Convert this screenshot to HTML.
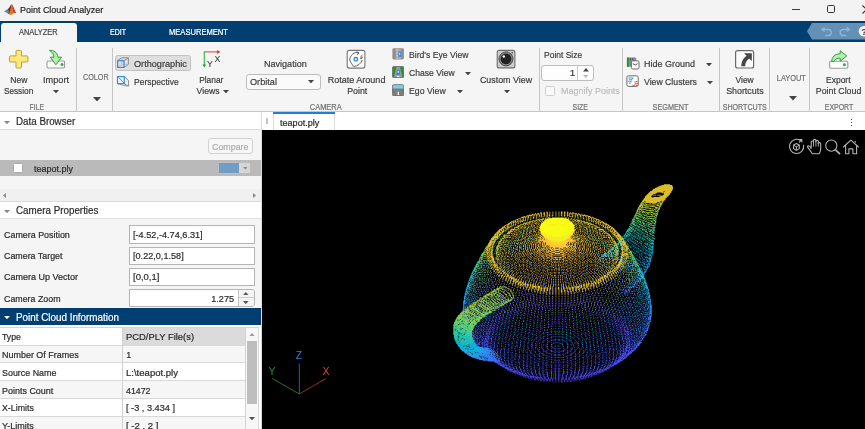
<!DOCTYPE html>
<html><head><meta charset="utf-8"><title>Point Cloud Analyzer</title>
<style>
html,body{margin:0;padding:0;background:#f5f5f5;}
body{width:865px;height:429px;position:relative;overflow:hidden;font-family:"Liberation Sans",sans-serif;}
.t{position:absolute;white-space:pre;line-height:20px;-webkit-text-stroke:0.2px currentColor;}
.pl{mix-blend-mode:plus-lighter}
.r{position:absolute;box-sizing:border-box;display:block;}
</style></head><body>
<div class="r" style="left:0.00px;top:0.00px;width:865.00px;height:21.00px;background:#f3f3f3;"></div>
<svg class="r" style="left:3.50px;top:3.90px" width="12.6" height="11.8" viewBox="0 0 12.6 11.8"><path d="M0 7.2 L3.3 5.6 L5.4 7.6 L3.6 9.2Z" fill="#3f8fd6"/>
<path d="M3.3 5.6 C5.2 4.6 6.3 1.2 7.6 0.2 L6.6 8.4 L5.0 9.9 L3.6 9.2 L5.4 7.6Z" fill="#7a2a1c"/>
<path d="M7.6 0.2 C8.8 0.4 10.4 6.5 12.4 9.4 C10.8 8.6 9.8 8.9 8.6 10.0 C7.6 10.9 6.4 11.9 5.0 9.9 C6.4 8.6 6.9 3.0 7.6 0.2Z" fill="#e8742a"/>
<path d="M7.6 0.2 C8.8 0.4 10.4 6.5 12.4 9.4 C10.9 8.4 9.9 8.4 9.2 8.9 C8.9 5.5 8.2 2.0 7.6 0.2Z" fill="#c8402a"/>
<path d="M5.0 9.9 C6.0 11.6 7.2 11.2 8.2 10.3 C7.2 10.5 6.2 10.2 5.6 9.3Z" fill="#f5a623"/></svg>
<span class="t" style="left:19.90px;top:0px;font-size:9.6px;color:#222;transform:scaleX(0.9336);transform-origin:0 50%;">Point Cloud Analyzer</span>
<div class="r" style="left:792.00px;top:9.00px;width:8.00px;height:1.00px;background:#3a3a3a;"></div>
<div class="r" style="left:826.90px;top:5.40px;width:8.00px;height:7.80px;border:1.1px solid #333;border-radius:1.6px;"></div>
<svg class="r" style="left:862.40px;top:5.20px" width="9" height="9" viewBox="0 0 9 9"><path d="M0.5 0.5L8.5 8.5M8.5 0.5L0.5 8.5" stroke="#333" stroke-width="1.1"/></svg>
<div class="r" style="left:0.00px;top:20.50px;width:865.00px;height:21.40px;background:#013f73;"></div>
<div class="r" style="left:1.00px;top:23.00px;width:75.50px;height:20.00px;background:#f5f5f5;border-radius:3px 3px 0 0;"></div>
<span class="t" style="left:18.90px;top:22px;font-size:8.3px;color:#444;transform:scaleX(0.8911);transform-origin:0 50%;">ANALYZER</span>
<span class="t" style="left:110.00px;top:22px;font-size:8.3px;color:#fff;transform:scaleX(0.8463);transform-origin:0 50%;">EDIT</span>
<span class="t" style="left:168.60px;top:22px;font-size:8.3px;color:#fff;transform:scaleX(0.9139);transform-origin:0 50%;">MEASUREMENT</span>
<svg class="r" style="left:807.00px;top:23.30px" width="58" height="16.6" viewBox="0 0 58 16.6"><path d="M5 0H58V16.6H5L0 8.3Z" fill="#6590b6"/><g fill="none" stroke="#8fb2d1" stroke-width="1.5"><path d="M16.4 6.4H21.2A3 3 0 0 1 21.2 12.4H18.2"/><path d="M41 6.4H36.2A3 3 0 0 0 36.2 12.4H39.2"/></g><path d="M13.8 6.4L17.6 3.6V9.2Z" fill="#8fb2d1"/><path d="M43.6 6.4L39.8 3.6V9.2Z" fill="#8fb2d1"/><circle cx="57" cy="8.3" r="5.3" fill="#f1f5f9"/><text x="54.2" y="11.6" font-size="9.5" font-weight="bold" fill="#3a3a3a" font-family="Liberation Sans">?</text></svg>
<div class="r" style="left:0.00px;top:41.90px;width:865.00px;height:69.60px;background:#f5f5f5;"></div>
<div class="r" style="left:0.00px;top:110.70px;width:865.00px;height:2.10px;background:#c6c6c6;"></div>
<div class="r" style="left:76.00px;top:48.00px;width:1.10px;height:63.00px;background:#c6c6c6;"></div>
<div class="r" style="left:112.00px;top:48.00px;width:1.10px;height:63.00px;background:#c6c6c6;"></div>
<div class="r" style="left:539.10px;top:48.00px;width:1.10px;height:63.00px;background:#c6c6c6;"></div>
<div class="r" style="left:621.90px;top:48.00px;width:1.10px;height:63.00px;background:#c6c6c6;"></div>
<div class="r" style="left:719.30px;top:48.00px;width:1.10px;height:63.00px;background:#c6c6c6;"></div>
<div class="r" style="left:769.40px;top:48.00px;width:1.10px;height:63.00px;background:#c6c6c6;"></div>
<div class="r" style="left:809.00px;top:48.00px;width:1.10px;height:63.00px;background:#c6c6c6;"></div>
<span class="t" style="left:8.70px;top:70px;font-size:9.9px;color:#3a3a3a;transform:scaleX(0.8634);transform-origin:50% 50%;">New</span>
<span class="t" style="left:1.29px;top:81px;font-size:9.9px;color:#3a3a3a;transform:scaleX(0.8348);transform-origin:50% 50%;">Session</span>
<span class="t" style="left:41.87px;top:70px;font-size:9.9px;color:#3a3a3a;transform:scaleX(0.9303);transform-origin:50% 50%;">Import</span>
<svg class="r" style="left:52.70px;top:89.50px" width="6" height="3.4" viewBox="0 0 6 3.4"><path d="M0 0H6 L3 3.4Z" fill="#444"/></svg>
<span class="t" style="left:28.24px;top:97px;font-size:8.3px;color:#707070;transform:scaleX(0.8159);transform-origin:50% 50%;">FILE</span>
<span class="t" style="left:81.04px;top:67px;font-size:8.3px;color:#707070;transform:scaleX(0.8707);transform-origin:50% 50%;">COLOR</span>
<svg class="r" style="left:93.40px;top:96.50px" width="8" height="4.6" viewBox="0 0 8 4.6"><path d="M0 0H8 L4 4.6Z" fill="#444"/></svg>
<div class="r" style="left:115.00px;top:55.30px;width:75.60px;height:16.00px;background:#dedede;border:1px solid #c2c2c2;border-radius:2.5px;"></div>
<span class="t" style="left:133.60px;top:54px;font-size:9.9px;color:#3a3a3a;transform:scaleX(0.9262);transform-origin:0 50%;">Orthographic</span>
<span class="t" style="left:133.60px;top:72px;font-size:9.9px;color:#3a3a3a;transform:scaleX(0.8662);transform-origin:0 50%;">Perspective</span>
<span class="t" style="left:197.09px;top:70px;font-size:9.9px;color:#3a3a3a;transform:scaleX(0.8492);transform-origin:50% 50%;">Planar</span>
<span class="t" style="left:194.79px;top:81px;font-size:9.9px;color:#3a3a3a;transform:scaleX(0.8769);transform-origin:50% 50%;">Views</span>
<svg class="r" style="left:222.60px;top:89.70px" width="6" height="3.4" viewBox="0 0 6 3.4"><path d="M0 0H6 L3 3.4Z" fill="#444"/></svg>
<span class="t" style="left:262.01px;top:54px;font-size:9.9px;color:#3a3a3a;transform:scaleX(0.9171);transform-origin:50% 50%;">Navigation</span>
<div class="r" style="left:246.40px;top:73.60px;width:75.00px;height:16.60px;background:#fafafa;border:1px solid #bdbdbd;border-radius:3px;"></div>
<span class="t" style="left:250.00px;top:72px;font-size:9.9px;color:#3a3a3a;transform:scaleX(0.9260);transform-origin:0 50%;">Orbital</span>
<svg class="r" style="left:308.20px;top:79.90px" width="6" height="3.4" viewBox="0 0 6 3.4"><path d="M0 0H6 L3 3.4Z" fill="#444"/></svg>
<span class="t" style="left:324.65px;top:70px;font-size:9.9px;color:#3a3a3a;transform:scaleX(0.9132);transform-origin:50% 50%;">Rotate Around</span>
<span class="t" style="left:346.32px;top:81px;font-size:9.9px;color:#3a3a3a;transform:scaleX(0.8908);transform-origin:50% 50%;">Point</span>
<span class="t" style="left:408.90px;top:45px;font-size:9.9px;color:#3a3a3a;transform:scaleX(0.8743);transform-origin:0 50%;">Bird's Eye View</span>
<span class="t" style="left:408.90px;top:63px;font-size:9.9px;color:#3a3a3a;transform:scaleX(0.8681);transform-origin:0 50%;">Chase View</span>
<svg class="r" style="left:465.00px;top:71.70px" width="6" height="3.4" viewBox="0 0 6 3.4"><path d="M0 0H6 L3 3.4Z" fill="#444"/></svg>
<span class="t" style="left:408.90px;top:81px;font-size:9.9px;color:#3a3a3a;transform:scaleX(0.8837);transform-origin:0 50%;">Ego View</span>
<svg class="r" style="left:456.70px;top:89.50px" width="6" height="3.4" viewBox="0 0 6 3.4"><path d="M0 0H6 L3 3.4Z" fill="#444"/></svg>
<span class="t" style="left:477.23px;top:70px;font-size:9.9px;color:#3a3a3a;transform:scaleX(0.8979);transform-origin:50% 50%;">Custom View</span>
<svg class="r" style="left:503.50px;top:89.50px" width="6" height="3.4" viewBox="0 0 6 3.4"><path d="M0 0H6 L3 3.4Z" fill="#444"/></svg>
<span class="t" style="left:308.24px;top:97px;font-size:8.3px;color:#707070;transform:scaleX(0.9011);transform-origin:50% 50%;">CAMERA</span>
<span class="t" style="left:544.30px;top:45px;font-size:9.9px;color:#3a3a3a;transform:scaleX(0.8593);transform-origin:0 50%;">Point Size</span>
<div class="r" style="left:541.40px;top:64.60px;width:53.00px;height:16.20px;background:#fdfdfd;border:1px solid #bdbdbd;border-radius:3px;"></div>
<div class="r" style="left:577.00px;top:65.20px;width:1.00px;height:15.00px;background:#c9c9c9;"></div>
<span class="t" style="left:569.79px;top:63px;font-size:9.9px;color:#3a3a3a;">1</span>
<svg class="r" style="left:582.50px;top:68.20px" width="6" height="3.4" viewBox="0 0 6 3.4"><path d="M0 3.4L3 0L6 3.4Z" fill="#444"/></svg>
<svg class="r" style="left:582.80px;top:74.60px" width="5.4" height="3" viewBox="0 0 5.4 3"><path d="M0 0L2.7 3L5.4 0Z" fill="#bdbdbd"/></svg>
<div class="r" style="left:545.30px;top:86.20px;width:9.60px;height:9.60px;background:#fafafa;border:1px solid #cfcfcf;border-radius:1.5px;"></div>
<span class="t" style="left:560.50px;top:81px;font-size:9.9px;color:#bcbcbc;transform:scaleX(0.9087);transform-origin:0 50%;">Magnify Points</span>
<span class="t" style="left:571.48px;top:97px;font-size:8.3px;color:#707070;transform:scaleX(0.8294);transform-origin:50% 50%;">SIZE</span>
<span class="t" style="left:643.60px;top:54px;font-size:9.9px;color:#3a3a3a;transform:scaleX(0.9104);transform-origin:0 50%;">Hide Ground</span>
<svg class="r" style="left:705.60px;top:62.90px" width="6" height="3.4" viewBox="0 0 6 3.4"><path d="M0 0H6 L3 3.4Z" fill="#444"/></svg>
<span class="t" style="left:643.60px;top:72px;font-size:9.9px;color:#3a3a3a;transform:scaleX(0.8801);transform-origin:0 50%;">View Clusters</span>
<svg class="r" style="left:707.20px;top:80.90px" width="6" height="3.4" viewBox="0 0 6 3.4"><path d="M0 0H6 L3 3.4Z" fill="#444"/></svg>
<span class="t" style="left:649.98px;top:97px;font-size:8.3px;color:#707070;transform:scaleX(0.8771);transform-origin:50% 50%;">SEGMENT</span>
<span class="t" style="left:733.96px;top:70px;font-size:9.9px;color:#3a3a3a;transform:scaleX(0.8553);transform-origin:50% 50%;">View</span>
<span class="t" style="left:723.89px;top:81px;font-size:9.9px;color:#3a3a3a;transform:scaleX(0.8968);transform-origin:50% 50%;">Shortcuts</span>
<span class="t" style="left:719.05px;top:97px;font-size:8.3px;color:#707070;transform:scaleX(0.8584);transform-origin:50% 50%;">SHORTCUTS</span>
<span class="t" style="left:774.90px;top:68px;font-size:8.3px;color:#707070;transform:scaleX(0.8898);transform-origin:50% 50%;">LAYOUT</span>
<svg class="r" style="left:788.60px;top:96.30px" width="8" height="4.6" viewBox="0 0 8 4.6"><path d="M0 0H8 L4 4.6Z" fill="#444"/></svg>
<span class="t" style="left:824.39px;top:70px;font-size:9.9px;color:#3a3a3a;transform:scaleX(0.8598);transform-origin:50% 50%;">Export</span>
<span class="t" style="left:813.31px;top:81px;font-size:9.9px;color:#3a3a3a;transform:scaleX(0.8910);transform-origin:50% 50%;">Point Cloud</span>
<span class="t" style="left:821.71px;top:97px;font-size:8.3px;color:#707070;transform:scaleX(0.8388);transform-origin:50% 50%;">EXPORT</span>
<svg class="r" style="left:8.00px;top:49.00px" width="22" height="21" viewBox="0 0 22 21"><g transform="translate(-8 -49)"><path d="M16.9 50.4H20.6Q21.5 50.4 21.5 51.3V55.9H27Q27.9 55.9 27.9 56.8V61.1Q27.9 62 27 62H21.5V67.1Q21.5 68 20.6 68H16.9Q16 68 16 67.1V62H10.4Q9.5 62 9.5 61.1V56.8Q9.5 55.9 10.4 55.9H16V51.3Q16 50.4 16.9 50.4Z" fill="#fbe97c" stroke="#bd9f3a" stroke-width="1"/></g></svg>
<svg class="r" style="left:45.00px;top:48.00px" width="22" height="22" viewBox="0 0 22 22"><g transform="translate(-45 -48)"><rect x="47" y="61" width="17.6" height="7" rx="1.2" fill="#fff" stroke="#9a9a9a" stroke-width="1.1"/><path d="M49.4 50.4C53.6 50.2 57.6 52.2 57.9 57.2L61.6 57.2L55.9 64.8L50.3 57.2L54 57.2C53.8 54.2 52.2 52 49.4 50.4Z" fill="#b4eeb0" stroke="#27a23a" stroke-width="1" stroke-linejoin="round"/><circle cx="62" cy="64.6" r="1.25" fill="#35b04a" stroke="#1f8e33" stroke-width=".5"/></g></svg>
<svg class="r" style="left:116.00px;top:56.00px" width="14" height="14" viewBox="0 0 14 14"><g transform="translate(-116 -56)"><g fill="none" stroke-width="1"><path d="M117.6 60.7L121.8 57.8H128.4V64.4L124 67.4M128.4 57.8L124 60.7" stroke="#8c8c8c"/><path d="M117.6 67.4L121.6 64.6M121.8 58.2V64.4H128" stroke="#b5b5b5" stroke-width=".7"/><rect x="117.6" y="60.7" width="6.4" height="6.7" stroke="#2e8ddf" stroke-width="1.15"/></g></g></svg>
<svg class="r" style="left:116.00px;top:74.00px" width="14" height="14" viewBox="0 0 14 14"><g transform="translate(-116 -74)"><g fill="none" stroke-width="1"><path d="M124.2 76.6L128.6 80.6V86L124.2 83.8" stroke="#8c8c8c"/><path d="M117.6 83.6L124.8 85.8L128.6 86" stroke="#8c8c8c" stroke-width=".9"/><rect x="117.5" y="76.6" width="6.8" height="7" stroke="#2e8ddf" stroke-width="1.15"/><path d="M118.6 77.4L125.2 84.2" stroke="#2e8ddf" stroke-width=".9"/></g></g></svg>
<svg class="r" style="left:201.00px;top:48.00px" width="22" height="22" viewBox="0 0 22 22"><g transform="translate(-201 -48)"><path d="M204.3 51.9H218" stroke="#f0483a" stroke-width="1.1"/><path d="M217.2 50L220.3 51.9L217.2 53.8Z" fill="#e8281c"/><path d="M204.3 51.4V65" stroke="#2db83a" stroke-width="1.1"/><path d="M202.4 64.4L204.3 67.6L206.2 64.4Z" fill="#1fa82c"/><g font-family="Liberation Sans" font-size="8.8" fill="#2a2a2a"><text x="214.5" y="61.8">X</text><text x="206.9" y="67.4">Y</text></g></g></svg>
<svg class="r" style="left:346.00px;top:49.00px" width="20" height="20" viewBox="0 0 20 20"><g transform="translate(-346 -49)"><rect x="347.2" y="50.4" width="17.7" height="17.7" rx="2" fill="#fdfdfd" stroke="#777" stroke-width="1.1"/><g fill="none" stroke="#505050" stroke-width=".9" stroke-linecap="round"><path d="M353.2 53.6C354.8 52.4 357 52.2 358.8 53"/><path d="M357 51.8L359 53.1L357.2 54.6"/><path d="M352.6 54.2C350.6 55.8 349.2 58.4 350 60.6C350.8 62.8 352.2 64 353.2 66.2"/><path d="M354.2 66.4C357.6 66.2 361.2 63.6 362 60.4"/><path d="M362.2 55C361 56 360.6 57.4 361 58.8"/><path d="M362.6 57.2C361.8 57.4 361.3 57.9 361.1 58.7"/></g><circle cx="355.8" cy="59.3" r="1.8" fill="#fff" stroke="#2f86d8" stroke-width="1.3"/></g></svg>
<svg class="r" style="left:392.00px;top:48.00px" width="12.4" height="12" viewBox="0 0 12.4 12"><g transform="translate(-392 -48)"><rect x="392.4" y="48.2" width="11.5" height="11.2" rx="1.4" fill="#8e8e8e"/><rect x="395.6" y="48.2" width="5.4" height="11.2" fill="#a9a9a9"/><path d="M397 49V58.8" stroke="#eee" stroke-width=".8" stroke-dasharray="1.6 1.4"/><rect x="398.5" y="51.4" width="2.5" height="5.4" rx=".8" fill="#2f7fe0"/><rect x="399.2" y="52.6" width="1.1" height="2.6" fill="#cfe4fa"/></g></svg>
<svg class="r" style="left:392.00px;top:66.00px" width="12.4" height="12" viewBox="0 0 12.4 12"><g transform="translate(-392 -66)"><rect x="392.4" y="66.5" width="11.5" height="11.2" rx="1.4" fill="#2f8f2f"/><path d="M396.6 66.5H399.8L402.6 77.7H393.8Z" fill="#9a9a9a"/><rect x="396.7" y="70" width="3" height="5.4" rx="1" fill="#2f7fe0"/><rect x="397.5" y="71" width="1.4" height="1.8" fill="#cfe4fa"/><rect x="397" y="75.6" width="2.4" height="1.6" fill="#f3f3f3"/><rect x="392.4" y="66.5" width="11.5" height="11.2" rx="1.4" fill="none" stroke="#666" stroke-width=".7"/></g></svg>
<svg class="r" style="left:392.00px;top:84.00px" width="12.4" height="12.4" viewBox="0 0 12.4 12.4"><g transform="translate(-392 -84)"><rect x="392.4" y="84.7" width="11.5" height="11.3" rx="1.4" fill="#7d7d7d"/><path d="M392.4 86.1Q392.4 84.7 393.8 84.7H402.5Q403.9 84.7 403.9 86.1V88.8H392.4Z" fill="#84c9f2"/><path d="M392.4 88.8H403.9V93L401 88.9H395.4L392.4 93Z" fill="#3f9f3f"/><rect x="397.6" y="91.8" width="1.3" height="3.4" fill="#f3f3f3"/><rect x="392.4" y="84.7" width="11.5" height="11.3" rx="1.4" fill="none" stroke="#666" stroke-width=".7"/></g></svg>
<svg class="r" style="left:496.00px;top:49.00px" width="20" height="20" viewBox="0 0 20 20"><g transform="translate(-496 -49)"><rect x="497.2" y="50.4" width="17.7" height="17.5" rx="2" fill="#cdcdcd" stroke="#6e6e6e" stroke-width="1.1"/><circle cx="506" cy="58.9" r="7" fill="#8c8c8c" stroke="#4a4a4a" stroke-width="1"/><circle cx="506" cy="58.9" r="5.4" fill="#222"/><circle cx="503.8" cy="56.6" r="1.25" fill="#fff"/><circle cx="512.2" cy="52.8" r=".85" fill="#555"/></g></svg>
<svg class="r" style="left:626.00px;top:56.00px" width="14" height="14" viewBox="0 0 14 14"><g transform="translate(-626 -56)"><rect x="626.9" y="57.5" width="9.3" height="9.3" rx="1" fill="#8a8a8a"/><rect x="626.9" y="57.5" width="2" height="9.3" fill="#2f8f45"/><path d="M630.4 57.8V60.4M632.6 57.8V60.4" stroke="#555" stroke-width=".8"/><rect x="631.4" y="60.8" width="7.6" height="8.2" rx="1.4" fill="#fafafa" stroke="#6a6a6a" stroke-width="1"/><path d="M632.8 63.6Q635.2 66.6 637.6 63.6" fill="none" stroke="#555" stroke-width="1"/></g></svg>
<svg class="r" style="left:626.00px;top:75.00px" width="14" height="13" viewBox="0 0 14 13"><g transform="translate(-626 -75)"><rect x="626.9" y="75.8" width="11.3" height="10.6" rx="1.6" fill="#fdfdfd" stroke="#6a6a6a" stroke-width="1"/><g fill="#2f7fe0"><rect x="628.6" y="77.4" width="1.25" height="1.25"/><rect x="630.4" y="77.2" width="1.25" height="1.25"/><rect x="632" y="77.6" width="1.25" height="1.25"/><rect x="629.4" y="79" width="1.25" height="1.25"/><rect x="631" y="79.2" width="1.25" height="1.25"/><rect x="628.4" y="80.6" width="1.25" height="1.25"/><rect x="630.2" y="81" width="1.25" height="1.25"/><rect x="629.2" y="82.6" width="1.25" height="1.25"/></g><g fill="#e8562a"><rect x="634.4" y="81.4" width="1.25" height="1.25"/><rect x="636" y="81" width="1.25" height="1.25"/><rect x="635.2" y="83" width="1.25" height="1.25"/><rect x="636.6" y="83" width="1.25" height="1.25"/><rect x="634" y="84.4" width="1.25" height="1.25"/><rect x="635.8" y="84.6" width="1.25" height="1.25"/><rect x="632.4" y="84.8" width="1.25" height="1.25"/></g></g></svg>
<svg class="r" style="left:734.00px;top:49.00px" width="21" height="20" viewBox="0 0 21 20"><g transform="translate(-734 -49)"><rect x="735.6" y="50.6" width="18" height="17.4" rx="2" fill="#fbfbfb" stroke="#6a6a6a" stroke-width="1.2"/><path d="M744 53.2H751.8V61L749.2 58.4C746.6 60.2 745.2 62.6 745.2 66.2H741.2C741.4 61.6 743.2 58 746.6 55.8Z" fill="#454545"/></g></svg>
<svg class="r" style="left:828.00px;top:49.00px" width="22" height="21" viewBox="0 0 22 21"><g transform="translate(-828 -49)"><rect x="829.6" y="61.2" width="18.2" height="7" rx="1.2" fill="#fff" stroke="#9a9a9a" stroke-width="1.1"/><path d="M831.8 61.6C831.6 57 835 53.8 840.2 53.8V50.8L846.8 56L840.2 61.2V58.2C837.4 58 835 59 833.6 61.6Z" fill="#b4eeb0" stroke="#27a23a" stroke-width="1" stroke-linejoin="round"/><circle cx="844.4" cy="64.7" r="1.25" fill="#35b04a" stroke="#1f8e33" stroke-width=".5"/></g></svg>
<div class="r" style="left:0.00px;top:112.20px;width:261.00px;height:317.00px;background:#f5f5f5;"></div>
<div class="r" style="left:261.00px;top:112.20px;width:1.00px;height:317.00px;background:#dcdcdc;"></div>
<div class="r" style="left:0.00px;top:112.20px;width:261.00px;height:17.20px;background:#ffffff;"></div>
<div class="r" style="left:0.00px;top:129.30px;width:261.00px;height:1.00px;background:#dadada;"></div>
<svg class="r" style="left:4.10px;top:120.90px" width="6" height="3.2" viewBox="0 0 6 3.2"><path d="M0 0H6 L3 3.2Z" fill="#868686"/></svg>
<span class="t" style="left:16.20px;top:112px;font-size:10.4px;color:#2a2a2a;transform:scaleX(0.9413);transform-origin:0 50%;">Data Browser</span>
<div class="r" style="left:208.20px;top:138.40px;width:44.60px;height:16.00px;background:#f7f7f7;border:1px solid #d2d2d2;border-radius:3px;"></div>
<span class="t" style="left:212.30px;top:137px;font-size:8.9px;color:#ababab;transform:scaleX(0.9972);transform-origin:50% 50%;">Compare</span>
<div class="r" style="left:0.00px;top:160.40px;width:261.00px;height:15.40px;background:#bababa;"></div>
<div class="r" style="left:12.50px;top:162.60px;width:10.40px;height:10.40px;background:#ffffff;border:1px solid #a9a9a9;border-radius:1.5px;"></div>
<span class="t" style="left:34.30px;top:159px;font-size:9.0px;color:#2a2a2a;transform:scaleX(0.9994);transform-origin:0 50%;">teapot.ply</span>
<div class="r" style="left:217.60px;top:161.80px;width:33.60px;height:12.60px;background:#d6d6d6;border:1px solid #bdbdbd;border-radius:2px;"></div>
<div class="r" style="left:218.60px;top:162.80px;width:20.40px;height:10.60px;background:#6f9dc6;"></div>
<svg class="r" style="left:242.60px;top:167.10px" width="4.6" height="2.6" viewBox="0 0 4.6 2.6"><path d="M0 0H4.6 L2.3 2.6Z" fill="#8a8a8a"/></svg>
<div class="r" style="left:0.00px;top:189.00px;width:261.00px;height:12.60px;background:#f0f0f0;"></div>
<svg class="r" style="left:3.00px;top:192.60px" width="3" height="5" viewBox="0 0 3 5"><path d="M3 0L0 2.5L3 5Z" fill="#8a8a8a"/></svg>
<svg class="r" style="left:252.60px;top:192.60px" width="3" height="5" viewBox="0 0 3 5"><path d="M0 0L3 2.5L0 5Z" fill="#8a8a8a"/></svg>
<div class="r" style="left:0.00px;top:201.60px;width:261.00px;height:16.80px;background:#ffffff;"></div>
<div class="r" style="left:0.00px;top:201.00px;width:261.00px;height:1.00px;background:#dadada;"></div>
<div class="r" style="left:0.00px;top:218.00px;width:261.00px;height:1.00px;background:#e2e2e2;"></div>
<svg class="r" style="left:4.10px;top:209.60px" width="6" height="3.2" viewBox="0 0 6 3.2"><path d="M0 0H6 L3 3.2Z" fill="#868686"/></svg>
<span class="t" style="left:16.20px;top:201px;font-size:10.4px;color:#2a2a2a;transform:scaleX(0.9453);transform-origin:0 50%;">Camera Properties</span>
<span class="t" style="left:3.90px;top:225px;font-size:9.0px;color:#2a2a2a;transform:scaleX(0.9891);transform-origin:0 50%;">Camera Position</span>
<div class="r" style="left:129.00px;top:225.20px;width:126.20px;height:18.40px;background:#ffffff;border:1px solid #b4b4b4;"></div>
<span class="t" style="left:133.30px;top:225px;font-size:9.6px;color:#2a2a2a;transform:scaleX(0.9534);transform-origin:0 50%;">[-4.52,-4.74,6.31]</span>
<span class="t" style="left:3.90px;top:246px;font-size:9.0px;color:#2a2a2a;transform:scaleX(0.9856);transform-origin:0 50%;">Camera Target</span>
<div class="r" style="left:129.00px;top:246.50px;width:126.20px;height:18.40px;background:#ffffff;border:1px solid #b4b4b4;"></div>
<span class="t" style="left:133.30px;top:246px;font-size:9.6px;color:#2a2a2a;transform:scaleX(0.9499);transform-origin:0 50%;">[0.22,0,1.58]</span>
<span class="t" style="left:3.90px;top:267px;font-size:9.0px;color:#2a2a2a;transform:scaleX(0.9996);transform-origin:0 50%;">Camera Up Vector</span>
<div class="r" style="left:129.00px;top:267.50px;width:126.20px;height:18.40px;background:#ffffff;border:1px solid #b4b4b4;"></div>
<span class="t" style="left:133.30px;top:267px;font-size:9.6px;color:#2a2a2a;transform:scaleX(0.9856);transform-origin:0 50%;">[0,0,1]</span>
<span class="t" style="left:3.90px;top:289px;font-size:9.0px;color:#2a2a2a;transform:scaleX(0.9824);transform-origin:0 50%;">Camera Zoom</span>
<div class="r" style="left:129.00px;top:288.80px;width:126.20px;height:18.40px;background:#ffffff;border:1px solid #b4b4b4;border-radius:0 3px 3px 0;"></div>
<span class="t" style="left:210.18px;top:289px;font-size:9.6px;color:#2a2a2a;transform:scaleX(0.9492);transform-origin:100% 50%;">1.275</span>
<div class="r" style="left:237.80px;top:289.60px;width:16.60px;height:16.80px;background:#f4f4f4;border-left:1px solid #c4c4c4;border-radius:0 2px 2px 0;"></div>
<div class="r" style="left:238.60px;top:297.20px;width:15.80px;height:1.00px;background:#cdcdcd;"></div>
<svg class="r" style="left:243.40px;top:291.60px" width="5.6" height="3.2" viewBox="0 0 5.6 3.2"><path d="M0 3.2L2.8 0L5.6 3.2Z" fill="#555"/></svg>
<svg class="r" style="left:243.40px;top:300.80px" width="5.6" height="3.2" viewBox="0 0 5.6 3.2"><path d="M0 0L2.8 3.2L5.6 0Z" fill="#555"/></svg>
<div class="r" style="left:0.00px;top:307.60px;width:261.00px;height:17.60px;background:#013f73;"></div>
<svg class="r" style="left:3.90px;top:315.60px" width="6" height="3.2" viewBox="0 0 6 3.2"><path d="M0 0H6 L3 3.2Z" fill="#ffffff"/></svg>
<span class="t" style="left:16.10px;top:308px;font-size:10.4px;color:#ffffff;transform:scaleX(0.9478);transform-origin:0 50%;">Point Cloud Information</span>
<div class="r" style="left:0.00px;top:325.20px;width:261.00px;height:104.00px;background:#ffffff;"></div>
<div class="r" style="left:122.00px;top:327.40px;width:123.40px;height:17.74px;background:#dbdbdb;"></div>
<div class="r" style="left:0.00px;top:327.00px;width:245.40px;height:1.00px;background:#d9d9d9;"></div>
<span class="t" style="left:2.00px;top:327px;font-size:9.0px;color:#2a2a2a;transform:scaleX(0.9636);transform-origin:0 50%;">Type</span>
<span class="t" style="left:126.30px;top:327px;font-size:9.0px;color:#2a2a2a;transform:scaleX(1.0433);transform-origin:0 50%;">PCD/PLY File(s)</span>
<div class="r" style="left:0.00px;top:345.14px;width:245.40px;height:17.74px;background:#f6f6f6;"></div>
<div class="r" style="left:0.00px;top:344.74px;width:245.40px;height:1.00px;background:#d9d9d9;"></div>
<span class="t" style="left:2.00px;top:345px;font-size:9.0px;color:#2a2a2a;transform:scaleX(0.9960);transform-origin:0 50%;">Number Of Frames</span>
<span class="t" style="left:126.30px;top:345px;font-size:9.0px;color:#2a2a2a;">1</span>
<div class="r" style="left:0.00px;top:362.48px;width:245.40px;height:1.00px;background:#d9d9d9;"></div>
<span class="t" style="left:2.00px;top:363px;font-size:9.0px;color:#2a2a2a;transform:scaleX(0.9887);transform-origin:0 50%;">Source Name</span>
<span class="t" style="left:126.30px;top:363px;font-size:9.0px;color:#2a2a2a;transform:scaleX(1.0606);transform-origin:0 50%;">L:\teapot.ply</span>
<div class="r" style="left:0.00px;top:380.62px;width:245.40px;height:17.74px;background:#f6f6f6;"></div>
<div class="r" style="left:0.00px;top:380.22px;width:245.40px;height:1.00px;background:#d9d9d9;"></div>
<span class="t" style="left:2.00px;top:381px;font-size:9.0px;color:#2a2a2a;transform:scaleX(0.9956);transform-origin:0 50%;">Points Count</span>
<span class="t" style="left:126.30px;top:381px;font-size:9.0px;color:#2a2a2a;transform:scaleX(0.9791);transform-origin:0 50%;">41472</span>
<div class="r" style="left:0.00px;top:397.96px;width:245.40px;height:1.00px;background:#d9d9d9;"></div>
<span class="t" style="left:2.00px;top:398px;font-size:9.0px;color:#2a2a2a;transform:scaleX(0.9784);transform-origin:0 50%;">X-Limits</span>
<span class="t" style="left:126.30px;top:398px;font-size:9.0px;color:#2a2a2a;transform:scaleX(1.0203);transform-origin:0 50%;">[ -3 , 3.434 ]</span>
<div class="r" style="left:0.00px;top:416.10px;width:245.40px;height:17.74px;background:#f6f6f6;"></div>
<div class="r" style="left:0.00px;top:415.70px;width:245.40px;height:1.00px;background:#d9d9d9;"></div>
<span class="t" style="left:2.00px;top:416px;font-size:9.0px;color:#2a2a2a;transform:scaleX(1.0039);transform-origin:0 50%;">Y-Limits</span>
<span class="t" style="left:126.30px;top:416px;font-size:9.0px;color:#2a2a2a;transform:scaleX(1.0653);transform-origin:0 50%;">[ -2 , 2 ]</span>
<div class="r" style="left:0.00px;top:327.00px;width:258.60px;height:1.00px;background:#d4d4d4;"></div>
<div class="r" style="left:121.80px;top:327.00px;width:1.00px;height:103.00px;background:#d2d2d2;"></div>
<div class="r" style="left:245.20px;top:327.00px;width:1.00px;height:103.00px;background:#d2d2d2;"></div>
<div class="r" style="left:258.00px;top:327.00px;width:1.00px;height:103.00px;background:#d8d8d8;"></div>
<div class="r" style="left:246.20px;top:328.00px;width:11.80px;height:102.00px;background:#f7f7f7;"></div>
<div class="r" style="left:247.20px;top:340.60px;width:10.00px;height:63.20px;background:#bebebe;"></div>
<svg class="r" style="left:248.80px;top:332.60px" width="6" height="3.4" viewBox="0 0 6 3.4"><path d="M0 3.4L3 0L6 3.4Z" fill="#9c9c9c"/></svg>
<svg class="r" style="left:248.80px;top:416.60px" width="6" height="3.4" viewBox="0 0 6 3.4"><path d="M0 0L3 3.4L6 0Z" fill="#505050"/></svg>
<div class="r" style="left:262.00px;top:112.20px;width:603.00px;height:18.00px;background:#ffffff;"></div>
<div class="r" style="left:273.00px;top:112.40px;width:61.60px;height:2.00px;background:#1f7fdc;"></div>
<div class="r" style="left:272.60px;top:114.00px;width:1.00px;height:16.00px;background:#dcdcdc;"></div>
<div class="r" style="left:334.20px;top:114.00px;width:1.00px;height:16.00px;background:#dcdcdc;"></div>
<div class="r" style="left:266.20px;top:118.40px;width:2.20px;height:5.60px;background:#c4c4c4;"></div>
<span class="t" style="left:279.60px;top:113px;font-size:9.1px;color:#2a2a2a;transform:scaleX(0.9985);transform-origin:0 50%;">teapot.ply</span>
<div class="r" style="left:851.20px;top:118.60px;width:1.30px;height:1.30px;background:#444;"></div>
<div class="r" style="left:851.20px;top:121.60px;width:1.30px;height:1.30px;background:#444;"></div>
<div class="r" style="left:851.20px;top:124.60px;width:1.30px;height:1.30px;background:#444;"></div>
<div class="r" style="left:262.00px;top:129.80px;width:603.00px;height:300.00px;background:#000;"></div>
<svg class="r" style="left:262px;top:129.8px" width="603" height="300" viewBox="0 0 795.96 396"><rect width="100%" height="100%" fill="#000"/><g style="isolation:isolate" transform="translate(-0.5 -0.5)"><path class="pl" fill="#3e26a8" d="M377 236h1v1h-1m4-1h1v1h-1m3-1h1v1h-1m4-1h1v1h-1m3-1h1v1h-1m4-1h1v1h-1m3-1h1v1h-1m4-1h1v1h-1m-28 0h1v1h-1m7-1h1v1h-1m4-1h1v1h-1m3-1h1v1h-1m3-1h1v1h-1m4-1h1v1h-1m3-1h1v1h-1m7-1h1v1h-1m4-1h1v1h-1m-45 0h1v1h-1m3-1h1v1h-1m11-1h1v1h-1m24-1h1v1h-1m10-1h1v1h-1m4-1h1v1h-1m-56 0h1v1h-1m8-1h1v1h-1m3-1h1v1h-1m7-1h1v1h-1m3-1h1v1h-1m4-1h1v1h-1m3-1h1v1h-1m3-1h1v1h-1m4-1h1v1h-1m3-1h1v1h-1m3-1h1v1h-1m7-1h1v1h-1m4-1h1v1h-1m-55 0h1v1h-1m4-1h1v1h-1m3-1h1v1h-1m8-1h1v1h-1m3-1h1v1h-1m13-1h1v1h-1m3-1h1v1h-1m14-1h1v1h-1m3-1h1v1h-1m7-1h1v1h-1m3-1h1v1h-1m4-1h1v1h-1m-68 0h1v1h-1m4-1h1v1h-1m7-1h1v1h-1m3-1h1v1h-1m7-1h1v1h-1m7-1h1v1h-1m3-1h1v1h-1m9-1h1v1h-1m4-1h1v1h-1m6-1h1v1h-1m7-1h1v1h-1m3-1h1v1h-1m7-1h1v1h-1m5-1h1v1h-1m-75 0h1v1h-1m4-1h1v1h-1m7-1h1v1h-1m7-1h1v1h-1m3-1h1v1h-1m13-1h1v1h-1m3-1h1v1h-1m3-1h1v1h-1m3-1h1v1h-1m13-1h1v1h-1m3-1h1v1h-1m7-1h1v1h-1m8-1h1v1h-1m4-1h1v1h-1m-82 0h1v1h-1m5-1h1v1h-1m4-1h1v1h-1m3-1h1v1h-1m4-1h1v1h-1m3-1h1v1h-1m7-1h1v1h-1m3-1h1v1h-1m3-1h1v1h-1m3-1h1v1h-1m15-1h1v1h-1m3-1h1v1h-1m4-1h1v1h-1m3-1h1v1h-1m6-1h1v1h-1m3-1h1v1h-1m5-1h1v1h-1m3-1h1v1h-1m8-1h1v1h-1m-88 0h1v1h-1m4-1h1v1h-1m5-1h1v1h-1m7-1h1v1h-1m10-1h1v1h-1m12-1h1v1h-1m3-1h1v1h-1m3-1h1v1h-1m3-1h1v1h-1m3-1h1v1h-1m16-1h1v1h-1m10-1h1v1h-1m7-1h1v1h-1m4-1h1v1h-1m4-1h1v1h-1m-94 0h1v1h-1m4-1h1v1h-1m5-1h1v1h-1m7-1h1v1h-1m7-1h1v1h-1m3-1h1v1h-1m7-1h1v1h-1m2-1h1v1h-1m3-1h1v1h-1m21-1h1v1h-1m3-1h1v1h-1m3-1h1v1h-1m7-1h1v1h-1m2-1h1v1h-1m7-1h1v1h-1m8-1h1v1h-1m4-1h1v1h-1m4-1h1v1h-1m-95 0h1v1h-1m11-1h1v1h-1m7-1h1v1h-1m7-1h1v1h-1m3-1h1v1h-1m14-1h1v1h-1m3-1h1v1h-1m3-1h1v1h-1m3-1h1v1h-1m15-1h1v1h-1m3-1h1v1h-1m6-1h1v1h-1m7-1h1v1h-1m12-1h1v1h-1m-99 0h1v1h-1m9-1h1v1h-1m4-1h1v1h-1m7-1h1v1h-1m7-1h1v1h-1m12-1h1v1h-1m3-1h1v1h-1m19-1h1v1h-1m3-1h1v1h-1m3-1h1v1h-1m9-1h1v1h-1m7-1h1v1h-1m7-1h1v1h-1m5-1h1v1h-1m8-1h1v1h-1m-105 0h1v1h-1m4-1h1v1h-1m4-1h1v1h-1m4-1h1v1h-1m5-1h1v1h-1m2-1h1v1h-1m4-1h1v1h-1m3-1h1v1h-1m7-1h1v1h-1m3-1h1v1h-1m36-1h1v1h-1m2-1h1v1h-1m7-1h1v1h-1m7-1h1v1h-1m3-1h1v1h-1m4-1h1v1h-1m4-1h1v1h-1m5-1h1v1h-1m4-1h1v1h-1m-107 0h1v1h-1m8-1h1v1h-1m12-1h1v1h-1m9-1h1v1h-1m12-1h1v1h-1m2-1h1v1h-1m3-1h1v1h-1m3-1h1v1h-1m2-1h1v1h-1m3-1h1v1h-1m3-1h1v1h-1m2-1h1v1h-1m3-1h1v1h-1m3-1h1v1h-1m11-1h1v1h-1m10-1h1v1h-1m11-1h1v1h-1m8-1h1v1h-1m-109 0h1v1h-1m5-1h1v1h-1m5-1h1v1h-1m7-1h1v1h-1m4-1h1v1h-1m7-1h1v1h-1m3-1h1v1h-1m11-1h1v1h-1m29-1h1v1h-1m3-1h1v1h-1m9-1h1v1h-1m2-1h1v1h-1m12-1h1v1h-1m7-1h1v1h-1m4-1h1v1h-1m6-1h1v1h-1m-117 0h1v1h-1m4-1h1v1h-1m13-1h1v1h-1m5-1h1v1h-1m6-1h1v1h-1m9-1h1v1h-1m3-1h1v1h-1m11-1h1v1h-1m2-1h1v1h-1m3-1h1v1h-1m2-1h1v1h-1m3-1h1v1h-1m2-1h1v1h-1m3-1h1v1h-1m2-1h1v1h-1m11-1h1v1h-1m3-1h1v1h-1m9-1h1v1h-1m7-1h1v1h-1m4-1h1v1h-1m13-1h1v1h-1m4-1h1v1h-1m-117 0h1v1h-1m4-1h1v1h-1m9-1h1v1h-1m4-1h1v1h-1m7-1h1v1h-1m7-1h1v1h-1m2-1h1v1h-1m9-1h1v1h-1m2-1h1v1h-1m3-1h1v1h-1m22-1h1v1h-1m2-1h1v1h-1m11-1h1v1h-1m3-1h1v1h-1m6-1h1v1h-1m12-1h1v1h-1m9-1h1v1h-1m-116 0h1v1h-1m5-1h1v1h-1m5-1h1v1h-1m4-1h1v1h-1m5-1h1v1h-1m6-1h1v1h-1m7-1h1v1h-1m9-1h1v1h-1m2-1h1v1h-1m37-1h1v1h-1m2-1h1v1h-1m9-1h1v1h-1m7-1h1v1h-1m7-1h1v1h-1m4-1h1v1h-1m5-1h1v1h-1m4-1h1v1h-1m6-1h1v1h-1m-127 0h1v1h-1m4-1h1v1h-1m11-1h1v1h-1m11-1h1v1h-1m7-1h1v1h-1m9-1h1v1h-1m10-1h1v1h-1m2-1h1v1h-1m3-1h1v1h-1m2-1h1v1h-1m2-1h1v1h-1m3-1h1v1h-1m2-1h1v1h-1m2-1h1v1h-1m2-1h1v1h-1m3-1h1v1h-1m2-1h1v1h-1m2-1h1v1h-1m11-1h1v1h-1m9-1h1v1h-1m6-1h1v1h-1m12-1h1v1h-1m10-1h1v1h-1m4-1h1v1h-1m-127 0h1v1h-1m8-1h1v1h-1m9-1h1v1h-1m11-1h1v1h-1m7-1h1v1h-1m2-1h1v1h-1m11-1h1v1h-1m29-1h1v1h-1m3-1h1v1h-1m8-1h1v1h-1m2-1h1v1h-1m7-1h1v1h-1m7-1h1v1h-1m4-1h1v1h-1m9-1h1v1h-1m4-1h1v1h-1m4-1h1v1h-1m-129 0h1v1h-1m6-1h1v1h-1m4-1h1v1h-1m4-1h1v1h-1m5-1h1v1h-1m4-1h1v1h-1m7-1h1v1h-1m7-1h1v1h-1m8-1h1v1h-1m2-1h1v1h-1m14-1h1v1h-1m5-1h1v1h-1m2-1h1v1h-1m2-1h1v1h-1m2-1h1v1h-1m14-1h1v1h-1m2-1h1v1h-1m9-1h1v1h-1m6-1h1v1h-1m7-1h1v1h-1m5-1h1v1h-1m4-1h1v1h-1m4-1h1v1h-1m5-1h1v1h-1m5-1h1v1h-1m-131 0h1v1h-1m10-1h1v1h-1m5-1h1v1h-1m4-1h1v1h-1m7-1h1v1h-1m7-1h1v1h-1m8-1h1v1h-1m10-1h1v1h-1m2-1h1v1h-1m2-1h1v1h-1m2-1h1v1h-1m15-1h1v1h-1m2-1h1v1h-1m2-1h1v1h-1m2-1h1v1h-1m10-1h1v1h-1m9-1h1v1h-1m6-1h1v1h-1m7-1h1v1h-1m5-1h1v1h-1m4-1h1v1h-1m11-1h1v1h-1m-134 0h1v1h-1m6-1h1v1h-1m4-1h1v1h-1m18-1h1v1h-1m6-1h1v1h-1m7-1h1v1h-1m2-1h1v1h-1m8-1h1v1h-1m2-1h1v1h-1m31-1h1v1h-1m2-1h1v1h-1m8-1h1v1h-1m2-1h1v1h-1m7-1h1v1h-1m7-1h1v1h-1m22-1h1v1h-1m5-1h1v1h-1m-135 0h1v1h-1m6-1h1v1h-1m4-1h1v1h-1m4-1h1v1h-1m5-1h1v1h-1m5-1h1v1h-1m6-1h1v1h-1m7-1h1v1h-1m8-1h1v1h-1m2-1h1v1h-1m15-1h1v1h-1m4-1h1v1h-1m2-1h1v1h-1m2-1h2v1h-2m16-1h1v1h-1m2-1h1v1h-1m8-1h1v1h-1m7-1h1v1h-1m7-1h1v1h-1m4-1h1v1h-1m5-1h1v1h-1m4-1h1v1h-1m5-1h1v1h-1m6-1h1v1h-1m-138 0h1v1h-1m6-1h1v1h-1m6-1h1v1h-1m4-1h1v1h-1m5-1h1v1h-1m5-1h1v1h-1m6-1h1v1h-1m7-1h1v1h-1m8-1h1v1h-1m11-1h1v1h-1m2-1h1v1h-1m2-1h1v1h-1m2-1h1v1h-1m13-1h1v1h-1m2-1h1v1h-1m2-1h1v1h-1m2-1h1v1h-1m11-1h1v1h-1m8-1h1v1h-1m7-1h1v1h-1m7-1h1v1h-1m4-1h1v1h-1m5-1h1v1h-1m4-1h1v1h-1m7-1h1v1h-1m5-1h1v1h-1m-139 0h1v1h-1m6-1h1v1h-1m7-1h1v1h-1m4-1h1v1h-1m5-1h1v1h-1m6-1h1v1h-1m7-1h1v1h-1m6-1h1v1h-1m2-1h1v1h-1m8-1h1v1h-1m2-1h1v1h-1m2-1h1v1h-1m28-1h1v1h-1m2-1h1v1h-1m9-1h1v1h-1m2-1h1v1h-1m6-1h1v1h-1m7-1h1v1h-1m7-1h1v1h-1m4-1h1v1h-1m5-1h1v1h-1m6-1h1v1h-1m6-1h1v1h-1m-141 0h1v1h-1m2-1h1v1h-1m4-1h1v1h-1m2-1h1v1h-1m4-1h1v1h-1m18-1h1v1h-1m7-1h1v1h-1m7-1h1v1h-1m8-1h2v1h-2m16-1h1v1h-1m4-1h1v1h-1m2-1h1v1h-1m3-1h1v1h-1m15-1h1v1h-1m2-1h1v1h-1m8-1h1v1h-1m6-1h1v1h-1m7-1h1v1h-1m18-1h1v1h-1m4-1h1v1h-1m2-1h1v1h-1m6-1h1v1h-1m-141 0h1v1h-1m7-1h1v1h-1m4-1h1v1h-1m4-1h1v1h-1m5-1h1v1h-1m5-1h1v1h-1m6-1h1v1h-1m7-1h1v1h-1m8-1h1v1h-1m12-1h1v1h-1m2-1h2v1h-2m3-1h1v1h-1m12-1h2v1h-2m3-1h2v1h-2m14-1h1v1h-1m7-1h1v1h-1m7-1h1v1h-1m7-1h1v1h-1m4-1h1v1h-1m5-1h1v1h-1m4-1h1v1h-1m5-1h1v1h-1m6-1h1v1h-1m-142 0h1v1h-1m2-1h1v1h-1m17-1h1v1h-1m4-1h1v1h-1m5-1h1v1h-1m7-1h1v1h-1m6-1h1v1h-1m7-1h2v1h-2m10-1h1v1h-1m2-1h1v1h-1m28-1h2v1h-2m10-1h1v1h-1m2-1h1v1h-1m6-1h1v1h-1m7-1h1v1h-1m6-1h1v1h-1m5-1h1v1h-1m5-1h1v1h-1m11-1h1v1h-1m6-1h2v1h-2m-142 0h1v1h-1m6-1h1v1h-1m4-1h1v1h-1m8-1h1v1h-1m11-1h1v1h-1m6-1h1v1h-1m7-1h1v1h-1m9-1h1v1h-1m2-1h1v1h-1m34-1h2v1h-2m10-1h1v1h-1m7-1h1v1h-1m6-1h1v1h-1m12-1h1v1h-1m7-1h1v1h-1m4-1h1v1h-1m6-1h1v1h-1m-143 0h1v1h-1m6-1h1v1h-1m11-1h1v1h-1m10-1h1v1h-1m4-1h1v1h-1m7-1h1v1h-1m6-1h1v1h-1m8-1h1v1h-1m2-1h1v1h-1m10-1h1v1h-1m2-1h2v1h-2m3-1h2v1h-2m3-1h3v1h-3m4-1h2v1h-2m3-1h2v1h-2m3-1h2v1h-2m12-1h2v1h-2m9-1h1v1h-1m6-1h1v1h-1m7-1h1v1h-1m5-1h1v1h-1m9-1h1v1h-1m4-1h1v1h-1m7-1h1v1h-1m6-1h1v1h-1m-150 0h1v1h-1m12-1h1v1h-1m7-1h1v1h-1m4-1h1v1h-1m5-1h1v1h-1m5-1h1v1h-1m6-1h1v1h-1m7-1h1v1h-1m6-1h1v1h-1m2-1h1v1h-1m9-1h1v1h-1m2-1h2v1h-2m22-1h1v1h-1m3-1h1v1h-1m10-1h2v1h-2m7-1h1v1h-1m13-1h1v1h-1m5-1h1v1h-1m5-1h1v1h-1m4-1h1v1h-1m8-1h1v1h-1m11-1h1v1h-1m-151 0h1v1h-1m6-1h1v1h-1m3-1h1v1h-1m11-1h1v1h-1m5-1h1v1h-1m5-1h1v1h-1m6-1h1v1h-1m5-1h1v1h-1m8-1h1v1h-1m8-1h1v1h-1m2-1h2v1h-2m30-1h1v1h-1m2-1h2v1h-2m9-1h1v1h-1m8-1h1v1h-1m5-1h1v1h-1m7-1h1v1h-1m5-1h1v1h-1m4-1h1v1h-1m8-1h1v1h-1m4-1h1v1h-1m2-1h1v1h-1m6-1h1v1h-1m-152 0h1v1h-1m5-1h1v1h-1m3-1h1v1h-1m6-1h1v1h-1m5-1h1v1h-1m8-1h1v1h-1m4-1h1v1h-1m7-1h1v1h-1m5-1h1v1h-1m8-1h1v1h-1m7-1h2v1h-2m13-1h2v1h-2m3-1h6v1h-6m7-1h4v1h-4m15-1h2v1h-2m9-1h1v1h-1m8-1h1v1h-1m5-1h1v1h-1m6-1h1v1h-1m5-1h1v1h-1m8-1h1v1h-1m4-1h1v1h-1m7-1h1v1h-1m2-1h1v1h-1m5-1h1v1h-1m-153 0h1v1h-1m8-1h1v1h-1m7-1h1v1h-1m5-1h1v1h-1m14-1h1v1h-1m6-1h1v1h-1m6-1h2v1h-2m9-1h1v1h-1m10-1h3v1h-3m19-1h1v1h-1m2-1h2v1h-2m11-1h1v1h-1m7-1h2v1h-2m8-1h1v1h-1m5-1h1v1h-1m14-1h1v1h-1m5-1h1v1h-1m7-1h1v1h-1m8-1h1v1h-1m-154 0h1v1h-1m5-1h1v1h-1m3-1h1v1h-1m6-1h1v1h-1m8-1h1v1h-1m9-1h1v1h-1m11-1h1v1h-1m6-1h1v1h-1m7-1h1v1h-1m2-1h1v1h-1m7-1h1v1h-1m2-1h2v1h-2m25-1h3v1h-3m10-1h2v1h-2m8-1h1v1h-1m7-1h1v1h-1m10-1h1v1h-1m10-1h1v1h-1m7-1h1v1h-1m7-1h1v1h-1m2-1h1v1h-1m5-1h1v1h-1m-155 0h1v1h-1m2-1h1v1h-1m6-1h1v1h-1m7-1h1v1h-1m8-1h1v1h-1m5-1h1v1h-1m5-1h1v1h-1m12-1h1v1h-1m7-1h1v1h-1m8-1h2v1h-2m32-1h2v1h-2m9-1h1v1h-1m7-1h1v1h-1m7-1h1v1h-1m5-1h1v1h-1m5-1h1v1h-1m5-1h1v1h-1m8-1h1v1h-1m7-1h1v1h-1m6-1h1v1h-1m2-1h1v1h-1m-156 0h1v1h-1m8-1h1v1h-1m6-1h1v1h-1m4-1h1v1h-1m4-1h1v1h-1m4-1h1v1h-1m4-1h1v1h-1m5-1h1v1h-1m6-1h1v1h-1m12-1h2v1h-2m8-1h2v1h-2m12-1h4v1h-4m5-1h4v1h-4m5-1h4v1h-4m14-1h2v1h-2m8-1h2v1h-2m14-1h1v1h-1m5-1h1v1h-1m5-1h1v1h-1m5-1h1v1h-1m3-1h1v1h-1m8-1h1v1h-1m6-1h1v1h-1m8-1h1v1h-1m-157 0h1v1h-1m3-1h1v1h-1m6-1h1v1h-1m3-1h1v1h-1m7-1h1v1h-1m9-1h1v1h-1m5-1h1v1h-1m5-1h1v1h-1m6-1h1v1h-1m14-1h2v1h-2m10-1h3v1h-3m17-1h4v1h-4m12-1h2v1h-2m14-1h1v1h-1m7-1h1v1h-1m5-1h1v1h-1m5-1h1v1h-1m8-1h1v1h-1m8-1h1v1h-1m3-1h1v1h-1m6-1h1v1h-1m2-1h1v1h-1m-157 0h1v1h-1m10-1h1v1h-1m7-1h1v1h-1m3-1h1v1h-1m5-1h1v1h-1m9-1h1v1h-1m5-1h1v1h-1m6-1h1v1h-1m6-1h2v1h-2m7-1h2v1h-2m8-1h1v1h-1m2-1h2v1h-2m23-1h1v1h-1m2-1h1v1h-1m8-1h1v1h-1m7-1h2v1h-2m6-1h1v1h-1m6-1h1v1h-1m6-1h1v1h-1m9-1h1v1h-1m4-1h1v1h-1m3-1h1v1h-1m7-1h1v1h-1m11-1h1v1h-1m-158 0h1v1h-1m2-1h1v1h-1m9-1h1v1h-1m3-1h1v1h-1m8-1h1v1h-1m5-1h1v1h-1m4-1h1v1h-1m5-1h1v1h-1m6-1h1v1h-1m6-1h1v1h-1m7-1h1v1h-1m8-1h2v1h-2m29-1h1v1h-1m8-1h1v1h-1m7-1h1v1h-1m6-1h2v1h-2m6-1h1v1h-1m5-1h1v1h-1m5-1h1v1h-1m4-1h1v1h-1m11-1h1v1h-1m9-1h1v1h-1m2-1h1v1h-1m-158 0h1v1h-1m10-1h1v1h-1m11-1h1v1h-1m8-1h1v1h-1m10-1h1v1h-1m5-1h1v1h-1m6-1h1v1h-1m7-1h1v1h-1m8-1h1v1h-1m9-1h14v1h-14m22-1h2v1h-2m15-1h1v1h-1m6-1h1v1h-1m6-1h1v1h-1m9-1h1v1h-1m9-1h1v1h-1m10-1h1v1h-1m3-1h1v1h-1m7-1h1v1h-1m-159 0h1v1h-1m3-1h1v1h-1m2-1h1v1h-1m6-1h1v1h-1m12-1h1v1h-1m4-1h1v1h-1m5-1h1v1h-1m4-1h1v1h-1m6-1h1v1h-1m6-1h1v1h-1m6-1h1v1h-1m8-1h1v1h-1m8-1h1v1h-1m2-1h1v1h-1m15-1h2v1h-2m8-1h2v1h-2m8-1h1v1h-1m6-1h1v1h-1m7-1h1v1h-1m5-1h1v1h-1m5-1h1v1h-1m5-1h1v1h-1m4-1h1v1h-1m8-1h1v1h-1m3-1h1v1h-1m6-1h1v1h-1m3-1h1v1h-1m2-1h1v1h-1m-159 0h1v1h-1m10-1h1v1h-1m10-1h1v1h-1m4-1h1v1h-1m9-1h1v1h-1m10-1h1v1h-1m6-1h1v1h-1m6-1h1v1h-1m7-1h1v1h-1m8-1h2v1h-2m20-1h2v1h-2m9-1h1v1h-1m7-1h1v1h-1m6-1h1v1h-1m6-1h1v1h-1m10-1h1v1h-1m9-1h1v1h-1m4-1h1v1h-1m7-1h1v1h-1m3-1h1v1h-1m10-1h1v1h-1m-159 0h1v1h-1m2-1h1v1h-1m3-1h1v1h-1m9-1h1v1h-1m4-1h1v1h-1m4-1h1v1h-1m4-1h1v1h-1m5-1h1v1h-1m5-1h1v1h-1m5-1h1v1h-1m6-1h1v1h-1m6-1h1v1h-1m6-1h2v1h-2m7-1h3v1h-3m24-1h2v1h-2m8-1h1v1h-1m6-1h2v1h-2m7-1h1v1h-1m5-1h1v1h-1m6-1h1v1h-1m9-1h1v1h-1m5-1h1v1h-1m3-1h1v1h-1m4-1h1v1h-1m9-1h1v1h-1m3-1h1v1h-1m2-1h1v1h-1m-159 0h1v1h-1m10-1h1v1h-1m3-1h1v1h-1m3-1h1v1h-1m12-1h1v1h-1m4-1h1v1h-1m11-1h1v1h-1m5-1h1v1h-1m6-1h1v1h-1m7-1h1v1h-1m15-1h2v1h-2m3-1h4v1h-4m5-1h2v1h-2m9-1h1v1h-1m8-1h1v1h-1m6-1h1v1h-1m6-1h1v1h-1m6-1h1v1h-1m10-1h1v1h-1m4-1h1v1h-1m12-1h1v1h-1m7-1h1v1h-1m10-1h1v1h-1m-160 0h1v1h-1m2-1h1v1h-1m6-1h1v1h-1m10-1h1v1h-1m4-1h1v1h-1m4-1h1v1h-1m4-1h1v1h-1m5-1h1v1h-1m11-1h1v1h-1m6-1h1v1h-1m6-1h1v1h-1m7-1h1v1h-1m8-1h2v1h-2m10-1h3v1h-3m9-1h1v1h-1m7-1h1v1h-1m6-1h2v1h-2m6-1h1v1h-1m11-1h1v1h-1m5-1h1v1h-1m5-1h1v1h-1m4-1h1v1h-1m4-1h1v1h-1m10-1h1v1h-1m3-1h1v1h-1m2-1h1v1h-1m-157 0h1v1h-1m13-1h1v1h-1m3-1h1v1h-1m4-1h1v1h-1m3-1h1v1h-1m14-1h1v1h-1m5-1h1v1h-1m6-1h1v1h-1m6-1h1v1h-1m6-1h1v1h-1m7-1h1v1h-1m7-1h1v1h-1m13-1h1v1h-1m8-1h1v1h-1m6-1h2v1h-2m7-1h1v1h-1m11-1h1v1h-1m5-1h1v1h-1m14-1h1v1h-1m4-1h1v1h-1m3-1h1v1h-1m17-1h1v1h-1m-158 0h1v1h-1m6-1h1v1h-1m3-1h1v1h-1m3-1h1v1h-1m12-1h1v1h-1m4-1h1v1h-1m10-1h1v1h-1m6-1h1v1h-1m5-1h2v1h-2m7-1h1v1h-1m6-1h1v1h-1m7-1h2v1h-2m15-1h1v1h-1m7-1h1v1h-1m7-1h1v1h-1m6-1h1v1h-1m6-1h1v1h-1m5-1h1v1h-1m5-1h1v1h-1m5-1h1v1h-1m5-1h1v1h-1m11-1h1v1h-1m4-1h1v1h-1m3-1h1v1h-1m3-1h1v1h-1m2-1h1v1h-1m-157 0h1v1h-1m20-1h1v1h-1m3-1h1v1h-1m5-1h1v1h-1m9-1h1v1h-1m11-1h1v1h-1m5-1h1v1h-1m7-1h1v1h-1m6-1h1v1h-1m7-1h1v1h-1m8-1h1v1h-1m7-1h1v1h-1m7-1h1v1h-1m7-1h1v1h-1m6-1h1v1h-1m6-1h1v1h-1m5-1h1v1h-1m5-1h1v1h-1m5-1h1v1h-1m5-1h1v1h-1m4-1h1v1h-1m4-1h1v1h-1m19-1h1v1h-1m-157 0h1v1h-1m6-1h1v1h-1m3-1h1v1h-1m3-1h1v1h-1m4-1h1v1h-1m4-1h1v1h-1m4-1h1v1h-1m4-1h1v1h-1m10-1h1v1h-1m6-1h1v1h-1m6-1h1v1h-1m6-1h1v1h-1m6-1h2v1h-2m8-1h1v1h-1m14-1h1v1h-1m7-1h1v1h-1m7-1h1v1h-1m6-1h1v1h-1m11-1h1v1h-1m5-1h1v1h-1m5-1h1v1h-1m5-1h1v1h-1m4-1h1v1h-1m4-1h1v1h-1m3-1h1v1h-1m4-1h1v1h-1m3-1h1v1h-1m5-1h1v1h-1m-157 0h1v1h-1m28-1h1v1h-1m4-1h1v1h-1m5-1h1v1h-1m11-1h1v1h-1m6-1h1v1h-1m6-1h1v1h-1m7-1h1v1h-1m7-1h2v1h-2m13-1h1v1h-1m7-1h2v1h-2m7-1h1v1h-1m7-1h1v1h-1m6-1h1v1h-1m5-1h1v1h-1m5-1h1v1h-1m5-1h1v1h-1m4-1h1v1h-1m28-1h1v1h-1m-156 0h1v1h-1m5-1h1v1h-1m3-1h1v1h-1m7-1h1v1h-1m4-1h1v1h-1m13-1h1v1h-1m6-1h1v1h-1m5-1h1v1h-1m6-1h1v1h-1m6-1h2v1h-2m7-1h1v1h-1m8-1h3v1h-3m10-1h2v1h-2m16-1h1v1h-1m6-1h1v1h-1m6-1h1v1h-1m6-1h1v1h-1m5-1h1v1h-1m14-1h1v1h-1m3-1h1v1h-1m7-1h1v1h-1m3-1h1v1h-1m3-1h1v1h-1m3-1h1v1h-1m-156 0h1v1h-1m2-1h1v1h-1m7-1h1v1h-1m3-1h1v1h-1m4-1h1v1h-1m3-1h1v1h-1m4-1h1v1h-1m4-1h1v1h-1m5-1h1v1h-1m5-1h1v1h-1m5-1h1v1h-1m6-1h1v1h-1m6-1h1v1h-1m6-1h1v1h-1m7-1h2v1h-2m9-1h1v1h-1m2-1h4v1h-4m5-1h1v1h-1m9-1h2v1h-2m7-1h2v1h-2m7-1h1v1h-1m6-1h1v1h-1m5-1h1v1h-1m6-1h1v1h-1m5-1h1v1h-1m4-1h1v1h-1m4-1h1v1h-1m4-1h1v1h-1m4-1h1v1h-1m3-1h1v1h-1m3-1h1v1h-1m7-1h1v1h-1m3-1h1v1h-1m-156 0h1v1h-1m3-1h1v1h-1m17-1h1v1h-1m4-1h1v1h-1m4-1h1v1h-1m5-1h1v1h-1m5-1h1v1h-1m6-1h1v1h-1m6-1h1v1h-1m14-1h2v1h-2m22-1h2v1h-2m9-1h1v1h-1m6-1h1v1h-1m6-1h1v1h-1m6-1h1v1h-1m5-1h1v1h-1m5-1h1v1h-1m5-1h1v1h-1m4-1h1v1h-1m17-1h1v1h-1m2-1h1v1h-1m-155 0h1v1h-1m2-1h1v1h-1m3-1h1v1h-1m2-1h1v1h-1m3-1h1v1h-1m3-1h1v1h-1m3-1h1v1h-1m12-1h1v1h-1m5-1h1v1h-1m5-1h1v1h-1m5-1h1v1h-1m5-1h1v1h-1m7-1h1v1h-1m6-1h2v1h-2m9-1h2v1h-2m19-1h2v1h-2m8-1h2v1h-2m7-1h1v1h-1m7-1h1v1h-1m6-1h1v1h-1m5-1h1v1h-1m5-1h1v1h-1m4-1h1v1h-1m9-1h1v1h-1m3-1h1v1h-1m3-1h1v1h-1m3-1h1v1h-1m3-1h1v1h-1m3-1h1v1h-1m2-1h1v1h-1m2-1h1v1h-1m-139 0h1v1h-1m4-1h1v1h-1m9-1h1v1h-1m10-1h1v1h-1m6-1h1v1h-1m6-1h1v1h-1m7-1h3v1h-3m10-1h3v1h-3m13-1h4v1h-4m11-1h2v1h-2m8-1h1v1h-1m6-1h1v1h-1m6-1h1v1h-1m10-1h1v1h-1m9-1h1v1h-1m4-1h1v1h-1m-138 0h1v1h-1m2-1h1v1h-1m2-1h1v1h-1m3-1h1v1h-1m3-1h1v1h-1m3-1h1v1h-1m3-1h1v1h-1m12-1h1v1h-1m5-1h1v1h-1m4-1h1v1h-1m6-1h1v1h-1m6-1h1v1h-1m7-1h1v1h-1m7-1h2v1h-2m10-1h12v1h-12m20-1h2v1h-2m9-1h1v1h-1m6-1h1v1h-1m7-1h1v1h-1m5-1h1v1h-1m5-1h1v1h-1m5-1h1v1h-1m4-1h1v1h-1m7-1h1v1h-1m4-1h1v1h-1m3-1h1v1h-1m2-1h1v1h-1m3-1h1v1h-1m2-1h1v1h-1m2-1h1v1h-1m-144 0h1v1h-1m4-1h1v1h-1m3-1h1v1h-1m14-1h1v1h-1m4-1h1v1h-1m5-1h2v1h-2m13-1h2v1h-2m9-1h2v1h-2m26-1h3v1h-3m9-1h2v1h-2m13-1h2v1h-2m6-1h1v1h-1m5-1h1v1h-1m13-1h1v1h-1m4-1h1v1h-1m3-1h1v1h-1m-143 0h1v1h-1m2-1h1v1h-1m2-1h1v1h-1m3-1h1v1h-1m2-1h1v1h-1m11-1h1v1h-1m4-1h1v1h-1m4-1h1v1h-1m10-1h1v1h-1m6-1h1v1h-1m6-1h1v1h-1m7-1h2v1h-2m9-1h3v1h-3m22-1h2v1h-2m10-1h2v1h-2m7-1h2v1h-2m6-1h1v1h-1m7-1h1v1h-1m9-1h1v1h-1m5-1h1v1h-1m3-1h1v1h-1m11-1h1v1h-1m3-1h1v1h-1m2-1h1v1h-1m2-1h1v1h-1m2-1h1v1h-1m-145 0h1v1h-1m6-1h1v1h-1m8-1h1v1h-1m15-1h1v1h-1m6-1h1v1h-1m6-1h1v1h-1m8-1h1v1h-1m9-1h2v1h-2m3-1h2v1h-2m13-1h2v1h-2m3-1h1v1h-1m9-1h2v1h-2m8-1h1v1h-1m6-1h1v1h-1m7-1h1v1h-1m14-1h1v1h-1m8-1h1v1h-1m3-1h1v1h-1m3-1h1v1h-1m-144 0h1v1h-1m2-1h1v1h-1m2-1h1v1h-1m3-1h1v1h-1m9-1h1v1h-1m4-1h1v1h-1m4-1h1v1h-1m4-1h1v1h-1m5-1h1v1h-1m6-1h1v1h-1m6-1h1v1h-1m6-1h2v1h-2m8-1h2v1h-2m13-1h11v1h-11m21-1h2v1h-2m9-1h1v1h-1m6-1h1v1h-1m7-1h1v1h-1m5-1h1v1h-1m5-1h1v1h-1m4-1h1v1h-1m5-1h1v1h-1m3-1h1v1h-1m10-1h1v1h-1m2-1h1v1h-1m2-1h1v1h-1m2-1h1v1h-1m-142 0h1v1h-1m2-1h1v1h-1m8-1h1v1h-1m8-1h1v1h-1m5-1h1v1h-1m6-1h1v1h-1m6-1h1v1h-1m7-1h1v1h-1m8-1h2v1h-2m3-1h1v1h-1m27-1h2v1h-2m9-1h1v1h-1m7-1h1v1h-1m7-1h1v1h-1m5-1h1v1h-1m5-1h1v1h-1m8-1h1v1h-1m8-1h1v1h-1m3-1h1v1h-1m-142 0h1v1h-1m2-1h1v1h-1m3-1h1v1h-1m2-1h1v1h-1m7-1h1v1h-1m3-1h1v1h-1m8-1h1v1h-1m4-1h1v1h-1m5-1h1v1h-1m6-1h1v1h-1m6-1h2v1h-2m8-1h2v1h-2m10-1h3v1h-3m22-1h3v1h-3m11-1h2v1h-2m7-1h2v1h-2m8-1h1v1h-1m5-1h1v1h-1m5-1h1v1h-1m5-1h1v1h-1m8-1h1v1h-1m3-1h1v1h-1m6-1h1v1h-1m3-1h1v1h-1m2-1h1v1h-1m2-1h1v1h-1m-143 0h1v1h-1m10-1h1v1h-1m3-1h1v1h-1m5-1h1v1h-1m10-1h1v1h-1m6-1h1v1h-1m7-1h1v1h-1m7-1h1v1h-1m11-1h1v1h-1m2-1h2v1h-2m3-1h1v1h-1m2-1h4v1h-4m5-1h5v1h-5m16-1h1v1h-1m8-1h1v1h-1m6-1h1v1h-1m2-1h1v1h-1m5-1h1v1h-1m10-1h1v1h-1m4-1h1v1h-1m3-1h1v1h-1m10-1h1v1h-1m-141 0h1v1h-1m2-1h1v1h-1m2-1h1v1h-1m6-1h1v1h-1m3-1h1v1h-1m7-1h1v1h-1m5-1h1v1h-1m5-1h1v1h-1m5-1h1v1h-1m6-1h1v1h-1m7-1h1v1h-1m8-1h1v1h-1m2-1h1v1h-1m32-1h2v1h-2m9-1h1v1h-1m7-1h1v1h-1m6-1h1v1h-1m5-1h1v1h-1m5-1h1v1h-1m5-1h1v1h-1m7-1h1v1h-1m3-1h1v1h-1m6-1h1v1h-1m3-1h2v1h-2m-141 0h1v1h-1m3-1h1v1h-1m9-1h1v1h-1m5-1h1v1h-1m9-1h1v1h-1m5-1h1v1h-1m7-1h1v1h-1m6-1h1v1h-1m2-1h1v1h-1m8-1h1v1h-1m3-1h1v1h-1m24-1h1v1h-1m2-1h1v1h-1m9-1h2v1h-2m7-1h1v1h-1m7-1h1v1h-1m5-1h1v1h-1m10-1h1v1h-1m4-1h1v1h-1m3-1h1v1h-1m7-1h1v1h-1m2-1h1v1h-1m-141 0h1v1h-1m2-1h1v1h-1m9-1h1v1h-1m7-1h1v1h-1m8-1h1v1h-1m11-1h1v1h-1m14-1h1v1h-1m2-1h1v1h-1m9-1h2v1h-2m4-1h1v1h-1m2-1h1v1h-1m10-1h2v1h-2m4-1h2v1h-2m11-1h2v1h-2m15-1h1v1h-1m12-1h1v1h-1m15-1h1v1h-1m8-1h1v1h-1m2-1h1v1h-1m-139 0h1v1h-1m9-1h1v1h-1m7-1h1v1h-1m5-1h1v1h-1m5-1h1v1h-1m13-1h1v1h-1m11-1h1v1h-1m13-1h1v1h-1m2-1h3v1h-3m4-1h2v1h-2m15-1h1v1h-1m10-1h1v1h-1m13-1h1v1h-1m10-1h1v1h-1m7-1h1v1h-1m7-1h1v1h-1m2-1h1v1h-1m-137 0h1v1h-1m8-1h1v1h-1m2-1h1v1h-1m7-1h1v1h-1m5-1h1v1h-1m5-1h1v1h-1m5-1h1v1h-1m6-1h1v1h-1m7-1h2v1h-2m10-1h1v1h-1m2-1h1v1h-1m28-1h2v1h-2m10-1h1v1h-1m2-1h1v1h-1m6-1h1v1h-1m7-1h1v1h-1m5-1h1v1h-1m4-1h1v1h-1m5-1h1v1h-1m3-1h1v1h-1m4-1h1v1h-1m2-1h1v1h-1m6-1h1v1h-1m2-1h1v1h-1m-137 0h1v1h-1m2-1h1v1h-1m6-1h1v1h-1m7-1h1v1h-1m5-1h1v1h-1m4-1h1v1h-1m5-1h1v1h-1m7-1h1v1h-1m8-1h1v1h-1m2-1h1v1h-1m8-1h1v1h-1m2-1h1v1h-1m2-1h2v1h-2m16-1h1v1h-1m2-1h2v1h-2m3-1h1v1h-1m9-1h1v1h-1m2-1h1v1h-1m7-1h1v1h-1m7-1h1v1h-1m5-1h1v1h-1m5-1h1v1h-1m4-1h1v1h-1m7-1h1v1h-1m7-1h1v1h-1m2-1h1v1h-1m-128 0h1v1h-1m11-1h1v1h-1m5-1h1v1h-1m4-1h1v1h-1m5-1h1v1h-1m7-1h2v1h-2m9-1h1v1h-1m2-1h1v1h-1m12-1h2v1h-2m5-1h1v1h-1m2-1h1v1h-1m3-1h1v1h-1m2-1h1v1h-1m11-1h1v1h-1m2-1h1v1h-1m8-1h1v1h-1m8-1h1v1h-1m10-1h1v1h-1m4-1h1v1h-1m5-1h1v1h-1m7-1h1v1h-1m-126 0h1v1h-1m2-1h1v1h-1m6-1h1v1h-1m4-1h1v1h-1m14-1h1v1h-1m5-1h1v1h-1m8-1h1v1h-1m10-1h1v1h-1m2-1h1v1h-1m28-1h1v1h-1m2-1h1v1h-1m9-1h1v1h-1m8-1h1v1h-1m5-1h1v1h-1m14-1h1v1h-1m4-1h1v1h-1m7-1h1v1h-1m2-1h1v1h-1m-132 0h1v1h-1m6-1h1v1h-1m2-1h1v1h-1m11-1h1v1h-1m5-1h1v1h-1m6-1h1v1h-1m5-1h1v1h-1m8-1h1v1h-1m2-1h1v1h-1m9-1h1v1h-1m2-1h1v1h-1m2-1h1v1h-1m2-1h1v1h-1m2-1h1v1h-1m9-1h1v1h-1m2-1h1v1h-1m4-1h1v1h-1m2-1h1v1h-1m9-1h1v1h-1m2-1h1v1h-1m8-1h1v1h-1m5-1h1v1h-1m7-1h1v1h-1m4-1h1v1h-1m7-1h1v1h-1m7-1h1v1h-1m5-1h1v1h-1m-131 0h1v1h-1m2-1h1v1h-1m6-1h1v1h-1m11-1h1v1h-1m5-1h1v1h-1m13-1h1v1h-1m8-1h1v1h-1m2-1h1v1h-1m15-1h1v1h-1m2-1h1v1h-1m2-1h1v1h-1m2-1h1v1h-1m14-1h1v1h-1m10-1h1v1h-1m14-1h1v1h-1m15-1h1v1h-1m6-1h1v1h-1m2-1h1v1h-1m-125 0h1v1h-1m8-1h1v1h-1m5-1h1v1h-1m4-1h1v1h-1m5-1h1v1h-1m7-1h1v1h-1m6-1h1v1h-1m2-1h1v1h-1m8-1h1v1h-1m4-1h1v1h-1m23-1h1v1h-1m4-1h1v1h-1m8-1h1v1h-1m2-1h1v1h-1m7-1h1v1h-1m6-1h1v1h-1m5-1h1v1h-1m5-1h1v1h-1m4-1h1v1h-1m6-1h1v1h-1m2-1h1v1h-1m-122 0h1v1h-1m5-1h1v1h-1m11-1h1v1h-1m5-1h1v1h-1m4-1h1v1h-1m7-1h1v1h-1m8-1h1v1h-1m12-1h1v1h-1m2-1h1v1h-1m2-1h1v1h-1m3-1h1v1h-1m2-1h1v1h-1m2-1h1v1h-1m2-1h1v1h-1m2-1h1v1h-1m2-1h1v1h-1m2-1h1v1h-1m12-1h1v1h-1m9-1h1v1h-1m6-1h1v1h-1m5-1h1v1h-1m4-1h1v1h-1m5-1h1v1h-1m6-1h1v1h-1m-114 0h1v1h-1m6-1h1v1h-1m4-1h1v1h-1m9-1h1v1h-1m11-1h1v1h-1m2-1h1v1h-1m6-1h1v1h-1m3-1h1v1h-1m34-1h1v1h-1m2-1h1v1h-1m6-1h1v1h-1m2-1h1v1h-1m11-1h1v1h-1m9-1h1v1h-1m5-1h1v1h-1m-112 0h1v1h-1m17-1h1v1h-1m6-1h1v1h-1m5-1h1v1h-1m9-1h1v1h-1m8-1h1v1h-1m2-1h1v1h-1m2-1h1v1h-1m21-1h1v1h-1m2-1h1v1h-1m2-1h1v1h-1m9-1h1v1h-1m9-1h1v1h-1m4-1h1v1h-1m7-1h1v1h-1m11-1h1v1h-1m5-1h1v1h-1m-116 0h2v1h-2m5-1h1v1h-1m11-1h1v1h-1m7-1h1v1h-1m4-1h1v1h-1m3-1h1v1h-1m6-1h1v1h-1m15-1h1v1h-1m2-1h1v1h-1m3-1h1v1h-1m2-1h1v1h-1m2-1h1v1h-1m2-1h1v1h-1m15-1h1v1h-1m7-1h1v1h-1m2-1h1v1h-1m4-1h1v1h-1m7-1h1v1h-1m5-1h1v1h-1m6-1h1v1h-1m4-1h1v1h-1m-102 0h1v1h-1m4-1h1v1h-1m5-1h1v1h-1m6-1h1v1h-1m7-1h1v1h-1m9-1h1v1h-1m5-1h1v1h-1m22-1h1v1h-1m5-1h1v1h-1m15-1h1v1h-1m7-1h1v1h-1m4-1h1v1h-1m5-1h1v1h-1m5-1h1v1h-1m-106 0h1v1h-1m4-1h2v1h-2m5-1h1v1h-1m9-1h1v1h-1m13-1h1v1h-1m3-1h1v1h-1m11-1h1v1h-1m2-1h1v1h-1m3-1h1v1h-1m2-1h1v1h-1m3-1h1v1h-1m2-1h1v1h-1m3-1h1v1h-1m2-1h1v1h-1m11-1h1v1h-1m3-1h1v1h-1m6-1h1v1h-1m7-1h1v1h-1m5-1h1v1h-1m10-1h1v1h-1m4-1h1v1h-1m-100 0h1v1h-1m4-1h1v1h-1m5-1h1v1h-1m4-1h1v1h-1m7-1h1v1h-1m9-1h1v1h-1m2-1h1v1h-1m3-1h1v1h-1m24-1h1v1h-1m2-1h1v1h-1m3-1h1v1h-1m6-1h1v1h-1m3-1h1v1h-1m7-1h1v1h-1m4-1h1v1h-1m4-1h1v1h-1m4-1h1v1h-1m6-1h1v1h-1m-98 0h1v1h-1m4-1h1v1h-1m8-1h1v1h-1m4-1h1v1h-1m3-1h1v1h-1m7-1h1v1h-1m3-1h1v1h-1m8-1h1v1h-1m3-1h1v1h-1m3-1h1v1h-1m2-1h1v1h-1m3-1h1v1h-1m3-1h1v1h-1m2-1h1v1h-1m3-1h1v1h-1m9-1h1v1h-1m2-1h1v1h-1m7-1h1v1h-1m3-1h1v1h-1m-79 0h1v1h-1m4-1h1v1h-1m5-1h1v1h-1m4-1h1v1h-1m4-1h1v1h-1m7-1h1v1h-1m9-1h1v1h-1m3-1h1v1h-1m25-1h1v1h-1m3-1h1v1h-1m9-1h1v1h-1m7-1h1v1h-1m4-1h1v1h-1m5-1h1v1h-1m4-1h1v1h-1m4-1h1v1h-1m-85 0h1v1h-1m11-1h1v1h-1m4-1h1v1h-1m12-1h1v1h-1m3-1h1v1h-1m2-1h1v1h-1m3-1h1v1h-1m3-1h1v1h-1m3-1h1v1h-1m3-1h1v1h-1m2-1h1v1h-1m10-1h1v1h-1m3-1h1v1h-1m3-1h1v1h-1m7-1h1v1h-1m9-1h1v1h-1m-84 0h1v1h-1m9-1h1v1h-1m4-1h1v1h-1m7-1h1v1h-1m7-1h1v1h-1m2-1h1v1h-1m3-1h1v1h-1m18-1h1v1h-1m3-1h1v1h-1m6-1h1v1h-1m14-1h1v1h-1m4-1h1v1h-1m4-1h1v1h-1m4-1h1v1h-1m-81 0h1v1h-1m4-1h1v1h-1m4-1h1v1h-1m4-1h1v1h-1m3-1h1v1h-1m4-1h1v1h-1m3-1h1v1h-1m3-1h1v1h-1m9-1h1v1h-1m3-1h1v1h-1m3-1h1v1h-1m3-1h1v1h-1m10-1h1v1h-1m3-1h1v1h-1m3-1h1v1h-1m6-1h1v1h-1m5-1h1v1h-1m4-1h1v1h-1m4-1h1v1h-1m-60 0h1v1h-1m10-1h1v1h-1m6-1h1v1h-1m3-1h1v1h-1m3-1h1v1h-1m3-1h1v1h-1m6-1h1v1h-1m10-1h1v1h-1m-53 0h1v1h-1m4-1h1v1h-1m4-1h1v1h-1m3-1h1v1h-1m7-1h1v1h-1m3-1h1v1h-1m20-1h1v1h-1m3-1h1v1h-1m3-1h1v1h-1m7-1h1v1h-1m3-1h1v1h-1m4-1h1v1h-1m4-1h1v1h-1m-47 0h1v1h-1m3-1h1v1h-1m7-1h1v1h-1m3-1h1v1h-1m3-1h1v1h-1m3-1h1v1h-1m7-1h1v1h-1m4-1h1v1h-1m3-1h1v1h-1m-41 0h1v1h-1m4-1h1v1h-1m3-1h1v1h-1m7-1h1v1h-1m4-1h1v1h-1m3-1h1v1h-1m3-1h1v1h-1m4-1h1v1h-1m3-1h1v1h-1m7-1h1v1h-1m3-1h1v1h-1m4-1h1v1h-1m-35 0h1v1h-1m4-1h1v1h-1m4-1h1v1h-1m3-1h1v1h-1m3-1h1v1h-1m4-1h1v1h-1m3-1h1v1h-1m-17 0h1v1h-1m3-1h1v1h-1m7-1h1v1h-1m4-1h1v1h-1m3-1h1v1h-1"/><path class="pl" fill="#422ec0" d="M380 224h1v1h-1m4-1h1v1h-1m4-1h1v1h-1m4-1h1v1h-1m4-1h1v1h-1m4-1h1v1h-1m-28 0h1v1h-1m4-1h1v1h-1m4-1h1v1h-1m4-1h1v1h-1m4-1h1v1h-1m4-1h1v1h-1m4-1h1v1h-1m4-1h1v1h-1m4-1h1v1h-1m4-1h1v1h-1m-44 0h1v1h-1m4-1h1v1h-1m4-1h1v1h-1m4-1h1v1h-1m4-1h1v1h-1m4-1h1v1h-1m24-1h1v1h-1m4-1h1v1h-1m4-1h1v1h-1m-56 0h1v1h-1m4-1h1v1h-1m4-1h1v1h-1m4-1h1v1h-1m4-1h1v1h-1m4-1h1v1h-1m4-1h1v1h-1m4-1h1v1h-1m4-1h1v1h-1m4-1h1v1h-1m4-1h1v1h-1m4-1h1v1h-1m4-1h1v1h-1m4-1h1v1h-1m4-1h1v1h-1m4-1h1v1h-1m-64 0h1v1h-1m4-1h1v1h-1m4-1h1v1h-1m4-1h1v1h-1m4-1h1v1h-1m4-1h1v1h-1m4-1h1v1h-1m4-1h1v1h-1m4-1h1v1h-1m4-1h1v1h-1m4-1h1v1h-1m4-1h1v1h-1m3-1h2v1h-2m4-1h1v1h-1m5-1h1v1h-1m4-1h1v1h-1m3-1h2v1h-2m4-1h2v1h-2m-71 0h1v1h-1m4-1h1v1h-1m4-1h1v1h-1m4-1h1v1h-1m4-1h1v1h-1m4-1h1v1h-1m4-1h1v1h-1m4-1h1v1h-1m4-1h1v1h-1m11-1h1v1h-1m4-1h1v1h-1m4-1h1v1h-1m4-1h1v1h-1m4-1h1v1h-1m4-1h1v1h-1m4-1h1v1h-1m4-1h1v1h-1m4-1h1v1h-1m-79 0h1v1h-1m4-1h1v1h-1m4-1h1v1h-1m4-1h1v1h-1m4-1h1v1h-1m4-1h1v1h-1m4-1h1v1h-1m4-1h1v1h-1m4-1h1v1h-1m4-1h1v1h-1m4-1h1v1h-1m4-1h1v1h-1m3-1h1v1h-1m4-1h1v1h-1m4-1h1v1h-1m4-1h1v1h-1m4-1h1v1h-1m4-1h1v1h-1m4-1h1v1h-1m4-1h1v1h-1m4-1h1v1h-1m-82 0h1v1h-1m3-1h1v1h-1m4-1h1v1h-1m4-1h2v1h-2m4-1h2v1h-2m4-1h2v1h-2m4-1h1v1h-1m4-1h1v1h-1m4-1h1v1h-1m4-1h1v1h-1m4-1h1v1h-1m4-1h1v1h-1m4-1h1v1h-1m3-1h1v1h-1m4-1h1v1h-1m4-1h1v1h-1m4-1h1v1h-1m4-1h1v1h-1m4-1h1v1h-1m4-1h1v1h-1m4-1h1v1h-1m4-1h1v1h-1m4-1h1v1h-1m4-1h1v1h-1m-94 0h1v1h-1m4-1h1v1h-1m4-1h1v1h-1m4-1h1v1h-1m8-1h1v1h-1m4-1h1v1h-1m4-1h1v1h-1m4-1h1v1h-1m3-1h1v1h-1m4-1h1v1h-1m4-1h1v1h-1m4-1h1v1h-1m7-1h1v1h-1m4-1h1v1h-1m4-1h1v1h-1m4-1h1v1h-1m3-1h2v1h-2m4-1h1v1h-1m4-1h1v1h-1m8-1h2v1h-2m5-1h1v1h-1m7-1h1v1h-1m-97 0h1v1h-1m4-1h1v1h-1m4-1h1v1h-1m4-1h1v1h-1m4-1h1v1h-1m8-1h1v1h-1m4-1h1v1h-1m4-1h1v1h-1m4-1h1v1h-1m4-1h1v1h-1m3-1h1v1h-1m4-1h1v1h-1m4-1h1v1h-1m3-1h1v1h-1m4-1h1v1h-1m4-1h1v1h-1m3-1h1v1h-1m4-1h1v1h-1m4-1h1v1h-1m8-1h1v1h-1m4-1h1v1h-1m4-1h1v1h-1m4-1h1v1h-1m4-1h1v1h-1m-101 0h2v1h-2m4-1h2v1h-2m4-1h2v1h-2m5-1h1v1h-1m4-1h1v1h-1m4-1h1v1h-1m4-1h1v1h-1m11-1h1v1h-1m4-1h1v1h-1m11-1h1v1h-1m3-1h1v1h-1m11-1h1v1h-1m4-1h1v1h-1m12-1h1v1h-1m4-1h1v1h-1m3-1h2v1h-2m5-1h1v1h-1m4-1h1v1h-1m4-1h1v1h-1m4-1h1v1h-1m-108 0h1v1h-1m4-1h1v1h-1m4-1h1v1h-1m4-1h1v1h-1m4-1h1v1h-1m4-1h1v1h-1m4-1h1v1h-1m4-1h1v1h-1m4-1h1v1h-1m4-1h1v1h-1m7-1h1v1h-1m4-1h1v1h-1m3-1h1v1h-1m11-1h1v1h-1m4-1h1v1h-1m3-1h1v1h-1m4-1h1v1h-1m4-1h1v1h-1m3-1h1v1h-1m4-1h1v1h-1m4-1h1v1h-1m4-1h1v1h-1m4-1h1v1h-1m4-1h1v1h-1m5-1h1v1h-1m4-1h1v1h-1m-111 0h1v1h-1m3-1h1v1h-1m4-1h1v1h-1m4-1h1v1h-1m4-1h1v1h-1m5-1h1v1h-1m4-1h1v1h-1m8-1h1v1h-1m4-1h1v1h-1m3-1h1v1h-1m39-1h1v1h-1m4-1h1v1h-1m4-1h1v1h-1m7-1h1v1h-1m4-1h1v1h-1m5-1h1v1h-1m4-1h1v1h-1m4-1h1v1h-1m4-1h1v1h-1m-114 0h1v1h-1m3-1h2v1h-2m9-1h1v1h-1m4-1h1v1h-1m9-1h1v1h-1m3-1h1v1h-1m4-1h1v1h-1m53-1h1v1h-1m4-1h1v1h-1m4-1h1v1h-1m4-1h1v1h-1m4-1h1v1h-1m4-1h1v1h-1m5-1h1v1h-1m4-1h1v1h-1m-118 0h1v1h-1m4-1h1v1h-1m4-1h1v1h-1m4-1h2v1h-2m9-1h1v1h-1m4-1h1v1h-1m8-1h1v1h-1m60-1h1v1h-1m7-1h1v1h-1m4-1h1v1h-1m9-1h1v1h-1m4-1h1v1h-1m4-1h2v1h-2m4-1h1v1h-1m-125 0h2v1h-2m4-1h2v1h-2m5-1h1v1h-1m4-1h1v1h-1m4-1h1v1h-1m5-1h1v1h-1m4-1h1v1h-1m3-1h1v1h-1m67-1h1v1h-1m3-1h1v1h-1m5-1h1v1h-1m4-1h1v1h-1m4-1h1v1h-1m5-1h1v1h-1m4-1h1v1h-1m4-1h1v1h-1m-128 0h1v1h-1m4-1h1v1h-1m4-1h1v1h-1m4-1h2v1h-2m5-1h1v1h-1m4-1h1v1h-1m5-1h1v1h-1m80-1h1v1h-1m5-1h1v1h-1m4-1h1v1h-1m4-1h1v1h-1m4-1h1v1h-1m4-1h2v1h-2m4-1h1v1h-1m-131 0h1v1h-1m4-1h2v1h-2m5-1h1v1h-1m4-1h1v1h-1m4-1h1v1h-1m5-1h1v1h-1m88-1h1v1h-1m4-1h1v1h-1m4-1h1v1h-1m9-1h1v1h-1m-130 0h1v1h-1m4-1h1v1h-1m9-1h1v1h-1m8-1h1v1h-1m4-1h1v1h-1m91-1h1v1h-1m4-1h1v1h-1m5-1h1v1h-1m4-1h1v1h-1m4-1h2v1h-2m4-1h1v1h-1m-137 0h1v1h-1m4-1h2v1h-2m5-1h1v1h-1m4-1h1v1h-1m5-1h1v1h-1m4-1h1v1h-1m93-1h1v1h-1m4-1h1v1h-1m5-1h1v1h-1m4-1h2v1h-2m5-1h1v1h-1m4-1h1v1h-1m-140 0h1v1h-1m4-1h1v1h-1m4-1h2v1h-2m5-1h1v1h-1m4-1h2v1h-2m5-1h1v1h-1m99-1h1v1h-1m4-1h2v1h-2m5-1h1v1h-1m5-1h1v1h-1m4-1h2v1h-2m4-1h1v1h-1m-143 0h2v1h-2m5-1h1v1h-1m4-1h1v1h-1m5-1h1v1h-1m115-1h1v1h-1m5-1h1v1h-1m5-1h1v1h-1m4-1h1v1h-1m-146 0h1v1h-1m4-1h1v1h-1m5-1h1v1h-1m4-1h1v1h-1m5-1h1v1h-1m113-1h1v1h-1m5-1h1v1h-1m9-1h1v1h-1m4-1h1v1h-1m-148 0h1v1h-1m4-1h1v1h-1m5-1h1v1h-1m4-1h1v1h-1m5-1h1v1h-1m111-1h1v1h-1m5-1h1v1h-1m5-1h1v1h-1m4-1h2v1h-2m4-1h2v1h-2m3-1h1v1h-1m-153 0h1v1h-1m3-1h2v1h-2m5-1h1v1h-1m4-1h2v1h-2m5-1h1v1h-1m119-1h1v1h-1m4-1h2v1h-2m5-1h1v1h-1m5-1h1v1h-1m3-1h1v1h-1m-153 0h2v1h-2m4-1h2v1h-2m5-1h1v1h-1m5-1h1v1h-1m4-1h1v1h-1m121-1h1v1h-1m6-1h1v1h-1m4-1h1v1h-1m4-1h1v1h-1m-155 0h1v1h-1m3-1h1v1h-1m10-1h1v1h-1m5-1h1v1h-1m122-1h1v1h-1m5-1h1v1h-1m9-1h1v1h-1m4-1h1v1h-1m-158 0h1v1h-1m4-1h1v1h-1m4-1h2v1h-2m6-1h1v1h-1m130-1h1v1h-1m4-1h2v1h-2m5-1h2v1h-2m4-1h2v1h-2m-160 0h1v1h-1m4-1h1v1h-1m4-1h1v1h-1m5-1h1v1h-1m5-1h1v1h-1m127-1h1v1h-1m5-1h1v1h-1m5-1h1v1h-1m4-1h2v1h-2m4-1h1v1h-1m-162 0h1v1h-1m3-1h1v1h-1m6-1h1v1h-1m4-1h1v1h-1m135-1h1v1h-1m5-1h1v1h-1m4-1h1v1h-1m4-1h1v1h-1m-164 0h1v1h-1m3-1h2v1h-2m5-1h2v1h-2m5-1h1v1h-1m5-1h1v1h-1m132-1h1v1h-1m4-1h1v1h-1m5-1h2v1h-2m5-1h1v1h-1m3-1h1v1h-1m-166 0h1v1h-1m3-1h2v1h-2m6-1h1v1h-1m4-1h2v1h-2m138-1h2v1h-2m6-1h1v1h-1m4-1h2v1h-2m5-1h1v1h-1m-168 0h1v1h-1m3-1h1v1h-1m4-1h2v1h-2m5-1h2v1h-2m144-1h1v1h-1m2-1h1v1h-1m4-1h2v1h-2m4-1h1v1h-1m4-1h1v1h-1m-170 0h1v1h-1m3-1h2v1h-2m6-1h1v1h-1m5-1h1v1h-1m141-1h1v1h-1m6-1h1v1h-1m4-1h2v1h-2m4-1h2v1h-2m-171 0h1v1h-1m2-1h2v1h-2m5-1h1v1h-1m5-1h2v1h-2m148-1h1v1h-1m2-1h1v1h-1m4-1h2v1h-2m5-1h1v1h-1m2-1h1v1h-1m-173 0h1v1h-1m3-1h2v1h-2m6-1h1v1h-1m5-1h1v1h-1m145-1h1v1h-1m6-1h1v1h-1m4-1h2v1h-2m4-1h1v1h-1m-174 0h1v1h-1m2-1h1v1h-1m4-1h2v1h-2m5-1h2v1h-2m152-1h2v1h-2m5-1h2v1h-2m5-1h2v1h-2m-171 0h2v1h-2m6-1h1v1h-1m6-1h1v1h-1m148-1h1v1h-1m10-1h2v1h-2m-172 0h2v1h-2m4-1h2v1h-2m5-1h1v1h-1m2-1h1v1h-1m154-1h2v1h-2m6-1h2v1h-2m4-1h1v1h-1m-177 0h1v1h-1m3-1h2v1h-2m4-1h1v1h-1m2-1h1v1h-1m5-1h1v1h-1m151-1h1v1h-1m6-1h2v1h-2m5-1h1v1h-1m3-1h1v1h-1m-178 0h1v1h-1m3-1h2v1h-2m6-1h2v1h-2m158-1h1v1h-1m2-1h1v1h-1m4-1h2v1h-2m4-1h2v1h-2m-179 0h1v1h-1m2-1h2v1h-2m5-1h2v1h-2m7-1h1v1h-1m154-1h1v1h-1m5-1h2v1h-2m5-1h2v1h-2m3-1h1v1h-1m-181 0h2v1h-2m4-1h2v1h-2m5-1h1v1h-1m163-1h1v1h-1m4-1h2v1h-2m5-1h1v1h-1m-182 0h1v1h-1m2-1h2v1h-2m5-1h2v1h-2m6-1h1v1h-1m157-1h1v1h-1m5-1h2v1h-2m6-1h1v1h-1m2-1h1v1h-1m-183 0h2v1h-2m3-1h2v1h-2m6-1h1v1h-1m164-1h2v1h-2m6-1h2v1h-2m4-1h1v1h-1m-183 0h2v1h-2m5-1h3v1h-3m7-1h1v1h-1m159-1h1v1h-1m5-1h3v1h-3m6-1h1v1h-1m-182 0h1v1h-1m3-1h1v1h-1m5-1h1v1h-1m2-1h1v1h-1m164-1h2v1h-2m6-1h2v1h-2m4-1h1v1h-1m-184 0h2v1h-2m4-1h2v1h-2m7-1h1v1h-1m161-1h1v1h-1m6-1h2v1h-2m5-1h1v1h-1m-184 0h1v1h-1m2-1h2v1h-2m5-1h2v1h-2m3-1h1v1h-1m165-1h1v1h-1m2-1h2v1h-2m6-1h1v1h-1m2-1h1v1h-1m-184 0h1v1h-1m2-1h3v1h-3m9-1h1v1h-1m168-1h3v1h-3m5-1h1v1h-1m-185 0h3v1h-3m6-1h1v1h-1m2-1h2v1h-2m168-1h1v1h-1m2-1h2v1h-2m5-1h2v1h-2m3-1h1v1h-1m-186 0h1v1h-1m3-1h3v1h-3m178-1h2v1h-2m4-1h1v1h-1m-185 0h2v1h-2m6-1h2v1h-2m172-1h2v1h-2m6-1h2v1h-2m-184 0h1v1h-1m3-1h1v1h-1m6-1h2v1h-2m168-1h1v1h-1m5-1h2v1h-2m4-1h1v1h-1m-186 0h2v1h-2m4-1h1v1h-1m2-1h2v1h-2m172-1h1v1h-1m2-1h2v1h-2m5-1h1v1h-1m-185 0h1v1h-1m2-1h1v1h-1m6-1h1v1h-1m2-1h1v1h-1m165-1h1v1h-1m2-1h1v1h-1m6-1h1v1h-1m3-1h1v1h-1m-183 0h3v1h-3m177-1h3v1h-3m5-1h1v1h-1m-185 0h1v1h-1m2-1h1v1h-1m5-1h2v1h-2m3-1h1v1h-1m165-1h1v1h-1m2-1h1v1h-1m2-1h1v1h-1m6-1h2v1h-2m-183 0h4v1h-4m179-1h3v1h-3m4-1h1v1h-1m-178 0h2v1h-2m3-1h1v1h-1m165-1h1v1h-1m2-1h1v1h-1m2-1h1v1h-1m-177 0h3v1h-3m179-1h3v1h-3m-175 0h3v1h-3m4-1h1v1h-1m165-1h1v1h-1m2-1h2v1h-2m3-1h1v1h-1m-179 0h4v1h-4m181-1h3v1h-3m-177 0h3v1h-3m4-1h2v1h-2m166-1h1v1h-1m2-1h3v1h-3m4-1h1v1h-1m-178 0h1v1h-1m179-1h3v1h-3m-177 0h2v1h-2m3-1h2v1h-2m3-1h1v1h-1m163-1h1v1h-1m2-1h1v1h-1m2-1h4v1h-4m4 0h1v1h-1m-176 0h1v1h-1m2-1h1v1h-1m2-1h1v1h-1m2-1h1v1h-1m162-1h2v1h-2m3-1h5v1h-5m-173 1h1v1h-1m7-1h2v1h-2m162-1h1v1h-1m2-1h5v1h-5m6-1h1v1h-1m-172 1h1v1h-1m163-1h1v1h-1m2-1h6v1h-6m7 0h1v1h-1m-172 0h1v1h-1m162-1h1v1h-1m4-1h1v1h-1m2-1h2v1h-2m-4 0h2v1h-2m-3 0h1v1h-1m6-1h2v1h-2m-163 0h1v1h-1m160-1h3v1h-3m-5 0h1v1h-1m-156 0h1v1h-1m2-1h1v1h-1m2-1h1v1h-1m154-1h4v1h-4m-3 0h2v1h-2m-153 0h1v1h-1m2-1h1v1h-1m153-1h1v1h-1m2-1h1v1h-1m3-1h1v1h-1m-154 0h1v1h-1m145-1h1v1h-1m-148 0h2v1h-2m151-1h1v1h-1m-147 0h2v1h-2m142-1h2v1h-2m3-1h1v1h-1m3-1h1v1h-1m-150 0h1v1h-1m148-1h1v1h-1m-145 0h3v1h-3m140-1h2v1h-2m-138 1h2v1h-2m3-1h1v1h-1m132-1h1v1h-1m2-1h2v1h-2m-132 0h1v1h-1m127-1h1v1h-1m-135 0h1v1h-1m5-1h1v1h-1m2-1h1v1h-1m131-1h1v1h-1m5-1h1v1h-1m-134 0h1v1h-1m2-1h1v1h-1m123-1h1v1h-1m-131 0h2v1h-2m137-1h1v1h-1m-134 0h1v1h-1m7-1h1v1h-1m117-1h2v1h-2m7-1h1v1h-1m-131 0h3v1h-3m121-1h1v1h-1m8-1h3v1h-3m-126 0h2v1h-2m6-1h1v1h-1m113-1h1v1h-1m6-1h1v1h-1m-124 0h4v1h-4m9-1h1v1h-1m105-1h1v1h-1m7-1h3v1h-3m-118 0h3v1h-3m116-1h3v1h-3m-113 0h1v1h-1m111-1h1v1h-1m-111 0h4v1h-4m108-1h4v1h-4m-104 0h3v1h-3m101-1h4v1h-4m-98 0h1v1h-1m2-1h1v1h-1m93-1h1v1h-1m2-1h1v1h-1m-96 0h1v1h-1m3-1h1v1h-1m2-1h1v1h-1m85-1h1v1h-1m3-1h1v1h-1m2-1h2v1h-2m-92 0h2v1h-2m3-1h1v1h-1m3-1h1v1h-1m80-1h1v1h-1m2-1h3v1h-3m-85 0h3v1h-3m4-1h1v1h-1m2-1h2v1h-2m62-1h1v1h-1m9-1h1v1h-1m2-1h1v1h-1m2-1h3v1h-3m-77 0h3v1h-3m4-1h1v1h-1m2-1h1v1h-1m4-1h1v1h-1m55-1h1v1h-1m4-1h7v1h-7m-65 0h2v1h-2m4-1h3v1h-3m6-1h1v1h-1m4-1h1v1h-1m7-1h1v1h-1m25-1h1v1h-1m4-1h1v1h-1m4-1h1v1h-1m3-1h2v1h-2m5-1h3v1h-3m4-1h2v1h-2m-62 0h2v1h-2m4-1h2v1h-2m4-1h2v1h-2m5-1h1v1h-1m4-1h1v1h-1m4-1h1v1h-1m10-1h1v1h-1m4-1h1v1h-1m4-1h1v1h-1m3-1h1v1h-1m4-1h1v1h-1m4-1h1v1h-1m2-1h1v1h-1m2-1h3v1h-3m5-1h1v1h-1m-51 0h2v1h-2m4-1h2v1h-2m4-1h2v1h-2m4-1h1v1h-1m15-1h1v1h-1m4-1h2v1h-2m4-1h2v1h-2m4-1h2v1h-2m4-1h2v1h-2m-39 0h1v1h-1m4-1h1v1h-1m4-1h1v1h-1m4-1h1v1h-1m4-1h1v1h-1m4-1h1v1h-1m3-1h2v1h-2m4-1h2v1h-2m4-1h2v1h-2m4-1h2v1h-2m-23 0h1v1h-1m4-1h1v1h-1m4-1h1v1h-1m4-1h1v1h-1"/><path class="pl" fill="#4537d5" d="M375 215h1v1h-1m4-1h1v1h-1m4-1h1v1h-1m22-1h1v1h-1m-39 0h1v1h-1m4-1h1v1h-1m9-1h1v1h-1m4-1h1v1h-1m26-1h1v1h-1m4-1h1v1h-1m-51 0h1v1h-1m9-1h1v1h-1m4-1h1v1h-1m8-1h1v1h-1m22-1h1v1h-1m4-1h1v1h-1m8-1h1v1h-1m-59 0h1v1h-1m4-1h1v1h-1m4-1h1v1h-1m5-1h1v1h-1m4-1h1v1h-1m4-1h1v1h-1m9-1h1v1h-1m4-1h1v1h-1m8-1h1v1h-1m4-1h1v1h-1m5-1h1v1h-1m4-1h1v1h-1m4-1h1v1h-1m5-1h1v1h-1m-68 0h1v1h-1m4-1h1v1h-1m17-1h1v1h-1m4-1h1v1h-1m4-1h1v1h-1m5-1h1v1h-1m4-1h1v1h-1m4-1h1v1h-1m4-1h1v1h-1m4-1h1v1h-1m9-1h1v1h-1m8-1h1v1h-1m5-1h1v1h-1m-76 0h1v1h-1m4-1h1v1h-1m4-1h1v1h-1m4-1h1v1h-1m5-1h1v1h-1m4-1h1v1h-1m12-1h1v1h-1m25-1h1v1h-1m5-1h1v1h-1m4-1h1v1h-1m8-1h1v1h-1m5-1h1v1h-1m-84 0h1v1h-1m8-1h1v1h-1m5-1h1v1h-1m8-1h1v1h-1m4-1h1v1h-1m4-1h1v1h-1m4-1h1v1h-1m4-1h2v1h-2m5-1h1v1h-1m4-1h1v1h-1m4-1h1v1h-1m4-1h1v1h-1m4-1h1v1h-1m4-1h1v1h-1m4-1h1v1h-1m5-1h1v1h-1m4-1h1v1h-1m4-1h1v1h-1m9-1h1v1h-1m-88 0h1v1h-1m4-1h1v1h-1m5-1h1v1h-1m4-1h1v1h-1m4-1h1v1h-1m12-1h1v1h-1m4-1h1v1h-1m5-1h1v1h-1m4-1h1v1h-1m4-1h1v1h-1m4-1h1v1h-1m4-1h1v1h-1m4-1h1v1h-1m12-1h1v1h-1m4-1h1v1h-1m9-1h1v1h-1m4-1h1v1h-1m5-1h1v1h-1m-100 0h1v1h-1m4-1h1v1h-1m9-1h1v1h-1m4-1h1v1h-1m4-1h1v1h-1m4-1h1v1h-1m4-1h1v1h-1m4-1h1v1h-1m9-1h1v1h-1m4-1h1v1h-1m24-1h1v1h-1m4-1h1v1h-1m4-1h1v1h-1m4-1h1v1h-1m4-1h1v1h-1m5-1h1v1h-1m8-1h1v1h-1m5-1h1v1h-1m-99 0h1v1h-1m4-1h1v1h-1m4-1h1v1h-1m4-1h1v1h-1m4-1h1v1h-1m4-1h1v1h-1m4-1h1v1h-1m4-1h2v1h-2m5-1h1v1h-1m28-1h1v1h-1m4-1h1v1h-1m4-1h1v1h-1m4-1h1v1h-1m4-1h1v1h-1m4-1h1v1h-1m4-1h1v1h-1m5-1h1v1h-1m4-1h1v1h-1m-103 0h1v1h-1m4-1h1v1h-1m9-1h1v1h-1m4-1h1v1h-1m4-1h1v1h-1m4-1h1v1h-1m5-1h1v1h-1m4-1h1v1h-1m44-1h1v1h-1m4-1h1v1h-1m4-1h1v1h-1m4-1h1v1h-1m4-1h1v1h-1m4-1h1v1h-1m9-1h1v1h-1m4-1h1v1h-1m-115 0h1v1h-1m5-1h1v1h-1m4-1h1v1h-1m4-1h1v1h-1m4-1h1v1h-1m5-1h1v1h-1m4-1h1v1h-1m4-1h1v1h-1m60-1h1v1h-1m4-1h1v1h-1m4-1h1v1h-1m4-1h1v1h-1m4-1h1v1h-1m5-1h1v1h-1m4-1h1v1h-1m4-1h1v1h-1m-114 0h1v1h-1m4-1h1v1h-1m4-1h2v1h-2m5-1h1v1h-1m4-1h1v1h-1m4-1h1v1h-1m68-1h1v1h-1m3-1h2v1h-2m5-1h1v1h-1m4-1h1v1h-1m4-1h1v1h-1m4-1h1v1h-1m-117 0h1v1h-1m4-1h1v1h-1m5-1h1v1h-1m4-1h1v1h-1m4-1h1v1h-1m4-1h1v1h-1m4-1h1v1h-1m75-1h1v1h-1m4-1h1v1h-1m4-1h1v1h-1m5-1h1v1h-1m4-1h1v1h-1m4-1h1v1h-1m5-1h1v1h-1m-126 0h1v1h-1m4-1h1v1h-1m5-1h1v1h-1m4-1h1v1h-1m4-1h1v1h-1m4-1h1v1h-1m83-1h1v1h-1m8-1h1v1h-1m4-1h1v1h-1m5-1h1v1h-1m-120 0h1v1h-1m4-1h1v1h-1m9-1h1v1h-1m3-1h2v1h-2m91-1h1v1h-1m4-1h1v1h-1m8-1h1v1h-1m4-1h1v1h-1m-127 0h1v1h-1m4-1h1v1h-1m9-1h1v1h-1m4-1h1v1h-1m97-1h1v1h-1m5-1h1v1h-1m4-1h1v1h-1m4-1h1v1h-1m5-1h1v1h-1m-136 0h1v1h-1m4-1h1v1h-1m5-1h1v1h-1m4-1h1v1h-1m4-1h1v1h-1m105-1h1v1h-1m4-1h1v1h-1m4-1h1v1h-1m5-1h1v1h-1m5-1h1v1h-1m-140 0h1v1h-1m5-1h1v1h-1m4-1h1v1h-1m5-1h1v1h-1m3-1h1v1h-1m105-1h1v1h-1m4-1h1v1h-1m4-1h1v1h-1m4-1h1v1h-1m5-1h1v1h-1m-143 0h1v1h-1m5-1h1v1h-1m5-1h1v1h-1m4-1h1v1h-1m4-1h1v1h-1m111-1h2v1h-2m5-1h1v1h-1m4-1h1v1h-1m4-1h1v1h-1m5-1h1v1h-1m-146 0h1v1h-1m5-1h1v1h-1m8-1h1v1h-1m119-1h1v1h-1m9-1h1v1h-1m4-1h1v1h-1m-149 0h1v1h-1m5-1h1v1h-1m8-1h2v1h-2m4-1h1v1h-1m119-1h1v1h-1m4-1h1v1h-1m4-1h1v1h-1m4-1h1v1h-1m5-1h1v1h-1m-152 0h1v1h-1m5-1h1v1h-1m4-1h1v1h-1m4-1h1v1h-1m125-1h1v1h-1m4-1h2v1h-2m5-1h1v1h-1m4-1h1v1h-1m-155 0h1v1h-1m5-1h1v1h-1m4-1h2v1h-2m5-1h1v1h-1m132-1h1v1h-1m4-1h1v1h-1m4-1h1v1h-1m5-1h1v1h-1m-158 0h1v1h-1m9-1h1v1h-1m4-1h1v1h-1m131-1h2v1h-2m9-1h1v1h-1m4-1h1v1h-1m-160 0h1v1h-1m8-1h2v1h-2m4-1h2v1h-2m139-1h1v1h-1m4-1h1v1h-1m4-1h1v1h-1m5-1h1v1h-1m-163 0h1v1h-1m4-1h1v1h-1m4-1h1v1h-1m4-1h1v1h-1m137-1h1v1h-1m4-1h1v1h-1m5-1h1v1h-1m4-1h1v1h-1m-166 0h1v1h-1m4-1h1v1h-1m4-1h2v1h-2m5-1h1v1h-1m144-1h1v1h-1m3-1h2v1h-2m5-1h1v1h-1m4-1h1v1h-1m-164 0h1v1h-1m4-1h1v1h-1m4-1h1v1h-1m143-1h1v1h-1m4-1h1v1h-1m-162 0h1v1h-1m4-1h1v1h-1m4-1h1v1h-1m4-1h1v1h-1m149-1h1v1h-1m4-1h1v1h-1m4-1h1v1h-1m4-1h1v1h-1m-172 0h1v1h-1m4-1h1v1h-1m4-1h1v1h-1m152-1h1v1h-1m3-1h1v1h-1m5-1h1v1h-1m3-1h1v1h-1m-170 0h1v1h-1m3-1h1v1h-1m4-1h2v1h-2m155-1h1v1h-1m4-1h1v1h-1m4-1h1v1h-1m-174 0h1v1h-1m5-1h1v1h-1m3-1h2v1h-2m4-1h1v1h-1m154-1h1v1h-1m3-1h1v1h-1m4-1h1v1h-1m4-1h1v1h-1m-176 0h1v1h-1m4-1h1v1h-1m4-1h1v1h-1m159-1h1v1h-1m4-1h1v1h-1m5-1h1v1h-1m-179 0h1v1h-1m4-1h1v1h-1m4-1h1v1h-1m3-1h1v1h-1m159-1h1v1h-1m3-1h2v1h-2m4-1h2v1h-2m4-1h1v1h-1m-180 0h1v1h-1m4-1h1v1h-1m4-1h1v1h-1m163-1h2v1h-2m4-1h1v1h-1m4-1h1v1h-1m-182 0h1v1h-1m4-1h1v1h-1m4-1h1v1h-1m3-1h1v1h-1m171-1h1v1h-1m3-1h1v1h-1m-184 0h1v1h-1m4-1h1v1h-1m3-1h2v1h-2m169-1h1v1h-1m3-1h2v1h-2m4-1h1v1h-1m-182 0h1v1h-1m7-1h1v1h-1m167-1h1v1h-1m7-1h1v1h-1m-184 0h1v1h-1m4-1h1v1h-1m4-1h1v1h-1m171-1h2v1h-2m4-1h1v1h-1m-182 0h2v1h-2m4-1h1v1h-1m3-1h1v1h-1m171-1h1v1h-1m3-1h2v1h-2m4-1h2v1h-2m-184 0h1v1h-1m4-1h1v1h-1m-7 0h1v1h-1m4-1h1v1h-1m4-1h1v1h-1m173-1h2v1h-2m4-1h1v1h-1m4-1h1v1h-1m-191 0h1v1h-1m3-1h1v1h-1m4-1h1v1h-1m179-1h1v1h-1m4-1h1v1h-1m3-1h1v1h-1m-192 0h1v1h-1m3-1h2v1h-2m4-1h1v1h-1m177-1h1v1h-1m3-1h2v1h-2m4-1h1v1h-1m-190 0h1v1h-1m4-1h1v1h-1m2-1h1v1h-1m177-1h1v1h-1m2-1h2v1h-2m4-1h1v1h-1m-192 0h1v1h-1m4-1h1v1h-1m4-1h1v1h-1m179-1h2v1h-2m4-1h1v1h-1m4-1h1v1h-1m-194 0h1v1h-1m4-1h1v1h-1m3-1h1v1h-1m179-1h1v1h-1m3-1h2v1h-2m4-1h1v1h-1m-195 0h1v1h-1m3-1h2v1h-2m4-1h2v1h-2m183-1h1v1h-1m3-1h2v1h-2m4-1h1v1h-1m-196 0h1v1h-1m4-1h1v1h-1m3-1h1v1h-1m181-1h1v1h-1m3-1h1v1h-1m4-1h1v1h-1m-194 0h1v1h-1m4-1h1v1h-1m185-1h2v1h-2m4-1h1v1h-1m-195 0h1v1h-1m3-1h2v1h-2m4-1h1v1h-1m183-1h2v1h-2m3-1h2v1h-2m4-1h1v1h-1m-196 0h2v1h-2m4-1h1v1h-1m187-1h2v1h-2m3-1h2v1h-2m-196 0h1v1h-1m4-1h1v1h-1m3-1h1v1h-1m185-1h1v1h-1m4-1h1v1h-1m3-1h1v1h-1m-197 0h1v1h-1m3-1h1v1h-1m2-1h1v1h-1m185-1h1v1h-1m2-1h2v1h-2m4-1h1v1h-1m-195 0h1v1h-1m190-1h1v1h-1m3-1h2v1h-2m-196 0h1v1h-1m4-1h1v1h-1m3-1h1v1h-1m185-1h2v1h-2m3-1h1v1h-1m4-1h1v1h-1m-197 0h1v1h-1m4-1h1v1h-1m191-1h1v1h-1m-197 0h1v1h-1m3-1h2v1h-2m3-1h2v1h-2m187-1h1v1h-1m2-1h2v1h-2m4-1h1v1h-1m-194 0h1v1h-1m189-1h2v1h-2m-192 0h2v1h-2m4-1h1v1h-1m187-1h1v1h-1m3-1h2v1h-2m-196 0h1v1h-1m2-1h1v1h-1m2-1h3v1h-3m189-1h1v1h-1m2-1h1v1h-1m4-1h1v1h-1m-196 0h1v1h-1m3-1h1v1h-1m188-1h1v1h-1m3-1h1v1h-1m-194 0h2v1h-2m3-1h1v1h-1m187-1h1v1h-1m2-1h2v1h-2m3-1h1v1h-1m-196 0h1v1h-1m3-1h2v1h-2m189-1h1v1h-1m3-1h1v1h-1m-194 0h2v1h-2m3-1h2v1h-2m187-1h1v1h-1m3-1h1v1h-1m-195 0h2v1h-2m4-1h1v1h-1m189-1h1v1h-1m3-1h2v1h-2m-194 0h2v1h-2m3-1h2v1h-2m187-1h1v1h-1m2-1h2v1h-2m-193 0h1v1h-1m3-1h3v1h-3m187-1h1v1h-1m2-1h1v1h-1m3-1h1v1h-1m-194 0h2v1h-2m3-1h2v1h-2m186-1h2v1h-2m3-1h2v1h-2m-190 0h3v1h-3m187-1h3v1h-3m-189 0h2v1h-2m4-1h1v1h-1m185-1h2v1h-2m3-1h2v1h-2m-190 0h1v1h-1m187-1h3v1h-3m0 0h2v1h-2m-2 0h1v1h-1m3-1h2v1h-2m-184 0h1v1h-1m181-1h3v1h-3m0 0h1v1h-1m2-1h3v1h-3m-3 0h3v1h-3m-182 0h1v1h-1m182-1h1v1h-1m3-1h1v1h-1m-4 0h2v1h-2m-177 0h1v1h-1m177-1h3v1h-3m-176 0h1v1h-1m174-1h2v1h-2m3-1h1v1h-1m-2 0h2v1h-2m-2 0h1v1h-1m2-1h2v1h-2m-173 0h1v1h-1m171-1h2v1h-2m-169 0h1v1h-1m167-1h3v1h-3m-167 0h1v1h-1m167-1h2v1h-2m-1 0h2v1h-2m0 0h1v1h-1m-3 0h1v1h-1m0 0h1v1h-1m2-1h1v1h-1m-159 0h1v1h-1m155-1h2v1h-2m-155 0h2v1h-2m155-1h1v1h-1m-154 0h2v1h-2m153-1h1v1h-1m-150 0h1v1h-1m149-1h1v1h-1m-148 0h2v1h-2m145-1h1v1h-1m-144 0h2v1h-2m143-1h1v1h-1m-139 1h1v1h-1m135-1h1v1h-1m-133 0h1v1h-1m132-1h1v1h-1m-122 5h1v1h-1m112-1h1v1h-1m-105 2h1v1h-1m97-1h1v1h-1m-94 0h4v1h-4m89-1h1v1h-1m2-1h1v1h-1m-87 0h1v1h-1m2-1h2v1h-2m78-1h2v1h-2m3-1h1v1h-1m-79 0h1v1h-1m2-1h2v1h-2m4-1h1v1h-1m63-1h1v1h-1m3-1h2v1h-2m3-1h2v1h-2m-71 0h1v1h-1m2-1h2v1h-2m5-1h1v1h-1m54-1h1v1h-1m3-1h2v1h-2m4-1h1v1h-1m-64 0h1v1h-1m3-1h2v1h-2m4-1h1v1h-1m4-1h1v1h-1m41-1h2v1h-2m4-1h1v1h-1m4-1h1v1h-1m-56 0h1v1h-1m3-1h2v1h-2m4-1h1v1h-1m4-1h1v1h-1m13-1h1v1h-1m12-1h1v1h-1m4-1h1v1h-1m4-1h1v1h-1m4-1h1v1h-1m4-1h1v1h-1m-44 0h1v1h-1m3-1h2v1h-2m4-1h2v1h-2m4-1h2v1h-2m5-1h1v1h-1m4-1h1v1h-1m4-1h1v1h-1m4-1h1v1h-1m4-1h1v1h-1m4-1h1v1h-1m-24 0h1v1h-1m4-1h1v1h-1m4-1h1v1h-1m4-1h1v1h-1"/><path class="pl" fill="#4741e5" d="M387 205h1v1h-1m5-1h1v1h-1m-19 0h1v1h-1m10-1h1v1h-1m14-1h1v1h-1m4-1h1v1h-1m5-1h1v1h-1m-23 0h1v1h-1m4-1h1v1h-1m5-1h1v1h-1m5-1h1v1h-1m4-1h1v1h-1m14-1h1v1h-1m-55 0h1v1h-1m60-1h1v1h-1m-42 0h1v1h-1m5-1h1v1h-1m4-1h1v1h-1m9-1h1v1h-1m5-1h1v1h-1m23-1h1v1h-1m-73 0h1v1h-1m36-1h1v1h-1m37-1h1v1h-1m4-1h1v1h-1m-81 0h1v1h-1m4-1h1v1h-1m10-1h1v1h-1m13-1h1v1h-1m5-1h1v1h-1m4-1h1v1h-1m18-1h1v1h-1m4-1h1v1h-1m23-1h1v1h-1m5-1h1v1h-1m-91 0h1v1h-1m5-1h1v1h-1m23-1h1v1h-1m9-1h1v1h-1m4-1h1v1h-1m4-1h1v1h-1m14-1h1v1h-1m31-1h1v1h-1m5-1h1v1h-1m-99 0h1v1h-1m23-1h1v1h-1m9-1h1v1h-1m4-1h1v1h-1m13-1h1v1h-1m18-1h1v1h-1m4-1h1v1h-1m9-1h1v1h-1m23-1h1v1h-1m-98 0h1v1h-1m14-1h1v1h-1m4-1h1v1h-1m5-1h1v1h-1m8-1h1v1h-1m5-1h1v1h-1m4-1h1v1h-1m18-1h1v1h-1m4-1h1v1h-1m9-1h1v1h-1m4-1h1v1h-1m5-1h1v1h-1m14-1h1v1h-1m-103 0h1v1h-1m5-1h1v1h-1m4-1h1v1h-1m9-1h1v1h-1m5-1h1v1h-1m9-1h1v1h-1m4-1h1v1h-1m39-1h1v1h-1m5-1h1v1h-1m8-1h1v1h-1m5-1h1v1h-1m9-1h1v1h-1m5-1h1v1h-1m4-1h1v1h-1m-115 0h1v1h-1m9-1h1v1h-1m9-1h1v1h-1m5-1h1v1h-1m9-1h1v1h-1m56-1h1v1h-1m9-1h1v1h-1m4-1h1v1h-1m9-1h1v1h-1m5-1h1v1h-1m5-1h1v1h-1m-106 0h1v1h-1m5-1h1v1h-1m4-1h1v1h-1m4-1h1v1h-1m65-1h1v1h-1m4-1h1v1h-1m5-1h1v1h-1m4-1h1v1h-1m-109 0h1v1h-1m9-1h1v1h-1m5-1h1v1h-1m4-1h1v1h-1m5-1h1v1h-1m81-1h1v1h-1m5-1h1v1h-1m4-1h1v1h-1m5-1h1v1h-1m10-1h1v1h-1m-127 0h1v1h-1m4-1h1v1h-1m5-1h1v1h-1m4-1h1v1h-1m99-1h1v1h-1m4-1h1v1h-1m5-1h1v1h-1m-103 0h1v1h-1m89-1h1v1h-1m-111 0h1v1h-1m4-1h1v1h-1m10-1h1v1h-1m4-1h1v1h-1m97-1h1v1h-1m5-1h1v1h-1m4-1h1v1h-1m5-1h1v1h-1m5-1h1v1h-1m-139 0h1v1h-1m10-1h1v1h-1m5-1h1v1h-1m4-1h1v1h-1m105-1h1v1h-1m5-1h1v1h-1m4-1h1v1h-1m10-1h1v1h-1m-142 0h1v1h-1m5-1h1v1h-1m132-1h1v1h-1m4-1h1v1h-1m-136 0h1v1h-1m9-1h1v1h-1m113-1h1v1h-1m9-1h1v1h-1m10-1h1v1h-1m-150 0h1v1h-1m5-1h1v1h-1m10-1h1v1h-1m120-1h1v1h-1m9-1h1v1h-1m5-1h1v1h-1m-10 0h1v1h-1m14-1h1v1h-1m-142 0h1v1h-1m127-1h1v1h-1m5-1h1v1h-1m5-1h1v1h-1m4-1h1v1h-1m-150 0h1v1h-1m145-1h1v1h-1m-5 0h1v1h-1m4-1h1v1h-1m5-1h1v1h-1m5-1h1v1h-1m-5 0h1v1h-1m9-1h1v1h-1m-15 0h1v1h-1m5-1h1v1h-1m5-1h1v1h-1m-1 0h1v1h-1m5-1h1v1h-1m4-1h1v1h-1m-171 0h1v1h-1m5-1h1v1h-1m4-1h1v1h-1m148-1h1v1h-1m4-1h1v1h-1m5-1h1v1h-1m-170 0h1v1h-1m169-1h1v1h-1m5-1h1v1h-1m-165 0h1v1h-1m155-1h1v1h-1m9-1h1v1h-1m4-1h1v1h-1m-6 0h1v1h-1m-177 0h1v1h-1m4-1h1v1h-1m9-1h1v1h-1m160-1h1v1h-1m8-1h1v1h-1m5-1h1v1h-1m-185 0h1v1h-1m175-1h1v1h-1m9-1h1v1h-1m-175 0h1v1h-1m165-1h1v1h-1m5-1h1v1h-1m-183 0h1v1h-1m9-1h1v1h-1m173-1h1v1h-1m5-1h1v1h-1m4-1h1v1h-1m-181 0h1v1h-1m171-1h1v1h-1m4-1h1v1h-1m5-1h1v1h-1m-192 0h1v1h-1m9-1h1v1h-1m177-1h1v1h-1m5-1h1v1h-1m4-1h1v1h-1m-5 0h1v1h-1m4-1h1v1h-1m-187 0h1v1h-1m-4 0h1v1h-1m190-1h1v1h-1m4-1h1v1h-1m-193 0h1v1h-1m4-1h1v1h-1m179-1h1v1h-1m5-1h1v1h-1m4-1h1v1h-1m-191 0h1v1h-1m186-1h1v1h-1m4-1h1v1h-1m4-1h1v1h-1m-197 0h1v1h-1m4-1h1v1h-1m183-1h1v1h-1m4-1h1v1h-1m4-1h1v1h-1m-194 0h1v1h-1m189-1h1v1h-1m-193 0h1v1h-1m5-1h1v1h-1m187-1h1v1h-1m5-1h1v1h-1m4-1h1v1h-1m-202 1h1v1h-1m3-1h1v1h-1m193-1h1v1h-1m4-1h1v1h-1m3-1h1v1h-1m-206 0h1v1h-1m8-1h1v1h-1m190-1h1v1h-1m-193 0h1v1h-1m195-1h1v1h-1m-202 0h1v1h-1m4-1h1v1h-1m4-1h1v1h-1m193-1h1v1h-1m5-1h1v1h-1m3-1h1v1h-1m-208 0h1v1h-1m4-1h1v1h-1m200-1h1v1h-1m3-1h1v1h-1m-205 0h1v1h-1m3-1h1v1h-1m197-1h1v1h-1m4-1h1v1h-1m-208 0h1v1h-1m5-1h1v1h-1m3-1h1v1h-1m195-1h1v1h-1m4-1h1v1h-1m4-1h1v1h-1m-210 0h1v1h-1m5-1h1v1h-1m199-1h1v1h-1m5-1h1v1h-1m-210 0h1v1h-1m3-1h1v1h-1m4-1h1v1h-1m197-1h1v1h-1m8-1h1v1h-1m-211 0h1v1h-1m3-1h1v1h-1m203-1h1v1h-1m4-1h1v1h-1m-206 0h1v1h-1m201-1h1v1h-1m3-1h1v1h-1m-210 0h1v1h-1m4-1h1v1h-1m3-1h1v1h-1m199-1h1v1h-1m3-1h1v1h-1m4-1h1v1h-1m-212 0h1v1h-1m5-1h1v1h-1m202-1h1v1h-1m4-1h1v1h-1m-209 0h1v1h-1m4-1h1v1h-1m200-1h1v1h-1m4-1h1v1h-1m-211 0h1v1h-1m4-1h1v1h-1m205-1h1v1h-1m4-1h1v1h-1m-212 0h1v1h-1m211-1h1v1h-1m-212 0h1v1h-1m3-1h2v1h-2m3-1h1v1h-1m201-1h1v1h-1m3-1h2v1h-2m3-1h1v1h-1m-212 0h1v1h-1m2 0h1v1h-1m3-1h1v1h-1m201-1h1v1h-1m4-1h1v1h-1m-211 0h1v1h-1m4-1h1v1h-1m206-1h1v1h-1m3-1h1v1h-1m-212 0h1v1h-1m4-1h1v1h-1m203-1h1v1h-1m4-1h1v1h-1m-209 0h1v1h-1m3-1h1v1h-1m201-1h1v1h-1m4-1h1v1h-1m-210 0h1v1h-1m3-1h2v1h-2m204-1h2v1h-2m5-1h1v1h-1m-211 0h2v1h-2m4-1h1v1h-1m201-1h1v1h-1m3-1h1v1h-1m-209 0h1v1h-1m211-1h1v1h-1m-210 0h1v1h-1m4-1h1v1h-1m202-1h1v1h-1m3-1h1v1h-1m-204 0h1v1h-1m200-1h1v1h-1m3-1h1v1h-1m-208 0h1v1h-1m3-1h2v1h-2m202-1h2v1h-2m4-1h1v1h-1m-208 0h1v1h-1m4-1h1v1h-1m203-1h1v1h-1m-205 0h2v1h-2m203-1h1v1h-1m-205 0h2v1h-2m4-1h1v1h-1m202-1h2v1h-2m-203 0h1v1h-1m2-1h1v1h-1m197-1h1v1h-1m3-1h1v1h-1m-204 0h1v1h-1m3-1h1v1h-1m198-1h1v1h-1m2-1h1v1h-1m2-1h1v1h-1m-200 0h1v1h-1m195-1h1v1h-1m4-1h1v1h-1m-201 0h1v1h-1m198-1h1v1h-1m2-1h1v1h-1m-198 0h1v1h-1m195-1h1v1h-1m2-1h1v1h-1m-3 0h1v1h-1m-193 0h1v1h-1m193-1h2v1h-2m3-1h1v1h-1m-1 0h1v1h-1m-3 0h1v1h-1m-2 0h1v1h-1m3-1h1v1h-1m-1 0h1v1h-1m-2 0h3v1h-3m-2 0h1v1h-1m3-1h1v1h-1m-2 0h1v1h-1m-184 0h1v1h-1m181-1h1v1h-1m2-1h1v1h-1m2-1h1v1h-1m-181 1h1v1h-1m175-1h2v1h-2m2 0h1v1h-1m-3 0h2v1h-2m-172 0h1v1h-1m171-1h1v1h-1m-2 0h1v1h-1m-1 0h1v1h-1m-163 1h2v1h-2m161-1h1v1h-1m-1 0h1v1h-1m-1 0h1v1h-1m-154 0h1v1h-1m150 0h1v1h-1m-4 1h1v1h-1m-3 2h1v1h-1m-131 0h1v1h-1m1 0h1v1h-1m125-1h1v1h-1m-122 0h1v1h-1m119-1h2v1h-2m-117 0h1v1h-1m2-1h1v1h-1m111-1h1v1h-1m2-1h1v1h-1m-112 0h2v1h-2m109-1h2v1h-2m-107 0h3v1h-3m103-1h3v1h-3m-100 0h2v1h-2m3-1h1v1h-1m94-1h1v1h-1m2-1h1v1h-1m-96 0h3v1h-3m4-1h1v1h-1m85-1h1v1h-1m2-1h3v1h-3m-86 0h2v1h-2m3-1h1v1h-1m77-1h1v1h-1m2-1h3v1h-3m-78 0h2v1h-2m4-1h1v1h-1m70-1h2v1h-2m-70 0h2v1h-2m4-1h2v1h-2m59-1h1v1h-1m3-1h2v1h-2m-61 0h2v1h-2m3-1h3v1h-3m46-1h1v1h-1m4-1h2v1h-2m4-1h1v1h-1m-52 0h1v1h-1m3-1h2v1h-2m5-1h1v1h-1m31-1h1v1h-1m4-1h2v1h-2m5-1h1v1h-1m-40 0h1v1h-1m4-1h2v1h-2m5-1h1v1h-1m4-1h1v1h-1m5-1h1v1h-1m4-1h2v1h-2m5-1h1v1h-1m4-1h1v1h-1"/><path class="pl" fill="#484df0" d="M378 198h1v1h-1m9-1h1v1h-1m5-1h1v1h-1m10-1h1v1h-1m-34 0h1v1h-1m43-1h1v1h-1m-48 0h1v1h-1m15-1h1v1h-1m9-1h1v1h-1m5-1h1v1h-1m10-1h1v1h-1m14-1h1v1h-1m-58 0h1v1h-1m10-1h1v1h-1m5-1h1v1h-1m33-1h1v1h-1m15-1h1v1h-1m-67 0h1v1h-1m9-1h1v1h-1m20-1h1v1h-1m4-1h1v1h-1m5-1h1v1h-1m5-1h1v1h-1m5-1h1v1h-1m14-1h1v1h-1m10-1h1v1h-1m-77 0h1v1h-1m10-1h1v1h-1m9-1h1v1h-1m5-1h1v1h-1m33-1h1v1h-1m5-1h1v1h-1m19-1h1v1h-1m-86 0h1v1h-1m5-1h1v1h-1m10-1h1v1h-1m14-1h1v1h-1m10-1h1v1h-1m4-1h1v1h-1m5-1h1v1h-1m5-1h1v1h-1m9-1h1v1h-1m10-1h1v1h-1m4-1h1v1h-1m10-1h1v1h-1m-90 0h1v1h-1m5-1h1v1h-1m24-1h1v1h-1m42-1h1v1h-1m23-1h1v1h-1m5-1h1v1h-1m-104 0h1v1h-1m85-1h1v1h-1m24-1h1v1h-1m-104 0h1v1h-1m99-1h1v1h-1m-108 0h1v1h-1m5-1h1v1h-1m14-1h1v1h-1m79-1h1v1h-1m14-1h1v1h-1m5-1h1v1h-1m-121 0h1v1h-1m19-1h1v1h-1m87-1h1v1h-1m20-1h1v1h-1m-121 0h1v1h-1m5-1h1v1h-1m5-1h1v1h-1m96-1h1v1h-1m5-1h1v1h-1m5-1h1v1h-1m-125 0h1v1h-1m5-1h1v1h-1m4-1h1v1h-1m115-1h1v1h-1m5-1h1v1h-1m5-1h1v1h-1m-120 0h1v1h-1m105-1h1v1h-1m-123 0h1v1h-1m14-1h1v1h-1m113-1h1v1h-1m10-1h1v1h-1m5-1h1v1h-1m-146 1h1v1h-1m9-1h1v1h-1m5-1h1v1h-1m121-1h1v1h-1m5-1h1v1h-1m10-1h1v1h-1m-145 0h1v1h-1m5-1h1v1h-1m129-1h1v1h-1m5-1h1v1h-1m-144 0h1v1h-1m149-1h1v1h-1m5-1h1v1h-1m-153 0h1v1h-1m5-1h1v1h-1m137-1h1v1h-1m5-1h1v1h-1m-151 0h1v1h-1m156-1h1v1h-1m4-1h1v1h-1m-159 0h1v1h-1m4-1h1v1h-1m145-1h1v1h-1m5-1h1v1h-1m4 0h1v1h-1m-167 0h1v1h-1m172-1h1v1h-1m-167 0h1v1h-1m161-1h1v1h-1m5-1h1v1h-1m-165 0h1v1h-1m159-1h1v1h-1m10-1h1v1h-1m-173 0h1v1h-1m168-1h1v1h-1m-177 0h1v1h-1m10-1h1v1h-1m166-1h1v1h-1m5-1h1v1h-1m4-1h1v1h-1m-5 0h1v1h-1m4 0h1v1h-1m-5 0h1v1h-1m4-1h1v1h-1m5-1h1v1h-1m-189 0h1v1h-1m188-1h1v1h-1m-5 0h1v1h-1m8-1h1v1h-1m-190 0h1v1h-1m186-1h1v1h-1m-190 0h1v1h-1m5-1h1v1h-1m183-1h1v1h-1m5-1h1v1h-1m-1 0h1v1h-1m5-1h1v1h-1m-1 0h1v1h-1m-194 0h1v1h-1m189-1h1v1h-1m-192 0h1v1h-1m195-1h1v1h-1m5-1h1v1h-1m-203 0h1v1h-1m197-1h1v1h-1m4 0h1v1h-1m4-1h1v1h-1m-1 1h1v1h-1m-2 0h1v1h-1m5-1h1v1h-1m-211 0h1v1h-1m205-1h1v1h-1m4-1h1v1h-1m-1 1h1v1h-1m4-1h1v1h-1m-5 0h1v1h-1m4-1h1v1h-1m-1 0h1v1h-1m3-1h1v1h-1m-216 1h1v1h-1m211-1h1v1h-1m4-1h1v1h-1m-1 0h1v1h-1m4-1h1v1h-1m-5 0h1v1h-1m3-1h1v1h-1m-1 1h1v1h-1m3-1h1v1h-1m-4 0h1v1h-1m2 0h1v1h-1m-215 0h1v1h-1m214-1h1v1h-1m4-1h1v1h-1m-1 0h1v1h-1m-2 0h1v1h-1m-216 0h1v1h-1m218 0h1v1h-1m-220 0h1v1h-1m219-1h1v1h-1m3-1h1v1h-1m-4 0h1v1h-1m2-1h1v1h-1m-220 1h1v1h-1m219-1h1v1h-1m3-1h1v1h-1m-220 0h1v1h-1m216-1h1v1h-1m-218 0h1v1h-1m219-1h1v1h-1m-221 0h1v1h-1m4-1h1v1h-1m216-1h1v1h-1m4-1h1v1h-1m-223 0h1v1h-1m221-1h1v1h-1m-220 0h1v1h-1m219-1h1v1h-1m-221 0h1v1h-1m4-1h1v1h-1m219-1h1v1h-1m-221 0h1v1h-1m220-1h1v1h-1m-221 0h1v1h-1m221-1h1v1h-1m-220 0h1v1h-1m2-1h1v1h-1m215-1h1v1h-1m2-1h1v1h-1m-217 0h1v1h-1m-2 0h1v1h-1m3-1h1v1h-1m214-1h1v1h-1m-215 1h1v1h-1m215-1h1v1h-1m-213 0h1v1h-1m212-1h1v1h-1m1 0h1v1h-1m-214 0h1v1h-1m213-1h1v1h-1m-211 0h1v1h-1m-2 0h1v1h-1m213-1h1v1h-1m-212 0h3v1h-3m209-1h1v1h-1m2-1h2v1h-2m-2 1h1v1h-1m-206 0h1v1h-1m205-1h1v1h-1m2-1h1v1h-1m-4 3h1v1h-1m-2 0h1v1h-1m2-1h1v1h-1m-3 1h1v1h-1m-1 0h1v1h-1m-2 1h1v1h-1m-3 2h1v1h-1m-182 0h1v1h-1m177 3h1v1h-1m-2 0h1v1h-1m-167 0h1v1h-1m165-1h1v1h-1m-164 0h1v1h-1m163-1h1v1h-1m-161 0h2v1h-2m159-1h1v1h-1m-157 0h1v1h-1m155-1h2v1h-2m-152 0h1v1h-1m150-1h1v1h-1m-150 0h2v1h-2m148-1h2v1h-2m-146 0h1v1h-1m2-1h1v1h-1m142-1h1v1h-1m-142 0h2v1h-2m140-1h2v1h-2m-138 0h1v1h-1m2-1h1v1h-1m135-1h1v1h-1m-135 0h2v1h-2m132-1h2v1h-2m-130 0h1v1h-1m2-1h2v1h-2m125-1h3v1h-3m-124 0h2v1h-2m122-1h2v1h-2m-119 0h2v1h-2m116-1h2v1h-2m-114 0h1v1h-1m2-1h2v1h-2m108-1h2v1h-2m3-1h1v1h-1m-109 0h1v1h-1m3-1h1v1h-1m99-1h1v1h-1m3-1h2v1h-2m-102 0h2v1h-2m98-1h2v1h-2m-96 0h1v1h-1m2-1h2v1h-2m90-1h2v1h-2m4-1h1v1h-1m-92 0h1v1h-1m3-1h1v1h-1m81-1h1v1h-1m3-1h1v1h-1m-83 0h1v1h-1m4-1h1v1h-1m71-1h2v1h-2m4-1h1v1h-1m-75 0h2v1h-2m4-1h2v1h-2m58-1h1v1h-1m4-1h2v1h-2m4-1h2v1h-2m-65 0h1v1h-1m4-1h2v1h-2m10-1h1v1h-1m38-1h1v1h-1m4-1h2v1h-2m5-1h1v1h-1m-52 0h2v1h-2m5-1h1v1h-1m5-1h1v1h-1m24-1h1v1h-1m4-1h1v1h-1m5-1h1v1h-1m-38 0h1v1h-1m5-1h1v1h-1m4-1h2v1h-2m5-1h1v1h-1m5-1h1v1h-1m5-1h1v1h-1m4-1h2v1h-2m5-1h1v1h-1"/><path class="pl" fill="#4758f8" d="M377 190h1v1h-1m5-1h1v1h-1m5-1h1v1h-1m5-1h1v1h-1m5-1h1v1h-1m5-1h1v1h-1m-30 0h1v1h-1m35-1h1v1h-1m-45 0h1v1h-1m15-1h1v1h-1m5-1h1v1h-1m5-1h1v1h-1m5-1h1v1h-1m5-1h1v1h-1m5-1h1v1h-1m15-1h1v1h-1m-60 0h1v1h-1m10-1h1v1h-1m5-1h1v1h-1m35-1h1v1h-1m5-1h1v1h-1m10-1h1v1h-1m-45 0h1v1h-1m5-1h1v1h-1m5-1h1v1h-1m5-1h1v1h-1m5-1h1v1h-1m5-1h1v1h-1m-55 0h1v1h-1m10-1h1v1h-1m10-1h1v1h-1m5-1h1v1h-1m35-1h1v1h-1m5-1h1v1h-1m10-1h1v1h-1m-80 0h1v1h-1m10-1h1v1h-1m10-1h1v1h-1m20-1h1v1h-1m5-1h1v1h-1m5-1h1v1h-1m5-1h1v1h-1m5-1h1v1h-1m15-1h1v1h-1m10-1h1v1h-1m10-1h1v1h-1m-99 0h1v1h-1m10-1h1v1h-1m10-1h1v1h-1m10-1h1v1h-1m4-1h1v1h-1m35-1h1v1h-1m5-1h1v1h-1m20-1h1v1h-1m10-1h1v1h-1m-99 0h1v1h-1m10-1h1v1h-1m10-1h1v1h-1m54-1h1v1h-1m10-1h1v1h-1m9-1h1v1h-1m-88 0h1v1h-1m10-1h1v1h-1m63-1h1v1h-1m10-1h1v1h-1m-88 0h1v1h-1m10-1h1v1h-1m73-1h1v1h-1m10-1h1v1h-1m-102 0h1v1h-1m5-1h1v1h-1m10-1h1v1h-1m97-1h1v1h-1m-122 0h1v1h-1m5-1h1v1h-1m121-1h1v1h-1m5-1h1v1h-1m-121 0h1v1h-1m111-1h1v1h-1m-125 0h1v1h-1m5-1h1v1h-1m5-1h1v1h-1m120-1h1v1h-1m5-1h1v1h-1m5-1h1v1h-1m-140 1h1v1h-1m5-1h1v1h-1m5-1h1v1h-1m119-1h1v1h-1m5-1h1v1h-1m5-1h1v1h-1m-148 1h1v1h-1m5-1h1v1h-1m5-1h1v1h-1m5-1h1v1h-1m127-1h1v1h-1m5-1h1v1h-1m5-1h1v1h-1m5-1h1v1h-1m-151 0h1v1h-1m5-1h1v1h-1m135-1h1v1h-1m5-1h1v1h-1m-155 0h1v1h-1m160-1h1v1h-1m5-1h1v1h-1m-154 0h1v1h-1m-15 0h1v1h-1m5-1h1v1h-1m163-1h1v1h-1m5-1h1v1h-1m-162 0h1v1h-1m156 0h1v1h-1m5-1h1v1h-1m-175 0h1v1h-1m10-1h1v1h-1m160-1h1v1h-1m10-1h1v1h-1m-175 0h1v1h-1m169-1h1v1h-1m-178 0h1v1h-1m183-1h1v1h-1m4-1h1v1h-1m-181 0h1v1h-1m4-1h1v1h-1m167-1h1v1h-1m5-1h1v1h-1m4 0h1v1h-1m-179 0h1v1h-1m183-1h1v1h-1m-1 0h1v1h-1m-5 0h1v1h-1m9-1h1v1h-1m-5 0h1v1h-1m4 0h1v1h-1m-200 0h1v1h-1m8-1h1v1h-1m187-1h1v1h-1m9-1h1v1h-1m-200 0h1v1h-1m195-1h1v1h-1m-198 0h1v1h-1m4-1h1v1h-1m193-1h1v1h-1m5-1h1v1h-1m-201 0h1v1h-1m200-1h1v1h-1m3 0h1v1h-1m-210 0h1v1h-1m206-1h1v1h-1m8-1h1v1h-1m-213 1h1v1h-1m207-1h1v1h-1m4-1h1v1h-1m-210 0h1v1h-1m209-1h1v1h-1m5-1h1v1h-1m-213 1h1v1h-1m207-1h1v1h-1m4-1h1v1h-1m3 0h1v1h-1m-1 0h1v1h-1m-4 0h1v1h-1m-218 0h1v1h-1m4-1h1v1h-1m217-1h1v1h-1m4-1h1v1h-1m-5 0h1v1h-1m3 1h1v1h-1m3-1h1v1h-1m-5 0h1v1h-1m4-1h1v1h-1m-1 0h1v1h-1m3-1h1v1h-1m-228 1h1v1h-1m4-1h1v1h-1m220-1h1v1h-1m3-1h1v1h-1m-1 0h1v1h-1m3-1h1v1h-1m-1 1h1v1h-1m-1 0h1v1h-1m-1 1h1v1h-1m3-1h1v1h-1m-232 0h1v1h-1m3-1h1v1h-1m230-1h1v1h-1m-1 1h1v1h-1m-1 0h1v1h-1m-1 0h1v1h-1m3-1h1v1h-1m-2 1h1v1h-1m3-1h1v1h-1m-1 0h1v1h-1m-2 1h1v1h-1m2-1h1v1h-1m-3 0h1v1h-1m1 0h1v1h-1m2 0h1v1h-1m-1 0h1v1h-1m-1 0h1v1h-1m1 0h1v1h-1m-3 0h1v1h-1m2-1h1v1h-1m-226 1h1v1h-1m224-1h1v1h-1m2-1h1v1h-1m-2 1h1v1h-1m-223 0h1v1h-1m222-1h1v1h-1m0 1h2v1h-2m-221 0h1v1h-1m0 1h1v1h-1m220-1h1v1h-1m-219 0h1v1h-1m217-1h1v1h-1m0 0h1v1h-1m-216 0h1v1h-1m215-1h1v1h-1m2-1h1v1h-1m-2 2h1v1h-1m-3 1h1v1h-1m-1 0h1v1h-1m-2 1h2v1h-2m-2 2h1v1h-1m-1 0h1v1h-1m-2 0h2v1h-2m0 0h1v1h-1m-3 1h1v1h-1m-186 0h1v1h-1m185-1h1v1h-1m-2 0h2v1h-2m-1 0h2v1h-2m-177 0h1v1h-1m176-1h1v1h-1m-2 0h2v1h-2m-2 0h2v1h-2m-2 0h2v1h-2m-164 0h1v1h-1m163-1h1v1h-1m-162 0h3v1h-3m159-1h1v1h-1m2-1h1v1h-1m-158 0h1v1h-1m155-1h1v1h-1m-154 0h1v1h-1m2-1h1v1h-1m149-1h1v1h-1m2-1h1v1h-1m-152 0h1v1h-1m2-1h1v1h-1m147-1h1v1h-1m3-1h1v1h-1m-149 0h1v1h-1m3-1h1v1h-1m140-1h1v1h-1m2-1h1v1h-1m-144 0h1v1h-1m2-1h1v1h-1m139-1h1v1h-1m3-1h1v1h-1m-141 0h1v1h-1m3-1h1v1h-1m131-1h1v1h-1m3-1h1v1h-1m-136 0h1v1h-1m3-1h1v1h-1m130-1h1v1h-1m2-1h1v1h-1m-132 0h2v1h-2m3-1h1v1h-1m123-1h1v1h-1m2-1h2v1h-2m-124 0h2v1h-2m117-1h1v1h-1m4-1h1v1h-1m-120 0h1v1h-1m4-1h1v1h-1m112-1h1v1h-1m3-1h1v1h-1m-115 0h2v1h-2m4-1h1v1h-1m104-1h1v1h-1m3-1h1v1h-1m-107 0h2v1h-2m4-1h1v1h-1m95-1h1v1h-1m4-1h1v1h-1m-102 0h1v1h-1m4-1h1v1h-1m89-1h1v1h-1m4-1h1v1h-1m4-1h1v1h-1m-97 0h2v1h-2m5-1h1v1h-1m79-1h1v1h-1m5-1h1v1h-1m3-1h2v1h-2m-87 0h2v1h-2m4-1h1v1h-1m5-1h1v1h-1m65-1h1v1h-1m5-1h1v1h-1m4-1h1v1h-1m-78 0h1v1h-1m4-1h1v1h-1m5-1h1v1h-1m55-1h1v1h-1m5-1h1v1h-1m4-1h2v1h-2m-68 0h1v1h-1m4-1h1v1h-1m5-1h1v1h-1m5-1h1v1h-1m35-1h1v1h-1m5-1h1v1h-1m5-1h1v1h-1m4-1h2v1h-2m-58 0h1v1h-1m4-1h1v1h-1m5-1h1v1h-1m5-1h1v1h-1m5-1h1v1h-1m5-1h1v1h-1m5-1h1v1h-1m5-1h1v1h-1m5-1h1v1h-1m5-1h1v1h-1m5-1h1v1h-1m5-1h1v1h-1m-49 0h1v1h-1m4-1h1v1h-1m5-1h1v1h-1m5-1h1v1h-1m5-1h1v1h-1m5-1h1v1h-1m5-1h1v1h-1m5-1h1v1h-1m5-1h1v1h-1m5-1h1v1h-1m-30 0h1v1h-1m5-1h1v1h-1m5-1h1v1h-1m5-1h1v1h-1"/><path class="pl" fill="#4563fd" d="M377 182h1v1h-1m5-1h1v1h-1m5-1h1v1h-1m5-1h1v1h-1m6-1h1v1h-1m-27 0h1v1h-1m37-1h1v1h-1m-47 0h1v1h-1m16-1h1v1h-1m10-1h1v1h-1m5-1h1v1h-1m6-1h1v1h-1m5-1h1v1h-1m15-1h1v1h-1m-62 0h1v1h-1m10-1h1v1h-1m5-1h1v1h-1m37-1h1v1h-1m5-1h1v1h-1m11-1h1v1h-1m-73 0h1v1h-1m10-1h1v1h-1m16-1h1v1h-1m10-1h1v1h-1m5-1h1v1h-1m5-1h1v1h-1m6-1h1v1h-1m26-1h1v1h-1m-83 0h1v1h-1m10-1h1v1h-1m16-1h1v1h-1m36-1h1v1h-1m15-1h1v1h-1m11-1h1v1h-1m-93 0h1v1h-1m20-1h1v1h-1m16-1h1v1h-1m5-1h1v1h-1m5-1h1v1h-1m5-1h1v1h-1m5-1h1v1h-1m5-1h1v1h-1m16-1h1v1h-1m10-1h1v1h-1m11-1h1v1h-1m-103 0h1v1h-1m20-1h1v1h-1m11-1h1v1h-1m5-1h1v1h-1m36-1h1v1h-1m5-1h1v1h-1m10-1h1v1h-1m10-1h1v1h-1m10-1h1v1h-1m-92 0h1v1h-1m77-1h1v1h-1m10-1h1v1h-1m-107 0h1v1h-1m15-1h1v1h-1m11-1h1v1h-1m66-1h1v1h-1m10-1h1v1h-1m15-1h1v1h-1m-106 0h1v1h-1m10-1h1v1h-1m76-1h1v1h-1m10-1h1v1h-1m-106 0h1v1h-1m5-1h1v1h-1m10-1h1v1h-1m96-1h1v1h-1m5-1h1v1h-1m-126 0h1v1h-1m5-1h1v1h-1m15-1h1v1h-1m95-1h1v1h-1m21-1h1v1h-1m-141 1h1v1h-1m135-1h1v1h-1m10-1h1v1h-1m-129 0h1v1h-1m-20 0h1v1h-1m10-1h1v1h-1m5-1h1v1h-1m129-1h1v1h-1m5-1h1v1h-1m5-1h1v1h-1m-158 1h1v1h-1m4-1h1v1h-1m5-1h1v1h-1m5-1h1v1h-1m133-1h1v1h-1m5-1h1v1h-1m5-1h1v1h-1m5-1h1v1h-1m-11 0h1v1h-1m9-1h1v1h-1m-165 0h1v1h-1m5-1h1v1h-1m5-1h1v1h-1m5-1h1v1h-1m141-1h1v1h-1m5-1h1v1h-1m6-1h1v1h-1m4-1h1v1h-1m-22 0h1v1h-1m9-1h1v1h-1m-157 0h1v1h-1m5-1h1v1h-1m5-1h1v1h-1m150-1h1v1h-1m5-1h1v1h-1m4-1h1v1h-1m-174 0h1v1h-1m155-1h1v1h-1m9-1h1v1h-1m12-1h1v1h-1m3-1h1v1h-1m-173 0h1v1h-1m5-1h1v1h-1m156-1h1v1h-1m2-1h1v1h-1m5-1h1v1h-1m4-1h1v1h-1m-181 0h1v1h-1m4-1h1v1h-1m177-1h1v1h-1m5-1h1v1h-1m-177 0h1v1h-1m163-1h1v1h-1m4-1h1v1h-1m-176 0h1v1h-1m5-1h1v1h-1m157-1h1v1h-1m13-1h1v1h-1m6-1h1v1h-1m4-1h1v1h-1m-189 0h1v1h-1m169-1h1v1h-1m12-1h1v1h-1m-176 0h1v1h-1m5-1h1v1h-1m173-1h3v1h-3m5-1h1v1h-1m-187 0h1v1h-1m170-1h1v1h-1m21-1h1v1h-1m-195 0h1v1h-1m9-1h1v1h-1m167-1h1v1h-1m14-1h1v1h-1m9-1h1v1h-1m-198 0h1v1h-1m4-1h1v1h-1m174-1h1v1h-1m16-1h1v1h-1m4-1h1v1h-1m-202 0h1v1h-1m9-1h1v1h-1m177-1h1v1h-1m11-1h1v1h-1m8-1h1v1h-1m-4 0h1v1h-1m-200 0h1v1h-1m204-1h1v1h-1m-200 0h1v1h-1m203-1h1v1h-1m-207 0h1v1h-1m203-1h1v1h-1m-206 0h1v1h-1m210-1h1v1h-1m-214 0h1v1h-1m5-1h1v1h-1m3-1h1v1h-1m201-1h1v1h-1m8-1h1v1h-1m-216 0h1v1h-1m215-1h1v1h-1m-218 0h1v1h-1m214-1h1v1h-1m7-1h1v1h-1m-217 0h1v1h-1m213-1h1v1h-1m-216 0h1v1h-1m-3 0h1v1h-1m218-1h1v1h-1m7-1h1v1h-1m-221 0h1v1h-1m217-1h1v1h-1m-220 0h1v1h-1m223-1h1v1h-1m-226 0h1v1h-1m223-1h1v1h-1m6-1h1v1h-1m-3 0h1v1h-1m-1 0h1v1h-1m3-1h1v1h-1m-229 0h1v1h-1m232-1h1v1h-1m-4 0h1v1h-1m-1 0h1v1h-1m4-1h1v1h-1m-230 0h1v1h-1m229-1h1v1h-1m3-1h1v1h-1m-1 1h1v1h-1m-1 0h1v1h-1m-230 1h1v1h-1m229-1h1v1h-1m3 0h1v1h-1m2-1h1v1h-1m-238 1h1v1h-1m3-1h1v1h-1m232-1h1v1h-1m2-1h1v1h-1m-239 0h1v1h-1m238-1h1v1h-1m3-1h1v1h-1m-4 1h1v1h-1m-237 0h1v1h-1m241-1h1v1h-1m-240 1h1v1h-1m237-1h1v1h-1m3-1h1v1h-1m-1 0h1v1h-1m2-1h1v1h-1m-3 1h1v1h-1m3 0h1v1h-1m-3 1h1v1h-1m2-1h1v1h-1m-1 0h1v1h-1m-1 1h1v1h-1m2 0h1v1h-1m-2 1h1v1h-1m0 0h2v1h-2m0 1h1v1h-1m-1 0h1v1h-1m-1 0h1v1h-1m0 2h1v1h-1m-3 5h1v1h-1m-3 4h2v1h-2m0 0h1v1h-1m-2 0h1v1h-1m0 0h1v1h-1m-1 0h2v1h-2m-2 0h2v1h-2m0 0h1v1h-1m0 0h1v1h-1m-3 0h1v1h-1m2-1h1v1h-1m-2 0h2v1h-2m-3 1h1v1h-1m2-1h1v1h-1m-2 0h2v1h-2m-3 0h1v1h-1m2-1h1v1h-1m-1 0h1v1h-1m-2 0h1v1h-1m-190 0h1v1h-1m188-1h1v1h-1m2-1h1v1h-1m-3 0h1v1h-1m2-1h1v1h-1m-187 0h1v1h-1m3-1h1v1h-1m179-1h1v1h-1m2-1h1v1h-1m-1 0h1v1h-1m-178 0h1v1h-1m176-1h1v1h-1m-176 0h1v1h-1m2-1h1v1h-1m171-1h1v1h-1m3-1h1v1h-1m-178 0h1v1h-1m6-1h1v1h-1m168-1h1v1h-1m3-1h1v1h-1m-175 0h1v1h-1m2-1h1v1h-1m2-1h1v1h-1m2-1h2v1h-2m163-1h1v1h-1m3-1h1v1h-1m-168 0h1v1h-1m2-1h1v1h-1m162-1h1v1h-1m3-1h1v1h-1m-161 0h3v1h-3m155-1h1v1h-1m3-1h1v1h-1m-159 0h1v1h-1m2-1h1v1h-1m153-1h1v1h-1m3-1h1v1h-1m-155 0h1v1h-1m3-1h1v1h-1m145-1h1v1h-1m3-1h1v1h-1m-150 0h1v1h-1m3-1h1v1h-1m144-1h1v1h-1m3-1h1v1h-1m-147 0h1v1h-1m4-1h1v1h-1m136-1h1v1h-1m3-1h1v1h-1m-142 0h1v1h-1m3-1h1v1h-1m135-1h1v1h-1m3-1h1v1h-1m-137 0h1v1h-1m3-1h1v1h-1m127-1h1v1h-1m4-1h1v1h-1m-134 0h1v1h-1m4-1h1v1h-1m125-1h1v1h-1m4-1h1v1h-1m-129 0h1v1h-1m4-1h1v1h-1m117-1h1v1h-1m4-1h1v1h-1m-124 0h1v1h-1m4-1h1v1h-1m4-1h1v1h-1m107-1h1v1h-1m5-1h1v1h-1m3-1h1v1h-1m-119 0h1v1h-1m4-1h1v1h-1m5-1h1v1h-1m98-1h1v1h-1m4-1h1v1h-1m4-1h1v1h-1m-114 0h1v1h-1m4-1h1v1h-1m4-1h1v1h-1m97-1h1v1h-1m5-1h1v1h-1m4-1h1v1h-1m-110 0h1v1h-1m5-1h1v1h-1m4-1h1v1h-1m88-1h1v1h-1m4-1h1v1h-1m4-1h1v1h-1m-100 0h1v1h-1m4-1h1v1h-1m5-1h1v1h-1m78-1h1v1h-1m4-1h1v1h-1m4-1h1v1h-1m-91 0h1v1h-1m5-1h1v1h-1m5-1h1v1h-1m5-1h1v1h-1m57-1h1v1h-1m6-1h1v1h-1m4-1h1v1h-1m5-1h1v1h-1m-86 0h1v1h-1m4-1h1v1h-1m5-1h1v1h-1m5-1h1v1h-1m5-1h1v1h-1m47-1h1v1h-1m5-1h1v1h-1m5-1h1v1h-1m5-1h1v1h-1m5-1h1v1h-1m-81 0h1v1h-1m4-1h2v1h-2m5-1h1v1h-1m5-1h1v1h-1m5-1h1v1h-1m6-1h1v1h-1m5-1h1v1h-1m5-1h1v1h-1m5-1h1v1h-1m6-1h1v1h-1m5-1h1v1h-1m5-1h1v1h-1m5-1h1v1h-1m5-1h1v1h-1m5-1h1v1h-1m5-1h1v1h-1m-66 0h1v1h-1m4-1h1v1h-1m5-1h1v1h-1m6-1h1v1h-1m5-1h1v1h-1m5-1h1v1h-1m5-1h1v1h-1m6-1h1v1h-1m5-1h1v1h-1m5-1h1v1h-1m5-1h1v1h-1m5-1h1v1h-1m-51 0h1v1h-1m5-1h1v1h-1m5-1h1v1h-1m5-1h1v1h-1m5-1h1v1h-1m5-1h1v1h-1m5-1h1v1h-1m6-1h1v1h-1m5-1h1v1h-1m5-1h1v1h-1m-36 0h1v1h-1m5-1h1v1h-1m5-1h1v1h-1m5-1h1v1h-1m5-1h1v1h-1m5-1h1v1h-1"/><path class="pl" fill="#3e6fff" d="M376 176h1v1h-1m6-1h1v1h-1m5-1h1v1h-1m5-1h1v1h-1m6-1h1v1h-1m5-1h1v1h-1m-32 0h1v1h-1m37-1h1v1h-1m6-1h1v1h-1m-54 0h1v1h-1m27-1h1v1h-1m5-1h1v1h-1m27-1h1v1h-1m-64 0h1v1h-1m11-1h1v1h-1m5-1h1v1h-1m53-1h1v1h-1m-74 0h1v1h-1m11-1h1v1h-1m15-1h1v1h-1m6-1h1v1h-1m5-1h1v1h-1m5-1h1v1h-1m11-1h1v1h-1m16-1h1v1h-1m10-1h1v1h-1m-84 0h1v1h-1m26-1h1v1h-1m37-1h1v1h-1m5-1h1v1h-1m11-1h1v1h-1m10-1h1v1h-1m-84 0h1v1h-1m11-1h1v1h-1m58-1h1v1h-1m10-1h1v1h-1m10-1h1v1h-1m-104 0h1v1h-1m21-1h1v1h-1m88-1h1v1h-1m-94 0h1v1h-1m79-1h1v1h-1m-99 0h1v1h-1m15-1h1v1h-1m89-1h1v1h-1m10-1h1v1h-1m5-1h1v1h-1m-124 0h1v1h-1m15-1h1v1h-1m99-1h1v1h-1m-109 0h1v1h-1m6-1h1v1h-1m113-1h1v1h-1m-123 0h1v1h-1m128-1h1v1h-1m17-1h1v1h-1m-140 0h1v1h-1m122 0h1v1h-1m10-1h1v1h-1m12 0h1v1h-1m-163 0h1v1h-1m4-1h1v1h-1m144-1h1v1h-1m3-1h1v1h-1m4-1h2v1h-2m2 0h1v1h-1m19-1h1v1h-1m-181 0h1v1h-1m5-1h1v1h-1m5-1h1v1h-1m137-1h1v1h-1m7-1h1v1h-1m6-1h1v1h-1m5-1h1v1h-1m7-1h1v1h-1m11-1h1v1h-1m-35 0h1v1h-1m8-1h1v1h-1m8-1h1v1h-1m-163 0h1v1h-1m159-1h1v1h-1m5-1h1v1h-1m10-1h1v1h-1m-179 0h1v1h-1m162-1h1v1h-1m8-1h1v1h-1m3-1h1v1h-1m8-1h1v1h-1m-176 0h1v1h-1m163-1h1v1h-1m5-1h1v1h-1m10-1h1v1h-1m-187 0h1v1h-1m4-1h1v1h-1m164-1h1v1h-1m9-1h1v1h-1m4-1h1v1h-1m8-1h1v1h-1m-10 0h1v1h-1m14-1h1v1h-1m-193 0h1v1h-1m5-1h1v1h-1m148-1h1v1h-1m24-1h1v1h-1m4-1h1v1h-1m-185 0h1v1h-1m187-1h1v1h-1m2-1h1v1h-1m-184 0h1v1h-1m185-1h1v1h-1m-194 0h1v1h-1m5-1h1v1h-1m188-1h1v1h-1m4-1h1v1h-1m3-1h1v1h-1m-195 0h1v1h-1m187-1h1v1h-1m-195 1h1v1h-1m192-1h1v1h-1m2-1h1v1h-1m6-1h1v1h-1m3-1h1v1h-1m-198 0h1v1h-1m191-1h1v1h-1m2-1h2v1h-2m-197 0h1v1h-1m202-1h1v1h-1m-206 0h1v1h-1m209-1h1v1h-1m-208 0h1v1h-1m3-1h1v1h-1m195-1h2v1h-2m10-1h1v1h-1m-212 0h1v1h-1m198-1h2v1h-2m17-1h1v1h-1m-214 1h1v1h-1m198-1h1v1h-1m16-1h1v1h-1m-21 0h1v1h-1m2-1h2v1h-2m22-1h1v1h-1m-217 0h1v1h-1m213-1h1v1h-1m-216 0h1v1h-1m219-1h1v1h-1m-222 0h1v1h-1m225-1h1v1h-1m-221 0h1v1h-1m218-1h1v1h-1m3 0h1v1h-1m-224 1h1v1h-1m223-1h1v1h-1m-225 0h1v1h-1m228-1h1v1h-1m-231 0h1v1h-1m233-1h1v1h-1m-230 0h1v1h-1m227-1h1v1h-1m-229 0h1v1h-1m0 0h1v1h-1m231-1h1v1h-1m-233 1h1v1h-1m235-1h1v1h-1m-234 0h1v1h-1m234-1h1v1h-1m-236 1h1v1h-1m238-1h1v1h-1m-240 0h1v1h-1m241-1h1v1h-1m-241 1h1v1h-1m241-1h1v1h-1m-242 0h1v1h-1m241-1h1v1h-1m3 2h1v1h-1m0 1h1v1h-1m-243 0h1v1h-1m242-1h1v1h-1m2-1h1v1h-1m-1 4h1v1h-1m0 1h1v1h-1m0 0h1v1h-1m-1 7h1v1h-1m-1 2h1v1h-1m-1 2h1v1h-1m0 0h1v1h-1m-1 1h1v1h-1m-2 2h2v1h-2m0 0h1v1h-1m-2 0h1v1h-1m1 0h1v1h-1m-1 0h1v1h-1m-2 0h1v1h-1m1 0h1v1h-1m-1 0h1v1h-1m-222 0h1v1h-1m220-1h2v1h-2m-1 1h1v1h-1m-217 0h1v1h-1m215-1h1v1h-1m2-1h1v1h-1m-216 1h1v1h-1m214-1h1v1h-1m-212 0h1v1h-1m209-1h1v1h-1m2-1h1v1h-1m-210 0h1v1h-1m208-1h1v1h-1m-3 1h1v1h-1m2-1h1v1h-1m-2 0h1v1h-1m-3 0h1v1h-1m2-1h1v1h-1m-3 1h1v1h-1m-3 0h1v1h-1m3-1h1v1h-1m-3 0h1v1h-1m-4 0h1v1h-1m3 0h1v1h-1m-192 0h1v1h-1m8-1h1v1h-1m181-1h1v1h-1m-191 0h1v1h-1m2-1h1v1h-1m3-1h1v1h-1m182-1h1v1h-1m4-1h1v1h-1m-188 0h1v1h-1m2-1h1v1h-1m9-1h1v1h-1m173-1h1v1h-1m-169 0h1v1h-1m165-1h1v1h-1m-175 0h1v1h-1m7-1h1v1h-1m172-1h1v1h-1m-177 0h1v1h-1m9-1h1v1h-1m160-1h1v1h-1m4-1h1v1h-1m-164 0h1v1h-1m6-1h1v1h-1m157-1h1v1h-1m-176 0h1v1h-1m5-1h1v1h-1m12-1h1v1h-1m2-1h1v1h-1m2-1h1v1h-1m147-1h1v1h-1m4-1h1v1h-1m-166 0h1v1h-1m8-1h2v1h-2m3-1h1v1h-1m2-1h1v1h-1m153-1h1v1h-1m-165 0h1v1h-1m3-1h7v1h-7m11-1h1v1h-1m5-1h1v1h-1m138-1h1v1h-1m4-1h1v1h-1m-146 0h1v1h-1m146-1h1v1h-1m-142 0h1v1h-1m4-1h1v1h-1m129-1h1v1h-1m4-1h1v1h-1m-137 0h1v1h-1m5-1h1v1h-1m128-1h1v1h-1m4-1h1v1h-1m-128 0h1v1h-1m119-1h1v1h-1m-123 0h1v1h-1m4-1h1v1h-1m5-1h1v1h-1m109-1h1v1h-1m5-1h1v1h-1m4-1h1v1h-1m-122 0h1v1h-1m118-1h1v1h-1m-114 0h1v1h-1m5-1h1v1h-1m99-1h1v1h-1m5-1h1v1h-1m-108 0h1v1h-1m4-1h1v1h-1m5-1h1v1h-1m89-1h1v1h-1m5-1h1v1h-1m5-1h1v1h-1m-104 0h1v1h-1m5-1h1v1h-1m5-1h1v1h-1m79-1h1v1h-1m5-1h1v1h-1m5-1h1v1h-1m-94 0h1v1h-1m5-1h1v1h-1m5-1h1v1h-1m69-1h1v1h-1m5-1h1v1h-1m5-1h1v1h-1m-79 0h1v1h-1m5-1h1v1h-1m6-1h1v1h-1m48-1h1v1h-1m5-1h1v1h-1m5-1h1v1h-1m-74 0h1v1h-1m6-1h1v1h-1m5-1h1v1h-1m10-1h1v1h-1m5-1h1v1h-1m27-1h1v1h-1m5-1h1v1h-1m11-1h1v1h-1m5-1h1v1h-1m5-1h1v1h-1m-68 0h1v1h-1m5-1h1v1h-1m5-1h1v1h-1m11-1h1v1h-1m5-1h1v1h-1m5-1h1v1h-1m6-1h1v1h-1m10-1h1v1h-1m6-1h1v1h-1m5-1h1v1h-1m-53 0h1v1h-1m10-1h1v1h-1m6-1h1v1h-1m5-1h1v1h-1m5-1h1v1h-1m6-1h1v1h-1m5-1h1v1h-1m10-1h1v1h-1m-42 0h1v1h-1m5-1h1v1h-1m6-1h1v1h-1m5-1h1v1h-1m5-1h1v1h-1m6-1h1v1h-1m5-1h1v1h-1m5-1h1v1h-1"/><path class="pl" fill="#327cfc" d="M376 170h1v1h-1m6-1h1v1h-1m5-1h1v1h-1m11-1h1v1h-1m5-1h1v1h-1m-38 0h1v1h-1m49-1h1v1h-1m-32 0h1v1h-1m5-1h1v1h-1m5-1h1v1h-1m6-1h1v1h-1m10-1h1v1h-1m-53 0h1v1h-1m11-1h1v1h-1m48-1h1v1h-1m10-1h1v1h-1m-74 0h1v1h-1m32-1h1v1h-1m5-1h1v1h-1m5-1h1v1h-1m16-1h1v1h-1m11-1h1v1h-1m11-1h1v1h-1m-85 0h1v1h-1m10-1h1v1h-1m59-1h1v1h-1m10-1h1v1h-1m11-1h1v1h-1m-96 0h1v1h-1m11-1h1v1h-1m69-1h1v1h-1m11-1h1v1h-1m10-1h1v1h-1m-95 0h1v1h-1m10-1h1v1h-1m69-1h1v1h-1m11-1h1v1h-1m-95 0h1v1h-1m10-1h1v1h-1m79-1h1v1h-1m11-1h1v1h-1m43-1h1v1h-1m-153 0h1v1h-1m5-1h1v1h-1m10-1h1v1h-1m90-1h1v1h-1m10-1h1v1h-1m5-1h1v1h-1m13-1h1v1h-1m13-1h1v1h-1m-151 0h1v1h-1m15-1h1v1h-1m100-1h1v1h-1m15-1h1v1h-1m30-1h1v1h-1m-155 0h1v1h-1m5-1h1v1h-1m110-1h1v1h-1m5-1h1v1h-1m8-1h1v1h-1m7-1h1v1h-1m6-1h1v1h-1m-151 0h1v1h-1m5-1h1v1h-1m130-1h1v1h-1m4-1h1v1h-1m21-1h1v1h-1m-150 0h1v1h-1m130-1h1v1h-1m29-1h1v1h-1m-164 0h1v1h-1m129-1h1v1h-1m7-1h1v1h-1m3-1h1v1h-1m11-1h1v1h-1m7-1h1v1h-1m9-1h1v1h-1m-7 0h1v1h-1m9-1h1v1h-1m-178 0h1v1h-1m5-1h1v1h-1m135-1h1v1h-1m4-1h1v1h-1m3-1h1v1h-1m2-1h1v1h-1m12-1h1v1h-1m19-1h1v1h-1m-51 0h1v1h-1m34-1h1v1h-1m8-1h1v1h-1m-180 0h1v1h-1m5-1h1v1h-1m139-1h1v1h-1m7-1h1v1h-1m11-1h1v1h-1m5-1h1v1h-1m15-1h1v1h-1m11-1h1v1h-1m-192 1h1v1h-1m144-1h1v1h-1m22-1h1v1h-1m20-1h1v1h-1m-191 0h1v1h-1m143-1h1v1h-1m32-1h1v1h-1m18-1h1v1h-1m-22 0h1v1h-1m-171 0h1v1h-1m144-1h1v1h-1m31-1h1v1h-1m-179 1h1v1h-1m183-1h1v1h-1m17 0h2v1h-2m-199 0h1v1h-1m182-1h1v1h-1m-190 0h1v1h-1m3-1h1v1h-1m191-1h1v1h-1m-194 1h1v1h-1m4-1h1v1h-1m190-1h1v1h-1m4-1h1v1h-1m4-1h1v1h-1m-1 0h1v1h-1m-201 0h1v1h-1m197-1h1v1h-1m-201 0h1v1h-1m-3 0h1v1h-1m208-1h1v1h-1m3-1h1v1h-1m-207 0h1v1h-1m204-1h1v1h-1m-208 0h1v1h-1m207-1h2v1h-2m4-1h1v1h-1m-214 0h1v1h-1m209-1h1v1h-1m8-1h1v1h-1m-213 0h1v1h-1m210-1h1v1h-1m-216 0h1v1h-1m2-1h1v1h-1m206-1h1v1h-1m11-1h1v1h-1m-14 0h1v1h-1m2-1h1v1h-1m12-1h1v1h-1m-219 0h1v1h-1m221-1h1v1h-1m-224 0h1v1h-1m208-1h1v1h-1m19-1h1v1h-1m-224 0h1v1h-1m204-1h1v1h-1m17-1h1v1h-1m-18 0h1v1h-1m-208 0h1v1h-1m231-1h1v1h-1m-228 0h1v1h-1m226-1h1v1h-1m-229 0h1v1h-1m231-1h1v1h-1m-233 0h1v1h-1m3 0h1v1h-1m232 0h1v1h-1m2 0h1v1h-1m-236 0h1v1h-1m234-1h1v1h-1m-236 0h1v1h-1m238-1h1v1h-1m-238 1h1v1h-1m-2 0h1v1h-1m241-1h1v1h-1m-242 0h1v1h-1m243-1h1v1h-1m-241 0h1v1h-1m240-1h1v1h-1m-242 0h1v1h-1m243-1h1v1h-1m1 4h1v1h-1m1 0h1v1h-1m0 1h1v1h-1m0 2h1v1h-1m1 2h1v1h-1m0 1h1v1h-1m-248 0h1v1h-1m247-1h2v1h-2m0 1h1v1h-1m0 0h1v1h-1m0 1h1v1h-1m-1 0h1v1h-1m-245 0h1v1h-1m246-1h1v1h-1m-1 0h1v1h-1m-1 0h1v1h-1m1 0h1v1h-1m-244 0h1v1h-1m243-1h1v1h-1m-242 0h1v1h-1m241-1h1v1h-1m1 0h1v1h-1m-1 0h1v1h-1m-1 0h1v1h-1m1 0h1v1h-1m-1 0h1v1h-1m-2 0h1v1h-1m1 0h1v1h-1m-1 0h1v1h-1m-2 0h1v1h-1m2 0h1v1h-1m-2 0h1v1h-1m-2 0h1v1h-1m2 0h1v1h-1m-2 0h1v1h-1m-224 0h1v1h-1m222-1h1v1h-1m2 0h1v1h-1m-224 0h1v1h-1m221-1h1v1h-1m-219 0h1v1h-1m217-1h1v1h-1m2 0h1v1h-1m-219 0h1v1h-1m217-1h1v1h-1m-216 0h1v1h-1m2-1h1v1h-1m211-1h1v1h-1m3-1h1v1h-1m-214 1h1v1h-1m3-1h1v1h-1m205-1h1v1h-1m3-1h1v1h-1m-210 0h1v1h-1m210-1h1v1h-1m-208 0h1v1h-1m205-1h1v1h-1m-201 0h1v1h-1m198-1h1v1h-1m-201 0h1v1h-1m204-1h1v1h-1m-201 0h1v1h-1m198-1h1v1h-1m-195 0h1v1h-1m191-1h1v1h-1m0 0h1v1h-1m3-1h1v1h-1m-7 0h1v1h-1m4 0h1v1h-1m-187 0h1v1h-1m183-1h1v1h-1m-4 0h1v1h-1m-191 0h1v1h-1m13-1h1v1h-1m178-1h1v1h-1m4-1h1v1h-1m-194 0h1v1h-1m186-1h1v1h-1m-188 0h1v1h-1m2-1h1v1h-1m23-1h1v1h-1m167-1h1v1h-1m-195 0h1v1h-1m4-1h1v1h-1m2-1h1v1h-1m19-1h1v1h-1m3-1h2v1h-2m159-1h1v1h-1m4-1h1v1h-1m-190 0h1v1h-1m2-1h1v1h-1m24-1h1v1h-1m2-1h1v1h-1m162-1h1v1h-1m-189 0h1v1h-1m26-1h3v1h-3m5-1h1v1h-1m149-1h1v1h-1m4-1h1v1h-1m-160 0h1v1h-1m3-1h1v1h-1m2-1h1v1h-1m-27 0h1v1h-1m23-1h1v1h-1m2-1h1v1h-1m2-1h1v1h-1m2-1h1v1h-1m5-1h1v1h-1m139-1h1v1h-1m5-1h1v1h-1m4-1h1v1h-1m-181 0h1v1h-1m20-1h1v1h-1m2-1h1v1h-1m3-1h1v1h-1m2-1h1v1h-1m-23 0h1v1h-1m14-1h1v1h-1m2-1h1v1h-1m3-1h1v1h-1m2-1h1v1h-1m4-1h1v1h-1m4-1h1v1h-1m5-1h1v1h-1m130-1h1v1h-1m4-1h1v1h-1m5-1h1v1h-1m-161 0h1v1h-1m2-1h1v1h-1m2-1h1v1h-1m3-1h1v1h-1m-18 0h1v1h-1m4-1h2v1h-2m3-1h2v1h-2m3-1h4v1h-4m5-1h1v1h-1m13-1h1v1h-1m5-1h1v1h-1m5-1h1v1h-1m120-1h1v1h-1m5-1h1v1h-1m4-1h1v1h-1m-160 0h3v1h-3m4-1h2v1h-2m22-1h1v1h-1m9-1h1v1h-1m111-1h1v1h-1m9-1h1v1h-1m-124 0h1v1h-1m120-1h1v1h-1m-120 0h1v1h-1m5-1h1v1h-1m4-1h1v1h-1m101-1h1v1h-1m5-1h1v1h-1m5-1h1v1h-1m-110 0h1v1h-1m5-1h1v1h-1m90-1h1v1h-1m5-1h1v1h-1m-105 0h1v1h-1m15-1h1v1h-1m80-1h1v1h-1m15-1h1v1h-1m-105 0h1v1h-1m5-1h1v1h-1m10-1h1v1h-1m69-1h1v1h-1m11-1h1v1h-1m5-1h1v1h-1m-95 0h1v1h-1m5-1h1v1h-1m10-1h1v1h-1m5-1h1v1h-1m49-1h1v1h-1m5-1h1v1h-1m11-1h1v1h-1m5-1h1v1h-1m-85 0h1v1h-1m5-1h1v1h-1m16-1h1v1h-1m5-1h1v1h-1m27-1h1v1h-1m6-1h1v1h-1m15-1h1v1h-1m5-1h1v1h-1m-74 0h1v1h-1m5-1h1v1h-1m6-1h1v1h-1m16-1h1v1h-1m5-1h1v1h-1m5-1h1v1h-1m6-1h1v1h-1m16-1h1v1h-1m5-1h1v1h-1m5-1h1v1h-1m-64 0h1v1h-1m11-1h1v1h-1m5-1h1v1h-1m6-1h1v1h-1m16-1h1v1h-1m5-1h1v1h-1m5-1h1v1h-1m11-1h1v1h-1m-53 0h1v1h-1m5-1h1v1h-1m16-1h1v1h-1m5-1h1v1h-1m16-1h1v1h-1m6-1h1v1h-1m-38 0h1v1h-1m6-1h1v1h-1m5-1h1v1h-1m5-1h1v1h-1m6-1h1v1h-1m5-1h1v1h-1"/><path class="pl" fill="#2e87f7" d="M376 166h1v1h-1m6-1h1v1h-1m16-1h1v1h-1m-27 0h1v1h-1m38-1h1v1h-1m-49 0h1v1h-1m16-1h1v1h-1m6-1h1v1h-1m10-1h1v1h-1m6-1h1v1h-1m21-1h1v1h-1m-64 0h1v1h-1m10-1h1v1h-1m6-1h1v1h-1m38-1h1v1h-1m5-1h1v1h-1m10-1h1v1h-1m-64 0h1v1h-1m120-1h1v1h-1m-135 0h1v1h-1m90-1h1v1h-1m34-1h1v1h-1m-130 0h1v1h-1m11-1h1v1h-1m80-1h1v1h-1m10-1h1v1h-1m24-1h1v1h-1m6-1h1v1h-1m6-1h1v1h-1m-131 0h1v1h-1m90-1h1v1h-1m10-1h1v1h-1m38-1h1v1h-1m-144 0h1v1h-1m101-1h1v1h-1m31-1h1v1h-1m6-1h1v1h-1m15-1h1v1h-1m-158 0h1v1h-1m111-1h1v1h-1m11-1h1v1h-1m40 0h1v1h-1m-171 0h1v1h-1m5-1h1v1h-1m120-1h2v1h-2m5-1h2v1h-2m19-1h1v1h-1m7-1h1v1h-1m17-1h1v1h-1m-173 0h1v1h-1m127-1h1v1h-1m48-1h1v1h-1m2 0h1v1h-1m-182 0h1v1h-1m127-1h1v1h-1m6-1h1v1h-1m6-1h1v1h-1m5-1h1v1h-1m-149 1h1v1h-1m133-1h1v1h-1m16-1h1v1h-1m-21 0h1v1h-1m57-1h1v1h-1m-52 0h1v1h-1m55-1h1v1h-1m-197 0h1v1h-1m137-1h1v1h-1m30-1h1v1h-1m31-1h1v1h-1m-202 1h1v1h-1m175-1h1v1h-1m25 0h1v1h-1m2-1h1v1h-1m-206 0h1v1h-1m4-1h1v1h-1m175-1h1v1h-1m4-1h1v1h-1m-183 1h1v1h-1m183-1h1v1h-1m23-1h1v1h-1m-210 0h1v1h-1m191-1h1v1h-1m19-1h1v1h-1m-210 1h1v1h-1m191-1h1v1h-1m-194 0h1v1h-1m198-1h1v1h-1m-202 1h1v1h-1m205-1h1v1h-1m8-1h1v1h-1m-1 0h1v1h-1m-212 0h1v1h-1m205-1h1v1h-1m5-1h1v1h-1m-1 0h1v1h-1m0 0h1v1h-1m-212 0h1v1h-1m209-1h1v1h-1m2-1h1v1h-1m-214 0h1v1h-1m212-1h1v1h-1m5-1h1v1h-1m-8 0h1v1h-1m-209 0h1v1h-1m217-1h1v1h-1m-219 0h1v1h-1m207-1h1v1h-1m3-1h1v1h-1m12-1h1v1h-1m-16 0h1v1h-1m4-1h1v1h-1m12-1h1v1h-1m-225 0h1v1h-1m227-1h1v1h-1m-18 0h1v1h-1m-209 0h1v1h-1m227-1h1v1h-1m-229 0h1v1h-1m231-1h1v1h-1m-233 2h1v1h-1m235-1h1v1h-1m-235 1h1v1h-1m235-1h1v1h-1m-237 0h1v1h-1m239-1h1v1h-1m1 2h1v1h-1m-241 1h1v1h-1m241-1h1v1h-1m-243 5h1v1h-1m246 3h1v1h-1m1 0h1v1h-1m-249 2h1v1h-1m249-1h1v1h-1m-249 1h1v1h-1m249-1h1v1h-1m-249 0h1v1h-1m249-1h1v1h-1m0 1h1v1h-1m0 0h1v1h-1m0 1h1v1h-1m-1 0h1v1h-1m0 1h1v1h-1m-1 0h1v1h-1m1 1h1v1h-1m-1 0h1v1h-1m0 1h1v1h-1m-2 0h1v1h-1m0 1h1v1h-1m-1 0h1v1h-1m0 1h1v1h-1m-2 0h1v1h-1m-235 1h1v1h-1m235-1h1v1h-1m-2 0h1v1h-1m0 1h1v1h-1m-2 0h1v1h-1m0 1h1v1h-1m-224 0h1v1h-1m222-1h1v1h-1m-222 1h1v1h-1m222-1h1v1h-1m-220 0h1v1h-1m217-1h1v1h-1m-217 1h1v1h-1m217-1h1v1h-1m-214 0h1v1h-1m211-1h1v1h-1m-211 1h1v1h-1m211-1h1v1h-1m-208 0h1v1h-1m205-1h1v1h-1m-205 1h1v1h-1m4-1h1v1h-1m198-1h1v1h-1m3-1h1v1h-1m-201 1h1v1h-1m198-1h1v1h-1m-195 0h1v1h-1m191-1h1v1h-1m-191 1h1v1h-1m4-1h1v1h-1m183-1h1v1h-1m4-1h1v1h-1m-194 1h1v1h-1m5-1h1v1h-1m2-1h1v1h-1m183-1h1v1h-1m-187 0h6v1h-6m8-1h1v1h-1m175-1h1v1h-1m-182 0h7v1h-7m-17 0h1v1h-1m2-1h1v1h-1m17-1h2v1h-2m3-1h1v1h-1m2-1h2v1h-2m4-1h1v1h-1m167-1h1v1h-1m4-1h1v1h-1m-201 0h1v1h-1m23-1h4v1h-4m5-1h1v1h-1m-4 0h4v1h-4m5-1h2v1h-2m6-1h1v1h-1m158-1h1v1h-1m4-1h1v1h-1m-195 0h1v1h-1m24-1h6v1h-6m-26 0h1v1h-1m3-1h1v1h-1m22-1h1v1h-1m2-1h2v1h-2m3-1h1v1h-1m2-1h1v1h-1m3-1h1v1h-1m4-1h1v1h-1m149-1h1v1h-1m5-1h1v1h-1m-167 0h4v1h-4m5-1h1v1h-1m2-1h1v1h-1m-6 0h1v1h-1m2-1h2v1h-2m3-1h1v1h-1m7-1h1v1h-1m5-1h1v1h-1m139-1h1v1h-1m5-1h1v1h-1m-185 0h1v1h-1m23-1h4v1h-4m5-1h1v1h-1m-26 0h1v1h-1m20-1h2v1h-2m3-1h1v1h-1m2-1h1v1h-1m2-1h1v1h-1m12-1h1v1h-1m5-1h1v1h-1m130-1h1v1h-1m4-1h1v1h-1m-159 0h2v1h-2m3-1h1v1h-1m2-1h2v1h-2m-5 0h2v1h-2m3-1h1v1h-1m2-1h1v1h-1m2-1h1v1h-1m18-1h1v1h-1m5-1h1v1h-1m120-1h1v1h-1m5-1h1v1h-1m-157 0h1v1h-1m2-1h2v1h-2m3-1h1v1h-1m2-1h1v1h-1m29-1h1v1h-1m111-1h1v1h-1m-153 0h1v1h-1m3-1h1v1h-1m2-1h1v1h-1m2-1h1v1h-1m2-1h1v1h-1m2-1h1v1h-1m27-1h1v1h-1m120-1h1v1h-1m-163 0h8v1h-8m9-1h4v1h-4m5-1h1v1h-1m33-1h1v1h-1m5-1h1v1h-1m101-1h1v1h-1m5-1h1v1h-1m-152 0h3v1h-3m5-1h1v1h-1m47-1h1v1h-1m90-1h1v1h-1m-96 0h1v1h-1m11-1h1v1h-1m80-1h1v1h-1m10-1h1v1h-1m-95 0h1v1h-1m10-1h1v1h-1m69-1h1v1h-1m11-1h1v1h-1m-85 0h1v1h-1m10-1h1v1h-1m59-1h1v1h-1m11-1h1v1h-1m-75 0h1v1h-1m10-1h1v1h-1m6-1h1v1h-1m38-1h1v1h-1m5-1h1v1h-1m10-1h1v1h-1m-64 0h1v1h-1m16-1h1v1h-1m6-1h1v1h-1m5-1h1v1h-1m5-1h1v1h-1m6-1h1v1h-1m5-1h1v1h-1m16-1h1v1h-1m-54 0h1v1h-1m6-1h1v1h-1m38-1h1v1h-1m5-1h1v1h-1m-38 0h1v1h-1m6-1h1v1h-1m5-1h1v1h-1m5-1h1v1h-1m6-1h1v1h-1m5-1h1v1h-1"/><path class="pl" fill="#2b91ef" d="M387 160h1v1h-1m5-1h1v1h-1m-26 0h1v1h-1m48-1h1v1h-1m-54 0h1v1h-1m27-1h1v1h-1m5-1h1v1h-1m27-1h1v1h-1m-64 0h1v1h-1m11-1h1v1h-1m48-1h1v1h-1m10-1h1v1h-1m61-1h1v1h-1m7-1h1v1h-1m-142 0h1v1h-1m10-1h1v1h-1m22-1h1v1h-1m16-1h1v1h-1m31-1h1v1h-1m36-1h1v1h-1m4-1h1v1h-1m5-1h1v1h-1m-129 0h1v1h-1m26-1h1v1h-1m64-1h1v1h-1m-16 0h1v1h-1m11-1h1v1h-1m10-1h1v1h-1m21-1h1v1h-1m5-1h1v1h-1m-121 0h1v1h-1m10-1h1v1h-1m69-1h1v1h-1m38-1h1v1h-1m10-1h1v1h-1m10-1h1v1h-1m16-1h1v1h-1m-163 0h1v1h-1m5-1h1v1h-1m10-1h1v1h-1m80-1h1v1h-1m10-1h1v1h-1m5-1h1v1h-1m-10 0h1v1h-1m15-1h1v1h-1m8-1h1v1h-1m15-1h1v1h-1m27-1h1v1h-1m-165 0h1v1h-1m5-1h1v1h-1m100-1h1v1h-1m14-1h1v1h-1m5-1h1v1h-1m35-1h1v1h-1m8-1h1v1h-1m-177 0h1v1h-1m5-1h1v1h-1m124-1h1v1h-1m42-1h1v1h-1m9-1h1v1h-1m-55 0h1v1h-1m5-1h1v1h-1m4-1h1v1h-1m39-1h1v1h-1m9-1h1v1h-1m-57 0h2v1h-2m-130 0h1v1h-1m127-1h1v1h-1m8-1h1v1h-1m4-1h1v1h-1m41-1h1v1h-1m-175 0h1v1h-1m126-1h1v1h-1m13-1h1v1h-1m38-1h1v1h-1m2-1h1v1h-1m-188 0h1v1h-1m4-1h1v1h-1m127-1h1v1h-1m12-1h1v1h-1m46-1h1v1h-1m-194 0h1v1h-1m131-1h1v1h-1m26-1h1v1h-1m39-1h1v1h-1m2-1h2v1h-2m-194 0h1v1h-1m-8 0h1v1h-1m135-1h1v1h-1m31-1h1v1h-1m32 0h1v1h-1m-202 0h1v1h-1m170-1h1v1h-1m4-1h1v1h-1m29-1h1v1h-1m2-1h1v1h-1m2-1h1v1h-1m-208 1h1v1h-1m171-1h1v1h-1m4-1h1v1h-1m-179 0h1v1h-1m183-1h1v1h-1m27-1h1v1h-1m-206 0h1v1h-1m175-1h1v1h-1m29-1h1v1h-1m-211 0h1v1h-1m3-1h1v1h-1m209-1h1v1h-1m-209 0h1v1h-1m183-1h1v1h-1m25-1h2v1h-2m-212 0h1v1h-1m191-1h1v1h-1m20-1h2v1h-2m-214 0h1v1h-1m197-1h1v1h-1m17-1h1v1h-1m-211 0h1v1h-1m191-1h1v1h-1m18-1h1v1h-1m2-1h1v1h-1m-217 0h1v1h-1m212 0h1v1h-1m-209 0h1v1h-1m201-1h1v1h-1m8-1h1v1h-1m2-1h1v1h-1m-217 0h1v1h-1m210-1h1v1h-1m5-1h1v1h-1m-213 0h1v1h-1m205-1h1v1h-1m-208 0h1v1h-1m211-1h1v1h-1m2-1h1v1h-1m-2 1h1v1h-1m2-1h1v1h-1m-215 0h1v1h-1m208-1h1v1h-1m8-1h1v1h-1m-219 0h1v1h-1m207-1h1v1h-1m8-1h1v1h-1m6-1h1v1h-1m-219 0h1v1h-1m217-1h1v1h-1m-12 0h1v1h-1m-209 0h1v1h-1m213-1h1v1h-1m13-1h1v1h-1m-224 0h1v1h-1m207-1h1v1h-1m-210 0h1v1h-1m227-1h1v1h-1m0 0h1v1h-1m-229 0h1v1h-1m231-1h1v1h-1m-232 0h1v1h-1m234-1h1v1h-1m-233 0h1v1h-1m231-1h1v1h-1m-233 0h1v1h-1m-1 2h1v1h-1m-1 0h1v1h-1m1 0h1v1h-1m238-1h1v1h-1m1 0h1v1h-1m1 1h1v1h-1m-243 2h1v1h-1m243-1h1v1h-1m2 2h1v1h-1m-247 1h1v1h-1m0 0h1v1h-1m247-1h1v1h-1m-247 1h1v1h-1m0 0h1v1h-1m247-1h1v1h-1m1 0h1v1h-1m-248 0h1v1h-1m248-1h1v1h-1m-248 0h1v1h-1m247-1h1v1h-1m-247 0h1v1h-1m248-1h1v1h-1m-248 0h1v1h-1m248-1h1v1h-1m-248 0h1v1h-1m247-1h1v1h-1m-247 0h1v1h-1m248-1h1v1h-1m-1 0h1v1h-1m0 0h1v1h-1m1 0h1v1h-1m-1 0h1v1h-1m-1 0h1v1h-1m1 0h1v1h-1m-1 0h1v1h-1m-1 0h1v1h-1m-244 0h1v1h-1m245-1h1v1h-1m-1 0h1v1h-1m-1 0h1v1h-1m1 0h1v1h-1m-242 0h1v1h-1m241-1h1v1h-1m-239 0h1v1h-1m237-1h1v1h-1m2 0h1v1h-1m-239 0h1v1h-1m238-1h1v1h-1m-2 0h1v1h-1m2 0h1v1h-1m-2 0h1v1h-1m-2 0h1v1h-1m2 0h1v1h-1m-2 0h1v1h-1m-2 0h1v1h-1m2 0h1v1h-1m-2 0h1v1h-1m-224 0h1v1h-1m221-1h1v1h-1m3 0h1v1h-1m-224 0h1v1h-1m221-1h1v1h-1m-218 0h1v1h-1m216-1h1v1h-1m-219 0h1v1h-1m222-1h1v1h-1m-219 0h1v1h-1m216-1h1v1h-1m-213 0h1v1h-1m210-1h1v1h-1m-214 0h1v1h-1m217-1h1v1h-1m-214 0h1v1h-1m4-1h1v1h-1m204-1h1v1h-1m3-1h1v1h-1m-211 1h1v1h-1m4-1h1v1h-1m204-1h1v1h-1m3-1h1v1h-1m-204 0h1v1h-1m197-1h1v1h-1m-201 1h1v1h-1m4-1h1v1h-1m197-1h1v1h-1m4-1h1v1h-1m-197 0h1v1h-1m190-1h1v1h-1m-194 0h1v1h-1m198-1h1v1h-1m-195 0h1v1h-1m4-1h1v1h-1m183-1h1v1h-1m4-1h1v1h-1m-191 1h1v1h-1m4-1h1v1h-1m183-1h1v1h-1m4-1h1v1h-1m-182 0h1v1h-1m174-1h1v1h-1m-179 0h1v1h-1m183-1h1v1h-1m-179 0h1v1h-1m5-1h1v1h-1m166-1h1v1h-1m4-1h1v1h-1m-201 1h1v1h-1m2-1h1v1h-1m24-1h1v1h-1m5-1h1v1h-1m4-1h1v1h-1m157-1h1v1h-1m5-1h1v1h-1m4-1h1v1h-1m-200 0h1v1h-1m12-1h2v1h-2m-14 0h1v1h-1m15-1h4v1h-4m16-1h1v1h-1m5-1h1v1h-1m5-1h1v1h-1m148-1h1v1h-1m4-1h1v1h-1m5-1h1v1h-1m-200 0h1v1h-1m19-1h1v1h-1m2-1h1v1h-1m-20 0h2v1h-2m19-1h4v1h-4m18-1h1v1h-1m5-1h1v1h-1m4-1h1v1h-1m139-1h1v1h-1m5-1h1v1h-1m4-1h1v1h-1m-174 0h4v1h-4m1 0h5v1h-5m20-1h1v1h-1m5-1h1v1h-1m5-1h1v1h-1m129-1h1v1h-1m5-1h1v1h-1m5-1h1v1h-1m-192 0h1v1h-1m2-1h1v1h-1m21-1h2v1h-2m3-1h1v1h-1m2-1h1v1h-1m-4 0h5v1h-5m24-1h1v1h-1m5-1h1v1h-1m5-1h1v1h-1m120-1h1v1h-1m4-1h1v1h-1m5-1h1v1h-1m-164 0h6v1h-6m40-1h1v1h-1m110-1h1v1h-1m-151 0h1v1h-1m2-1h3v1h-3m4-1h2v1h-2m25-1h1v1h-1m5-1h1v1h-1m120-1h1v1h-1m5-1h1v1h-1m-160 0h3v1h-3m4-1h2v1h-2m36-1h1v1h-1m5-1h1v1h-1m100-1h1v1h-1m5-1h1v1h-1m-152 0h1v1h-1m2-1h2v1h-2m3-1h2v1h-2m32-1h1v1h-1m15-1h1v1h-1m90-1h1v1h-1m15-1h1v1h-1m-157 0h4v1h-4m5-1h2v1h-2m37-1h1v1h-1m5-1h1v1h-1m10-1h1v1h-1m79-1h1v1h-1m11-1h1v1h-1m5-1h1v1h-1m-167 0h2v1h-2m5-1h1v1h-1m4-1h1v1h-1m3-1h3v1h-3m4-1h1v1h-1m2-1h1v1h-1m2-1h1v1h-1m47-1h1v1h-1m10-1h1v1h-1m69-1h1v1h-1m11-1h1v1h-1m-154 0h6v1h-6m7-1h2v1h-2m3-1h6v1h-6m49-1h1v1h-1m10-1h1v1h-1m10-1h1v1h-1m6-1h1v1h-1m48-1h1v1h-1m5-1h1v1h-1m11-1h1v1h-1m10-1h1v1h-1m-156 0h7v1h-7m9-1h1v1h-1m52-1h1v1h-1m10-1h1v1h-1m16-1h1v1h-1m5-1h1v1h-1m27-1h1v1h-1m5-1h1v1h-1m16-1h1v1h-1m11-1h1v1h-1m-85 0h1v1h-1m10-1h1v1h-1m6-1h1v1h-1m16-1h1v1h-1m5-1h1v1h-1m5-1h1v1h-1m6-1h1v1h-1m16-1h1v1h-1m5-1h1v1h-1m11-1h1v1h-1m-75 0h1v1h-1m16-1h1v1h-1m5-1h1v1h-1m27-1h1v1h-1m5-1h1v1h-1m16-1h1v1h-1m-64 0h1v1h-1m22-1h1v1h-1m5-1h1v1h-1m5-1h1v1h-1m6-1h1v1h-1m21-1h1v1h-1m-53 0h1v1h-1m5-1h1v1h-1m38-1h1v1h-1m5-1h1v1h-1m-38 0h1v1h-1m6-1h1v1h-1m5-1h1v1h-1m5-1h1v1h-1m6-1h1v1h-1m5-1h1v1h-1"/><path class="pl" fill="#259be8" d="M387 156h1v1h-1m5-1h1v1h-1m-21 0h1v1h-1m32-1h1v1h-1m5-1h1v1h-1m62-1h1v1h-1m4-1h1v1h-1m16-1h1v1h-1m-124 0h1v1h-1m53-1h1v1h-1m-64 0h1v1h-1m21-1h1v1h-1m27-1h1v1h-1m21-1h1v1h-1m43-1h1v1h-1m32-1h1v1h-1m-149 0h1v1h-1m64-1h1v1h-1m15-1h1v1h-1m53-1h1v1h-1m12-1h1v1h-1m7-1h1v1h-1m-156 0h1v1h-1m89-1h1v1h-1m34-1h1v1h-1m9-1h1v1h-1m11-1h1v1h-1m7-1h1v1h-1m8-1h1v1h-1m-39 0h1v1h-1m26-1h1v1h-1m7-1h1v1h-1m8-1h1v1h-1m-165 0h1v1h-1m5-1h1v1h-1m89-1h1v1h-1m5-1h1v1h-1m18-1h1v1h-1m11-1h1v1h-1m38-1h1v1h-1m-171 0h1v1h-1m5-1h1v1h-1m100-1h1v1h-1m4-1h1v1h-1m17-1h1v1h-1m38-1h1v1h-1m-169 0h1v1h-1m119-1h1v1h-1m8-1h1v1h-1m44-1h1v1h-1m-166 0h1v1h-1m109-1h1v1h-1m10-1h1v1h-1m3-1h1v1h-1m-132 0h1v1h-1m5-1h1v1h-1m121-1h1v1h-1m3-1h1v1h-1m53 0h2v1h-2m-186 0h1v1h-1m130-1h1v1h-1m58-1h1v1h-1m2-1h2v1h-2m-64 0h1v1h-1m3-1h1v1h-1m-130 0h1v1h-1m124-1h1v1h-1m3-1h1v1h-1m12-1h1v1h-1m4-1h1v1h-1m-147 1h1v1h-1m127-1h1v1h-1m4-1h1v1h-1m16-1h1v1h-1m45-1h4v1h-4m-65 0h1v1h-1m-140 2h1v1h-1m173-1h1v1h-1m36-1h1v1h-1m-209 1h1v1h-1m208-1h1v1h-1m-212 0h1v1h-1m181-1h1v1h-1m29-1h3v1h-3m0 0h1v1h-1m-214 0h1v1h-1m4-1h1v1h-1m182-1h1v1h-1m3-1h1v1h-1m23-1h1v1h-1m2-1h1v1h-1m-2 0h1v1h-1m2-1h1v1h-1m-4 0h1v1h-1m2-1h1v1h-1m-215 0h1v1h-1m196-1h1v1h-1m17-1h1v1h-1m2-1h1v1h-1m-5 0h1v1h-1m-211 0h1v1h-1m197-1h1v1h-1m14-1h1v1h-1m3-1h1v1h-1m-217 1h1v1h-1m203-1h1v1h-1m12-1h1v1h-1m-3 0h1v1h-1m-215 1h1v1h-1m209-1h1v1h-1m2-1h1v1h-1m-214 0h1v1h-1m215-1h1v1h-1m-8 0h1v1h-1m-207 0h1v1h-1m202-1h1v1h-1m9-1h1v1h-1m4-1h1v1h-1m-217 0h1v1h-1m209-1h1v1h-1m11-1h1v1h-1m-15 0h1v1h-1m-206 0h1v1h-1m211-1h1v1h-1m10-1h1v1h-1m-223 0h1v1h-1m208-1h1v1h-1m17 1h1v1h-1m2 0h1v1h-1m-229 1h1v1h-1m229-1h1v1h-1m-231 0h1v1h-1m0 0h1v1h-1m233-1h1v1h-1m-234 0h1v1h-1m-1 1h1v1h-1m237-1h1v1h-1m1 2h1v1h-1m-240 3h1v1h-1m243 2h1v1h-1m-245 0h1v1h-1m245-1h1v1h-1m-245 1h1v1h-1m0 0h1v1h-1m245-1h1v1h-1m-245 1h1v1h-1m246-1h1v1h-1m-246 0h1v1h-1m246-1h1v1h-1m-247 1h1v1h-1m247-1h1v1h-1m-246 0h1v1h-1m246-1h1v1h-1m-247 1h1v1h-1m247-1h1v1h-1m-246 0h1v1h-1m245-1h1v1h-1m-245 1h1v1h-1m246-1h1v1h-1m-246 0h1v1h-1m245-1h1v1h-1m-245 1h1v1h-1m245-1h1v1h-1m-244 0h1v1h-1m243-1h1v1h-1m1 1h1v1h-1m-2 0h1v1h-1m1 1h1v1h-1m-2 0h1v1h-1m0 1h1v1h-1m-1 0h1v1h-1m0 1h1v1h-1m-2 0h1v1h-1m0 1h1v1h-1m-2 0h1v1h-1m0 1h1v1h-1m-2 0h1v1h-1m0 1h1v1h-1m-2 0h1v1h-1m0 1h1v1h-1m-218 0h1v1h-1m215-1h1v1h-1m-215 1h1v1h-1m3-1h1v1h-1m209-1h1v1h-1m3-1h1v1h-1m-212 2h1v1h-1m3-1h1v1h-1m203-1h1v1h-1m3-1h1v1h-1m-206 1h1v1h-1m203-1h1v1h-1m-199 0h1v1h-1m196-1h1v1h-1m-197 1h1v1h-1m4-1h1v1h-1m189-1h1v1h-1m4-1h1v1h-1m-193 2h1v1h-1m4-1h1v1h-1m181-1h1v1h-1m4-1h1v1h-1m-185 1h1v1h-1m4-1h1v1h-1m173-1h1v1h-1m5-1h1v1h-1m-178 1h1v1h-1m174-1h1v1h-1m-170 0h1v1h-1m165-1h1v1h-1m-165 1h1v1h-1m5-1h1v1h-1m156-1h1v1h-1m4-1h1v1h-1m-200 0h1v1h-1m4 0h1v1h-1m35-1h1v1h-1m5-1h1v1h-1m147-1h1v1h-1m5-1h1v1h-1m-199 0h1v1h-1m6-1h1v1h-1m2-1h1v1h-1m-5 0h1v1h-1m14-1h1v1h-1m30-1h1v1h-1m5-1h1v1h-1m138-1h1v1h-1m4-1h1v1h-1m-175 0h1v1h-1m-22 0h1v1h-1m4-1h2v1h-2m19-1h1v1h-1m31-1h1v1h-1m5-1h1v1h-1m129-1h1v1h-1m5-1h1v1h-1m-192 0h2v1h-2m23-1h2v1h-2m40-1h1v1h-1m119-1h1v1h-1m-159 0h3v1h-3m35-1h1v1h-1m129-1h1v1h-1m-164 0h4v1h-4m40-1h1v1h-1m5-1h1v1h-1m109-1h1v1h-1m5-1h1v1h-1m-158 0h4v1h-4m49-1h1v1h-1m99-1h1v1h-1m-148 0h4v1h-4m44-1h1v1h-1m10-1h1v1h-1m89-1h1v1h-1m10-1h1v1h-1m-154 0h6v1h-6m50-1h1v1h-1m10-1h1v1h-1m79-1h1v1h-1m11-1h1v1h-1m-151 0h2v1h-2m3-1h3v1h-3m63-1h1v1h-1m69-1h1v1h-1m-153 0h1v1h-1m18-1h2v1h-2m3-1h2v1h-2m53-1h1v1h-1m15-1h1v1h-1m59-1h1v1h-1m15-1h1v1h-1m-162 0h2v1h-2m14-1h3v1h-3m4-1h1v1h-1m2-1h2v1h-2m58-1h1v1h-1m16-1h1v1h-1m5-1h1v1h-1m37-1h1v1h-1m6-1h1v1h-1m15-1h1v1h-1m-155 0h6v1h-6m8-1h2v1h-2m3-1h2v1h-2m3-1h4v1h-4m67-1h1v1h-1m5-1h1v1h-1m16-1h1v1h-1m6-1h1v1h-1m5-1h1v1h-1m5-1h1v1h-1m6-1h1v1h-1m5-1h1v1h-1m16-1h1v1h-1m5-1h1v1h-1m-148 0h12v1h-12m13-1h1v1h-1m2-1h1v1h-1m75-1h1v1h-1m48-1h1v1h-1m-134 0h3v1h-3m4-1h2v1h-2m4-1h1v1h-1m83-1h1v1h-1m5-1h1v1h-1m6-1h1v1h-1m5-1h1v1h-1m5-1h1v1h-1m6-1h1v1h-1m5-1h1v1h-1m5-1h1v1h-1"/><path class="pl" fill="#20a5e3" d="M486 149h1v1h-1m-9 0h1v1h-1m5-1h1v1h-1m11-1h1v1h-1m-10 0h1v1h-1m12-1h1v1h-1m-129 0h1v1h-1m5-1h1v1h-1m42-1h1v1h-1m71-1h1v1h-1m-13 0h1v1h-1m19-1h1v1h-1m7-1h1v1h-1m-126 0h1v1h-1m37-1h1v1h-1m5-1h1v1h-1m63-1h1v1h-1m10-1h1v1h-1m6-1h1v1h-1m-141 0h1v1h-1m68-1h1v1h-1m68-1h1v1h-1m6-1h1v1h-1m-147 0h1v1h-1m68-1h1v1h-1m10-1h1v1h-1m71-1h1v1h-1m7-1h1v1h-1m-161 0h1v1h-1m9-1h1v1h-1m5-1h1v1h-1m6-1h1v1h-1m58-1h1v1h-1m5-1h1v1h-1m15-1h1v1h-1m58-1h1v1h-1m7-1h1v1h-1m-168 0h1v1h-1m14-1h1v1h-1m79-1h1v1h-1m15-1h1v1h-1m17 0h1v1h-1m2-1h1v1h-1m44-1h1v1h-1m-176 0h1v1h-1m14-1h1v1h-1m89-1h1v1h-1m10-1h1v1h-1m4-1h1v1h-1m-108 0h1v1h-1m118-1h1v1h-1m2-1h1v1h-1m51-1h1v1h-1m-185 0h1v1h-1m5-1h1v1h-1m4-1h1v1h-1m109-1h1v1h-1m9-1h1v1h-1m-131 0h1v1h-1m4-1h1v1h-1m129-1h1v1h-1m3-1h1v1h-1m-128 0h1v1h-1m123-1h1v1h-1m55-1h1v1h-1m-191 0h1v1h-1m135-1h1v1h-1m2-1h1v1h-1m8-1h1v1h-1m49-1h2v1h-2m-62 0h1v1h-1m64-1h1v1h-1m-196 0h1v1h-1m4-1h1v1h-1m137-1h1v1h-1m5-1h1v1h-1m4-1h1v1h-1m-21 0h1v1h-1m-138 0h1v1h-1m4-1h1v1h-1m4-1h1v1h-1m129-1h1v1h-1m3-1h1v1h-1m15-1h1v1h-1m4-1h1v1h-1m4-1h1v1h-1m43-1h1v1h-1m-69 0h1v1h-1m67-1h1v1h-1m-204 0h1v1h-1m159-1h1v1h-1m4-1h1v1h-1m42-1h1v1h-1m-209 0h1v1h-1m171-1h1v1h-1m37-1h2v1h-2m-204 0h1v1h-1m204-1h2v1h-2m-212 0h1v1h-1m212-1h1v1h-1m-5 0h1v1h-1m3-1h1v1h-1m2-1h1v1h-1m-212 0h1v1h-1m210-1h1v1h-1m2-1h1v1h-1m-216 0h1v1h-1m187-1h1v1h-1m22-1h1v1h-1m3-1h1v1h-1m3-1h1v1h-1m-212 0h1v1h-1m203-1h1v1h-1m3-1h1v1h-1m3-1h1v1h-1m3-1h1v1h-1m-218 0h1v1h-1m190-1h1v1h-1m4-1h1v1h-1m12-1h1v1h-1m10-1h1v1h-1m-213 0h1v1h-1m188-1h1v1h-1m19-1h1v1h-1m3-1h1v1h-1m-6 0h1v1h-1m4-1h1v1h-1m3-1h1v1h-1m-217 0h1v1h-1m200-1h1v1h-1m-198 0h1v1h-1m195-1h1v1h-1m14-1h1v1h-1m3-1h1v1h-1m-217 0h1v1h-1m2-1h1v1h-1m201-1h1v1h-1m3-1h1v1h-1m8-1h1v1h-1m-11 0h1v1h-1m4-1h1v1h-1m-205 0h1v1h-1m209-1h1v1h-1m-214 0h1v1h-1m207-1h1v1h-1m4-1h1v1h-1m-209 0h1v1h-1m200-1h1v1h-1m9-1h1v1h-1m-212 0h1v1h-1m209-1h1v1h-1m4-1h1v1h-1m-215 0h1v1h-1m202-1h1v1h-1m4-1h1v1h-1m11-1h1v1h-1m-215 0h1v1h-1m214-1h1v1h-1m-13 0h1v1h-1m4-1h1v1h-1m11-1h1v1h-1m-220 0h1v1h-1m-1 1h1v1h-1m223-1h1v1h-1m-224 0h1v1h-1m226-1h1v1h-1m-225 0h1v1h-1m224-1h1v1h-1m-226 0h1v1h-1m-1 0h1v1h-1m-1 1h1v1h-1m231-1h1v1h-1m-232 0h1v1h-1m233-1h1v1h-1m-232 0h1v1h-1m232-1h1v1h-1m1 1h1v1h-1m2 1h1v1h-1m1 2h1v1h-1m-241 0h1v1h-1m0 1h1v1h-1m241-1h1v1h-1m1 1h1v1h-1m-243 0h1v1h-1m243-1h1v1h-1m-243 0h1v1h-1m0 0h1v1h-1m244-1h1v1h-1m-244 0h1v1h-1m243-1h1v1h-1m-243 0h1v1h-1m-1 0h1v1h-1m245-1h1v1h-1m-244 0h1v1h-1m244-1h1v1h-1m-244 0h1v1h-1m243-1h1v1h-1m-244 0h1v1h-1m245-1h1v1h-1m-244 0h1v1h-1m244-1h1v1h-1m-244 0h1v1h-1m243-1h1v1h-1m-244 0h1v1h-1m245-1h1v1h-1m-244 0h1v1h-1m243-1h1v1h-1m-242 0h1v1h-1m241-1h1v1h-1m-243 0h1v1h-1m245-1h1v1h-1m-244 0h1v1h-1m243-1h1v1h-1m-241 0h1v1h-1m240-1h1v1h-1m-242 0h1v1h-1m244-1h1v1h-1m-243 0h1v1h-1m241-1h1v1h-1m-239 0h1v1h-1m238-1h1v1h-1m2 0h1v1h-1m-241 0h1v1h-1m239-1h1v1h-1m-237 0h1v1h-1m236-1h1v1h-1m-239 0h1v1h-1m241-1h1v1h-1m-239 0h1v1h-1m237-1h1v1h-1m-2 0h1v1h-1m3 0h1v1h-1m-2 0h1v1h-1m-2 0h1v1h-1m2 0h1v1h-1m-2 0h1v1h-1m-2 0h1v1h-1m-229 0h1v1h-1m232-1h1v1h-1m-230 0h1v1h-1m3-1h1v1h-1m222-1h1v1h-1m2-1h1v1h-1m1 1h1v1h-1m-6 0h1v1h-1m3-1h1v1h-1m-2 1h1v1h-1m3-1h1v1h-1m-218 0h1v1h-1m212-1h1v1h-1m-213 1h1v1h-1m213-1h1v1h-1m3-1h1v1h-1m-212 0h1v1h-1m206-1h1v1h-1m-210 0h1v1h-1m214-1h1v1h-1m-211 0h1v1h-1m4-1h1v1h-1m200-1h1v1h-1m3-1h1v1h-1m-207 1h1v1h-1m208-1h1v1h-1m-205 0h1v1h-1m4-1h1v1h-1m194-1h1v1h-1m3-1h1v1h-1m-201 1h1v1h-1m3-1h1v1h-1m195-1h1v1h-1m4-1h1v1h-1m-195 0h1v1h-1m187-1h1v1h-1m-191 1h1v1h-1m4-1h1v1h-1m4-1h1v1h-1m179-1h1v1h-1m4-1h1v1h-1m4-1h1v1h-1m-191 1h1v1h-1m4-1h1v1h-1m4-1h1v1h-1m171-1h1v1h-1m5-1h1v1h-1m4-1h1v1h-1m-185 2h1v1h-1m5-1h1v1h-1m4-1h1v1h-1m163-1h1v1h-1m5-1h1v1h-1m4-1h1v1h-1m-177 1h1v1h-1m5-1h1v1h-1m5-1h1v1h-1m154-1h1v1h-1m4-1h1v1h-1m5-1h1v1h-1m-168 1h1v1h-1m4-1h1v1h-1m5-1h1v1h-1m145-1h1v1h-1m5-1h1v1h-1m5-1h1v1h-1m-155 1h1v1h-1m5-1h1v1h-1m136-1h1v1h-1m5-1h1v1h-1m-193 0h1v1h-1m42-1h1v1h-1m155-1h1v1h-1m-194 0h1v1h-1m48-1h1v1h-1m5-1h1v1h-1m127-1h1v1h-1m5-1h1v1h-1m-192 0h5v1h-5m8-1h1v1h-1m42-1h1v1h-1m15-1h1v1h-1m117-1h1v1h-1m15-1h1v1h-1m-200 0h1v1h-1m2-1h1v1h-1m6-1h1v1h-1m6-1h1v1h-1m44-1h1v1h-1m5-1h1v1h-1m127-1h1v1h-1m5-1h1v1h-1m-195 0h2v1h-2m73-1h1v1h-1m108-1h1v1h-1m-182 0h1v1h-1m5-1h1v1h-1m59-1h1v1h-1m5-1h1v1h-1m10-1h1v1h-1m98-1h1v1h-1m10-1h1v1h-1m5-1h1v1h-1m-119 0h1v1h-1m11-1h1v1h-1m88-1h1v1h-1m10-1h1v1h-1m-179 0h1v1h-1m21-1h2v1h-2m44-1h1v1h-1m10-1h1v1h-1m11-1h1v1h-1m78-1h1v1h-1m10-1h1v1h-1m10-1h1v1h-1m-162 0h2v1h-2m48-1h1v1h-1m21-1h1v1h-1m68-1h1v1h-1m20-1h1v1h-1m-157 0h3v1h-3m58-1h1v1h-1m16-1h1v1h-1m58-1h1v1h-1m15-1h1v1h-1m-171 0h1v1h-1m24-1h3v1h-3m53-1h1v1h-1m10-1h1v1h-1m16-1h1v1h-1m5-1h1v1h-1m37-1h1v1h-1m5-1h1v1h-1m16-1h1v1h-1m10-1h1v1h-1m-175 0h1v1h-1m23-1h3v1h-3m58-1h1v1h-1m11-1h1v1h-1m20-1h1v1h-1m6-1h1v1h-1m5-1h1v1h-1m5-1h1v1h-1m6-1h1v1h-1m5-1h1v1h-1m21-1h1v1h-1m10-1h1v1h-1m-169 0h2v1h-2m20-1h6v1h-6m65-1h1v1h-1m11-1h1v1h-1m5-1h1v1h-1m47-1h1v1h-1m6-1h1v1h-1m10-1h1v1h-1m-162 0h1v1h-1m16-1h1v1h-1m2-1h1v1h-1m2-1h4v1h-4m68-1h1v1h-1m16-1h1v1h-1m5-1h1v1h-1m6-1h1v1h-1m16-1h1v1h-1m5-1h1v1h-1m5-1h1v1h-1m16-1h1v1h-1m-156 0h4v1h-4m12-1h1v1h-1m3-1h1v1h-1m2-1h2v1h-2m3-1h2v1h-2m73-1h1v1h-1m26-1h1v1h-1m5-1h1v1h-1m27-1h1v1h-1m-150 0h7v1h-7m9-1h7v1h-7m8-1h1v1h-1m2-1h1v1h-1m78-1h1v1h-1m5-1h1v1h-1m5-1h1v1h-1m27-1h1v1h-1m5-1h1v1h-1m6-1h1v1h-1m-142 0h6v1h-6m7-1h3v1h-3m4-1h3v1h-3m4-1h1v1h-1m95-1h1v1h-1m5-1h1v1h-1m5-1h1v1h-1m6-1h1v1h-1m-124 0h5v1h-5m6-1h3v1h-3m4-1h1v1h-1m-4 0h1v1h-1"/><path class="pl" fill="#18addb" d="M489 143h1v1h-1m-4 0h1v1h-1m5-1h1v1h-1m8-1h1v1h-1m-16 0h1v1h-1m4-1h1v1h-1m6-1h1v1h-1m7-1h1v1h-1m-24 0h1v1h-1m8-1h1v1h-1m5-1h1v1h-1m5-1h1v1h-1m-14 0h1v1h-1m5-1h1v1h-1m5-1h1v1h-1m6-1h1v1h-1m6-1h1v1h-1m-130 0h1v1h-1m37-1h1v1h-1m68-1h1v1h-1m4-1h1v1h-1m10-1h1v1h-1m6-1h1v1h-1m-4 0h1v1h-1m6-1h1v1h-1m-29 0h1v1h-1m31-1h1v1h-1m6-1h1v1h-1m-140 0h1v1h-1m47-1h1v1h-1m88-1h1v1h-1m7-1h2v1h-2m-162 0h1v1h-1m87-1h1v1h-1m78-1h1v1h-1m-6 0h1v1h-1m7-1h1v1h-1m-171 0h1v1h-1m5-1h1v1h-1m92-1h1v1h-1m27-1h1v1h-1m42-1h1v1h-1m-171 0h1v1h-1m5-1h1v1h-1m97-1h1v1h-1m5-1h1v1h-1m65-1h1v1h-1m-60 0h1v1h-1m14-1h2v1h-2m48-1h1v1h-1m-174 0h1v1h-1m107-1h1v1h-1m19-1h1v1h-1m49-1h2v1h-2m-180 0h1v1h-1m117-1h1v1h-1m5-1h1v1h-1m7-1h1v1h-1m2-1h1v1h-1m51-1h1v1h-1m2-1h1v1h-1m-55 0h1v1h-1m-138 0h1v1h-1m4-1h1v1h-1m127-1h1v1h-1m4-1h4v1h-4m-135 1h1v1h-1m134-1h1v1h-1m2-1h1v1h-1m55-1h1v1h-1m2-1h2v1h-2m-198 0h1v1h-1m136-1h1v1h-1m9-1h1v1h-1m-149 0h1v1h-1m139-1h1v1h-1m2-1h2v1h-2m61-1h1v1h-1m-202 0h1v1h-1m138-1h1v1h-1m64-1h1v1h-1m-65 0h1v1h-1m2-1h1v1h-1m62-1h1v1h-1m-65 0h1v1h-1m63-1h1v1h-1m2-1h1v1h-1m-43 0h1v1h-1m38-1h1v1h-1m3-1h1v1h-1m2-1h1v1h-1m-4 0h1v1h-1m3-1h1v1h-1m-10 0h1v1h-1m4-1h1v1h-1m4-1h1v1h-1m2-1h1v1h-1m-13 0h1v1h-1m4-1h1v1h-1m4-1h1v1h-1m3-1h1v1h-1m-210 0h1v1h-1m196-1h1v1h-1m5-1h1v1h-1m7-1h1v1h-1m-212 0h1v1h-1m185-1h1v1h-1m23-1h1v1h-1m-10 0h1v1h-1m4-1h1v1h-1m4-1h1v1h-1m3-1h1v1h-1m3-1h1v1h-1m-215 0h1v1h-1m3-1h1v1h-1m186-1h1v1h-1m2-1h1v1h-1m6-1h1v1h-1m9-1h1v1h-1m-17 0h1v1h-1m4-1h1v1h-1m10-1h1v1h-1m7-1h1v1h-1m-211 0h1v1h-1m193-1h1v1h-1m3-1h1v1h-1m4-1h1v1h-1m8-1h1v1h-1m-210 0h1v1h-1m189-1h1v1h-1m4-1h1v1h-1m5-1h1v1h-1m9-1h1v1h-1m-8 0h1v1h-1m4-1h1v1h-1m-204 0h1v1h-1m186-1h1v1h-1m5-1h1v1h-1m5-1h1v1h-1m3-1h1v1h-1m-201 0h1v1h-1m190 0h1v1h-1m5-1h1v1h-1m4-1h1v1h-1m-8 1h1v1h-1m10-1h1v1h-1m-205 0h1v1h-1m-2 0h1v1h-1m199-1h1v1h-1m16-1h1v1h-1m-215 1h1v1h-1m216-1h1v1h-1m-220 3h1v1h-1m223-1h1v1h-1m-224 1h1v1h-1m225-1h1v1h-1m-230 8h1v1h-1m236-1h1v1h-1m-237 1h1v1h-1m0 0h1v1h-1m237-1h1v1h-1m-238 1h1v1h-1m239-1h1v1h-1m-239 0h1v1h-1m239-1h1v1h-1m-239 1h1v1h-1m240-1h1v1h-1m-240 0h1v1h-1m240-1h1v1h-1m-241 1h1v1h-1m241-1h1v1h-1m-241 0h1v1h-1m241-1h1v1h-1m-241 1h1v1h-1m242-1h1v1h-1m-242 0h1v1h-1m241-1h1v1h-1m-241 1h1v1h-1m242-1h1v1h-1m-241 0h1v1h-1m240-1h1v1h-1m-241 2h2v1h-2m240-1h2v1h-2m-239 2h2v1h-2m238-1h1v1h-1m2-1h1v1h-1m-240 2h1v1h-1m2-1h1v1h-1m236-1h2v1h-2m-237 2h1v1h-1m235-1h1v1h-1m2-1h1v1h-1m-236 2h1v1h-1m233-1h1v1h-1m2-1h1v1h-1m-1 1h1v1h-1m-3 0h1v1h-1m1 1h1v1h-1m-3 0h1v1h-1m-224 1h1v1h-1m225-1h1v1h-1m-3 0h1v1h-1m1 1h1v1h-1m-3 0h1v1h-1m-2 1h1v1h-1m3-1h1v1h-1m-210 2h1v1h-1m204-1h1v1h-1m3-1h1v1h-1m-208 1h1v1h-1m205-1h1v1h-1m-201 0h1v1h-1m198-1h1v1h-1m-199 1h1v1h-1m4-1h1v1h-1m191-1h1v1h-1m4-1h1v1h-1m-196 2h1v1h-1m4-1h1v1h-1m185-1h1v1h-1m4-1h1v1h-1m-189 1h1v1h-1m4-1h1v1h-1m177-1h1v1h-1m5-1h1v1h-1m-182 2h1v1h-1m4-1h1v1h-1m169-1h1v1h-1m5-1h1v1h-1m-174 1h1v1h-1m4-1h1v1h-1m161-1h1v1h-1m5-1h1v1h-1m-166 1h1v1h-1m4-1h1v1h-1m153-1h1v1h-1m5-1h1v1h-1m-153 1h1v1h-1m144-1h1v1h-1m-149 0h1v1h-1m153-1h1v1h-1m-144 0h1v1h-1m135-1h1v1h-1m-140 0h1v1h-1m145-1h1v1h-1m-140 0h1v1h-1m5-1h1v1h-1m126-1h1v1h-1m4-1h1v1h-1m-189 0h2v1h-2m64-1h1v1h-1m116-1h1v1h-1m-185 0h2v1h-2m8-1h3v1h-3m55-1h1v1h-1m127-1h1v1h-1m-192 0h2v1h-2m4-1h1v1h-1m9-1h1v1h-1m62-1h1v1h-1m107-1h1v1h-1m-178 0h5v1h-5m6-1h1v1h-1m4-1h1v1h-1m56-1h1v1h-1m10-1h1v1h-1m97-1h1v1h-1m10-1h1v1h-1m-188 0h1v1h-1m3-1h2v1h-2m14-1h1v1h-1m59-1h1v1h-1m10-1h1v1h-1m87-1h1v1h-1m10-1h1v1h-1m-181 0h1v1h-1m89-1h1v1h-1m77-1h1v1h-1m-87 0h1v1h-1m15-1h1v1h-1m67-1h1v1h-1m15-1h1v1h-1m-177 0h1v1h-1m85-1h1v1h-1m15-1h1v1h-1m57-1h1v1h-1m16-1h1v1h-1m-150 0h1v1h-1m67-1h1v1h-1m15-1h1v1h-1m5-1h1v1h-1m37-1h1v1h-1m5-1h1v1h-1m16-1h1v1h-1m-145 0h2v1h-2m72-1h1v1h-1m21-1h1v1h-1m5-1h1v1h-1m5-1h1v1h-1m5-1h1v1h-1m6-1h1v1h-1m5-1h1v1h-1m20-1h1v1h-1m-162 0h1v1h-1m23-1h2v1h-2m77-1h1v1h-1m5-1h1v1h-1m47-1h1v1h-1m5-1h1v1h-1m-156 0h1v1h-1m21-1h4v1h-4m88-1h1v1h-1m6-1h1v1h-1m26-1h1v1h-1m5-1h1v1h-1m-146 0h3v1h-3m20-1h5v1h-5m100-1h1v1h-1m5-1h1v1h-1m5-1h1v1h-1m6-1h1v1h-1m-134 0h3v1h-3m17-1h6v1h-6m-16 0h7v1h-7m12-1h1v1h-1m2-1h8v1h-8m-12 0h18v1h-18m1 0h4v1h-4m7-1h3v1h-3m4-1h2v1h-2m3-1h1v1h-1m2-1h1v1h-1m-12 0h3v1h-3m5-1h2v1h-2m4-1h1v1h-1m-5 0h1v1h-1"/><path class="pl" fill="#08b5d0" d="M487 137h1v1h-1m-4 0h2v1h-2m5-1h1v1h-1m6-1h1v1h-1m-14 0h1v1h-1m5-1h1v1h-1m4-1h1v1h-1m7-1h1v1h-1m-15 0h2v1h-2m5-1h1v1h-1m5-1h1v1h-1m6-1h1v1h-1m-15 0h1v1h-1m10-1h2v1h-2m7-1h1v1h-1m-23 0h1v1h-1m3-1h1v1h-1m9-1h1v1h-1m7-1h1v1h-1m5-1h1v1h-1m-4 0h1v1h-1m6-1h1v1h-1m-140 0h1v1h-1m51-1h1v1h-1m5-1h1v1h-1m57-1h1v1h-1m28-1h1v1h-1m-131 0h1v1h-1m51-1h1v1h-1m82-1h1v1h-1m-153 0h1v1h-1m10-1h1v1h-1m66-1h1v1h-1m45-1h1v1h-1m-126 0h1v1h-1m9-1h1v1h-1m10-1h1v1h-1m47-1h1v1h-1m10-1h1v1h-1m-62 0h1v1h-1m57-1h1v1h-1m10-1h1v1h-1m9-1h1v1h-1m34-1h1v1h-1m-124 0h1v1h-1m9-1h1v1h-1m115-1h1v1h-1m42-1h1v1h-1m-176 0h1v1h-1m5-1h1v1h-1m96-1h1v1h-1m4-1h1v1h-1m28-1h1v1h-1m44-1h2v1h-2m-181 0h1v1h-1m4-1h1v1h-1m96-1h1v1h-1m14-1h1v1h-1m22-1h3v1h-3m47-1h1v1h-1m-175 0h1v1h-1m97-1h1v1h-1m35-1h1v1h-1m-145 0h1v1h-1m115-1h1v1h-1m8-1h1v1h-1m16-1h1v1h-1m2-1h1v1h-1m-145 0h1v1h-1m4-1h1v1h-1m124-1h1v1h-1m4-1h1v1h-1m14-1h1v1h-1m44-1h3v1h-3m-40 0h1v1h-1m42-1h1v1h-1m-197 0h1v1h-1m4-1h1v1h-1m4-1h1v1h-1m125-1h1v1h-1m4-1h1v1h-1m4-1h1v1h-1m5-1h1v1h-1m51-1h1v1h-1m-44 0h1v1h-1m44-1h1v1h-1m-201 0h1v1h-1m4-1h1v1h-1m4-1h1v1h-1m134-1h1v1h-1m7-1h1v1h-1m2-1h1v1h-1m50-1h1v1h-1m-2 0h2v1h-2m-200 0h1v1h-1m151-1h1v1h-1m4-1h1v1h-1m2-1h1v1h-1m41-1h1v1h-1m3-1h2v1h-2m-48 0h1v1h-1m6-1h1v1h-1m12-1h1v1h-1m25-1h1v1h-1m3-1h1v1h-1m3-1h1v1h-1m-206 0h1v1h-1m4-1h1v1h-1m146-1h1v1h-1m2-1h1v1h-1m3-1h1v1h-1m4-1h1v1h-1m27-1h1v1h-1m7-1h1v1h-1m4-1h1v1h-1m4-1h1v1h-1m3-1h1v1h-1m-207 0h1v1h-1m164-1h1v1h-1m2-1h1v1h-1m5-1h1v1h-1m15-1h1v1h-1m8-1h1v1h-1m4-1h1v1h-1m3-1h1v1h-1m4-1h1v1h-1m2-1h2v1h-2m-208 0h1v1h-1m4-1h1v1h-1m147-1h1v1h-1m2-1h1v1h-1m7-1h1v1h-1m7-1h1v1h-1m25-1h1v1h-1m4-1h1v1h-1m4-1h1v1h-1m3-1h1v1h-1m3-1h1v1h-1m-51 0h1v1h-1m7-1h1v1h-1m23-1h1v1h-1m3-1h1v1h-1m5-1h1v1h-1m11-1h1v1h-1m3-1h1v1h-1m-207 0h1v1h-1m147-1h1v1h-1m2-1h1v1h-1m8-1h1v1h-1m11-1h1v1h-1m22-1h1v1h-1m7-1h1v1h-1m4-1h1v1h-1m4-1h1v1h-1m-54 0h1v1h-1m16-1h1v1h-1m7-1h1v1h-1m12-1h1v1h-1m9-1h1v1h-1m4-1h1v1h-1m3-1h1v1h-1m-49 0h1v1h-1m8-1h1v1h-1m17-1h1v1h-1m5-1h1v1h-1m9-1h1v1h-1m4-1h1v1h-1m4-1h1v1h-1m-44 0h1v1h-1m19-1h1v1h-1m13-1h1v1h-1m5-1h1v1h-1m-203 0h1v1h-1m168-1h1v1h-1m18-1h1v1h-1m2-1h1v1h-1m12-1h1v1h-1m-30 0h1v1h-1m6-1h1v1h-1m5-1h1v1h-1m-184 0h1v1h-1m2-1h1v1h-1m184-1h1v1h-1m9-1h1v1h-1m2 0h1v1h-1m-198 0h1v1h-1m194-1h1v1h-1m-196 0h1v1h-1m200-1h1v1h-1m-201 1h1v1h-1m201-1h1v1h-1m-15 0h1v1h-1m-189 0h1v1h-1m2-1h1v1h-1m203-1h1v1h-1m2-1h1v1h-1m-209 0h1v1h-1m211-1h1v1h-1m-210 0h1v1h-1m209-1h1v1h-1m-212 1h1v1h-1m215-1h1v1h-1m-214 0h1v1h-1m213-1h1v1h-1m-215 0h1v1h-1m217-1h1v1h-1m-218 0h1v1h-1m219 0h1v1h-1m2 1h1v1h-1m-222 0h1v1h-1m223 0h1v1h-1m-225 1h1v1h-1m227-1h1v1h-1m-229 0h1v1h-1m229-1h1v1h-1m-230 1h1v1h-1m231-1h1v1h-1m-231 0h1v1h-1m231-1h1v1h-1m1 0h1v1h-1m-233 0h1v1h-1m233-1h1v1h-1m-233 0h1v1h-1m233-1h1v1h-1m1 0h1v1h-1m-235 0h1v1h-1m235-1h1v1h-1m-234 0h1v1h-1m234-1h1v1h-1m-235 0h1v1h-1m236-1h1v1h-1m-236 0h1v1h-1m236-1h1v1h-1m-236 0h1v1h-1m235-1h1v1h-1m-236 0h1v1h-1m237-1h1v1h-1m-237 0h1v1h-1m237-1h1v1h-1m-236 0h1v1h-1m235-1h1v1h-1m-237 0h1v1h-1m239-1h1v1h-1m-238 0h1v1h-1m237-1h1v1h-1m-236 0h1v1h-1m235-1h1v1h-1m-237 0h1v1h-1m239-1h1v1h-1m-238 0h1v1h-1m237-1h1v1h-1m-236 0h1v1h-1m235-1h1v1h-1m-237 0h1v1h-1m239-1h1v1h-1m-238 0h1v1h-1m237-1h1v1h-1m-235 0h1v1h-1m234-1h1v1h-1m-237 0h1v1h-1m239-1h1v1h-1m-237 0h1v1h-1m236-1h1v1h-1m-235 0h1v1h-1m233-1h1v1h-1m-235 0h1v1h-1m237-1h1v1h-1m-236 0h1v1h-1m235-1h1v1h-1m-233 0h1v1h-1m231-1h1v1h-1m-233 0h1v1h-1m236-1h1v1h-1m-235 0h1v1h-1m233-1h1v1h-1m-231 0h1v1h-1m229-1h1v1h-1m-231 0h1v1h-1m234-1h1v1h-1m-233 0h1v1h-1m3-1h1v1h-1m226-1h1v1h-1m2-1h1v1h-1m-231 1h1v1h-1m232-1h1v1h-1m-5 0h1v1h-1m3-1h1v1h-1m0 1h1v1h-1m-5 0h1v1h-1m3-1h1v1h-1m-2 1h1v1h-1m3-1h1v1h-1m-6 0h1v1h-1m-218 1h1v1h-1m219-1h1v1h-1m3-1h1v1h-1m-6 0h1v1h-1m-214 1h1v1h-1m3-1h1v1h-1m208-1h1v1h-1m4-1h1v1h-1m3-1h1v1h-1m-3 1h1v1h-1m-210 0h1v1h-1m4-1h1v1h-1m200-1h1v1h-1m3-1h1v1h-1m-3 1h1v1h-1m4-1h1v1h-1m-201 0h1v1h-1m194-1h1v1h-1m-199 1h1v1h-1m4-1h1v1h-1m4-1h1v1h-1m188-1h1v1h-1m3-1h1v1h-1m4-1h1v1h-1m-200 1h1v1h-1m197-1h1v1h-1m-193 0h1v1h-1m4-1h1v1h-1m181-1h1v1h-1m4-1h1v1h-1m-190 1h1v1h-1m5-1h1v1h-1m4-1h1v1h-1m174-1h1v1h-1m4-1h1v1h-1m4-1h1v1h-1m-187 1h1v1h-1m4-1h1v1h-1m5-1h1v1h-1m166-1h1v1h-1m4-1h1v1h-1m4-1h1v1h-1m-179 2h1v1h-1m4-1h1v1h-1m5-1h1v1h-1m158-1h1v1h-1m4-1h1v1h-1m5-1h1v1h-1m-172 1h1v1h-1m4-1h1v1h-1m5-1h1v1h-1m149-1h1v1h-1m5-1h1v1h-1m5-1h1v1h-1m-160 1h1v1h-1m5-1h1v1h-1m141-1h1v1h-1m5-1h1v1h-1m-155 0h1v1h-1m14-1h1v1h-1m132-1h1v1h-1m14-1h1v1h-1m-151 0h1v1h-1m142-1h1v1h-1m-147 0h1v1h-1m14-1h1v1h-1m123-1h1v1h-1m14-1h1v1h-1m-142 0h1v1h-1m133-1h1v1h-1m-138 0h1v1h-1m15-1h1v1h-1m114-1h1v1h-1m14-1h1v1h-1m-138 0h1v1h-1m5-1h1v1h-1m9-1h1v1h-1m105-1h1v1h-1m10-1h1v1h-1m5-1h1v1h-1m-125 0h1v1h-1m10-1h1v1h-1m95-1h1v1h-1m10-1h1v1h-1m-183 0h1v1h-1m63-1h1v1h-1m125-1h1v1h-1m-190 0h2v1h-2m75-1h1v1h-1m10-1h1v1h-1m85-1h1v1h-1m10-1h1v1h-1m-184 0h1v1h-1m2-1h2v1h-2m4-1h1v1h-1m2-1h7v1h-7m66-1h1v1h-1m10-1h1v1h-1m10-1h1v1h-1m76-1h1v1h-1m10-1h1v1h-1m9-1h1v1h-1m-185 0h1v1h-1m11-1h1v1h-1m64-1h1v1h-1m10-1h1v1h-1m10-1h1v1h-1m5-1h1v1h-1m56-1h1v1h-1m5-1h1v1h-1m10-1h1v1h-1m10-1h1v1h-1m-185 0h1v1h-1m2-1h2v1h-2m5-1h2v1h-2m5-1h1v1h-1m4-1h1v1h-1m78-1h1v1h-1m15-1h1v1h-1m46-1h1v1h-1m15-1h1v1h-1m-153 0h1v1h-1m66-1h1v1h-1m15-1h1v1h-1m16-1h1v1h-1m5-1h1v1h-1m5-1h1v1h-1m5-1h1v1h-1m5-1h1v1h-1m5-1h1v1h-1m5-1h1v1h-1m6-1h1v1h-1m15-1h1v1h-1m15-1h1v1h-1m-162 0h1v1h-1m70-1h1v1h-1m16-1h1v1h-1m56-1h1v1h-1m15-1h1v1h-1m-175 0h1v1h-1m93-1h1v1h-1m16-1h1v1h-1m5-1h1v1h-1m36-1h1v1h-1m5-1h1v1h-1m15-1h1v1h-1m-147 0h1v1h-1m75-1h1v1h-1m21-1h1v1h-1m5-1h1v1h-1m5-1h1v1h-1m5-1h1v1h-1m5-1h1v1h-1m6-1h1v1h-1m20-1h1v1h-1m-166 0h2v1h-2m104-1h1v1h-1m5-1h1v1h-1m47-1h1v1h-1m5-1h1v1h-1m-160 0h2v1h-2m23-1h2v1h-2m91-1h1v1h-1m5-1h1v1h-1m5-1h1v1h-1m15-1h1v1h-1m6-1h1v1h-1m5-1h1v1h-1m-149 0h2v1h-2m22-1h3v1h-3m106-1h1v1h-1m5-1h1v1h-1m-133 0h3v1h-3m20-1h5v1h-5m-19 0h6v1h-6m19-1h5v1h-5m-17 0h3v1h-3m4-1h3v1h-3m9-1h2v1h-2m3-1h6v1h-6m-15 0h3v1h-3m4-1h3v1h-3m5-1h3v1h-3m4-1h7v1h-7m-11 0h2v1h-2m5-1h2v1h-2m4-1h5v1h-5m6-1h2v1h-2m-13 0h7v1h-7m9-1h1v1h-1m3-1h1v1h-1m-7 0h4v1h-4m6-1h1v1h-1"/><path class="pl" fill="#02bac3" d="M486 132h1v1h-1m5-1h1v1h-1m-4 0h2v1h-2m5-1h2v1h-2m7-1h1v1h-1m-15 0h1v1h-1m5-1h1v1h-1m5-1h1v1h-1m2 0h1v1h-1m6-1h1v1h-1m-20 0h1v1h-1m3-1h1v1h-1m7-1h1v1h-1m5-1h1v1h-1m-17 0h1v1h-1m18-1h1v1h-1m2-1h1v1h-1m5-1h1v1h-1m-26 0h1v1h-1m22-1h1v1h-1m8-1h1v1h-1m-31 0h2v1h-2m25-1h1v1h-1m-136 0h1v1h-1m45-1h1v1h-1m66-1h1v1h-1m26-1h1v1h-1m-87 0h1v1h-1m59-1h4v1h-4m30-1h1v1h-1m-134 0h1v1h-1m136-1h1v1h-1m-156 0h1v1h-1m65-1h1v1h-1m10-1h1v1h-1m50-1h4v1h-4m32-1h1v1h-1m-161 0h1v1h-1m9-1h1v1h-1m75-1h1v1h-1m49-1h1v1h-1m30-1h1v1h-1m-74 0h1v1h-1m41-1h1v1h-1m34-1h2v1h-2m-174 0h1v1h-1m9-1h1v1h-1m85-1h1v1h-1m9-1h1v1h-1m39-1h1v1h-1m34-1h1v1h-1m-172 0h1v1h-1m95-1h1v1h-1m44-1h1v1h-1m2-1h1v1h-1m33-1h1v1h-1m-182 0h1v1h-1m4-1h1v1h-1m104-1h1v1h-1m4-1h1v1h-1m39-1h1v1h-1m-152 0h1v1h-1m117-1h1v1h-1m30-1h2v1h-2m-5 0h1v1h-1m8-1h1v1h-1m4-1h1v1h-1m29-1h2v1h-2m-191 0h1v1h-1m4-1h1v1h-1m122-1h1v1h-1m4-1h1v1h-1m34-1h1v1h-1m28-1h1v1h-1m-32 0h1v1h-1m6-1h1v1h-1m24-1h1v1h-1m-195 0h1v1h-1m4-1h1v1h-1m131-1h1v1h-1m4-1h1v1h-1m29-1h1v1h-1m5-1h1v1h-1m3-1h1v1h-1m13-1h1v1h-1m4-1h1v1h-1m3-1h1v1h-1m-32 0h1v1h-1m6-1h1v1h-1m8-1h1v1h-1m4-1h1v1h-1m4-1h1v1h-1m4-1h1v1h-1m3-1h1v1h-1m4-1h1v1h-1m-201 0h1v1h-1m4-1h1v1h-1m140-1h1v1h-1m3-1h1v1h-1m23-1h1v1h-1m9-1h1v1h-1m5-1h1v1h-1m4-1h1v1h-1m3-1h1v1h-1m4-1h1v1h-1m3-1h2v1h-2m-199 0h1v1h-1m149-1h1v1h-1m18-1h1v1h-1m6-1h1v1h-1m4-1h1v1h-1m5-1h1v1h-1m8-1h1v1h-1m3-1h1v1h-1m4-1h1v1h-1m3-1h1v1h-1m-203 0h1v1h-1m155-1h1v1h-1m27-1h1v1h-1m7-1h1v1h-1m9-1h1v1h-1m3-1h1v1h-1m-33 0h1v1h-1m10-1h1v1h-1m9-1h1v1h-1m4-1h1v1h-1m3-1h1v1h-1m5-1h1v1h-1m3-1h1v1h-1m-206 0h1v1h-1m3-1h1v1h-1m157-1h1v1h-1m3-1h1v1h-1m16-1h1v1h-1m5-1h1v1h-1m4-1h1v1h-1m4-1h1v1h-1m4-1h1v1h-1m4-1h1v1h-1m4-1h1v1h-1m-23 0h1v1h-1m8-1h1v1h-1m5-1h1v1h-1m4-1h1v1h-1m3-1h1v1h-1m-202 0h1v1h-1m165-1h1v1h-1m22-1h1v1h-1m5-1h1v1h-1m-8 0h1v1h-1m-190 1h1v1h-1m178-1h1v1h-1m1 0h1v1h-1m-184 2h1v1h-1m187-1h1v1h-1m2 0h1v1h-1m-192 0h1v1h-1m193-1h1v1h-1m-196 2h1v1h-1m199-1h1v1h-1m-201 0h1v1h-1m203-1h1v1h-1m-205 1h1v1h-1m2-1h1v1h-1m205-1h1v1h-1m-208 1h1v1h-1m209-1h1v1h-1m-211 2h1v1h-1m213-1h1v1h-1m-214 0h1v1h-1m-1 1h1v1h-1m-3 2h1v1h-1m222-1h1v1h-1m-223 1h1v1h-1m0 0h1v1h-1m225-1h1v1h-1m-226 1h1v1h-1m227-1h1v1h-1m-227 0h1v1h-1m227-1h1v1h-1m-228 1h1v1h-1m229-1h1v1h-1m-229 0h1v1h-1m229-1h1v1h-1m-230 1h1v1h-1m231-1h1v1h-1m-231 0h1v1h-1m231-1h1v1h-1m-232 1h1v1h-1m233-1h1v1h-1m-232 0h1v1h-1m-1 1h1v1h-1m233-1h1v1h-1m-232 0h1v1h-1m232-1h1v1h-1m-233 1h1v1h-1m234-1h1v1h-1m-233 0h1v1h-1m232-1h1v1h-1m-233 1h2v1h-2m232-1h1v1h-1m2-1h1v1h-1m-234 2h2v1h-2m232-1h2v1h-2m-232 2h1v1h-1m2-1h1v1h-1m229-1h1v1h-1m2-1h1v1h-1m-232 2h1v1h-1m2-1h1v1h-1m227-1h1v1h-1m2-1h1v1h-1m-230 1h1v1h-1m229-1h1v1h-1m-227 0h1v1h-1m225-1h1v1h-1m-226 1h1v1h-1m227-1h1v1h-1m-225 0h1v1h-1m223-1h1v1h-1m-224 1h1v1h-1m225-1h1v1h-1m-3 0h1v1h-1m-217 1h1v1h-1m216-1h1v1h-1m2-1h1v1h-1m-4 2h1v1h-1m2-1h1v1h-1m-215 2h1v1h-1m3-1h1v1h-1m207-1h1v1h-1m3-1h1v1h-1m-5 1h1v1h-1m3-1h1v1h-1m-203 2h1v1h-1m197-1h1v1h-1m4-1h1v1h-1m-202 2h1v1h-1m195-1h1v1h-1m4-1h1v1h-1m-196 1h1v1h-1m4-1h1v1h-1m185-1h1v1h-1m4-1h1v1h-1m-190 2h1v1h-1m5-1h1v1h-1m178-1h1v1h-1m4-1h1v1h-1m-183 1h1v1h-1m4-1h1v1h-1m171-1h1v1h-1m5-1h1v1h-1m-177 1h1v1h-1m5-1h1v1h-1m163-1h1v1h-1m5-1h1v1h-1m-164 1h1v1h-1m155-1h1v1h-1m-160 0h1v1h-1m165-1h1v1h-1m-156 0h1v1h-1m147-1h1v1h-1m-152 0h1v1h-1m157-1h1v1h-1m-148 0h1v1h-1m139-1h1v1h-1m-144 0h1v1h-1m149-1h1v1h-1m-139 0h1v1h-1m130-1h1v1h-1m-135 0h1v1h-1m140-1h1v1h-1m-131 0h1v1h-1m121-1h1v1h-1m-126 0h1v1h-1m10-1h1v1h-1m112-1h1v1h-1m9-1h1v1h-1m-126 1h1v1h-1m9-1h1v1h-1m103-1h1v1h-1m10-1h1v1h-1m-118 0h1v1h-1m10-1h1v1h-1m94-1h1v1h-1m9-1h1v1h-1m-98 0h1v1h-1m84-1h1v1h-1m-168 0h2v1h-2m74-1h1v1h-1m14-1h1v1h-1m75-1h1v1h-1m15-1h1v1h-1m-182 0h3v1h-3m6-1h1v1h-1m76-1h1v1h-1m15-1h1v1h-1m65-1h1v1h-1m15-1h1v1h-1m-178 0h2v1h-2m4-1h2v1h-2m84-1h1v1h-1m15-1h1v1h-1m55-1h1v1h-1m15-1h1v1h-1m-175 0h2v1h-2m4-1h2v1h-2m6-1h5v1h-5m85-1h1v1h-1m15-1h1v1h-1m5-1h1v1h-1m35-1h1v1h-1m5-1h1v1h-1m15-1h1v1h-1m-172 0h1v1h-1m4-1h1v1h-1m6-1h2v1h-2m7-1h2v1h-2m85-1h1v1h-1m20-1h1v1h-1m5-1h1v1h-1m5-1h1v1h-1m5-1h1v1h-1m5-1h1v1h-1m5-1h1v1h-1m20-1h1v1h-1m-166 0h1v1h-1m18-1h1v1h-1m88-1h1v1h-1m5-1h1v1h-1m45-1h1v1h-1m5-1h1v1h-1m-160 0h1v1h-1m115-1h1v1h-1m5-1h1v1h-1m25-1h1v1h-1m5-1h1v1h-1m-25 0h1v1h-1m5-1h1v1h-1m5-1h1v1h-1m5-1h1v1h-1m-142 0h1v1h-1m24-1h1v1h-1m-24 0h1v1h-1m2-1h1v1h-1m-1 0h3v1h-3m23-1h1v1h-1m-23 0h2v1h-2m3-1h2v1h-2m19-1h3v1h-3m-21 0h3v1h-3m4-1h2v1h-2m17-1h3v1h-3m-19 0h3v1h-3m4-1h1v1h-1m14-1h5v1h-5m-17 0h3v1h-3m4-1h1v1h-1m9-1h2v1h-2m3-1h1v1h-1m2-1h3v1h-3m-16 0h1v1h-1m3-1h8v1h-8m9-1h2v1h-2m3-1h4v1h-4m-14 0h4v1h-4m8-1h4v1h-4m5-1h1v1h-1m2-1h1v1h-1m-11 0h4v1h-4m7-1h2v1h-2m3-1h1v1h-1m-8 0h5v1h-5"/><path class="pl" fill="#24c1ae" d="M494 126h1v1h-1m2 0h1v1h-1m-6 0h1v1h-1m7-1h2v1h-2m-11 0h2v1h-2m13-1h1v1h-1m-12 0h2v1h-2m6-1h2v1h-2m8-1h1v1h-1m-17 0h2v1h-2m5-1h2v1h-2m7-1h1v1h-1m6-1h2v1h-2m8-1h1v1h-1m-28 0h1v1h-1m3-1h1v1h-1m12-1h1v1h-1m8-1h1v1h-1m7-1h1v1h-1m-30 0h2v1h-2m24-1h1v1h-1m7-1h2v1h-2m-32 0h3v1h-3m27-1h1v1h-1m-27 0h1v1h-1m28-1h1v1h-1m-29 0h2v1h-2m32-1h1v1h-1m-145 0h1v1h-1m115-1h3v1h-3m-2 0h1v1h-1m5-1h2v1h-2m30-1h1v1h-1m-153 0h1v1h-1m55-1h1v1h-1m64-1h3v1h-3m36-1h1v1h-1m-164 0h1v1h-1m4-1h1v1h-1m65-1h1v1h-1m4-1h1v1h-1m58-1h2v1h-2m-136 0h1v1h-1m79-1h1v1h-1m4-1h1v1h-1m49-1h2v1h-2m7-1h1v1h-1m-143 0h1v1h-1m92-1h1v1h-1m47-1h1v1h-1m6-1h1v1h-1m-150 0h1v1h-1m97-1h1v1h-1m4-1h1v1h-1m44-1h1v1h-1m2-1h1v1h-1m5-1h1v1h-1m27-1h1v1h-1m-73 0h1v1h-1m42-1h1v1h-1m5-1h1v1h-1m5-1h1v1h-1m21-1h1v1h-1m-179 0h1v1h-1m144-1h2v1h-2m6-1h1v1h-1m26-1h1v1h-1m-181 0h1v1h-1m111-1h1v1h-1m41-1h1v1h-1m8-1h1v1h-1m5-1h1v1h-1m5-1h1v1h-1m8-1h1v1h-1m3-1h3v1h-3m-27 0h1v1h-1m3-1h1v1h-1m5-1h1v1h-1m4-1h1v1h-1m9-1h1v1h-1m4-1h1v1h-1m4-1h1v1h-1m-191 0h1v1h-1m4-1h1v1h-1m120-1h1v1h-1m4-1h1v1h-1m39-1h1v1h-1m5-1h1v1h-1m4-1h1v1h-1m4-1h1v1h-1m4-1h2v1h-2m4-1h2v1h-2m-193 0h1v1h-1m4-1h1v1h-1m129-1h1v1h-1m4-1h1v1h-1m32-1h1v1h-1m5-1h1v1h-1m5-1h1v1h-1m4-1h1v1h-1m3-1h1v1h-1m5-1h1v1h-1m3-1h2v1h-2m-23 0h1v1h-1m5-1h1v1h-1m4-1h1v1h-1m4-1h1v1h-1m3-1h2v1h-2m5-1h1v1h-1m-196 0h1v1h-1m4-1h1v1h-1m138-1h1v1h-1m3-1h1v1h-1m32-1h1v1h-1m12-1h1v1h-1m5-1h1v1h-1m3-1h1v1h-1m-15 0h1v1h-1m4-1h1v1h-1m5-1h1v1h-1m4-1h1v1h-1m-199 0h1v1h-1m150-1h1v1h-1m3-1h1v1h-1m35-1h1v1h-1m3-1h1v1h-1m-195 1h1v1h-1m4-1h1v1h-1m154-1h1v1h-1m3-1h1v1h-1m-161 1h1v1h-1m162-1h1v1h-1m-165 0h1v1h-1m168-1h1v1h-1m-169 0h1v1h-1m180 7h1v1h-1m-195 2h1v1h-1m199-1h1v1h-1m-200 1h1v1h-1m201-1h1v1h-1m-203 1h1v1h-1m206-1h1v1h-1m1 0h1v1h-1m-210 2h1v1h-1m-1 1h1v1h-1m-3 2h1v1h-1m219-1h1v1h-1m-220 1h1v1h-1m221-1h1v1h-1m-221 0h1v1h-1m221-1h1v1h-1m-222 1h1v1h-1m223-1h1v1h-1m-223 0h1v1h-1m224-1h1v1h-1m-225 1h1v1h-1m226-1h1v1h-1m-227 2h1v1h-1m227-1h1v1h-1m-227 0h1v1h-1m227-1h1v1h-1m-228 1h2v1h-2m229-1h1v1h-1m-229 2h2v1h-2m229-1h2v1h-2m-229 1h1v1h-1m230-1h1v1h-1m-229 0h1v1h-1m228-1h1v1h-1m-229 1h1v1h-1m230-1h1v1h-1m-229 0h1v1h-1m228-1h1v1h-1m-229 1h1v1h-1m230-1h1v1h-1m-229 0h1v1h-1m227-1h1v1h-1m-228 1h1v1h-1m229-1h1v1h-1m-227 0h1v1h-1m225-1h1v1h-1m-226 1h1v1h-1m227-1h1v1h-1m-225 0h1v1h-1m224-1h1v1h-1m-225 1h1v1h-1m2-1h1v1h-1m221-1h1v1h-1m3-1h1v1h-1m-225 2h1v1h-1m2-1h1v1h-1m219-1h1v1h-1m2-1h1v1h-1m-222 1h1v1h-1m221-1h1v1h-1m-218 0h1v1h-1m216-1h1v1h-1m-217 1h1v1h-1m218-1h1v1h-1m-3 0h1v1h-1m-2 1h1v1h-1m3-1h1v1h-1m-5 2h1v1h-1m3-1h1v1h-1m-208 1h1v1h-1m206-1h1v1h-1m-4 0h1v1h-1m-2 1h1v1h-1m3-1h1v1h-1m-198 2h1v1h-1m4-1h1v1h-1m188-1h1v1h-1m3-1h1v1h-1m-192 1h1v1h-1m4-1h1v1h-1m182-1h1v1h-1m4-1h1v1h-1m-183 1h1v1h-1m175-1h1v1h-1m-179 0h1v1h-1m183-1h1v1h-1m-180 1h1v1h-1m5-1h1v1h-1m168-1h1v1h-1m4-1h1v1h-1m-173 1h1v1h-1m4-1h1v1h-1m161-1h1v1h-1m5-1h1v1h-1m-162 1h1v1h-1m153-1h1v1h-1m-157 0h1v1h-1m162-1h1v1h-1m-154 0h1v1h-1m145-1h1v1h-1m-149 0h1v1h-1m154-1h1v1h-1m-146 0h1v1h-1m137-1h1v1h-1m-141 0h1v1h-1m146-1h1v1h-1m-137 0h1v1h-1m128-1h1v1h-1m-133 0h1v1h-1m138-1h1v1h-1m-129 0h1v1h-1m119-1h1v1h-1m-124 0h1v1h-1m9-1h1v1h-1m111-1h1v1h-1m9-1h1v1h-1m-124 0h1v1h-1m120-1h1v1h-1m-111 0h1v1h-1m101-1h1v1h-1m-106 0h1v1h-1m10-1h1v1h-1m92-1h1v1h-1m9-1h1v1h-1m-106 0h1v1h-1m9-1h1v1h-1m83-1h1v1h-1m10-1h1v1h-1m-98 0h1v1h-1m10-1h1v1h-1m73-1h1v1h-1m10-1h1v1h-1m-177 0h2v1h-2m99-1h1v1h-1m64-1h1v1h-1m-165 0h2v1h-2m4-1h1v1h-1m4-1h3v1h-3m83-1h1v1h-1m15-1h1v1h-1m4-1h1v1h-1m45-1h1v1h-1m5-1h1v1h-1m14-1h1v1h-1m-175 0h1v1h-1m2-1h2v1h-2m5-1h2v1h-2m4-1h1v1h-1m2-1h2v1h-2m84-1h1v1h-1m19-1h1v1h-1m5-1h1v1h-1m5-1h1v1h-1m5-1h1v1h-1m5-1h1v1h-1m5-1h1v1h-1m5-1h1v1h-1m5-1h1v1h-1m20-1h1v1h-1m-172 0h1v1h-1m2-1h1v1h-1m2-1h1v1h-1m3-1h1v1h-1m4-1h2v1h-2m91-1h1v1h-1m5-1h1v1h-1m55-1h1v1h-1m5-1h1v1h-1m-164 0h1v1h-1m2-1h1v1h-1m107-1h1v1h-1m5-1h1v1h-1m35-1h1v1h-1m5-1h1v1h-1m-157 0h1v1h-1m2-1h1v1h-1m11-1h6v1h-6m109-1h1v1h-1m5-1h1v1h-1m5-1h1v1h-1m5-1h1v1h-1m5-1h1v1h-1m5-1h1v1h-1m-128 0h1v1h-1m-20 0h1v1h-1m21-1h1v1h-1m-21 0h1v1h-1m0 0h2v1h-2m24-1h1v1h-1m-24 0h3v1h-3m24-1h1v1h-1m-23 0h4v1h-4m22-1h2v1h-2m-21 0h2v1h-2m3-1h1v1h-1m18-1h2v1h-2m-21 0h1v1h-1m2-1h1v1h-1m2-1h3v1h-3m14-1h1v1h-1m2-1h4v1h-4m-17 0h2v1h-2m4-1h2v1h-2m3-1h8v1h-8m9-1h1v1h-1m2-1h2v1h-2m-15 0h3v1h-3m10-1h3v1h-3m4-1h2v1h-2m-11 0h8v1h-8m9-1h3v1h-3m-10 0h2v1h-2m7-1h3v1h-3m4-1h2v1h-2m-9 0h5v1h-5m9-1h1v1h-1"/><path class="pl" fill="#31c69f" d="M499 121h1v1h-1m-7 0h1v1h-1m8-1h1v1h-1m2-1h1v1h-1m-13 0h1v1h-1m7-1h1v1h-1m7-1h1v1h-1m-13 0h2v1h-2m8-1h1v1h-1m6-1h2v1h-2m-12 0h1v1h-1m7-1h1v1h-1m8-1h1v1h-1m-14 0h1v1h-1m7-1h1v1h-1m2-1h1v1h-1m6-1h1v1h-1m2-1h1v1h-1m-25 0h1v1h-1m18-1h1v1h-1m8-1h1v1h-1m-26 0h2v1h-2m19-1h1v1h-1m-20 1h2v1h-2m31-1h1v1h-1m-29 0h3v1h-3m30-1h2v1h-2m-33 0h2v1h-2m6-1h1v1h-1m28-1h1v1h-1m-32 0h2v1h-2m-126 0h1v1h-1m128-1h2v1h-2m28-1h2v1h-2m-31 0h2v1h-2m6-1h1v1h-1m26-1h2v1h-2m-167 0h1v1h-1m5-1h1v1h-1m76-1h1v1h-1m56-1h2v1h-2m5-1h1v1h-1m27-1h1v1h-1m-173 0h1v1h-1m144-1h1v1h-1m4-1h1v1h-1m-149 0h1v1h-1m91-1h1v1h-1m56-1h1v1h-1m4-1h1v1h-1m4-1h1v1h-1m15-1h1v1h-1m-178 0h1v1h-1m13-1h1v1h-1m82-1h1v1h-1m12-1h1v1h-1m45-1h1v1h-1m4-1h1v1h-1m5-1h1v1h-1m3-1h1v1h-1m15-1h2v1h-2m-175 0h1v1h-1m4-1h1v1h-1m91-1h1v1h-1m4-1h1v1h-1m51-1h1v1h-1m4-1h1v1h-1m4-1h1v1h-1m4-1h1v1h-1m5-1h1v1h-1m4-1h2v1h-2m6-1h2v1h-2m-182 0h1v1h-1m109-1h1v1h-1m47-1h1v1h-1m5-1h1v1h-1m4-1h1v1h-1m4-1h2v1h-2m4-1h2v1h-2m5-1h2v1h-2m-186 0h1v1h-1m4-1h1v1h-1m117-1h1v1h-1m4-1h1v1h-1m41-1h1v1h-1m5-1h1v1h-1m4-1h1v1h-1m4-1h1v1h-1m4-1h1v1h-1m5-1h2v1h-2m-71 0h1v1h-1m51-1h1v1h-1m4-1h1v1h-1m4-1h1v1h-1m5-1h1v1h-1m3-1h2v1h-2m5-1h2v1h-2m-67 0h1v1h-1m52-1h1v1h-1m4-1h1v1h-1m4-1h1v1h-1m4-1h1v1h-1m-10 0h1v1h-1m3-1h1v1h-1m4-1h1v1h-1m4-1h1v1h-1m-191 0h1v1h-1m184-1h1v1h-1m4-1h1v1h-1m-192 1h1v1h-1m3-1h1v1h-1m135-1h1v1h-1m4-1h1v1h-1m-143 0h1v1h-1m-3 0h1v1h-1m153-1h1v1h-1m-154 0h1v1h-1m151-1h1v1h-1m-157 0h1v1h-1m161-1h1v1h-1m2-1h1v1h-1m-164 1h1v1h-1m165-1h1v1h-1m-167 0h1v1h-1m1 0h1v1h-1m167-1h1v1h-1m-172 0h1v1h-1m176 0h1v1h-1m-179 0h1v1h-1m181-1h1v1h-1m4 3h1v1h-1m-188 0h1v1h-1m-1 0h1v1h-1m192-1h1v1h-1m1 0h1v1h-1m-196 0h1v1h-1m198-1h1v1h-1m-198 0h1v1h-1m197-1h1v1h-1m2 0h2v1h-2m1 1h2v1h-2m-206 3h1v1h-1m-2 1h2v1h-2m213-1h1v1h-1m-214 1h2v1h-2m215-1h1v1h-1m-215 0h1v1h-1m215-1h1v1h-1m-216 0h1v1h-1m217-1h1v1h-1m-217 0h1v1h-1m217-1h1v1h-1m-218 1h1v1h-1m219-1h1v1h-1m-219 0h1v1h-1m219-1h1v1h-1m-220 1h1v1h-1m222-1h1v1h-1m-222 0h1v1h-1m221-1h1v1h-1m-222 1h1v1h-1m223-1h1v1h-1m-222 0h1v1h-1m221-1h1v1h-1m-223 0h1v1h-1m225-1h1v1h-1m-224 0h1v1h-1m223-1h1v1h-1m-222 0h1v1h-1m222-1h1v1h-1m-224 0h1v1h-1m225-1h1v1h-1m-224 0h2v1h-2m223-1h2v1h-2m-224 1h1v1h-1m226-1h1v1h-1m-225 0h2v1h-2m222-1h1v1h-1m2-1h1v1h-1m-225 1h1v1h-1m226-1h1v1h-1m-225 0h2v1h-2m222-1h2v1h-2m-223 1h2v1h-2m224-1h2v1h-2m-221 0h1v1h-1m219-1h1v1h-1m-222 1h1v1h-1m2-1h1v1h-1m221-1h1v1h-1m2-1h1v1h-1m-221 0h1v1h-1m217-1h1v1h-1m-220 0h1v1h-1m223-1h1v1h-1m-221 0h1v1h-1m2-1h1v1h-1m215-1h1v1h-1m2-1h1v1h-1m-220 1h1v1h-1m222-1h1v1h-1m-220 0h1v1h-1m2-1h1v1h-1m213-1h1v1h-1m2-1h1v1h-1m-218 1h1v1h-1m2-1h1v1h-1m215-1h1v1h-1m2-1h1v1h-1m-214 0h1v1h-1m210-1h1v1h-1m-214 1h1v1h-1m3-1h1v1h-1m3-1h1v1h-1m206-1h1v1h-1m3-1h1v1h-1m2-1h1v1h-1m-215 1h1v1h-1m214-1h1v1h-1m-212 0h1v1h-1m3-1h1v1h-1m203-1h1v1h-1m3-1h1v1h-1m-210 1h1v1h-1m7-1h1v1h-1m198-1h1v1h-1m3-1h1v1h-1m3-1h1v1h-1m-209 2h1v1h-1m200-1h1v1h-1m4-1h1v1h-1m3-1h1v1h-1m-2 1h1v1h-1m-199 0h1v1h-1m4-1h1v1h-1m188-1h1v1h-1m3-1h1v1h-1m-192 1h1v1h-1m3-1h1v1h-1m183-1h1v1h-1m4-1h1v1h-1m3-1h1v1h-1m-187 1h1v1h-1m177-1h1v1h-1m-184 0h1v1h-1m188-1h1v1h-1m4-1h1v1h-1m-11 1h1v1h-1m4-1h1v1h-1m4-1h1v1h-1m-175 1h1v1h-1m163-1h1v1h-1m5-1h1v1h-1m-176 0h1v1h-1m180-1h1v1h-1m-168 0h1v1h-1m156-1h1v1h-1m-165 0h1v1h-1m4-1h1v1h-1m165-1h1v1h-1m5-1h1v1h-1m-162 0h1v1h-1m149-1h1v1h-1m-158 0h1v1h-1m5-1h1v1h-1m158-1h1v1h-1m4-1h1v1h-1m-154 0h1v1h-1m141-1h1v1h-1m-150 0h1v1h-1m5-1h1v1h-1m150-1h1v1h-1m4-1h1v1h-1m-146 0h1v1h-1m133-1h1v1h-1m-137 0h1v1h-1m142-1h1v1h-1m-147 0h1v1h-1m13-1h1v1h-1m125-1h1v1h-1m13-1h1v1h-1m-142 0h1v1h-1m9-1h1v1h-1m116-1h1v1h-1m9-1h1v1h-1m-139 0h1v1h-1m143-1h1v1h-1m-139 0h1v1h-1m5-1h1v1h-1m9-1h1v1h-1m107-1h1v1h-1m9-1h1v1h-1m5-1h1v1h-1m-126 0h1v1h-1m9-1h1v1h-1m99-1h1v1h-1m9-1h1v1h-1m-122 0h1v1h-1m19-1h1v1h-1m89-1h1v1h-1m19-1h1v1h-1m-118 0h1v1h-1m109-1h1v1h-1m-113 0h1v1h-1m9-1h1v1h-1m9-1h1v1h-1m81-1h1v1h-1m9-1h1v1h-1m10-1h1v1h-1m-114 0h1v1h-1m9-1h1v1h-1m10-1h1v1h-1m5-1h1v1h-1m62-1h1v1h-1m4-1h1v1h-1m10-1h1v1h-1m9-1h1v1h-1m-95 0h1v1h-1m14-1h1v1h-1m53-1h1v1h-1m14-1h1v1h-1m-91 0h1v1h-1m15-1h1v1h-1m14-1h1v1h-1m5-1h1v1h-1m33-1h1v1h-1m5-1h1v1h-1m15-1h1v1h-1m14-1h1v1h-1m-96 0h1v1h-1m14-1h1v1h-1m20-1h1v1h-1m4-1h1v1h-1m5-1h1v1h-1m5-1h1v1h-1m5-1h1v1h-1m5-1h1v1h-1m19-1h1v1h-1m14-1h1v1h-1m-178 0h2v1h-2m4-1h2v1h-2m88-1h1v1h-1m14-1h1v1h-1m53-1h1v1h-1m15-1h1v1h-1m-175 0h1v1h-1m3-1h2v1h-2m3-1h3v1h-3m91-1h1v1h-1m15-1h1v1h-1m5-1h1v1h-1m5-1h1v1h-1m24-1h1v1h-1m5-1h1v1h-1m4-1h1v1h-1m15-1h1v1h-1m-171 0h1v1h-1m2-1h2v1h-2m3-1h2v1h-2m4-1h1v1h-1m2-1h1v1h-1m92-1h1v1h-1m24-1h1v1h-1m5-1h1v1h-1m5-1h1v1h-1m5-1h1v1h-1m24-1h1v1h-1m-162 0h1v1h-1m8-1h3v1h-3m96-1h1v1h-1m5-1h1v1h-1m44-1h1v1h-1m4-1h1v1h-1m-158 0h1v1h-1m3-1h2v1h-2m4-1h2v1h-2m7-1h1v1h-1m101-1h1v1h-1m4-1h1v1h-1m25-1h1v1h-1m5-1h1v1h-1m-153 0h1v1h-1m2-1h1v1h-1m6-1h3v1h-3m6-1h1v1h-1m2-1h2v1h-2m112-1h1v1h-1m5-1h1v1h-1m5-1h1v1h-1m5-1h1v1h-1m-144 0h1v1h-1m2-1h1v1h-1m-2 0h2v1h-2m18-1h3v1h-3m-18 0h2v1h-2m0 0h4v1h-4m0 0h2v1h-2m3-1h1v1h-1m-2 0h5v1h-5m23-1h1v1h-1m-22 0h2v1h-2m5-1h1v1h-1m16-1h2v1h-2m-20 0h3v1h-3m5-1h3v1h-3m13-1h4v1h-4m-17 0h2v1h-2m3-1h2v1h-2m4-1h10v1h-10m11-1h3v1h-3m-16 0h1v1h-1m3-1h2v1h-2m11-1h5v1h-5m-13 0h2v1h-2m4-1h9v1h-9m10-1h3v1h-3m-12 0h3v1h-3m9-1h3v1h-3m4-1h2v1h-2m-10 0h6v1h-6"/><path class="pl" fill="#3fca8e" d="M495 116h1v1h-1m9-1h2v1h-2m-8 0h2v1h-2m10-1h1v1h-1m2-1h1v1h-1m-17 0h1v1h-1m8-1h1v1h-1m10-1h1v1h-1m-17 0h1v1h-1m11-1h1v1h-1m-7 0h2v1h-2m8-1h1v1h-1m-16 0h1v1h-1m2-1h2v1h-2m8-1h1v1h-1m16-1h2v1h-2m2 0h1v1h-1m-29 0h2v1h-2m23-1h1v1h-1m-22 0h2v1h-2m24-1h2v1h-2m6-1h1v1h-1m-32 0h2v1h-2m4-1h1v1h-1m24-1h1v1h-1m-27 0h2v1h-2m2 0h2v1h-2m28-1h1v1h-1m-30 0h1v1h-1m4-1h1v1h-1m27-1h1v1h-1m-30 0h2v1h-2m4-1h1v1h-1m2-1h1v1h-1m24-1h2v1h-2m-28 0h1v1h-1m5-1h1v1h-1m23-1h1v1h-1m-163 0h1v1h-1m4-1h1v1h-1m61-1h1v1h-1m5-1h1v1h-1m66-1h1v1h-1m6-1h1v1h-1m-147 0h1v1h-1m9-1h1v1h-1m61-1h1v1h-1m9-1h1v1h-1m64-1h1v1h-1m2-1h1v1h-1m3-1h1v1h-1m5-1h1v1h-1m12-1h1v1h-1m3-1h1v1h-1m-172 0h1v1h-1m8-1h1v1h-1m71-1h1v1h-1m9-1h1v1h-1m57-1h1v1h-1m5-1h1v1h-1m4-1h1v1h-1m4-1h1v1h-1m6-1h1v1h-1m6-1h3v1h-3m-166 0h1v1h-1m80-1h1v1h-1m62-1h1v1h-1m6-1h1v1h-1m3-1h1v1h-1m5-1h2v1h-2m5-1h3v1h-3m-170 0h1v1h-1m4-1h1v1h-1m89-1h1v1h-1m4-1h1v1h-1m56-1h1v1h-1m5-1h1v1h-1m4-1h1v1h-1m5-1h1v1h-1m6-1h1v1h-1m-177 0h1v1h-1m4-1h1v1h-1m101-1h1v1h-1m54-1h1v1h-1m5-1h1v1h-1m3-1h1v1h-1m2-1h1v1h-1m3-1h1v1h-1m2-1h1v1h-1m4-1h3v1h-3m-182 0h1v1h-1m113-1h1v1h-1m51-1h1v1h-1m5-1h1v1h-1m5-1h1v1h-1m5-1h2v1h-2m-175 0h1v1h-1m167-1h1v1h-1m4-1h1v1h-1m5-1h1v1h-1m-181 0h1v1h-1m115-1h1v1h-1m4-1h1v1h-1m54-1h1v1h-1m4-1h2v1h-2m-184 1h1v1h-1m126-1h1v1h-1m-130 1h1v1h-1m138-1h1v1h-1m-146 3h1v1h-1m-1 0h1v1h-1m155-1h1v1h-1m-157 0h1v1h-1m160-1h1v1h-1m-161 0h1v1h-1m162-1h1v1h-1m2 0h1v1h-1m-180 11h1v1h-1m194-1h1v1h-1m-196 1h2v1h-2m197-1h1v1h-1m-201 4h1v1h-1m-1 2h1v1h-1m207-1h2v1h-2m-209 1h1v1h-1m211-1h1v1h-1m-212 2h1v1h-1m213-1h1v1h-1m-214 2h1v1h-1m215-1h1v1h-1m-216 1h1v1h-1m217-1h1v1h-1m0 0h1v1h-1m-217 1h1v1h-1m218-1h1v1h-1m-218 0h1v1h-1m217-1h1v1h-1m-218 1h2v1h-2m218-1h2v1h-2m-218 1h1v1h-1m219-1h1v1h-1m-218 0h1v1h-1m217-1h1v1h-1m-218 1h1v1h-1m219-1h1v1h-1m-218 0h1v1h-1m217-1h1v1h-1m-218 1h1v1h-1m2-1h1v1h-1m216-1h2v1h-2m-217 2h2v1h-2m216-1h1v1h-1m2-1h1v1h-1m-218 1h1v1h-1m217-1h1v1h-1m-215 0h1v1h-1m213-1h1v1h-1m-214 1h1v1h-1m2-1h1v1h-1m211-1h1v1h-1m2-1h1v1h-1m-214 2h1v1h-1m3-1h1v1h-1m208-1h1v1h-1m2-1h1v1h-1m-212 2h1v1h-1m3-1h1v1h-1m205-1h1v1h-1m3-1h1v1h-1m-209 1h1v1h-1m3-1h1v1h-1m202-1h1v1h-1m2-1h1v1h-1m-205 2h1v1h-1m3-1h1v1h-1m198-1h1v1h-1m3-1h1v1h-1m-203 1h1v1h-1m4-1h1v1h-1m194-1h1v1h-1m3-1h1v1h-1m-6 2h1v1h-1m4-1h1v1h-1m-191 1h1v1h-1m185-1h1v1h-1m3-1h1v1h-1m-189 2h1v1h-1m183-1h1v1h-1m4-1h1v1h-1m-184 1h1v1h-1m177-1h1v1h-1m4-1h1v1h-1m-174 1h1v1h-1m167-1h1v1h-1m4 0h1v1h-1m-172 1h1v1h-1m165-1h1v1h-1m4-1h1v1h-1m-161 1h1v1h-1m153-1h1v1h-1m5-1h1v1h-1m-159 1h1v1h-1m5-1h1v1h-1m145-1h1v1h-1m5-1h1v1h-1m-151 1h1v1h-1m5-1h1v1h-1m138-1h1v1h-1m4-1h1v1h-1m-143 1h1v1h-1m5-1h1v1h-1m130-1h1v1h-1m4-1h1v1h-1m-130 0h1v1h-1m122-1h1v1h-1m-127 0h1v1h-1m131-1h1v1h-1m-122 0h1v1h-1m113-1h1v1h-1m-118 0h1v1h-1m9-1h1v1h-1m105-1h1v1h-1m9-1h1v1h-1m-119 1h1v1h-1m9-1h1v1h-1m97-1h1v1h-1m9-1h1v1h-1m-110 0h1v1h-1m9-1h1v1h-1m88-1h1v1h-1m9-1h1v1h-1m-102 0h1v1h-1m9-1h1v1h-1m79-1h1v1h-1m9-1h1v1h-1m-83 0h1v1h-1m70-1h1v1h-1m-80 0h1v1h-1m14-1h1v1h-1m5-1h1v1h-1m51-1h1v1h-1m5-1h1v1h-1m14-1h1v1h-1m-84 0h1v1h-1m19-1h1v1h-1m4-1h1v1h-1m33-1h1v1h-1m5-1h1v1h-1m19-1h1v1h-1m-76 0h1v1h-1m24-1h1v1h-1m5-1h1v1h-1m4-1h1v1h-1m5-1h1v1h-1m5-1h1v1h-1m4-1h1v1h-1m24-1h1v1h-1m-66 0h1v1h-1m5-1h1v1h-1m52-1h1v1h-1m4-1h1v1h-1m-161 0h2v1h-2m4-1h1v1h-1m105-1h1v1h-1m5-1h1v1h-1m33-1h1v1h-1m5-1h1v1h-1m-153 0h1v1h-1m4-1h1v1h-1m3-1h1v1h-1m4-1h1v1h-1m109-1h1v1h-1m5-1h1v1h-1m4-1h1v1h-1m5-1h1v1h-1m5-1h1v1h-1m5-1h1v1h-1m-140 0h3v1h-3m5-1h1v1h-1m-12 0h1v1h-1m3-1h1v1h-1m2-1h2v1h-2m4-1h3v1h-3m6-1h1v1h-1m-13 0h1v1h-1m2-1h1v1h-1m3-1h2v1h-2m4-1h3v1h-3m6-1h3v1h-3m-19 0h1v1h-1m2-1h1v1h-1m10-1h1v1h-1m2-1h1v1h-1m3-1h1v1h-1m-17 0h2v1h-2m14-1h3v1h-3m6-1h4v1h-4m-20 0h2v1h-2m17-1h2v1h-2m-17 0h3v1h-3m0 0h2v1h-2m3-1h2v1h-2m17-1h3v1h-3m-20 0h1v1h-1m2-1h1v1h-1m2-1h1v1h-1m-3 0h1v1h-1m2-1h1v1h-1m3-1h2v1h-2m18-1h1v1h-1m-22 0h1v1h-1m2-1h1v1h-1m4-1h2v1h-2m15-1h2v1h-2m-20 0h1v1h-1m2-1h1v1h-1m2-1h1v1h-1m3-1h3v1h-3m12-1h3v1h-3m-18 0h1v1h-1m4-1h2v1h-2m5-1h12v1h-12m-8 0h2v1h-2m5-1h3v1h-3m11-1h4v1h-4m-13 0h2v1h-2m5-1h8v1h-8m9-1h2v1h-2m-12 0h4v1h-4m9-1h3v1h-3m-5 0h5v1h-5"/><path class="pl" fill="#57cc7a" d="M497 110h1v1h-1m1 0h2v1h-2m4-1h1v1h-1m3 0h1v1h-1m9-1h1v1h-1m-20 0h2v1h-2m3-1h1v1h-1m11-1h1v1h-1m7-1h2v1h-2m-16 0h2v1h-2m11-1h1v1h-1m-8 0h1v1h-1m9-1h1v1h-1m7-1h1v1h-1m-28 0h3v1h-3m4-1h1v1h-1m18-1h1v1h-1m2-1h1v1h-1m-23 0h1v1h-1m-2 0h2v1h-2m27-1h2v1h-2m-27 0h2v1h-2m29-1h1v1h-1m-28 0h2v1h-2m29-1h1v1h-1m-30 0h1v1h-1m3-1h1v1h-1m27-1h2v1h-2m-30 0h2v1h-2m4-1h2v1h-2m26-1h2v1h-2m-28 0h1v1h-1m4-1h1v1h-1m24-1h1v1h-1m-27 0h1v1h-1m2-1h1v1h-1m3-1h1v1h-1m22-1h1v1h-1m-28 0h1v1h-1m4-1h1v1h-1m3-1h1v1h-1m2-1h1v1h-1m19-1h1v1h-1m-27 0h1v1h-1m4-1h1v1h-1m5-1h1v1h-1m5-1h1v1h-1m8-1h6v1h-6m-21 0h2v1h-2m5-1h1v1h-1m4-1h1v1h-1m2-1h1v1h-1m4-1h2v1h-2m-144 0h1v1h-1m51-1h1v1h-1m81-1h1v1h-1m3-1h1v1h-1m2-1h1v1h-1m4-1h1v1h-1m5-1h3v1h-3m-159 0h1v1h-1m9-1h1v1h-1m60-1h1v1h-1m8-1h1v1h-1m69-1h1v1h-1m5-1h1v1h-1m4-1h2v1h-2m7-1h5v1h-5m-166 0h1v1h-1m152-1h1v1h-1m4-1h1v1h-1m6-1h2v1h-2m8-1h1v1h-1m-166 0h1v1h-1m78-1h1v1h-1m71-1h1v1h-1m5-1h2v1h-2m6-1h2v1h-2m-165 0h1v1h-1m87-1h1v1h-1m69-1h1v1h-1m5-1h2v1h-2m6-1h2v1h-2m-76 0h1v1h-1m-103 0h1v1h-1m4-1h1v1h-1m104-1h1v1h-1m3-1h1v1h-1m-115 1h1v1h-1m116-1h1v1h-1m-121 2h1v1h-1m-3 1h1v1h-1m-7 1h1v1h-1m149-1h1v1h-1m-153 1h1v1h-1m3-1h1v1h-1m151-1h1v1h-1m3-1h1v1h-1m-157 1h1v1h-1m158-1h1v1h-1m2-1h1v1h-1m-164 1h1v1h-1m165-1h1v1h-1m-170 2h1v1h-1m175-1h1v1h-1m3 1h1v1h-1m-184 3h1v1h-1m187-1h1v1h-1m-188 0h1v1h-1m-1 1h1v1h-1m192-1h1v1h-1m-194 1h1v1h-1m-1 0h1v1h-1m-2 1h1v1h-1m201-1h1v1h-1m-202 1h1v1h-1m203-1h1v1h-1m-203 0h1v1h-1m204-1h1v1h-1m-205 1h1v1h-1m206-1h1v1h-1m-208 2h2v1h-2m209-1h1v1h-1m-210 1h1v1h-1m211-1h1v1h-1m0 0h1v1h-1m-211 1h1v1h-1m211-1h2v1h-2m-212 2h2v1h-2m213-1h1v1h-1m-214 1h1v1h-1m215-1h1v1h-1m-214 0h1v1h-1m213-1h1v1h-1m-214 1h2v1h-2m214-1h2v1h-2m-214 2h1v1h-1m2-1h1v1h-1m212-1h2v1h-2m-214 1h1v1h-1m215-1h1v1h-1m-213 0h1v1h-1m211-1h1v1h-1m-212 1h1v1h-1m2-1h1v1h-1m210-1h2v1h-2m-211 2h1v1h-1m2-1h1v1h-1m208-1h1v1h-1m2-1h1v1h-1m-212 1h1v1h-1m211-1h1v1h-1m-208 0h1v1h-1m206-1h1v1h-1m-208 1h1v1h-1m3-1h1v1h-1m204-1h1v1h-1m2-1h1v1h-1m-207 2h1v1h-1m2-1h1v1h-1m201-1h1v1h-1m3-1h1v1h-1m-205 1h1v1h-1m3-1h1v1h-1m197-1h1v1h-1m3-1h1v1h-1m-201 2h1v1h-1m3-1h1v1h-1m194-1h1v1h-1m3-1h1v1h-1m-198 1h1v1h-1m3-1h1v1h-1m190-1h1v1h-1m3-1h1v1h-1m-194 2h1v1h-1m3-1h1v1h-1m185-1h1v1h-1m4-1h1v1h-1m-187 1h1v1h-1m181-1h1v1h-1m3-1h1v1h-1m-6 1h1v1h-1m4 0h1v1h-1m-176 1h1v1h-1m169-1h1v1h-1m4-1h1v1h-1m-170 1h1v1h-1m163-1h1v1h-1m4-1h1v1h-1m-7 1h1v1h-1m-161 0h1v1h-1m165-1h1v1h-1m-8 0h1v1h-1m-153 0h1v1h-1m158-1h1v1h-1m-8 0h1v1h-1m4 0h1v1h-1m-143 0h1v1h-1m135-1h1v1h-1m-139 0h1v1h-1m144-1h1v1h-1m-136 0h1v1h-1m127-1h1v1h-1m-131 0h1v1h-1m136-1h1v1h-1m-128 0h1v1h-1m119-1h1v1h-1m-124 0h1v1h-1m9-1h1v1h-1m111-1h1v1h-1m9-1h1v1h-1m-125 0h1v1h-1m121-1h1v1h-1m-112 0h1v1h-1m103-1h1v1h-1m-107 0h1v1h-1m8-1h1v1h-1m95-1h1v1h-1m9-1h1v1h-1m-108 0h1v1h-1m9-1h1v1h-1m86-1h1v1h-1m9-1h1v1h-1m-91 0h1v1h-1m77-1h1v1h-1m-86 0h1v1h-1m14-1h1v1h-1m68-1h1v1h-1m13-1h1v1h-1m-91 0h1v1h-1m14-1h1v1h-1m59-1h1v1h-1m14-1h1v1h-1m-160 0h1v1h-1m78-1h1v1h-1m13-1h1v1h-1m5-1h1v1h-1m41-1h1v1h-1m5-1h1v1h-1m14-1h1v1h-1m-161 0h1v1h-1m2-1h1v1h-1m4-1h1v1h-1m3-1h1v1h-1m78-1h1v1h-1m19-1h1v1h-1m4-1h1v1h-1m5-1h1v1h-1m4-1h1v1h-1m5-1h1v1h-1m5-1h1v1h-1m4-1h1v1h-1m5-1h1v1h-1m18-1h1v1h-1m-162 0h2v1h-2m4-1h2v1h-2m5-1h1v1h-1m4-1h2v1h-2m5-1h1v1h-1m80-1h1v1h-1m4-1h1v1h-1m51-1h1v1h-1m5-1h1v1h-1m-159 0h1v1h-1m3-1h2v1h-2m4-1h2v1h-2m4-1h1v1h-1m5-1h2v1h-2m92-1h1v1h-1m42-1h1v1h-1m-152 0h1v1h-1m4-1h1v1h-1m3-1h2v1h-2m4-1h2v1h-2m4-1h1v1h-1m6-1h1v1h-1m93-1h1v1h-1m5-1h1v1h-1m5-1h1v1h-1m4-1h1v1h-1m5-1h1v1h-1m5-1h1v1h-1m4-1h1v1h-1m5-1h1v1h-1m-145 0h1v1h-1m3-1h2v1h-2m3-1h2v1h-2m5-1h2v1h-2m5-1h1v1h-1m-18 0h1v1h-1m3-1h2v1h-2m4-1h1v1h-1m3-1h3v1h-3m6-1h2v1h-2m4-1h2v1h-2m-24 0h1v1h-1m2-1h1v1h-1m3-1h2v1h-2m3-1h1v1h-1m5-1h1v1h-1m4-1h1v1h-1m5-1h1v1h-1m5-1h1v1h-1m-28 0h2v1h-2m4-1h2v1h-2m3-1h2v1h-2m4-1h2v1h-2m4-1h2v1h-2m5-1h1v1h-1m5-1h2v1h-2m-25 0h1v1h-1m13-1h2v1h-2m4-1h2v1h-2m6-1h2v1h-2m-23 0h2v1h-2m16-1h1v1h-1m5-1h2v1h-2m6-1h1v1h-1m-28 0h4v1h-4m18-1h1v1h-1m2-1h1v1h-1m5-1h1v1h-1m2-1h1v1h-1m-27 0h2v1h-2m3-1h2v1h-2m19-1h2v1h-2m-22 0h3v1h-3m5-1h1v1h-1m-4 0h1v1h-1m2-1h1v1h-1m3-1h2v1h-2m20-1h2v1h-2m-24 0h1v1h-1m2-1h2v1h-2m4-1h1v1h-1m16-1h3v1h-3m-21 0h1v1h-1m3-1h1v1h-1m3-1h2v1h-2m7-1h1v1h-1m6-1h5v1h-5m-18 0h2v1h-2m3-1h2v1h-2m4-1h3v1h-3m6-1h9v1h-9m-11 0h2v1h-2m4-1h2v1h-2m4-1h5v1h-5m9-1h3v1h-3m-15 0h1v1h-1m4-1h3v1h-3m7-1h6v1h-6m-10 0h3v1h-3m6-1h9v1h-9m-3 0h2v1h-2m3-1h1v1h-1m6-1h2v1h-2m-5 0h6v1h-6"/><path class="pl" fill="#72cd64" d="M501 105h3v1h-3m6-1h1v1h-1m3 0h1v1h-1m2 0h2v1h-2m-16 0h1v1h-1m2-1h2v1h-2m4-1h3v1h-3m12-1h2v1h-2m-20 0h1v1h-1m11-1h1v1h-1m2-1h2v1h-2m-12 0h1v1h-1m14-1h2v1h-2m8-1h2v1h-2m-24 0h1v1h-1m27-1h1v1h-1m-27 0h1v1h-1m27-1h1v1h-1m-28 0h2v1h-2m0 0h3v1h-3m29-1h1v1h-1m-29 0h1v1h-1m3-1h1v1h-1m24-1h1v1h-1m2-1h1v1h-1m-28 0h1v1h-1m3-1h2v1h-2m24-1h1v1h-1m-26 0h2v1h-2m4-1h1v1h-1m22-1h1v1h-1m-28 0h1v1h-1m4-1h1v1h-1m4-1h1v1h-1m20-1h1v1h-1m-27 0h2v1h-2m4-1h2v1h-2m4-1h2v1h-2m18-1h2v1h-2m-24 0h1v1h-1m4-1h1v1h-1m4-1h1v1h-1m2-1h1v1h-1m7-1h7v1h-7m-16 0h1v1h-1m4-1h1v1h-1m2-1h1v1h-1m4-1h3v1h-3m-9 0h1v1h-1m2-1h1v1h-1m4-1h1v1h-1m6-1h3v1h-3m-9 0h1v1h-1m4-1h2v1h-2m8-1h7v1h-7m-147 0h1v1h-1m49-1h1v1h-1m87-1h1v1h-1m2-1h1v1h-1m4-1h3v1h-3m-151 0h1v1h-1m59-1h1v1h-1m8-1h1v1h-1m81-1h1v1h-1m6-1h3v1h-3m-150 0h1v1h-1m59-1h1v1h-1m86-1h1v1h-1m8-1h1v1h-1m-157 0h1v1h-1m67-1h1v1h-1m9-1h1v1h-1m-88 0h1v1h-1m8-1h1v1h-1m76-1h1v1h-1m8-1h1v1h-1m-97 0h1v1h-1m8-1h1v1h-1m85-1h1v1h-1m8-1h1v1h-1m-97 0h1v1h-1m93-1h1v1h-1m-101 0h1v1h-1m4-1h1v1h-1m101-1h1v1h-1m-105 0h1v1h-1m110-1h1v1h-1m-118 3h1v1h-1m125-1h1v1h-1m-132 1h1v1h-1m139-1h1v1h-1m-140 0h1v1h-1m141-1h1v1h-1m-143 0h1v1h-1m146-1h1v1h-1m-147 0h1v1h-1m148-1h1v1h-1m-151 0h1v1h-1m153-1h1v1h-1m-154 0h1v1h-1m155-1h1v1h-1m-157 0h1v1h-1m159-1h1v1h-1m-165 3h1v1h-1m171-1h1v1h-1m-173 1h2v1h-2m174-1h1v1h-1m10 9h1v1h-1m-194 1h1v1h-1m195-1h2v1h-2m-197 1h1v1h-1m199-1h1v1h-1m-200 2h1v1h-1m201-1h1v1h-1m2 2h1v1h-1m-205 1h1v1h-1m206-1h1v1h-1m-206 0h1v1h-1m205-1h1v1h-1m-206 1h2v1h-2m207-1h1v1h-1m-208 1h1v1h-1m209-1h1v1h-1m-208 0h1v1h-1m207-1h1v1h-1m-208 1h2v1h-2m208-1h2v1h-2m-208 2h2v1h-2m208-1h1v1h-1m2-1h1v1h-1m-210 1h1v1h-1m210-1h1v1h-1m-209 0h1v1h-1m207-1h1v1h-1m-208 1h1v1h-1m2-1h1v1h-1m206-1h2v1h-2m-208 1h1v1h-1m209-1h1v1h-1m-207 0h1v1h-1m205-1h1v1h-1m-206 1h1v1h-1m2-1h1v1h-1m203-1h1v1h-1m2-1h1v1h-1m-206 2h1v1h-1m2-1h1v1h-1m201-1h1v1h-1m3-1h1v1h-1m-205 1h1v1h-1m2-1h1v1h-1m199-1h1v1h-1m3-1h1v1h-1m-203 2h1v1h-1m3-1h1v1h-1m196-1h1v1h-1m2-1h1v1h-1m-200 1h1v1h-1m3-1h1v1h-1m193-1h1v1h-1m3-1h1v1h-1m-197 2h1v1h-1m3-1h1v1h-1m189-1h1v1h-1m3-1h1v1h-1m-193 1h1v1h-1m3-1h1v1h-1m185-1h1v1h-1m3-1h1v1h-1m-189 2h1v1h-1m3-1h1v1h-1m181-1h1v1h-1m3-1h1v1h-1m-185 1h1v1h-1m4-1h1v1h-1m176-1h1v1h-1m3-1h1v1h-1m-6 1h1v1h-1m-174 0h1v1h-1m12-1h1v1h-1m166-1h1v1h-1m-172 0h1v1h-1m6-1h1v1h-1m159-1h1v1h-1m-165 0h1v1h-1m3-1h1v1h-1m4-1h1v1h-1m162-1h1v1h-1m-172 0h1v1h-1m7-1h1v1h-1m4-1h1v1h-1m-11 0h1v1h-1m2-1h1v1h-1m4-1h1v1h-1m2-1h1v1h-1m4-1h1v1h-1m153-1h1v1h-1m4-1h1v1h-1m-172 0h1v1h-1m4-1h1v1h-1m3-1h1v1h-1m4-1h1v1h-1m5-1h1v1h-1m-15 0h1v1h-1m7-1h2v1h-2m4-1h2v1h-2m6-1h1v1h-1m147-1h1v1h-1m4-1h1v1h-1m-171 0h1v1h-1m4-1h1v1h-1m8-1h1v1h-1m4-1h1v1h-1m5-1h1v1h-1m-20 0h1v1h-1m4-1h1v1h-1m7-1h2v1h-2m5-1h2v1h-2m7-1h1v1h-1m140-1h1v1h-1m4-1h1v1h-1m-173 0h1v1h-1m7-1h1v1h-1m4-1h1v1h-1m8-1h1v1h-1m11-1h1v1h-1m2-1h1v1h-1m3-1h1v1h-1m-38 0h1v1h-1m3-1h1v1h-1m4-1h1v1h-1m4-1h1v1h-1m4-1h1v1h-1m10-1h1v1h-1m4-1h2v1h-2m3-1h1v1h-1m3-1h1v1h-1m133-1h1v1h-1m5-1h1v1h-1m-172 0h1v1h-1m3-1h1v1h-1m4-1h1v1h-1m4-1h1v1h-1m5-1h1v1h-1m4-1h1v1h-1m5-1h2v1h-2m-28 0h1v1h-1m4-1h1v1h-1m3-1h1v1h-1m4-1h1v1h-1m4-1h1v1h-1m5-1h1v1h-1m4-1h2v1h-2m6-1h1v1h-1m2-1h1v1h-1m2-1h2v1h-2m132-1h1v1h-1m5-1h1v1h-1m-174 0h1v1h-1m4-1h1v1h-1m7-1h2v1h-2m4-1h2v1h-2m4-1h2v1h-2m5-1h2v1h-2m5-1h2v1h-2m3-1h1v1h-1m10-1h1v1h-1m124-1h1v1h-1m-164 0h1v1h-1m3-1h1v1h-1m8-1h1v1h-1m4-1h1v1h-1m4-1h1v1h-1m5-1h1v1h-1m2-1h1v1h-1m4-1h1v1h-1m2-1h1v1h-1m3-1h1v1h-1m133-1h1v1h-1m-171 0h1v1h-1m3-1h2v1h-2m4-1h2v1h-2m8-1h1v1h-1m4-1h2v1h-2m4-1h2v1h-2m7-1h2v1h-2m3-1h1v1h-1m14-1h1v1h-1m116-1h1v1h-1m-168 0h1v1h-1m6-1h2v1h-2m4-1h2v1h-2m4-1h2v1h-2m8-1h1v1h-1m4-1h1v1h-1m6-1h2v1h-2m3-1h1v1h-1m12-1h1v1h-1m8-1h1v1h-1m109-1h1v1h-1m8-1h1v1h-1m-171 0h1v1h-1m7-1h1v1h-1m4-1h1v1h-1m3-1h1v1h-1m5-1h1v1h-1m9-1h2v1h-2m-31 0h2v1h-2m4-1h1v1h-1m7-1h2v1h-2m4-1h1v1h-1m4-1h2v1h-2m5-1h1v1h-1m4-1h1v1h-1m5-1h1v1h-1m20-1h1v1h-1m8-1h1v1h-1m101-1h1v1h-1m9-1h1v1h-1m-173 0h1v1h-1m3-1h2v1h-2m5-1h1v1h-1m3-1h1v1h-1m4-1h1v1h-1m4-1h1v1h-1m4-1h1v1h-1m4-1h2v1h-2m4-1h2v1h-2m3-1h1v1h-1m25-1h1v1h-1m9-1h1v1h-1m92-1h1v1h-1m9-1h1v1h-1m-168 0h2v1h-2m4-1h2v1h-2m4-1h1v1h-1m7-1h2v1h-2m4-1h2v1h-2m4-1h2v1h-2m5-1h1v1h-1m43-1h1v1h-1m84-1h1v1h-1m-159 0h1v1h-1m2-1h1v1h-1m4-1h2v1h-2m4-1h1v1h-1m4-1h1v1h-1m7-1h1v1h-1m4-1h2v1h-2m4-1h1v1h-1m6-1h1v1h-1m31-1h1v1h-1m13-1h1v1h-1m75-1h1v1h-1m13-1h1v1h-1m-169 0h1v1h-1m6-1h1v1h-1m4-1h2v1h-2m3-1h2v1h-2m12-1h1v1h-1m4-1h1v1h-1m5-1h2v1h-2m38-1h1v1h-1m13-1h1v1h-1m67-1h1v1h-1m13-1h1v1h-1m-168 0h1v1h-1m4-1h2v1h-2m7-1h1v1h-1m4-1h1v1h-1m3-1h1v1h-1m7-1h1v1h-1m4-1h1v1h-1m6-1h1v1h-1m44-1h1v1h-1m14-1h1v1h-1m58-1h1v1h-1m13-1h1v1h-1m-166 0h1v1h-1m3-1h2v1h-2m5-1h1v1h-1m4-1h1v1h-1m6-1h2v1h-2m4-1h1v1h-1m12-1h2v1h-2m52-1h1v1h-1m13-1h1v1h-1m4-1h1v1h-1m41-1h1v1h-1m4-1h1v1h-1m14-1h1v1h-1m-164 0h1v1h-1m4-1h1v1h-1m3-1h3v1h-3m4-1h2v1h-2m7-1h1v1h-1m4-1h2v1h-2m8-1h1v1h-1m4-1h1v1h-1m3-1h2v1h-2m55-1h1v1h-1m18-1h1v1h-1m4-1h1v1h-1m5-1h1v1h-1m4-1h1v1h-1m5-1h1v1h-1m4-1h1v1h-1m5-1h1v1h-1m4-1h1v1h-1m18-1h1v1h-1m-161 0h1v1h-1m3-1h2v1h-2m5-1h1v1h-1m4-1h1v1h-1m3-1h2v1h-2m7-1h1v1h-1m4-1h1v1h-1m3-1h1v1h-1m4-1h2v1h-2m4-1h1v1h-1m61-1h1v1h-1m59-1h1v1h-1m-156 0h1v1h-1m3-1h1v1h-1m6-1h1v1h-1m4-1h1v1h-1m3-1h2v1h-2m7-1h1v1h-1m3-1h2v1h-2m3-1h3v1h-3m4-1h2v1h-2m69-1h1v1h-1m4-1h1v1h-1m41-1h1v1h-1m5-1h1v1h-1m-154 0h1v1h-1m3-1h1v1h-1m4-1h1v1h-1m3-1h2v1h-2m7-1h1v1h-1m3-1h1v1h-1m6-1h1v1h-1m4-1h1v1h-1m3-1h2v1h-2m80-1h1v1h-1m4-1h1v1h-1m5-1h1v1h-1m4-1h1v1h-1m5-1h1v1h-1m5-1h1v1h-1m4-1h1v1h-1m5-1h1v1h-1m-147 0h1v1h-1m3-1h1v1h-1m4-1h2v1h-2m3-1h3v1h-3m5-1h1v1h-1m6-1h1v1h-1m2-1h2v1h-2m5-1h1v1h-1m2-1h1v1h-1m3-1h1v1h-1m-32 0h1v1h-1m3-1h2v1h-2m5-1h1v1h-1m4-1h1v1h-1m7-1h1v1h-1m2-1h1v1h-1m4-1h1v1h-1m9-1h2v1h-2m-36 0h2v1h-2m3-1h1v1h-1m3-1h1v1h-1m19-1h2v1h-2m3-1h2v1h-2m6-1h1v1h-1m-35 0h4v1h-4m28-1h1v1h-1m4-1h1v1h-1m-32 0h4v1h-4m26-1h1v1h-1m3-1h2v1h-2m4-1h1v1h-1m-34 0h3v1h-3m4-1h2v1h-2m24-1h2v1h-2m4-1h1v1h-1m-32 0h2v1h-2m3-1h1v1h-1m24-1h1v1h-1m3-1h2v1h-2m-31 0h4v1h-4m5-1h2v1h-2m25-1h3v1h-3m-29 0h1v1h-1m2-1h2v1h-2m4-1h1v1h-1m19-1h1v1h-1m3-1h3v1h-3m-28 0h2v1h-2m4-1h1v1h-1m3-1h2v1h-2m4-1h2v1h-2m11-1h1v1h-1m3-1h4v1h-4m-26 0h4v1h-4m6-1h2v1h-2m4-1h2v1h-2m4-1h2v1h-2m5-1h3v1h-3m5-1h5v1h-5m-23 0h2v1h-2m3-1h2v1h-2m4-1h2v1h-2m4-1h2v1h-2m4-1h3v1h-3m6-1h4v1h-4m5-1h1v1h-1m-25 0h2v1h-2m4-1h1v1h-1m4-1h2v1h-2m4-1h2v1h-2m5-1h4v1h-4m7-1h2v1h-2m-22 0h1v1h-1m3-1h2v1h-2m5-1h2v1h-2m4-1h4v1h-4m6-1h5v1h-5m-17 0h2v1h-2m4-1h2v1h-2m5-1h3v1h-3m6-1h6v1h-6m-12 0h2v1h-2m3-1h1v1h-1m2-1h2v1h-2m4-1h7v1h-7m-7 0h2v1h-2m5-1h3v1h-3m-3 0h2v1h-2m6-1h2v1h-2"/><path class="pl" fill="#8fcb4e" d="M502 99h2v1h-2m3-1h5v1h-5m-4 0h1v1h-1m14-1h2v1h-2m2 0h1v1h-1m-15 0h2v1h-2m4-1h2v1h-2m3-1h2v1h-2m10-1h2v1h-2m-8 0h3v1h-3m10-1h1v1h-1m-25 0h1v1h-1m0 0h1v1h-1m3-1h1v1h-1m17-1h1v1h-1m-21 0h2v1h-2m24-1h1v1h-1m-24 0h2v1h-2m25-1h1v1h-1m3-1h1v1h-1m-28 0h1v1h-1m2-1h1v1h-1m24-1h1v1h-1m2-1h1v1h-1m-28 0h1v1h-1m3-1h1v1h-1m24-1h1v1h-1m-28 0h1v1h-1m2-1h1v1h-1m3-1h1v1h-1m21-1h3v1h-3m-26 0h1v1h-1m3-1h1v1h-1m3-1h2v1h-2m19-1h1v1h-1m3-1h1v1h-1m-27 0h1v1h-1m3-1h2v1h-2m5-1h2v1h-2m18-1h2v1h-2m-25 0h1v1h-1m4-1h2v1h-2m5-1h3v1h-3m14-1h3v1h-3m-22 0h2v1h-2m5-1h1v1h-1m6-1h2v1h-2m3-1h8v1h-8m-12 0h1v1h-1m4-1h3v1h-3m-3 0h2v1h-2m7-1h3v1h-3m12-1h1v1h-1m-16 0h2v1h-2m7-1h9v1h-9m-5 0h2v1h-2m-131 0h1v1h-1m133-1h2v1h-2m3-1h2v1h-2m-144 0h1v1h-1m48-1h1v1h-1m4-1h1v1h-1m-65 0h1v1h-1m17-1h1v1h-1m40-1h1v1h-1m8-1h1v1h-1m-69 0h1v1h-1m81-1h1v1h-1m-85 0h1v1h-1m8-1h1v1h-1m8-1h1v1h-1m57-1h1v1h-1m8-1h1v1h-1m8-1h1v1h-1m-93 1h1v1h-1m7-1h1v1h-1m83-1h1v1h-1m-94 0h1v1h-1m105-1h1v1h-1m-108 0h1v1h-1m112-1h1v1h-1m-116 1h1v1h-1m3-1h1v1h-1m116-1h1v1h-1m-123 1h1v1h-1m3-1h1v1h-1m121-1h1v1h-1m3-1h1v1h-1m-128 0h1v1h-1m3-1h1v1h-1m123-1h1v1h-1m3-1h1v1h-1m-132 1h1v1h-1m3-1h1v1h-1m130-1h1v1h-1m2-1h1v1h-1m3-1h1v1h-1m-142 1h1v1h-1m3-1h1v1h-1m137-1h1v1h-1m3-1h1v1h-1m-146 1h1v1h-1m3-1h1v1h-1m144-1h1v1h-1m2-1h1v1h-1m-154 1h1v1h-1m4-1h1v1h-1m151-1h1v1h-1m4-1h1v1h-1m-160 1h1v1h-1m-2 0h1v1h-1m1 0h1v1h-1m166 0h1v1h-1m-169 0h1v1h-1m169-1h1v1h-1m-171 1h1v1h-1m-6 5h1v1h-1m185-1h1v1h-1m-187 1h2v1h-2m188-1h2v1h-2m-189 1h1v1h-1m191-1h1v1h-1m-192 1h1v1h-1m194-1h1v1h-1m-194 0h1v1h-1m194-1h1v1h-1m-196 1h1v1h-1m197-1h1v1h-1m0 0h1v1h-1m-198 0h1v1h-1m199-1h1v1h-1m-199 0h2v1h-2m199-1h1v1h-1m-200 1h2v1h-2m201-1h1v1h-1m-200 0h1v1h-1m199-1h1v1h-1m-201 0h1v1h-1m203-1h1v1h-1m-202 0h2v1h-2m200-1h2v1h-2m-201 1h2v1h-2m203-1h1v1h-1m-201 0h1v1h-1m200-1h1v1h-1m-203 1h1v1h-1m2-1h2v1h-2m201-1h3v1h-3m-203 1h1v1h-1m2-1h1v1h-1m202-1h2v1h-2m-201 0h1v1h-1m199-1h1v1h-1m-202 1h1v1h-1m2-1h2v1h-2m200-1h1v1h-1m2-1h2v1h-2m-204 1h1v1h-1m2-1h1v1h-1m201-1h1v1h-1m2-1h1v1h-1m-201 0h1v1h-1m197-1h1v1h-1m-200 1h1v1h-1m2-1h1v1h-1m2-1h1v1h-1m196-1h1v1h-1m2-1h2v1h-2m-202 1h1v1h-1m2-1h1v1h-1m3-1h1v1h-1m194-1h1v1h-1m2-1h1v1h-1m2-1h1v1h-1m-202 2h1v1h-1m2-1h1v1h-1m3-1h1v1h-1m191-1h1v1h-1m3-1h1v1h-1m2-1h1v1h-1m-200 1h1v1h-1m3-1h1v1h-1m2-1h1v1h-1m189-1h1v1h-1m3-1h1v1h-1m2-1h1v1h-1m-198 2h1v1h-1m3-1h1v1h-1m3-1h1v1h-1m186-1h1v1h-1m2-1h1v1h-1m3-1h1v1h-1m-195 1h1v1h-1m3-1h1v1h-1m3-1h1v1h-1m182-1h1v1h-1m3-1h1v1h-1m3-1h1v1h-1m-187 1h1v1h-1m179-1h1v1h-1m-185 0h1v1h-1m3-1h1v1h-1m185-1h1v1h-1m3-1h1v1h-1m-189 1h1v1h-1m3-1h1v1h-1m4-1h1v1h-1m174-1h1v1h-1m3-1h1v1h-1m3-1h1v1h-1m-182 1h1v1h-1m4-1h1v1h-1m169-1h1v1h-1m4-1h1v1h-1m-180 0h1v1h-1m183-1h1v1h-1m-174 0h1v1h-1m165-1h1v1h-1m-172 0h1v1h-1m4-1h1v1h-1m9-1h1v1h-1m163-1h1v1h-1m3-1h1v1h-1m-169 0h1v1h-1m159-1h1v1h-1m-166 0h1v1h-1m3-1h1v1h-1m4-1h1v1h-1m2-1h1v1h-1m161-1h1v1h-1m4-1h1v1h-1m-11 0h1v1h-1m-161 0h3v1h-3m4-1h1v1h-1m3-1h1v1h-1m158-1h1v1h-1m4-1h1v1h-1m-162 0h1v1h-1m151-1h1v1h-1m-160 0h2v1h-2m3-1h1v1h-1m3-1h1v1h-1m3-1h1v1h-1m155-1h1v1h-1m-159 0h2v1h-2m11-1h1v1h-1m141-1h1v1h-1m11-1h1v1h-1m-168 0h1v1h-1m3-1h1v1h-1m158-1h1v1h-1m-167 0h1v1h-1m9-1h1v1h-1m5-1h1v1h-1m12-1h1v1h-1m134-1h1v1h-1m11-1h1v1h-1m-168 0h1v1h-1m3-1h1v1h-1m15-1h1v1h-1m143-1h1v1h-1m-167 0h1v1h-1m3-1h1v1h-1m6-1h1v1h-1m11-1h1v1h-1m12-1h1v1h-1m6-1h1v1h-1m121-1h1v1h-1m12-1h1v1h-1m-168 0h1v1h-1m25-1h1v1h-1m6-1h1v1h-1m4-1h1v1h-1m125-1h1v1h-1m-165 0h1v1h-1m2-1h2v1h-2m4-1h1v1h-1m20-1h1v1h-1m11-1h2v1h-2m3-1h1v1h-1m117-1h1v1h-1m13-1h1v1h-1m-173 0h1v1h-1m6-1h1v1h-1m30-1h1v1h-1m4-1h1v1h-1m2-1h2v1h-2m3-1h1v1h-1m112-1h1v1h-1m8-1h1v1h-1m-165 0h1v1h-1m3-1h1v1h-1m4-1h1v1h-1m29-1h1v1h-1m4-1h1v1h-1m2-1h1v1h-1m127-1h1v1h-1m-171 0h1v1h-1m6-1h1v1h-1m32-1h2v1h-2m3-1h3v1h-3m9-1h1v1h-1m105-1h1v1h-1m8-1h1v1h-1m-160 0h1v1h-1m3-1h1v1h-1m29-1h1v1h-1m3-1h1v1h-1m2-1h2v1h-2m6-1h1v1h-1m8-1h1v1h-1m97-1h1v1h-1m8-1h1v1h-1m9-1h1v1h-1m-171 0h1v1h-1m6-1h1v1h-1m29-1h1v1h-1m3-1h1v1h-1m3-1h1v1h-1m2-1h2v1h-2m18-1h1v1h-1m89-1h1v1h-1m17-1h1v1h-1m-163 0h1v1h-1m31-1h1v1h-1m3-1h4v1h-4m15-1h1v1h-1m12-1h1v1h-1m81-1h1v1h-1m13-1h1v1h-1m-164 0h1v1h-1m3-1h2v1h-2m34-1h1v1h-1m4-1h1v1h-1m2-1h1v1h-1m10-1h1v1h-1m9-1h1v1h-1m12-1h1v1h-1m73-1h1v1h-1m13-1h1v1h-1m8-1h1v1h-1m-168 0h2v1h-2m38-1h1v1h-1m3-1h3v1h-3m25-1h1v1h-1m13-1h1v1h-1m64-1h1v1h-1m13-1h1v1h-1m-158 0h1v1h-1m3-1h2v1h-2m33-1h1v1h-1m4-1h1v1h-1m2-1h1v1h-1m17-1h1v1h-1m13-1h1v1h-1m13-1h1v1h-1m56-1h1v1h-1m13-1h1v1h-1m12-1h1v1h-1m-168 0h1v1h-1m3-1h1v1h-1m4-1h1v1h-1m32-1h1v1h-1m3-1h1v1h-1m2-1h1v1h-1m21-1h1v1h-1m13-1h1v1h-1m13-1h1v1h-1m4-1h1v1h-1m39-1h1v1h-1m4-1h1v1h-1m13-1h1v1h-1m13-1h1v1h-1m-164 0h1v1h-1m4-1h1v1h-1m32-1h1v1h-1m3-1h1v1h-1m2-1h2v1h-2m28-1h1v1h-1m13-1h1v1h-1m18-1h1v1h-1m4-1h1v1h-1m4-1h1v1h-1m4-1h1v1h-1m5-1h1v1h-1m4-1h1v1h-1m5-1h1v1h-1m4-1h1v1h-1m17-1h1v1h-1m13-1h1v1h-1m-162 0h1v1h-1m3-1h2v1h-2m32-1h1v1h-1m3-1h1v1h-1m3-1h1v1h-1m34-1h1v1h-1m13-1h1v1h-1m57-1h1v1h-1m13-1h1v1h-1m-160 0h2v1h-2m3-1h1v1h-1m31-1h1v1h-1m3-1h2v1h-2m4-1h2v1h-2m40-1h1v1h-1m14-1h1v1h-1m4-1h1v1h-1m39-1h1v1h-1m5-1h1v1h-1m13-1h1v1h-1m-125 0h1v1h-1m3-1h2v1h-2m4-1h1v1h-1m2-1h1v1h-1m46-1h1v1h-1m17-1h1v1h-1m5-1h1v1h-1m4-1h1v1h-1m4-1h1v1h-1m5-1h1v1h-1m4-1h1v1h-1m5-1h1v1h-1m4-1h1v1h-1m18-1h1v1h-1m-154 0h3v1h-3m34-1h1v1h-1m3-1h1v1h-1m3-1h1v1h-1m52-1h1v1h-1m57-1h1v1h-1m-150 0h2v1h-2m32-1h1v1h-1m3-1h2v1h-2m4-1h1v1h-1m58-1h1v1h-1m5-1h1v1h-1m40-1h1v1h-1m4-1h1v1h-1m-148 0h1v1h-1m3-1h2v1h-2m28-1h1v1h-1m4-1h1v1h-1m3-1h1v1h-1m3-1h1v1h-1m67-1h1v1h-1m5-1h1v1h-1m4-1h1v1h-1m4-1h1v1h-1m5-1h1v1h-1m4-1h1v1h-1m5-1h1v1h-1m4-1h1v1h-1m-139 0h2v1h-2m4-1h1v1h-1m24-1h1v1h-1m4-1h1v1h-1m3-1h2v1h-2m3-1h1v1h-1m-40 0h2v1h-2m3-1h2v1h-2m25-1h1v1h-1m3-1h2v1h-2m4-1h1v1h-1m3-1h1v1h-1m-39 0h1v1h-1m2-1h2v1h-2m4-1h2v1h-2m20-1h1v1h-1m3-1h2v1h-2m4-1h2v1h-2m4-1h1v1h-1m-37 0h2v1h-2m4-1h2v1h-2m4-1h2v1h-2m15-1h1v1h-1m3-1h2v1h-2m5-1h1v1h-1m3-1h2v1h-2m3-1h1v1h-1m-38 0h1v1h-1m2-1h2v1h-2m4-1h2v1h-2m5-1h1v1h-1m5-1h1v1h-1m4-1h2v1h-2m5-1h1v1h-1m4-1h1v1h-1m4-1h1v1h-1m3-1h1v1h-1m-38 0h1v1h-1m2-1h2v1h-2m4-1h2v1h-2m4-1h1v1h-1m4-1h2v1h-2m5-1h2v1h-2m5-1h2v1h-2m4-1h2v1h-2m4-1h2v1h-2m4-1h1v1h-1m-36 0h2v1h-2m3-1h3v1h-3m5-1h1v1h-1m4-1h2v1h-2m4-1h2v1h-2m5-1h1v1h-1m5-1h1v1h-1m4-1h2v1h-2m3-1h2v1h-2m-34 0h1v1h-1m2-1h2v1h-2m4-1h1v1h-1m4-1h2v1h-2m5-1h2v1h-2m4-1h1v1h-1m4-1h3v1h-3m5-1h2v1h-2m4-1h2v1h-2m-31 0h1v1h-1m2-1h2v1h-2m4-1h2v1h-2m5-1h2v1h-2m5-1h1v1h-1m3-1h3v1h-3m6-1h1v1h-1m3-1h3v1h-3m5-1h1v1h-1m-32 0h1v1h-1m3-1h2v1h-2m5-1h2v1h-2m4-1h1v1h-1m4-1h3v1h-3m5-1h2v1h-2m4-1h3v1h-3m4-1h2v1h-2m-28 0h2v1h-2m4-1h2v1h-2m5-1h1v1h-1m3-1h2v1h-2m6-1h2v1h-2m4-1h2v1h-2m4-1h2v1h-2m-24 0h2v1h-2m4-1h1v1h-1m4-1h2v1h-2m4-1h3v1h-3m5-1h3v1h-3m5-1h2v1h-2m-24 0h2v1h-2m4-1h1v1h-1m3-1h2v1h-2m5-1h3v1h-3m5-1h3v1h-3m5-1h2v1h-2m-20 0h1v1h-1m3-1h2v1h-2m5-1h2v1h-2m5-1h2v1h-2m4-1h3v1h-3m-16 0h2v1h-2m4-1h2v1h-2m5-1h2v1h-2m4-1h3v1h-3m-7 0h3v1h-3m5-1h2v1h-2"/><path class="pl" fill="#abc739" d="M505 94h1v1h-1m-2 0h1v1h-1m3 0h3v1h-3m6-1h1v1h-1m-12 0h1v1h-1m4-1h1v1h-1m14-1h2v1h-2m-18 0h1v1h-1m20-1h1v1h-1m6-1h1v1h-1m-27 0h2v1h-2m23-1h1v1h-1m-24 0h3v1h-3m25-1h1v1h-1m3-1h1v1h-1m-28 0h3v1h-3m28-1h1v1h-1m-29 0h2v1h-2m3-1h2v1h-2m25-1h1v1h-1m-28 0h3v1h-3m4-1h2v1h-2m23-1h2v1h-2m-27 0h1v1h-1m2-1h2v1h-2m4-1h1v1h-1m18-1h5v1h-5m-24 0h2v1h-2m3-1h1v1h-1m4-1h3v1h-3m14-1h3v1h-3m5-1h2v1h-2m-25 0h1v1h-1m3-1h2v1h-2m6-1h3v1h-3m4-1h7v1h-7m11-1h2v1h-2m-23 0h1v1h-1m4-1h2v1h-2m18-1h2v1h-2m-21 0h2v1h-2m5-1h3v1h-3m12-1h4v1h-4m-15 0h2v1h-2m7-1h8v1h-8m-5 0h1v1h-1m2-1h1v1h-1m1 0h12v1h-12m-124 2h1v1h-1m5-1h1v1h-1m4-1h1v1h-1m4-1h1v1h-1m-25 0h1v1h-1m4-1h1v1h-1m4-1h1v1h-1m21-1h1v1h-1m4-1h1v1h-1m5-1h1v1h-1m-42 0h1v1h-1m8-1h1v1h-1m4-1h1v1h-1m21-1h1v1h-1m5-1h1v1h-1m8-1h1v1h-1m-51 0h1v1h-1m4-1h1v1h-1m4-1h1v1h-1m43-1h1v1h-1m4-1h1v1h-1m-63 0h1v1h-1m8-1h1v1h-1m55-1h1v1h-1m-67 0h1v1h-1m8-1h1v1h-1m63-1h1v1h-1m8-1h1v1h-1m-83 0h1v1h-1m8-1h1v1h-1m71-1h1v1h-1m8-1h1v1h-1m-90 0h1v1h-1m7-1h1v1h-1m79-1h1v1h-1m8-1h1v1h-1m-91 0h1v1h-1m87-1h1v1h-1m-94 0h1v1h-1m3-1h1v1h-1m95-1h1v1h-1m3-1h1v1h-1m-102 0h1v1h-1m103-1h1v1h-1m-107 1h1v1h-1m111-1h1v1h-1m-117 0h1v1h-1m3-1h1v1h-1m118-1h1v1h-1m-124 1h1v1h-1m2-1h1v1h-1m125-1h1v1h-1m3-1h1v1h-1m-131 1h1v1h-1m-6 1h1v1h-1m143-1h1v1h-1m1 0h1v1h-1m2 0h1v1h-1m-150 1h1v1h-1m-4 1h1v1h-1m160-1h1v1h-1m-163 1h2v1h-2m164-1h2v1h-2m-165 1h1v1h-1m167-1h1v1h-1m-175 8h1v1h-1m184-1h1v1h-1m-186 1h1v1h-1m187-1h1v1h-1m-187 0h1v1h-1m-1 1h1v1h-1m-1 1h1v1h-1m191-1h1v1h-1m-192 2h1v1h-1m193-1h1v1h-1m-194 1h2v1h-2m194-1h2v1h-2m-194 1h1v1h-1m196-1h1v1h-1m-195 0h1v1h-1m194-1h1v1h-1m-196 1h2v1h-2m196-1h2v1h-2m-196 1h1v1h-1m197-1h1v1h-1m-196 0h1v1h-1m195-1h1v1h-1m-196 1h1v1h-1m2-1h1v1h-1m194-1h2v1h-2m-196 1h1v1h-1m2-1h1v1h-1m193-1h1v1h-1m2-1h1v1h-1m-196 2h1v1h-1m2-1h1v1h-1m192-1h1v1h-1m2-1h1v1h-1m-196 1h1v1h-1m2-1h1v1h-1m191-1h1v1h-1m2-1h1v1h-1m-194 2h1v1h-1m2-1h1v1h-1m189-1h1v1h-1m2-1h1v1h-1m-192 1h1v1h-1m2-1h1v1h-1m187-1h1v1h-1m2-1h1v1h-1m-190 1h1v1h-1m3-1h1v1h-1m184-1h1v1h-1m2-1h1v1h-1m-188 2h1v1h-1m3-1h1v1h-1m181-1h1v1h-1m3-1h1v1h-1m-185 1h1v1h-1m3-1h1v1h-1m177-1h1v1h-1m3-1h1v1h-1m-178 1h1v1h-1m174-1h1v1h-1m-177 0h1v1h-1m180-1h1v1h-1m-175 0h1v1h-1m169-1h1v1h-1m-172 0h1v1h-1m176-1h1v1h-1m-174 1h1v1h-1m3-1h1v1h-1m165-1h1v1h-1m4-1h1v1h-1m-170 1h1v1h-1m4-1h1v1h-1m160-1h1v1h-1m3-1h1v1h-1m-165 1h1v1h-1m4-1h1v1h-1m155-1h1v1h-1m4-1h1v1h-1m-156 1h1v1h-1m149-1h1v1h-1m-153 0h1v1h-1m3-1h8v1h-8m154-1h1v1h-1m-154 0h1v1h-1m4-1h1v1h-1m4-1h2v1h-2m139-1h1v1h-1m-150 0h6v1h-6m13-1h1v1h-1m141-1h1v1h-1m-154 0h1v1h-1m6-1h3v1h-3m4-1h1v1h-1m4-1h2v1h-2m133-1h1v1h-1m-151 0h7v1h-7m10-1h1v1h-1m3-1h1v1h-1m7-1h1v1h-1m135-1h1v1h-1m-148 0h2v1h-2m7-1h2v1h-2m4-1h1v1h-1m3-1h2v1h-2m127-1h1v1h-1m-151 0h6v1h-6m12-1h2v1h-2m4-1h1v1h-1m3-1h1v1h-1m5-1h2v1h-2m123-1h1v1h-1m8-1h1v1h-1m-149 0h2v1h-2m8-1h2v1h-2m6-1h1v1h-1m6-1h1v1h-1m126-1h1v1h-1m-155 0h6v1h-6m11-1h2v1h-2m8-1h1v1h-1m5-1h2v1h-2m5-1h1v1h-1m2-1h1v1h-1m116-1h1v1h-1m-149 0h2v1h-2m8-1h3v1h-3m7-1h2v1h-2m7-1h1v1h-1m5-1h2v1h-2m5-1h1v1h-1m4-1h1v1h-1m109-1h1v1h-1m8-1h1v1h-1m-154 0h7v1h-7m12-1h1v1h-1m6-1h1v1h-1m5-1h2v1h-2m6-1h1v1h-1m4-1h1v1h-1m-36 0h4v1h-4m9-1h2v1h-2m7-1h2v1h-2m6-1h1v1h-1m6-1h1v1h-1m4-1h2v1h-2m4-1h2v1h-2m8-1h1v1h-1m101-1h1v1h-1m9-1h1v1h-1m-154 0h1v1h-1m4-1h2v1h-2m8-1h1v1h-1m6-1h1v1h-1m5-1h2v1h-2m5-1h1v1h-1m5-1h1v1h-1m6-1h1v1h-1m9-1h1v1h-1m94-1h1v1h-1m8-1h1v1h-1m-153 0h5v1h-5m9-1h2v1h-2m7-1h2v1h-2m6-1h1v1h-1m5-1h1v1h-1m5-1h1v1h-1m22-1h1v1h-1m87-1h1v1h-1m-137 0h2v1h-2m7-1h1v1h-1m7-1h1v1h-1m5-1h1v1h-1m5-1h2v1h-2m5-1h1v1h-1m13-1h1v1h-1m12-1h1v1h-1m79-1h1v1h-1m12-1h1v1h-1m-151 0h4v1h-4m8-1h2v1h-2m7-1h2v1h-2m6-1h1v1h-1m5-1h1v1h-1m5-1h1v1h-1m21-1h1v1h-1m12-1h1v1h-1m71-1h1v1h-1m12-1h1v1h-1m-150 0h2v1h-2m7-1h2v1h-2m6-1h2v1h-2m7-1h1v1h-1m5-1h1v1h-1m5-1h1v1h-1m4-1h1v1h-1m25-1h1v1h-1m12-1h1v1h-1m63-1h1v1h-1m12-1h1v1h-1m-144 0h3v1h-3m7-1h1v1h-1m7-1h1v1h-1m4-1h2v1h-2m6-1h2v1h-2m5-1h1v1h-1m4-1h1v1h-1m28-1h1v1h-1m12-1h1v1h-1m55-1h1v1h-1m12-1h1v1h-1m-145 0h4v1h-4m8-1h1v1h-1m5-1h1v1h-1m2-1h1v1h-1m5-1h1v1h-1m5-1h1v1h-1m5-1h1v1h-1m4-1h2v1h-2m36-1h1v1h-1m13-1h1v1h-1m4-1h1v1h-1m38-1h1v1h-1m4-1h1v1h-1m12-1h1v1h-1m-138 0h3v1h-3m6-1h1v1h-1m2-1h1v1h-1m5-1h2v1h-2m5-1h1v1h-1m5-1h2v1h-2m5-1h1v1h-1m43-1h1v1h-1m17-1h1v1h-1m4-1h1v1h-1m4-1h1v1h-1m5-1h1v1h-1m4-1h1v1h-1m4-1h1v1h-1m4-1h1v1h-1m4-1h1v1h-1m17-1h1v1h-1m-139 0h4v1h-4m8-1h2v1h-2m6-1h1v1h-1m6-1h1v1h-1m4-1h2v1h-2m5-1h1v1h-1m5-1h1v1h-1m46-1h1v1h-1m55-1h1v1h-1m-137 0h2v1h-2m5-1h2v1h-2m7-1h1v1h-1m5-1h2v1h-2m5-1h2v1h-2m6-1h1v1h-1m4-1h1v1h-1m54-1h1v1h-1m4-1h1v1h-1m39-1h1v1h-1m4-1h1v1h-1m-131 0h2v1h-2m5-1h2v1h-2m6-1h2v1h-2m6-1h1v1h-1m5-1h1v1h-1m4-1h2v1h-2m5-1h1v1h-1m62-1h1v1h-1m4-1h1v1h-1m4-1h1v1h-1m5-1h1v1h-1m4-1h1v1h-1m4-1h1v1h-1m4-1h1v1h-1m5-1h1v1h-1m-127 0h2v1h-2m6-1h2v1h-2m5-1h2v1h-2m6-1h1v1h-1m5-1h1v1h-1m5-1h1v1h-1m4-1h1v1h-1m-33 0h1v1h-1m4-1h2v1h-2m6-1h2v1h-2m5-1h1v1h-1m5-1h2v1h-2m5-1h2v1h-2m5-1h1v1h-1m4-1h1v1h-1m-34 0h3v1h-3m6-1h2v1h-2m6-1h1v1h-1m4-1h2v1h-2m6-1h2v1h-2m5-1h1v1h-1m4-1h1v1h-1m-33 0h2v1h-2m4-1h3v1h-3m6-1h1v1h-1m5-1h2v1h-2m5-1h1v1h-1m5-1h1v1h-1m4-1h2v1h-2m-28 0h2v1h-2m6-1h1v1h-1m4-1h2v1h-2m6-1h1v1h-1m4-1h2v1h-2m5-1h2v1h-2m-28 0h2v1h-2m5-1h2v1h-2m5-1h2v1h-2m6-1h1v1h-1m4-1h2v1h-2m5-1h2v1h-2m4-1h1v1h-1m-27 0h2v1h-2m5-1h2v1h-2m5-1h1v1h-1m5-1h1v1h-1m5-1h1v1h-1m4-1h2v1h-2m-27 0h2v1h-2m5-1h2v1h-2m5-1h2v1h-2m4-1h2v1h-2m5-1h2v1h-2m5-1h2v1h-2m-22 0h2v1h-2m5-1h2v1h-2m5-1h1v1h-1m4-1h2v1h-2m5-1h2v1h-2m-21 0h1v1h-1m4-1h2v1h-2m5-1h1v1h-1m4-1h2v1h-2m5-1h2v1h-2m-17 0h2v1h-2m5-1h1v1h-1m4-1h2v1h-2m5-1h2v1h-2m5-1h1v1h-1m-17 0h1v1h-1m4-1h2v1h-2m5-1h2v1h-2m5-1h1v1h-1m-13 0h2v1h-2m5-1h2v1h-2m5-1h1v1h-1m-8 0h1v1h-1"/><path class="pl" fill="#c5c22a" d="M528 83h2v1h-2m-11 2h4v1h-4m5-1h5v1h-5m5 0h1v1h-1m-10 1h5v1h-5m-12 0h1v1h-1m-1 0h1v1h-1m0 0h1v1h-1m27-1h2v1h-2m-28 0h2v1h-2m27-1h2v1h-2m-28 0h3v1h-3m26-1h3v1h-3m-26 0h1v1h-1m2-1h1v1h-1m23-1h1v1h-1m2-1h1v1h-1m-28 0h2v1h-2m3-1h2v1h-2m21-1h2v1h-2m3-1h2v1h-2m-27 0h3v1h-3m5-1h1v1h-1m17-1h2v1h-2m3-1h3v1h-3m-25 0h1v1h-1m2-1h1v1h-1m4-1h2v1h-2m12-1h1v1h-1m2-1h2v1h-2m4-1h1v1h-1m2-1h2v1h-2m-26 0h1v1h-1m3-1h1v1h-1m6-1h5v1h-5m6-1h3v1h-3m7-1h2v1h-2m3-1h2v1h-2m-24 0h1v1h-1m3-1h2v1h-2m15-1h3v1h-3m5-1h1v1h-1m-23 0h2v1h-2m5-1h4v1h-4m5-1h5v1h-5m6-1h2v1h-2m6-1h2v1h-2m-20 0h2v1h-2m17-1h3v1h-3m-15 0h3v1h-3m11-1h1v1h-1m2-1h2v1h-2m-10 0h2v1h-2m3-1h5v1h-5m-116 6h1v1h-1m-25 0h1v1h-1m4-1h1v1h-1m4-1h1v1h-1m21-1h1v1h-1m4-1h1v1h-1m4-1h1v1h-1m-45 0h1v1h-1m4-1h1v1h-1m8-1h1v1h-1m4-1h1v1h-1m4-1h1v1h-1m13-1h1v1h-1m4-1h1v1h-1m4-1h1v1h-1m8-1h1v1h-1m4-1h1v1h-1m-49 0h1v1h-1m4-1h1v1h-1m37-1h1v1h-1m4-1h1v1h-1m8-1h1v1h-1m-57 0h1v1h-1m53-1h1v1h-1m-65 0h1v1h-1m8-1h1v1h-1m73 0h1v1h-1m-88 0h1v1h-1m-4 0h1v1h-1m7-1h1v1h-1m92-1h1v1h-1m-96 0h1v1h-1m93-1h1v1h-1m-99 0h1v1h-1m3-1h1v1h-1m100-1h1v1h-1m3-1h1v1h-1m-110 0h1v1h-1m3-1h1v1h-1m107-1h1v1h-1m3-1h1v1h-1m-116 1h1v1h-1m121 1h1v1h-1m-126 0h1v1h-1m129-1h1v1h-1m-132 1h1v1h-1m135-1h1v1h-1m-140 1h1v1h-1m143-1h1v1h-1m2-1h1v1h-1m-148 1h1v1h-1m151-1h1v1h-1m-153 1h2v1h-2m154-1h1v1h-1m-155 1h1v1h-1m158-1h1v1h-1m13 15h1v1h-1m-185 1h1v1h-1m186-1h1v1h-1m-187 1h1v1h-1m187-1h2v1h-2m-188 2h2v1h-2m189-1h1v1h-1m-190 1h2v1h-2m190-1h2v1h-2m-190 1h1v1h-1m191-1h1v1h-1m-190 0h1v1h-1m189-1h1v1h-1m-190 1h2v1h-2m190-1h1v1h-1m2-1h1v1h-1m-192 1h2v1h-2m190-1h1v1h-1m2-1h1v1h-1m-192 2h1v1h-1m2-1h1v1h-1m188-1h2v1h-2m-190 1h1v1h-1m2-1h1v1h-1m187-1h1v1h-1m2-1h1v1h-1m-190 1h1v1h-1m2-1h1v1h-1m185-1h1v1h-1m2-1h1v1h-1m-188 2h1v1h-1m2-1h1v1h-1m183-1h1v1h-1m3-1h1v1h-1m-187 1h1v1h-1m2-1h1v1h-1m181-1h1v1h-1m3-1h1v1h-1m-185 1h1v1h-1m2-1h1v1h-1m179-1h1v1h-1m3-1h1v1h-1m-183 2h1v1h-1m3-1h1v1h-1m176-1h1v1h-1m2-1h1v1h-1m-180 1h1v1h-1m3-1h1v1h-1m173-1h1v1h-1m3-1h1v1h-1m-177 1h1v1h-1m3-1h1v1h-1m169-1h1v1h-1m3-1h1v1h-1m-170 1h1v1h-1m165-1h1v1h-1m-168 0h1v1h-1m171-1h1v1h-1m-166 0h1v1h-1m161-1h1v1h-1m-164 0h1v1h-1m167-1h1v1h-1m-161 0h1v1h-1m156-1h1v1h-1m-160 0h1v1h-1m163-1h1v1h-1m-157 0h1v1h-1m151-1h1v1h-1m-154 0h1v1h-1m158-1h1v1h-1m-152 0h1v1h-1m145-1h1v1h-1m-149 0h1v1h-1m153-1h1v1h-1m-146 0h1v1h-1m139-1h1v1h-1m-143 0h1v1h-1m147-1h1v1h-1m-140 0h1v1h-1m133-1h1v1h-1m-137 0h1v1h-1m141-1h1v1h-1m-134 0h1v1h-1m127-1h1v1h-1m-131 0h1v1h-1m135-1h1v1h-1m-127 0h1v1h-1m120-1h1v1h-1m-125 0h1v1h-1m8-1h1v1h-1m113-1h1v1h-1m8-1h1v1h-1m-125 0h1v1h-1m122-1h1v1h-1m-114 0h1v1h-1m106-1h1v1h-1m-111 0h1v1h-1m8-1h1v1h-1m99-1h1v1h-1m8-1h1v1h-1m-103 0h1v1h-1m91-1h1v1h-1m-99 0h1v1h-1m12-1h1v1h-1m84-1h1v1h-1m11-1h1v1h-1m-103 0h1v1h-1m100-1h1v1h-1m-97 0h1v1h-1m8-1h1v1h-1m4-1h1v1h-1m69-1h1v1h-1m4-1h1v1h-1m8-1h1v1h-1m-89 0h1v1h-1m12-1h1v1h-1m61-1h1v1h-1m12-1h1v1h-1m-81 0h1v1h-1m12-1h1v1h-1m53-1h1v1h-1m12-1h1v1h-1m-73 0h1v1h-1m12-1h1v1h-1m4-1h1v1h-1m37-1h1v1h-1m4-1h1v1h-1m12-1h1v1h-1m-65 0h1v1h-1m16-1h1v1h-1m4-1h1v1h-1m5-1h1v1h-1m4-1h1v1h-1m4-1h1v1h-1m4-1h1v1h-1m4-1h1v1h-1m4-1h1v1h-1m17-1h1v1h-1m-58 0h1v1h-1m53-1h1v1h-1m-49 0h1v1h-1m4-1h1v1h-1m37-1h1v1h-1m4-1h1v1h-1m-37 0h1v1h-1m4-1h1v1h-1m4-1h1v1h-1m5-1h1v1h-1m4-1h1v1h-1m4-1h1v1h-1m4-1h1v1h-1m4-1h1v1h-1"/><path class="pl" fill="#dcbd29" d="M531 72h8v1h-8m-3 0h14v1h-14m-3 0h17v1h-17m-2 0h20v1h-20m-2 0h22v1h-22m-2 0h24v1h-24m-2 0h26v1h-26m-1 0h26v1h-26m-1 0h27v1h-27m-2 0h18v1h-18m19-1h9v1h-9m-20 0h18v1h-18m19-1h10v1h-10m-20 0h11v1h-11m19-1h10v1h-10m-20 0h10v1h-10m21-1h8v1h-8m-22 0h8v1h-8m22-1h8v1h-8m-23 0h8v1h-8m22-1h8v1h-8m-23 0h8v1h-8m21-1h9v1h-9m-22 0h8v1h-8m19-1h11v1h-11m-19 0h10v1h-10m16-1h13v1h-13m-16 0h28v1h-28m-1 0h28v1h-28m0 0h26v1h-26m0 0h25v1h-25m1 0h21v1h-21m1 0h19v1h-19m2 0h3v1h-3m4-1h9v1h-9m-1 0h2v1h-2m3-1h3v1h-3m-119 10h1v1h-1m4-1h1v1h-1m-32 0h1v1h-1m16-1h1v1h-1m4-1h1v1h-1m4-1h1v1h-1m3-1h2v1h-2m5-1h1v1h-1m4-1h1v1h-1m-43 0h1v1h-1m3-1h1v1h-1m4-1h1v1h-1m4-1h2v1h-2m4-1h2v1h-2m4-1h1v1h-1m4-1h1v1h-1m4-1h1v1h-1m4-1h1v1h-1m3-1h2v1h-2m4-1h2v1h-2m4-1h2v1h-2m3-1h1v1h-1m2-1h1v1h-1m3-1h2v1h-2m4-1h1v1h-1m3-1h1v1h-1m-61 0h1v1h-1m3-1h1v1h-1m4-1h1v1h-1m2-1h1v1h-1m2-1h2v1h-2m4-1h2v1h-2m5-1h1v1h-1m3-1h1v1h-1m4-1h1v1h-1m4-1h1v1h-1m4-1h1v1h-1m3-1h1v1h-1m4-1h1v1h-1m4-1h1v1h-1m3-1h1v1h-1m2-1h1v1h-1m2-1h1v1h-1m2-1h1v1h-1m2-1h3v1h-3m5-1h1v1h-1m-66 0h1v1h-1m3-1h2v1h-2m4-1h1v1h-1m2-1h1v1h-1m2-1h1v1h-1m2-1h1v1h-1m3-1h1v1h-1m4-1h1v1h-1m4-1h1v1h-1m3-1h1v1h-1m4-1h1v1h-1m4-1h1v1h-1m4-1h1v1h-1m3-1h1v1h-1m4-1h1v1h-1m4-1h1v1h-1m3-1h1v1h-1m4-1h1v1h-1m4-1h1v1h-1m2-1h2v1h-2m3-1h2v1h-2m4-1h1v1h-1m3-1h1v1h-1m-74 0h2v1h-2m4-1h1v1h-1m4-1h1v1h-1m2-1h1v1h-1m4-1h1v1h-1m3-1h1v1h-1m4-1h1v1h-1m4-1h1v1h-1m3-1h1v1h-1m4-1h1v1h-1m4-1h1v1h-1m4-1h1v1h-1m3-1h1v1h-1m4-1h1v1h-1m4-1h1v1h-1m3-1h1v1h-1m4-1h1v1h-1m4-1h1v1h-1m3-1h1v1h-1m3-1h1v1h-1m3-1h1v1h-1m3-1h2v1h-2m4-1h1v1h-1m-84 0h1v1h-1m3-1h1v1h-1m3-1h1v1h-1m3-1h1v1h-1m4-1h1v1h-1m3-1h1v1h-1m4-1h1v1h-1m3-1h1v1h-1m4-1h1v1h-1m3-1h2v1h-2m4-1h1v1h-1m19-1h1v1h-1m4-1h1v1h-1m3-1h2v1h-2m4-1h1v1h-1m4-1h1v1h-1m3-1h1v1h-1m4-1h1v1h-1m3-1h1v1h-1m3-1h1v1h-1m3-1h2v1h-2m-85 0h2v1h-2m4-1h1v1h-1m2-1h2v1h-2m4-1h1v1h-1m3-1h2v1h-2m4-1h1v1h-1m3-1h1v1h-1m4-1h1v1h-1m41-1h1v1h-1m4-1h1v1h-1m3-1h1v1h-1m4-1h1v1h-1m3-1h1v1h-1m4-1h1v1h-1m5-1h2v1h-2m-91 0h2v1h-2m3-1h1v1h-1m3-1h1v1h-1m4-1h1v1h-1m3-1h1v1h-1m3-1h1v1h-1m4-1h1v1h-1m15-1h2v1h-2m4-1h1v1h-1m17-1h1v1h-1m3-1h2v1h-2m17-1h1v1h-1m3-1h1v1h-1m3-1h1v1h-1m4-1h1v1h-1m3-1h1v1h-1m3-1h1v1h-1m3-1h2v1h-2m-98 0h1v1h-1m9-1h1v1h-1m3-1h1v1h-1m4-1h1v1h-1m3-1h1v1h-1m13-1h2v1h-2m3-1h2v1h-2m3-1h2v1h-2m24-1h2v1h-2m3-1h2v1h-2m4-1h2v1h-2m13-1h1v1h-1m3-1h2v1h-2m4-1h1v1h-1m3-1h1v1h-1m9-1h2v1h-2m-104 0h1v1h-1m9-1h1v1h-1m3-1h1v1h-1m3-1h1v1h-1m4-1h1v1h-1m9-1h2v1h-2m3-1h6v1h-6m7-1h2v1h-2m31-1h1v1h-1m2-1h1v1h-1m2-1h1v1h-1m2-1h2v1h-2m4-1h1v1h-1m10-1h1v1h-1m3-1h1v1h-1m3-1h1v1h-1m4-1h1v1h-1m6-1h1v1h-1m3-1h1v1h-1m-109 0h1v1h-1m2-1h1v1h-1m5-1h1v1h-1m3-1h1v1h-1m3-1h1v1h-1m3-1h1v1h-1m10-1h2v1h-2m3-1h4v1h-4m5-1h1v1h-1m43-1h3v1h-3m4-1h4v1h-4m12-1h1v1h-1m3-1h2v1h-2m4-1h1v1h-1m3-1h1v1h-1m6-1h2v1h-2m-112 0h1v1h-1m6-1h1v1h-1m3-1h2v1h-2m3-1h2v1h-2m4-1h1v1h-1m9-1h4v1h-4m5-1h2v1h-2m54-1h2v1h-2m3-1h4v1h-4m13-1h1v1h-1m3-1h1v1h-1m3-1h1v1h-1m3-1h1v1h-1m6-1h1v1h-1m-118 0h1v1h-1m3-1h1v1h-1m2-1h1v1h-1m4-1h1v1h-1m3-1h1v1h-1m3-1h1v1h-1m10-1h4v1h-4m6-1h1v1h-1m62-1h5v1h-5m13-1h1v1h-1m3-1h1v1h-1m3-1h1v1h-1m4-1h1v1h-1m5-1h1v1h-1m-122 0h2v1h-2m7-1h1v1h-1m3-1h1v1h-1m3-1h1v1h-1m10-1h4v1h-4m6-1h1v1h-1m65-1h1v1h-1m3-1h5v1h-5m13-1h1v1h-1m3-1h1v1h-1m3-1h1v1h-1m5-1h3v1h-3m-123 0h1v1h-1m6-1h1v1h-1m3-1h1v1h-1m3-1h1v1h-1m9-1h5v1h-5m81-1h5v1h-5m13-1h2v1h-2m3-1h1v1h-1m3-1h1v1h-1m6-1h2v1h-2m-128 0h3v1h-3m7-1h1v1h-1m3-1h1v1h-1m10-1h5v1h-5m86-1h5v1h-5m13-1h2v1h-2m3-1h1v1h-1m5-1h1v1h-1m2-1h2v1h-2m-131 0h1v1h-1m6-1h1v1h-1m3-1h1v1h-1m2-1h2v1h-2m8-1h4v1h-4m92-1h5v1h-5m11-1h1v1h-1m2-1h1v1h-1m3-1h1v1h-1m6-1h2v1h-2m-135 0h1v1h-1m3-1h1v1h-1m5-1h1v1h-1m2-1h2v1h-2m8-1h3v1h-3m7-1h1v1h-1m87-1h1v1h-1m5-1h3v1h-3m10-1h1v1h-1m2-1h1v1h-1m5-1h1v1h-1m-135 0h2v1h-2m4-1h1v1h-1m2-1h1v1h-1m3-1h1v1h-1m9-1h2v1h-2m4-1h2v1h-2m94-1h2v1h-2m5-1h1v1h-1m9-1h2v1h-2m3-1h1v1h-1m5-1h3v1h-3m-140 0h1v1h-1m6-1h1v1h-1m2-1h1v1h-1m2-1h2v1h-2m8-1h6v1h-6m103-1h5v1h-5m12-1h1v1h-1m2-1h1v1h-1m3-1h1v1h-1m5-1h1v1h-1m-144 0h3v1h-3m7-1h1v1h-1m2-1h1v1h-1m8-1h4v1h-4m108-1h5v1h-5m11-1h2v1h-2m3-1h1v1h-1m5-1h3v1h-3m-145 0h1v1h-1m5-1h1v1h-1m2-1h2v1h-2m3-1h1v1h-1m7-1h1v1h-1m5-1h1v1h-1m103-1h1v1h-1m5-1h1v1h-1m8-1h1v1h-1m2-1h1v1h-1m2-1h1v1h-1m6-1h1v1h-1m-150 0h3v1h-3m7-1h1v1h-1m2-1h1v1h-1m7-1h5v1h-5m6-1h1v1h-1m108-1h6v1h-6m12-1h1v1h-1m2-1h1v1h-1m6-1h2v1h-2m-151 0h1v1h-1m6-1h1v1h-1m2-1h1v1h-1m2-1h1v1h-1m6-1h5v1h-5m117-1h5v1h-5m11-1h2v1h-2m3-1h1v1h-1m6-1h1v1h-1m-154 0h2v1h-2m5-1h1v1h-1m2-1h3v1h-3m9-1h2v1h-2m123-1h2v1h-2m8-1h2v1h-2m7-1h2v1h-2m-155 0h1v1h-1m6-1h3v1h-3m9-1h6v1h-6m122-1h2v1h-2m3-1h3v1h-3m10-1h1v1h-1m2-1h1v1h-1m5-1h1v1h-1m-158 0h2v1h-2m5-1h1v1h-1m2-1h2v1h-2m8-1h4v1h-4m126-1h1v1h-1m2-1h2v1h-2m8-1h1v1h-1m2-1h1v1h-1m5-1h2v1h-2m-159 0h2v1h-2m6-1h3v1h-3m9-1h3v1h-3m5-1h1v1h-1m121-1h1v1h-1m4-1h3v1h-3m9-1h1v1h-1m2-1h1v1h-1m5-1h1v1h-1m-162 0h2v1h-2m7-1h2v1h-2m8-1h5v1h-5m129-1h2v1h-2m3-1h3v1h-3m8-1h4v1h-4m7-1h2v1h-2m-163 0h2v1h-2m6-1h2v1h-2m9-1h1v1h-1m135-1h2v1h-2m8-1h2v1h-2m7-1h1v1h-1m-165 0h2v1h-2m6-1h2v1h-2m7-1h5v1h-5m6-1h1v1h-1m128-1h6v1h-6m11-1h3v1h-3m6-1h3v1h-3m-165 0h1v1h-1m5-1h3v1h-3m8-1h2v1h-2m141-1h1v1h-1m7-1h2v1h-2m6-1h2v1h-2m-168 0h2v1h-2m5-1h3v1h-3m9-1h3v1h-3m4-1h2v1h-2m132-1h1v1h-1m2-1h5v1h-5m10-1h2v1h-2m6-1h2v1h-2m-169 0h2v1h-2m6-1h2v1h-2m8-1h1v1h-1m2-1h2v1h-2m3-1h1v1h-1m134-1h3v1h-3m4-1h2v1h-2m7-1h3v1h-3m6-1h2v1h-2m-171 0h3v1h-3m7-1h2v1h-2m7-1h3v1h-3m144-1h2v1h-2m8-1h2v1h-2m5-1h3v1h-3m-171 0h2v1h-2m6-1h1v1h-1m7-1h2v1h-2m3-1h2v1h-2m3-1h1v1h-1m136-1h2v1h-2m3-1h3v1h-3m9-1h2v1h-2m6-1h2v1h-2m-174 0h3v1h-3m6-1h2v1h-2m7-1h2v1h-2m148-1h2v1h-2m7-1h2v1h-2m6-1h2v1h-2m-175 0h3v1h-3m6-1h2v1h-2m8-1h3v1h-3m4-1h2v1h-2m140-1h2v1h-2m3-1h2v1h-2m3-1h1v1h-1m6-1h2v1h-2m6-1h2v1h-2m-176 0h3v1h-3m6-1h2v1h-2m7-1h2v1h-2m5-1h1v1h-1m141-1h1v1h-1m4-1h3v1h-3m8-1h1v1h-1m5-1h2v1h-2m-177 0h3v1h-3m6-1h2v1h-2m7-1h4v1h-4m5-1h1v1h-1m144-1h5v1h-5m10-1h2v1h-2m5-1h3v1h-3m-177 0h3v1h-3m6-1h1v1h-1m7-1h1v1h-1m4-1h1v1h-1m2-1h1v1h-1m142-1h2v1h-2m5-1h2v1h-2m7-1h1v1h-1m5-1h2v1h-2m-179 0h3v1h-3m6-1h2v1h-2m7-1h3v1h-3m4-1h1v1h-1m148-1h4v1h-4m9-1h2v1h-2m5-1h3v1h-3m-179 0h3v1h-3m6-1h2v1h-2m7-1h1v1h-1m4-1h1v1h-1m2-1h1v1h-1m143-1h1v1h-1m2-1h1v1h-1m4-1h2v1h-2m7-1h1v1h-1m4-1h3v1h-3m-179 0h3v1h-3m6-1h1v1h-1m6-1h2v1h-2m3-1h2v1h-2m151-1h4v1h-4m9-1h2v1h-2m4-1h4v1h-4m-180 0h4v1h-4m7-1h1v1h-1m6-1h2v1h-2m3-1h1v1h-1m2-1h2v1h-2m146-1h1v1h-1m2-1h2v1h-2m4-1h1v1h-1m6-1h1v1h-1m6-1h2v1h-2m-182 0h4v1h-4m6-1h2v1h-2m6-1h4v1h-4m156-1h1v1h-1m2-1h2v1h-2m7-1h1v1h-1m3-1h2v1h-2m3-1h1v1h-1m-183 0h2v1h-2m6-1h1v1h-1m6-1h2v1h-2m4-1h2v1h-2m3-1h1v1h-1m145-1h1v1h-1m2-1h1v1h-1m2-1h1v1h-1m2-1h2v1h-2m7-1h1v1h-1m5-1h3v1h-3m-182 0h1v1h-1m2-1h2v1h-2m10-1h3v1h-3m157-1h4v1h-4m8-1h1v1h-1m3-1h2v1h-2m3-1h1v1h-1m-184 0h4v1h-4m7-1h1v1h-1m6-1h2v1h-2m3-1h1v1h-1m2-1h1v1h-1m2-1h1v1h-1m146-1h2v1h-2m3-1h1v1h-1m3-1h1v1h-1m6-1h1v1h-1m5-1h3v1h-3m-183 0h2v1h-2m3-1h1v1h-1m4-1h1v1h-1m5-1h1v1h-1m2-1h2v1h-2m5-1h1v1h-1m147-1h1v1h-1m4-1h2v1h-2m3-1h1v1h-1m5-1h1v1h-1m4-1h1v1h-1m2-1h2v1h-2m-184 0h1v1h-1m2-1h2v1h-2m4-1h2v1h-2m7-1h1v1h-1m3-1h1v1h-1m2-1h1v1h-1m150-1h2v1h-2m4-1h2v1h-2m6-1h2v1h-2m5-1h3v1h-3m-183 0h2v1h-2m3-1h1v1h-1m4-1h1v1h-1m5-1h1v1h-1m2-1h2v1h-2m5-1h1v1h-1m147-1h1v1h-1m4-1h2v1h-2m3-1h1v1h-1m9-1h1v1h-1m2-1h1v1h-1m2-1h1v1h-1m-186 0h1v1h-1m2-1h2v1h-2m4-1h2v1h-2m6-1h2v1h-2m4-1h1v1h-1m2-1h1v1h-1m150-1h2v1h-2m4-1h2v1h-2m6-1h2v1h-2m4-1h2v1h-2m3-1h1v1h-1m-186 0h4v1h-4m13-1h1v1h-1m2-1h2v1h-2m6-1h1v1h-1m146-1h1v1h-1m4-1h2v1h-2m3-1h1v1h-1m5-1h1v1h-1m6-1h1v1h-1m2-1h1v1h-1m-186 0h2v1h-2m3-1h2v1h-2m3-1h2v1h-2m6-1h2v1h-2m4-1h1v1h-1m2-1h1v1h-1m149-1h1v1h-1m2-1h1v1h-1m3-1h2v1h-2m6-1h2v1h-2m4-1h4v1h-4m-182 0h3v1h-3m12-1h1v1h-1m2-1h2v1h-2m4-1h1v1h-1m2-1h1v1h-1m145-1h1v1h-1m2-1h1v1h-1m3-1h2v1h-2m3-1h1v1h-1m10-1h4v1h-4m-184 0h1v1h-1m2-1h1v1h-1m2-1h2v1h-2m3-1h2v1h-2m7-1h1v1h-1m2-1h1v1h-1m2-1h1v1h-1m152-1h2v1h-2m3-1h2v1h-2m6-1h5v1h-5m6-1h3v1h-3m-184 0h1v1h-1m2-1h2v1h-2m10-1h1v1h-1m2-1h1v1h-1m5-1h2v1h-2m146-1h1v1h-1m2-1h1v1h-1m4-1h1v1h-1m2-1h1v1h-1m9-1h2v1h-2m3-1h1v1h-1m-185 0h3v1h-3m4-1h1v1h-1m2-1h3v1h-3m7-1h2v1h-2m3-1h2v1h-2m5-1h1v1h-1m143-1h1v1h-1m4-1h2v1h-2m4-1h1v1h-1m5-1h2v1h-2m4-1h1v1h-1m3-1h1v1h-1m2-1h1v1h-1m-185 0h1v1h-1m2-1h2v1h-2m9-1h1v1h-1m3-1h1v1h-1m4-1h1v1h-1m147-1h1v1h-1m5-1h1v1h-1m2-1h1v1h-1m9-1h1v1h-1m2-1h2v1h-2m-184 0h1v1h-1m2-1h2v1h-2m3-1h1v1h-1m2-1h3v1h-3m5-1h3v1h-3m5-1h2v1h-2m5-1h1v1h-1m142-1h1v1h-1m4-1h2v1h-2m3-1h3v1h-3m6-1h2v1h-2m4-1h1v1h-1m2-1h1v1h-1m2-1h1v1h-1m-184 0h2v1h-2m3-1h1v1h-1m3-1h1v1h-1m6-1h1v1h-1m2-1h1v1h-1m5-1h1v1h-1m145-1h1v1h-1m5-1h1v1h-1m2-1h1v1h-1m6-1h1v1h-1m3-1h2v1h-2m3-1h1v1h-1m-183 0h1v1h-1m2-1h1v1h-1m3-1h1v1h-1m7-1h3v1h-3m4-1h1v1h-1m2-1h1v1h-1m3-1h1v1h-1m141-1h1v1h-1m4-1h2v1h-2m4-1h1v1h-1m2-1h1v1h-1m9-1h1v1h-1m2-1h1v1h-1m-183 0h3v1h-3m4-1h2v1h-2m3-1h2v1h-2m6-1h1v1h-1m2-1h1v1h-1m3-1h1v1h-1m2-1h1v1h-1m144-1h2v1h-2m4-1h1v1h-1m3-1h1v1h-1m4-1h2v1h-2m4-1h1v1h-1m3-1h1v1h-1m2-1h1v1h-1m-183 0h1v1h-1m2-1h2v1h-2m3-1h1v1h-1m6-1h1v1h-1m2-1h1v1h-1m3-1h1v1h-1m5-1h1v1h-1m139-1h1v1h-1m5-1h1v1h-1m3-1h3v1h-3m11-1h1v1h-1m2-1h2v1h-2m-182 0h1v1h-1m3-1h1v1h-1m2-1h2v1h-2m3-1h2v1h-2m5-1h1v1h-1m3-1h1v1h-1m3-1h1v1h-1m2-1h1v1h-1m141-1h1v1h-1m2-1h1v1h-1m3-1h1v1h-1m3-1h1v1h-1m4-1h5v1h-5m6-1h2v1h-2m3-1h1v1h-1m-181 0h1v1h-1m2-1h2v1h-2m3-1h1v1h-1m6-1h1v1h-1m2-1h1v1h-1m3-1h1v1h-1m4-1h1v1h-1m2-1h1v1h-1m136-1h2v1h-2m5-1h1v1h-1m3-1h3v1h-3m8-1h1v1h-1m2-1h2v1h-2m3-1h2v1h-2m-180 0h1v1h-1m3-1h1v1h-1m3-1h1v1h-1m2-1h1v1h-1m2-1h1v1h-1m3-1h1v1h-1m2-1h2v1h-2m5-1h1v1h-1m4-1h1v1h-1m134-1h1v1h-1m4-1h1v1h-1m3-1h2v1h-2m3-1h1v1h-1m4-1h5v1h-5m6-1h2v1h-2m3-1h1v1h-1m-179 0h1v1h-1m3-1h1v1h-1m2-1h1v1h-1m4-1h1v1h-1m4-1h1v1h-1m3-1h1v1h-1m4-1h1v1h-1m137-1h1v1h-1m4-1h1v1h-1m4-1h1v1h-1m7-1h1v1h-1m2-1h1v1h-1m3-1h1v1h-1m-178 0h2v1h-2m3-1h2v1h-2m3-1h3v1h-3m4-1h1v1h-1m3-1h1v1h-1m3-1h1v1h-1m4-1h1v1h-1m4-1h1v1h-1m131-1h1v1h-1m4-1h1v1h-1m4-1h2v1h-2m3-1h1v1h-1m3-1h5v1h-5m7-1h2v1h-2m3-1h1v1h-1m-177 0h1v1h-1m3-1h2v1h-2m3-1h1v1h-1m7-1h1v1h-1m3-1h2v1h-2m5-1h1v1h-1m134-1h1v1h-1m4-1h2v1h-2m3-1h1v1h-1m8-1h1v1h-1m2-1h1v1h-1m3-1h1v1h-1m-175 0h1v1h-1m3-1h1v1h-1m2-1h3v1h-3m4-1h1v1h-1m3-1h2v1h-2m3-1h1v1h-1m4-1h1v1h-1m5-1h1v1h-1m128-1h1v1h-1m4-1h1v1h-1m4-1h1v1h-1m3-1h1v1h-1m3-1h1v1h-1m2-1h3v1h-3m4-1h2v1h-2m3-1h2v1h-2m-176 0h1v1h-1m3-1h1v1h-1m3-1h3v1h-3m9-1h1v1h-1m3-1h2v1h-2m4-1h2v1h-2m4-1h1v1h-1m125-1h1v1h-1m3-1h2v1h-2m4-1h2v1h-2m4-1h1v1h-1m3-1h1v1h-1m4-1h1v1h-1m2-1h1v1h-1m3-1h1v1h-1m3-1h1v1h-1m-175 0h2v1h-2m3-1h2v1h-2m3-1h3v1h-3m4-1h1v1h-1m3-1h1v1h-1m3-1h1v1h-1m3-1h1v1h-1m4-1h1v1h-1m127-1h1v1h-1m4-1h1v1h-1m4-1h1v1h-1m2-1h1v1h-1m3-1h1v1h-1m2-1h4v1h-4m5-1h1v1h-1m3-1h1v1h-1m-173 0h1v1h-1m3-1h1v1h-1m3-1h1v1h-1m2-1h1v1h-1m4-1h1v1h-1m3-1h1v1h-1m3-1h1v1h-1m4-1h1v1h-1m4-1h1v1h-1m121-1h1v1h-1m5-1h1v1h-1m3-1h1v1h-1m3-1h2v1h-2m8-1h2v1h-2m5-1h1v1h-1m2-1h1v1h-1m-171 0h1v1h-1m3-1h6v1h-6m7-1h1v1h-1m2-1h1v1h-1m3-1h1v1h-1m4-1h1v1h-1m4-1h1v1h-1m123-1h1v1h-1m5-1h1v1h-1m3-1h1v1h-1m3-1h1v1h-1m3-1h1v1h-1m2-1h3v1h-3m4-1h1v1h-1m3-1h1v1h-1m-169 0h1v1h-1m3-1h1v1h-1m3-1h2v1h-2m6-1h1v1h-1m2-1h2v1h-2m4-1h1v1h-1m4-1h1v1h-1m4-1h1v1h-1m117-1h1v1h-1m5-1h1v1h-1m4-1h1v1h-1m3-1h1v1h-1m7-1h2v1h-2m5-1h1v1h-1m2-1h2v1h-2m-167 0h1v1h-1m3-1h3v1h-3m4-1h1v1h-1m3-1h1v1h-1m2-1h1v1h-1m3-1h1v1h-1m4-1h1v1h-1m3-1h2v1h-2m4-1h1v1h-1m113-1h1v1h-1m3-1h1v1h-1m2-1h1v1h-1m3-1h1v1h-1m3-1h2v1h-2m3-1h1v1h-1m3-1h1v1h-1m2-1h3v1h-3m4-1h1v1h-1m3-1h1v1h-1m-166 0h2v1h-2m4-1h1v1h-1m3-1h2v1h-2m8-1h1v1h-1m3-1h2v1h-2m4-1h1v1h-1m4-1h1v1h-1m115-1h1v1h-1m5-1h1v1h-1m3-1h1v1h-1m3-1h1v1h-1m2-1h1v1h-1m5-1h2v1h-2m4-1h2v1h-2m4-1h1v1h-1m-164 0h1v1h-1m3-1h3v1h-3m4-1h1v1h-1m3-1h1v1h-1m5-1h1v1h-1m3-1h1v1h-1m4-1h1v1h-1m5-1h1v1h-1m108-1h1v1h-1m4-1h1v1h-1m4-1h1v1h-1m4-1h1v1h-1m2-1h1v1h-1m2-1h1v1h-1m3-1h2v1h-2m3-1h2v1h-2m4-1h1v1h-1m-162 0h2v1h-2m4-1h1v1h-1m3-1h2v1h-2m8-1h1v1h-1m3-1h1v1h-1m4-1h1v1h-1m4-1h1v1h-1m4-1h1v1h-1m103-1h1v1h-1m4-1h1v1h-1m4-1h1v1h-1m4-1h1v1h-1m3-1h1v1h-1m5-1h1v1h-1m2-1h2v1h-2m4-1h2v1h-2m4-1h1v1h-1m-160 0h1v1h-1m4-1h2v1h-2m3-1h2v1h-2m3-1h1v1h-1m3-1h1v1h-1m2-1h1v1h-1m3-1h1v1h-1m4-1h1v1h-1m4-1h1v1h-1m4-1h1v1h-1m98-1h1v1h-1m3-1h1v1h-1m4-1h1v1h-1m4-1h1v1h-1m4-1h1v1h-1m4-1h1v1h-1m3-1h1v1h-1m3-1h2v1h-2m4-1h1v1h-1m-157 0h1v1h-1m3-1h1v1h-1m4-1h1v1h-1m3-1h1v1h-1m3-1h2v1h-2m5-1h1v1h-1m3-1h1v1h-1m4-1h1v1h-1m107-1h1v1h-1m4-1h1v1h-1m4-1h1v1h-1m3-1h1v1h-1m2-1h1v1h-1m5-1h2v1h-2m4-1h1v1h-1m4-1h1v1h-1m-159 0h1v1h-1m3-1h2v1h-2m4-1h2v1h-2m4-1h1v1h-1m3-1h1v1h-1m4-1h1v1h-1m3-1h2v1h-2m4-1h1v1h-1m5-1h1v1h-1m3-1h1v1h-1m93-1h1v1h-1m4-1h1v1h-1m4-1h1v1h-1m4-1h1v1h-1m3-1h2v1h-2m5-1h1v1h-1m2-1h2v1h-2m3-1h2v1h-2m5-1h1v1h-1m3-1h1v1h-1m-156 0h1v1h-1m3-1h2v1h-2m4-1h2v1h-2m3-1h2v1h-2m3-1h1v1h-1m2-1h1v1h-1m2-1h1v1h-1m4-1h1v1h-1m5-1h1v1h-1m3-1h1v1h-1m4-1h1v1h-1m87-1h1v1h-1m4-1h1v1h-1m4-1h1v1h-1m4-1h1v1h-1m4-1h1v1h-1m3-1h2v1h-2m3-1h2v1h-2m4-1h1v1h-1m4-1h1v1h-1m3-1h1v1h-1m-153 0h1v1h-1m3-1h1v1h-1m3-1h2v1h-2m4-1h2v1h-2m3-1h1v1h-1m4-1h1v1h-1m4-1h1v1h-1m4-1h1v1h-1m3-1h1v1h-1m4-1h1v1h-1m4-1h1v1h-1m82-1h1v1h-1m3-1h1v1h-1m4-1h1v1h-1m4-1h1v1h-1m4-1h1v1h-1m3-1h1v1h-1m4-1h1v1h-1m2-1h2v1h-2m5-1h1v1h-1m3-1h1v1h-1m3-1h1v1h-1m-150 0h1v1h-1m3-1h1v1h-1m4-1h1v1h-1m3-1h2v1h-2m3-1h2v1h-2m4-1h1v1h-1m4-1h1v1h-1m3-1h1v1h-1m4-1h1v1h-1m4-1h1v1h-1m3-1h1v1h-1m77-1h1v1h-1m4-1h1v1h-1m3-1h1v1h-1m4-1h1v1h-1m3-1h1v1h-1m4-1h1v1h-1m3-1h2v1h-2m3-1h2v1h-2m4-1h2v1h-2m4-1h1v1h-1m4-1h1v1h-1m-149 0h1v1h-1m4-1h1v1h-1m3-1h2v1h-2m4-1h2v1h-2m3-1h1v1h-1m3-1h2v1h-2m4-1h1v1h-1m4-1h1v1h-1m3-1h1v1h-1m4-1h1v1h-1m4-1h1v1h-1m3-1h1v1h-1m71-1h1v1h-1m4-1h1v1h-1m4-1h1v1h-1m3-1h1v1h-1m4-1h1v1h-1m3-1h1v1h-1m3-1h2v1h-2m4-1h1v1h-1m3-1h2v1h-2m4-1h1v1h-1m3-1h2v1h-2m4-1h1v1h-1m-146 0h1v1h-1m4-1h1v1h-1m4-1h1v1h-1m3-1h2v1h-2m3-1h1v1h-1m4-1h1v1h-1m3-1h1v1h-1m4-1h1v1h-1m10-1h1v1h-1m4-1h1v1h-1m65-1h1v1h-1m4-1h1v1h-1m11-1h1v1h-1m3-1h1v1h-1m7-1h1v1h-1m2-1h3v1h-3m4-1h2v1h-2m4-1h1v1h-1m4-1h1v1h-1m-143 0h1v1h-1m3-1h2v1h-2m4-1h2v1h-2m4-1h1v1h-1m3-1h2v1h-2m3-1h2v1h-2m4-1h1v1h-1m3-1h1v1h-1m4-1h1v1h-1m4-1h1v1h-1m6-1h1v1h-1m4-1h1v1h-1m59-1h1v1h-1m4-1h1v1h-1m7-1h1v1h-1m3-1h1v1h-1m4-1h1v1h-1m7-1h1v1h-1m2-1h2v1h-2m4-1h2v1h-2m4-1h1v1h-1m4-1h1v1h-1m3-1h1v1h-1m-140 0h1v1h-1m4-1h1v1h-1m3-1h2v1h-2m4-1h2v1h-2m3-1h1v1h-1m3-1h1v1h-1m4-1h1v1h-1m3-1h1v1h-1m4-1h1v1h-1m4-1h1v1h-1m3-1h1v1h-1m3-1h1v1h-1m4-1h1v1h-1m3-1h1v1h-1m47-1h1v1h-1m3-1h1v1h-1m4-1h1v1h-1m4-1h1v1h-1m3-1h1v1h-1m3-1h1v1h-1m4-1h1v1h-1m4-1h1v1h-1m3-1h1v1h-1m3-1h1v1h-1m2-1h3v1h-3m4-1h2v1h-2m4-1h2v1h-2m4-1h1v1h-1m-134 0h1v1h-1m4-1h1v1h-1m3-1h3v1h-3m4-1h2v1h-2m3-1h1v1h-1m4-1h1v1h-1m3-1h1v1h-1m3-1h1v1h-1m4-1h1v1h-1m7-1h1v1h-1m3-1h1v1h-1m7-1h1v1h-1m3-1h1v1h-1m35-1h1v1h-1m3-1h1v1h-1m7-1h1v1h-1m4-1h1v1h-1m6-1h1v1h-1m4-1h1v1h-1m3-1h2v1h-2m7-1h1v1h-1m2-1h2v1h-2m4-1h2v1h-2m4-1h1v1h-1m4-1h1v1h-1m-131 0h1v1h-1m4-1h1v1h-1m4-1h1v1h-1m3-1h2v1h-2m3-1h1v1h-1m2-1h3v1h-3m8-1h1v1h-1m4-1h1v1h-1m3-1h1v1h-1m7-1h1v1h-1m4-1h1v1h-1m3-1h1v1h-1m6-1h1v1h-1m4-1h1v1h-1m3-1h1v1h-1m3-1h1v1h-1m3-1h1v1h-1m3-1h1v1h-1m3-1h1v1h-1m4-1h1v1h-1m3-1h1v1h-1m3-1h1v1h-1m7-1h1v1h-1m3-1h1v1h-1m3-1h1v1h-1m7-1h1v1h-1m4-1h1v1h-1m3-1h1v1h-1m7-1h1v1h-1m2-1h2v1h-2m3-1h3v1h-3m4-1h1v1h-1m4-1h1v1h-1m4-1h1v1h-1m-128 0h2v1h-2m4-1h2v1h-2m3-1h2v1h-2m4-1h4v1h-4m7-1h1v1h-1m6-1h1v1h-1m4-1h1v1h-1m3-1h1v1h-1m3-1h1v1h-1m4-1h1v1h-1m3-1h1v1h-1m4-1h1v1h-1m3-1h1v1h-1m3-1h1v1h-1m23-1h1v1h-1m3-1h1v1h-1m3-1h1v1h-1m4-1h1v1h-1m3-1h1v1h-1m4-1h1v1h-1m3-1h1v1h-1m4-1h1v1h-1m3-1h1v1h-1m7-1h1v1h-1m3-1h1v1h-1m2-1h2v1h-2m4-1h2v1h-2m4-1h1v1h-1m4-1h1v1h-1m-125 0h1v1h-1m4-1h1v1h-1m4-1h1v1h-1m3-1h2v1h-2m3-1h1v1h-1m2-1h1v1h-1m2-1h1v1h-1m3-1h1v1h-1m6-1h1v1h-1m4-1h1v1h-1m3-1h1v1h-1m4-1h1v1h-1m7-1h1v1h-1m3-1h1v1h-1m7-1h1v1h-1m3-1h1v1h-1m3-1h1v1h-1m3-1h1v1h-1m4-1h1v1h-1m3-1h1v1h-1m7-1h1v1h-1m3-1h1v1h-1m7-1h1v1h-1m3-1h1v1h-1m3-1h1v1h-1m4-1h1v1h-1m4-1h1v1h-1m2-1h1v1h-1m4-1h4v1h-4m5-1h3v1h-3m4-1h1v1h-1m4-1h1v1h-1m4-1h1v1h-1m-121 0h1v1h-1m4-1h1v1h-1m3-1h2v1h-2m3-1h3v1h-3m4-1h4v1h-4m7-1h1v1h-1m5-1h2v1h-2m4-1h1v1h-1m3-1h1v1h-1m4-1h1v1h-1m3-1h1v1h-1m7-1h1v1h-1m3-1h1v1h-1m4-1h1v1h-1m3-1h1v1h-1m3-1h1v1h-1m4-1h1v1h-1m3-1h1v1h-1m3-1h1v1h-1m7-1h1v1h-1m3-1h1v1h-1m4-1h1v1h-1m4-1h1v1h-1m3-1h1v1h-1m4-1h1v1h-1m2-1h1v1h-1m3-1h1v1h-1m2-1h1v1h-1m2-1h1v1h-1m2-1h2v1h-2m4-1h1v1h-1m4-1h1v1h-1m4-1h1v1h-1m-118 0h1v1h-1m3-1h1v1h-1m4-1h1v1h-1m3-1h2v1h-2m3-1h1v1h-1m2-1h1v1h-1m2-1h1v1h-1m2-1h3v1h-3m5-1h1v1h-1m2-1h1v1h-1m4-1h1v1h-1m3-1h1v1h-1m4-1h1v1h-1m3-1h1v1h-1m4-1h1v1h-1m3-1h1v1h-1m3-1h1v1h-1m4-1h1v1h-1m3-1h1v1h-1m3-1h1v1h-1m4-1h1v1h-1m3-1h1v1h-1m3-1h1v1h-1m4-1h1v1h-1m3-1h1v1h-1m4-1h1v1h-1m3-1h1v1h-1m4-1h1v1h-1m3-1h1v1h-1m2-1h1v1h-1m2-1h1v1h-1m2-1h2v1h-2m3-1h1v1h-1m2-1h1v1h-1m2-1h1v1h-1m2-1h2v1h-2m4-1h1v1h-1m4-1h1v1h-1m4-1h1v1h-1m-115 0h1v1h-1m4-1h1v1h-1m4-1h1v1h-1m2-1h1v1h-1m2-1h1v1h-1m2-1h1v1h-1m2-1h2v1h-2m4-1h2v1h-2m3-1h1v1h-1m2-1h2v1h-2m5-1h1v1h-1m3-1h1v1h-1m4-1h1v1h-1m3-1h1v1h-1m4-1h1v1h-1m3-1h1v1h-1m4-1h1v1h-1m10-1h1v1h-1m3-1h1v1h-1m4-1h1v1h-1m3-1h1v1h-1m4-1h1v1h-1m3-1h1v1h-1m3-1h1v1h-1m4-1h1v1h-1m5-1h1v1h-1m2-1h1v1h-1m2-1h4v1h-4m6-1h2v1h-2m3-1h2v1h-2m4-1h2v1h-2m4-1h1v1h-1m-107 0h1v1h-1m3-1h1v1h-1m4-1h1v1h-1m3-1h2v1h-2m3-1h1v1h-1m2-1h1v1h-1m2-1h1v1h-1m2-1h6v1h-6m7-1h1v1h-1m3-1h1v1h-1m4-1h1v1h-1m3-1h1v1h-1m4-1h1v1h-1m3-1h1v1h-1m3-1h1v1h-1m4-1h1v1h-1m3-1h1v1h-1m4-1h1v1h-1m3-1h1v1h-1m4-1h1v1h-1m3-1h1v1h-1m4-1h1v1h-1m3-1h1v1h-1m4-1h4v1h-4m5-1h2v1h-2m3-1h1v1h-1m2-1h1v1h-1m2-1h1v1h-1m2-1h1v1h-1m2-1h1v1h-1m2-1h1v1h-1m4-1h1v1h-1m4-1h1v1h-1m-105 0h1v1h-1m4-1h1v1h-1m4-1h1v1h-1m4-1h1v1h-1m2-1h1v1h-1m2-1h1v1h-1m2-1h1v1h-1m2-1h2v1h-2m4-1h2v1h-2m3-1h4v1h-4m7-1h1v1h-1m3-1h1v1h-1m7-1h1v1h-1m10-1h1v1h-1m7-1h1v1h-1m4-1h1v1h-1m3-1h1v1h-1m4-1h1v1h-1m3-1h1v1h-1m3-1h4v1h-4m6-1h2v1h-2m4-1h2v1h-2m3-1h1v1h-1m2-1h1v1h-1m4-1h1v1h-1m4-1h1v1h-1m4-1h1v1h-1m-101 0h1v1h-1m4-1h1v1h-1m4-1h1v1h-1m4-1h1v1h-1m2-1h1v1h-1m2-1h2v1h-2m4-1h2v1h-2m4-1h2v1h-2m3-1h3v1h-3m4-1h3v1h-3m5-1h1v1h-1m4-1h1v1h-1m10-1h1v1h-1m7-1h1v1h-1m4-1h1v1h-1m3-1h3v1h-3m4-1h3v1h-3m5-1h2v1h-2m3-1h1v1h-1m2-1h1v1h-1m2-1h1v1h-1m2-1h1v1h-1m2-1h3v1h-3m5-1h2v1h-2m4-1h1v1h-1m4-1h1v1h-1m-93 0h1v1h-1m4-1h1v1h-1m3-1h2v1h-2m4-1h1v1h-1m2-1h1v1h-1m2-1h1v1h-1m2-1h1v1h-1m2-1h3v1h-3m4-1h2v1h-2m4-1h2v1h-2m4-1h2v1h-2m4-1h2v1h-2m4-1h1v1h-1m4-1h1v1h-1m3-1h2v1h-2m4-1h1v1h-1m3-1h2v1h-2m5-1h1v1h-1m3-1h2v1h-2m4-1h2v1h-2m4-1h2v1h-2m3-1h3v1h-3m4-1h1v1h-1m2-1h1v1h-1m4-1h1v1h-1m4-1h1v1h-1m4-1h1v1h-1m-87 0h1v1h-1m4-1h1v1h-1m4-1h1v1h-1m4-1h1v1h-1m2-1h1v1h-1m2-1h2v1h-2m4-1h2v1h-2m4-1h2v1h-2m4-1h2v1h-2m4-1h1v1h-1m4-1h1v1h-1m4-1h1v1h-1m4-1h1v1h-1m3-1h2v1h-2m4-1h1v1h-1m4-1h1v1h-1m3-1h2v1h-2m4-1h2v1h-2m4-1h2v1h-2m4-1h2v1h-2m5-1h1v1h-1m4-1h1v1h-1m4-1h1v1h-1m-79 0h1v1h-1m4-1h1v1h-1m4-1h1v1h-1m4-1h2v1h-2m4-1h2v1h-2m4-1h2v1h-2m4-1h2v1h-2m4-1h1v1h-1m4-1h1v1h-1m4-1h1v1h-1m4-1h1v1h-1m3-1h2v1h-2m4-1h2v1h-2m4-1h1v1h-1m4-1h1v1h-1m3-1h2v1h-2m4-1h2v1h-2m5-1h1v1h-1m4-1h1v1h-1m4-1h1v1h-1m-75 0h1v1h-1m4-1h1v1h-1m4-1h1v1h-1m4-1h1v1h-1m4-1h1v1h-1m4-1h2v1h-2m4-1h1v1h-1m4-1h1v1h-1m4-1h1v1h-1m4-1h1v1h-1m4-1h1v1h-1m3-1h2v1h-2m4-1h2v1h-2m4-1h2v1h-2m4-1h2v1h-2m4-1h1v1h-1m4-1h1v1h-1m4-1h1v1h-1m4-1h2v1h-2m4-1h1v1h-1m-67 0h1v1h-1m4-1h1v1h-1m4-1h1v1h-1m4-1h1v1h-1m4-1h1v1h-1m4-1h1v1h-1m4-1h1v1h-1m4-1h1v1h-1m4-1h1v1h-1m3-1h2v1h-2m5-1h1v1h-1m4-1h1v1h-1m4-1h1v1h-1m4-1h1v1h-1m4-1h1v1h-1m4-1h1v1h-1m-56 0h1v1h-1m4-1h1v1h-1m4-1h1v1h-1m4-1h1v1h-1m4-1h1v1h-1m4-1h1v1h-1m4-1h1v1h-1m4-1h1v1h-1m4-1h1v1h-1m4-1h1v1h-1m4-1h1v1h-1m4-1h1v1h-1m4-1h1v1h-1m4-1h1v1h-1m-48 0h1v1h-1m4-1h1v1h-1m4-1h1v1h-1m4-1h1v1h-1m4-1h1v1h-1m4-1h1v1h-1m4-1h1v1h-1m4-1h1v1h-1m4-1h1v1h-1m4-1h1v1h-1m4-1h1v1h-1m4-1h1v1h-1m-36 0h1v1h-1m4-1h1v1h-1m4-1h1v1h-1m4-1h1v1h-1m4-1h1v1h-1m4-1h1v1h-1m4-1h1v1h-1m4-1h1v1h-1"/><path class="pl" fill="#f0ba36" d="M376 108h1v1h-1m4-1h1v1h-1m4-1h1v1h-1m4-1h1v1h-1m4-1h1v1h-1m3-1h1v1h-1m4-1h1v1h-1m4-1h1v1h-1m-34 0h1v1h-1m3-1h2v1h-2m4-1h2v1h-2m4-1h1v1h-1m19-1h1v1h-1m4-1h1v1h-1m4-1h1v1h-1m3-1h2v1h-2m-45 0h1v1h-1m4-1h1v1h-1m38-1h1v1h-1m3-1h1v1h-1m4-1h1v1h-1m-56 0h1v1h-1m3-1h2v1h-2m4-1h1v1h-1m53-1h1v1h-1m4-1h1v1h-1m-68 0h1v1h-1m4-1h1v1h-1m63-1h1v1h-1m4-1h1v1h-1m-75 0h2v1h-2m4-1h2v1h-2m4-1h1v1h-1m63-1h1v1h-1m3-1h2v1h-2m4-1h2v1h-2m-81 0h1v1h-1m4-1h1v1h-1m77-1h1v1h-1m4-1h2v1h-2m-89 0h2v1h-2m4-1h2v1h-2m84-1h2v1h-2m5-1h1v1h-1m-92 0h1v1h-1m91-1h2v1h-2m-95 0h2v1h-2m5-1h1v1h-1m90-1h1v1h-1m3-1h2v1h-2m-101 0h2v1h-2m4-1h1v1h-1m35-1h1v1h-1m28-1h1v1h-1m34-1h1v1h-1m4-1h2v1h-2m-104 0h1v1h-1m32-1h1v1h-1m3-1h1v1h-1m34-1h1v1h-1m3-1h1v1h-1m31-1h2v1h-2m-108 0h3v1h-3m34-1h1v1h-1m3-1h1v1h-1m39-1h1v1h-1m4-1h1v1h-1m32-1h2v1h-2m-115 0h2v1h-2m5-1h1v1h-1m26-1h1v1h-1m3-1h1v1h-1m3-1h2v1h-2m4-1h1v1h-1m40-1h2v1h-2m4-1h2v1h-2m4-1h1v1h-1m25-1h1v1h-1m4-1h2v1h-2m-117 0h2v1h-2m27-1h1v1h-1m4-1h1v1h-1m3-1h1v1h-1m4-1h1v1h-1m42-1h1v1h-1m3-1h1v1h-1m4-1h1v1h-1m3-1h1v1h-1m26-1h2v1h-2m-120 0h3v1h-3m28-1h1v1h-1m4-1h2v1h-2m3-1h2v1h-2m4-1h1v1h-1m3-1h1v1h-1m44-1h1v1h-1m3-1h2v1h-2m4-1h2v1h-2m4-1h1v1h-1m27-1h2v1h-2m-122 0h1v1h-1m23-1h2v1h-2m4-1h2v1h-2m5-1h1v1h-1m3-1h1v1h-1m3-1h1v1h-1m45-1h1v1h-1m3-1h1v1h-1m4-1h1v1h-1m3-1h2v1h-2m4-1h2v1h-2m24-1h2v1h-2m-126 0h3v1h-3m26-1h2v1h-2m4-1h1v1h-1m4-1h1v1h-1m4-1h1v1h-1m3-1h1v1h-1m47-1h1v1h-1m2-1h1v1h-1m4-1h1v1h-1m3-1h1v1h-1m4-1h1v1h-1m4-1h2v1h-2m24-1h3v1h-3m-131 0h1v1h-1m4-1h1v1h-1m21-1h1v1h-1m5-1h1v1h-1m4-1h1v1h-1m3-1h1v1h-1m4-1h1v1h-1m3-1h1v1h-1m47-1h1v1h-1m3-1h1v1h-1m4-1h1v1h-1m4-1h1v1h-1m3-1h1v1h-1m5-1h1v1h-1m21-1h1v1h-1m4-1h2v1h-2m-134 0h1v1h-1m21-1h1v1h-1m4-1h2v1h-2m5-1h1v1h-1m4-1h2v1h-2m3-1h1v1h-1m4-1h1v1h-1m51-1h1v1h-1m4-1h1v1h-1m2-1h2v1h-2m5-1h1v1h-1m4-1h2v1h-2m5-1h1v1h-1m21-1h2v1h-2m-137 0h2v1h-2m27-1h2v1h-2m5-1h1v1h-1m3-1h1v1h-1m2-1h1v1h-1m3-1h1v1h-1m3-1h1v1h-1m3-1h1v1h-1m49-1h1v1h-1m4-1h1v1h-1m2-1h1v1h-1m4-1h2v1h-2m5-1h1v1h-1m3-1h1v1h-1m2-1h1v1h-1m25-1h2v1h-2m-139 0h2v1h-2m22-1h2v1h-2m3-1h1v1h-1m3-1h1v1h-1m4-1h1v1h-1m2-1h1v1h-1m3-1h1v1h-1m4-1h1v1h-1m2-1h1v1h-1m3-1h1v1h-1m47-1h1v1h-1m3-1h1v1h-1m3-1h1v1h-1m3-1h1v1h-1m4-1h2v1h-2m5-1h1v1h-1m4-1h2v1h-2m3-1h1v1h-1m20-1h2v1h-2m-141 0h2v1h-2m22-1h1v1h-1m2-1h1v1h-1m5-1h1v1h-1m4-1h2v1h-2m5-1h1v1h-1m4-1h1v1h-1m3-1h1v1h-1m2-1h1v1h-1m51-1h1v1h-1m2-1h1v1h-1m4-1h1v1h-1m3-1h1v1h-1m4-1h2v1h-2m5-1h1v1h-1m6-1h2v1h-2m22-1h3v1h-3m-143 0h2v1h-2m19-1h1v1h-1m5-1h1v1h-1m2-1h1v1h-1m4-1h2v1h-2m5-1h1v1h-1m4-1h1v1h-1m3-1h1v1h-1m4-1h1v1h-1m2-1h1v1h-1m48-1h1v1h-1m2-1h1v1h-1m3-1h1v1h-1m4-1h1v1h-1m3-1h1v1h-1m4-1h1v1h-1m2-1h1v1h-1m4-1h2v1h-2m6-1h1v1h-1m19-1h1v1h-1m-147 0h3v1h-3m24-1h1v1h-1m2-1h1v1h-1m5-1h1v1h-1m6-1h1v1h-1m4-1h1v1h-1m3-1h1v1h-1m4-1h1v1h-1m3-1h1v1h-1m48-1h2v1h-2m5-1h1v1h-1m3-1h1v1h-1m4-1h1v1h-1m3-1h1v1h-1m6-1h1v1h-1m5-1h1v1h-1m2-1h1v1h-1m22-1h3v1h-3m-147 0h1v1h-1m19-1h2v1h-2m3-1h1v1h-1m4-1h2v1h-2m5-1h1v1h-1m2-1h1v1h-1m4-1h1v1h-1m3-1h1v1h-1m4-1h1v1h-1m3-1h1v1h-1m3-1h1v1h-1m47-1h1v1h-1m3-1h1v1h-1m4-1h1v1h-1m3-1h1v1h-1m4-1h1v1h-1m3-1h1v1h-1m2-1h1v1h-1m4-1h1v1h-1m2-1h1v1h-1m3-1h1v1h-1m2-1h1v1h-1m2-1h1v1h-1m18-1h1v1h-1m-151 0h3v1h-3m21-1h1v1h-1m7-1h2v1h-2m5-1h1v1h-1m2-1h1v1h-1m4-1h1v1h-1m3-1h1v1h-1m2-1h1v1h-1m2-1h1v1h-1m2-1h2v1h-2m5-1h1v1h-1m50-1h1v1h-1m3-1h1v1h-1m2-1h2v1h-2m3-1h1v1h-1m2-1h1v1h-1m4-1h1v1h-1m3-1h1v1h-1m2-1h1v1h-1m4-1h1v1h-1m2-1h1v1h-1m7-1h1v1h-1m18-1h3v1h-3m-151 0h1v1h-1m20-1h1v1h-1m2-1h1v1h-1m2-1h1v1h-1m5-1h1v1h-1m6-1h1v1h-1m4-1h2v1h-2m5-1h1v1h-1m3-1h1v1h-1m2-1h1v1h-1m2-1h2v1h-2m48-1h1v1h-1m2-1h2v1h-2m3-1h1v1h-1m3-1h1v1h-1m4-1h1v1h-1m2-1h1v1h-1m3-1h1v1h-1m6-1h1v1h-1m6-1h2v1h-2m3-1h1v1h-1m20-1h1v1h-1m-154 0h2v1h-2m20-1h2v1h-2m3-1h1v1h-1m6-1h1v1h-1m2-1h1v1h-1m3-1h1v1h-1m2-1h1v1h-1m4-1h1v1h-1m2-1h1v1h-1m3-1h1v1h-1m4-1h1v1h-1m3-1h1v1h-1m3-1h1v1h-1m2-1h1v1h-1m44-1h2v1h-2m4-1h1v1h-1m4-1h1v1h-1m3-1h1v1h-1m3-1h1v1h-1m2-1h1v1h-1m4-1h1v1h-1m2-1h1v1h-1m4-1h1v1h-1m2-1h1v1h-1m5-1h1v1h-1m2-1h1v1h-1m2-1h1v1h-1m18-1h3v1h-3m-155 0h2v1h-2m17-1h1v1h-1m7-1h1v1h-1m2-1h1v1h-1m6-1h1v1h-1m2-1h1v1h-1m3-1h1v1h-1m2-1h1v1h-1m4-1h1v1h-1m3-1h1v1h-1m4-1h1v1h-1m3-1h1v1h-1m3-1h1v1h-1m44-1h1v1h-1m3-1h1v1h-1m3-1h1v1h-1m3-1h1v1h-1m4-1h1v1h-1m3-1h1v1h-1m2-1h1v1h-1m4-1h1v1h-1m2-1h1v1h-1m5-1h1v1h-1m2-1h1v1h-1m7-1h1v1h-1m17-1h1v1h-1m-158 0h3v1h-3m22-1h1v1h-1m2-1h2v1h-2m3-1h1v1h-1m4-1h1v1h-1m2-1h1v1h-1m6-1h1v1h-1m2-1h1v1h-1m3-1h1v1h-1m4-1h1v1h-1m3-1h1v1h-1m2-1h2v1h-2m3-1h2v1h-2m48-1h2v1h-2m3-1h2v1h-2m3-1h1v1h-1m4-1h1v1h-1m3-1h1v1h-1m3-1h1v1h-1m3-1h1v1h-1m5-1h1v1h-1m2-1h1v1h-1m4-1h1v1h-1m2-1h1v1h-1m2-1h1v1h-1m2-1h1v1h-1m20-1h3v1h-3m-158 0h1v1h-1m16-1h1v1h-1m2-1h1v1h-1m2-1h1v1h-1m7-1h1v1h-1m3-1h1v1h-1m3-1h1v1h-1m2-1h1v1h-1m6-1h1v1h-1m3-1h1v1h-1m3-1h2v1h-2m3-1h1v1h-1m3-1h1v1h-1m51-1h1v1h-1m4-1h1v1h-1m2-1h2v1h-2m3-1h1v1h-1m3-1h1v1h-1m6-1h1v1h-1m2-1h1v1h-1m4-1h1v1h-1m2-1h1v1h-1m7-1h1v1h-1m2-1h1v1h-1m2-1h1v1h-1m16-1h2v1h-2m-161 0h3v1h-3m26-1h1v1h-1m2-1h1v1h-1m2-1h1v1h-1m6-1h1v1h-1m2-1h1v1h-1m4-1h1v1h-1m2-1h1v1h-1m3-1h1v1h-1m2-1h1v1h-1m4-1h1v1h-1m3-1h1v1h-1m54-1h1v1h-1m3-1h1v1h-1m3-1h1v1h-1m2-1h1v1h-1m4-1h1v1h-1m2-1h1v1h-1m3-1h1v1h-1m3-1h1v1h-1m5-1h1v1h-1m2-1h1v1h-1m2-1h1v1h-1m24-1h3v1h-3m-161 0h1v1h-1m17-1h1v1h-1m2-1h1v1h-1m2-1h1v1h-1m2-1h1v1h-1m2-1h1v1h-1m5-1h1v1h-1m2-1h1v1h-1m3-1h1v1h-1m3-1h1v1h-1m3-1h1v1h-1m3-1h1v1h-1m2-1h1v1h-1m3-1h1v1h-1m3-1h2v1h-2m57-1h2v1h-2m3-1h1v1h-1m3-1h1v1h-1m2-1h1v1h-1m4-1h1v1h-1m2-1h1v1h-1m4-1h1v1h-1m2-1h1v1h-1m2-1h1v1h-1m6-1h1v1h-1m2-1h1v1h-1m2-1h1v1h-1m2-1h2v1h-2m18-1h1v1h-1m-164 0h3v1h-3m18-1h1v1h-1m2-1h1v1h-1m2-1h1v1h-1m8-1h1v1h-1m2-1h1v1h-1m2-1h1v1h-1m6-1h1v1h-1m2-1h1v1h-1m4-1h1v1h-1m2-1h1v1h-1m3-1h1v1h-1m3-1h1v1h-1m60-1h1v1h-1m2-1h1v1h-1m3-1h1v1h-1m3-1h1v1h-1m3-1h1v1h-1m2-1h1v1h-1m6-1h1v1h-1m2-1h1v1h-1m3-1h1v1h-1m7-1h1v1h-1m2-1h1v1h-1m2-1h1v1h-1m17-1h2v1h-2m-164 0h1v1h-1m22-1h1v1h-1m2-1h1v1h-1m3-1h1v1h-1m2-1h1v1h-1m6-1h1v1h-1m2-1h1v1h-1m2-1h1v1h-1m4-1h1v1h-1m2-1h1v1h-1m2-1h2v1h-2m4-1h1v1h-1m62-1h1v1h-1m2-1h2v1h-2m3-1h1v1h-1m3-1h1v1h-1m3-1h1v1h-1m2-1h1v1h-1m3-1h1v1h-1m5-1h1v1h-1m3-1h1v1h-1m2-1h1v1h-1m2-1h1v1h-1m22-1h2v1h-2m-166 0h2v1h-2m18-1h1v1h-1m2-1h1v1h-1m2-1h1v1h-1m2-1h1v1h-1m2-1h1v1h-1m3-1h1v1h-1m5-1h1v1h-1m3-1h1v1h-1m2-1h1v1h-1m3-1h1v1h-1m3-1h1v1h-1m2-1h1v1h-1m3-1h1v1h-1m3-1h1v1h-1m64-1h1v1h-1m3-1h1v1h-1m2-1h1v1h-1m2-1h1v1h-1m4-1h1v1h-1m2-1h1v1h-1m3-1h1v1h-1m2-1h1v1h-1m6-1h1v1h-1m2-1h1v1h-1m2-1h1v1h-1m2-1h1v1h-1m2-1h1v1h-1m2-1h1v1h-1m17-1h2v1h-2m-168 0h3v1h-3m31-1h1v1h-1m2-1h1v1h-1m3-1h1v1h-1m2-1h1v1h-1m3-1h1v1h-1m3-1h1v1h-1m2-1h1v1h-1m3-1h1v1h-1m3-1h1v1h-1m65-1h1v1h-1m3-1h1v1h-1m3-1h1v1h-1m2-1h1v1h-1m4-1h1v1h-1m2-1h1v1h-1m3-1h1v1h-1m2-1h1v1h-1m2-1h1v1h-1m29-1h2v1h-2m3-1h1v1h-1m-153 0h1v1h-1m2-1h1v1h-1m2-1h1v1h-1m2-1h1v1h-1m2-1h1v1h-1m3-1h1v1h-1m2-1h1v1h-1m2-1h1v1h-1m3-1h1v1h-1m2-1h1v1h-1m6-1h1v1h-1m3-1h1v1h-1m2-1h1v1h-1m3-1h1v1h-1m67-1h2v1h-2m3-1h1v1h-1m3-1h1v1h-1m2-1h1v1h-1m6-1h1v1h-1m2-1h1v1h-1m3-1h1v1h-1m2-1h1v1h-1m3-1h1v1h-1m2-1h1v1h-1m2-1h1v1h-1m2-1h1v1h-1m2-1h1v1h-1m2-1h1v1h-1m-153 0h3v1h-3m17-1h1v1h-1m2-1h1v1h-1m2-1h1v1h-1m2-1h1v1h-1m2-1h1v1h-1m3-1h1v1h-1m2-1h1v1h-1m3-1h1v1h-1m8-1h1v1h-1m3-1h1v1h-1m2-1h1v1h-1m3-1h1v1h-1m2-1h1v1h-1m69-1h1v1h-1m3-1h1v1h-1m2-1h1v1h-1m3-1h1v1h-1m2-1h1v1h-1m9-1h1v1h-1m2-1h1v1h-1m3-1h1v1h-1m2-1h1v1h-1m2-1h1v1h-1m2-1h1v1h-1m2-1h1v1h-1m2-1h1v1h-1m15-1h4v1h-4m-134 0h1v1h-1m3-1h1v1h-1m2-1h1v1h-1m3-1h1v1h-1m3-1h1v1h-1m2-1h1v1h-1m3-1h1v1h-1m70-1h1v1h-1m2-1h1v1h-1m3-1h1v1h-1m2-1h1v1h-1m3-1h1v1h-1m3-1h1v1h-1m2-1h1v1h-1m-137 0h3v1h-3m17-1h1v1h-1m2-1h1v1h-1m2-1h1v1h-1m2-1h1v1h-1m3-1h1v1h-1m2-1h1v1h-1m3-1h1v1h-1m2-1h1v1h-1m3-1h1v1h-1m2-1h1v1h-1m3-1h1v1h-1m2-1h1v1h-1m3-1h1v1h-1m3-1h1v1h-1m2-1h1v1h-1m71-1h1v1h-1m3-1h1v1h-1m2-1h1v1h-1m3-1h1v1h-1m3-1h1v1h-1m2-1h1v1h-1m3-1h1v1h-1m2-1h1v1h-1m3-1h1v1h-1m2-1h1v1h-1m3-1h1v1h-1m2-1h1v1h-1m2-1h1v1h-1m2-1h1v1h-1m2-1h1v1h-1m15-1h4v1h-4m-148 0h1v1h-1m2-1h1v1h-1m3-1h1v1h-1m2-1h1v1h-1m3-1h1v1h-1m2-1h1v1h-1m3-1h1v1h-1m2-1h1v1h-1m3-1h1v1h-1m3-1h1v1h-1m2-1h1v1h-1m3-1h1v1h-1m72-1h1v1h-1m2-1h1v1h-1m3-1h1v1h-1m2-1h1v1h-1m3-1h1v1h-1m3-1h1v1h-1m2-1h1v1h-1m3-1h1v1h-1m2-1h1v1h-1m3-1h1v1h-1m2-1h1v1h-1m2-1h1v1h-1m-151 0h3v1h-3m18-1h1v1h-1m2-1h1v1h-1m2-1h1v1h-1m14-1h1v1h-1m2-1h1v1h-1m3-1h1v1h-1m3-1h1v1h-1m2-1h1v1h-1m3-1h1v1h-1m3-1h1v1h-1m72-1h1v1h-1m2-1h1v1h-1m3-1h1v1h-1m3-1h1v1h-1m2-1h1v1h-1m3-1h1v1h-1m3-1h1v1h-1m14-1h1v1h-1m2-1h1v1h-1m2-1h1v1h-1m15-1h3v1h-3m-154 0h1v1h-1m2-1h1v1h-1m2-1h1v1h-1m3-1h1v1h-1m2-1h1v1h-1m3-1h1v1h-1m2-1h1v1h-1m8-1h1v1h-1m2-1h1v1h-1m3-1h1v1h-1m3-1h1v1h-1m2-1h1v1h-1m73-1h1v1h-1m3-1h1v1h-1m2-1h1v1h-1m3-1h1v1h-1m3-1h1v1h-1m7-1h1v1h-1m3-1h1v1h-1m2-1h1v1h-1m3-1h1v1h-1m2-1h1v1h-1m2-1h1v1h-1m2-1h1v1h-1m-156 0h3v1h-3m17-1h1v1h-1m8-1h1v1h-1m3-1h1v1h-1m2-1h1v1h-1m3-1h1v1h-1m2-1h1v1h-1m3-1h1v1h-1m5-1h1v1h-1m3-1h1v1h-1m3-1h1v1h-1m2-1h1v1h-1m73-1h1v1h-1m3-1h1v1h-1m2-1h1v1h-1m3-1h1v1h-1m5-1h1v1h-1m3-1h1v1h-1m3-1h1v1h-1m2-1h1v1h-1m3-1h1v1h-1m2-1h1v1h-1m8-1h1v1h-1m15-1h4v1h-4m-156 0h1v1h-1m2-1h1v1h-1m2-1h1v1h-1m2-1h1v1h-1m10-1h1v1h-1m2-1h1v1h-1m3-1h1v1h-1m3-1h1v1h-1m2-1h1v1h-1m3-1h1v1h-1m2-1h1v1h-1m3-1h1v1h-1m73-1h1v1h-1m3-1h1v1h-1m3-1h1v1h-1m2-1h1v1h-1m3-1h1v1h-1m3-1h1v1h-1m2-1h1v1h-1m3-1h1v1h-1m9-1h1v1h-1m3-1h1v1h-1m2-1h1v1h-1m2-1h1v1h-1m-160 0h3v1h-3m24-1h1v1h-1m2-1h1v1h-1m2-1h1v1h-1m3-1h1v1h-1m5-1h1v1h-1m3-1h1v1h-1m2-1h1v1h-1m6-1h1v1h-1m2-1h1v1h-1m3-1h1v1h-1m73-1h1v1h-1m3-1h1v1h-1m3-1h1v1h-1m5-1h1v1h-1m3-1h1v1h-1m2-1h1v1h-1m5-1h1v1h-1m3-1h1v1h-1m2-1h1v1h-1m3-1h1v1h-1m21-1h3v1h-3m-172 0h1v1h-1m14-1h1v1h-1m2-1h1v1h-1m2-1h1v1h-1m7-1h1v1h-1m3-1h1v1h-1m2-1h1v1h-1m6-1h1v1h-1m2-1h1v1h-1m3-1h1v1h-1m3-1h1v1h-1m3-1h1v1h-1m2-1h1v1h-1m73-1h1v1h-1m3-1h1v1h-1m2-1h1v1h-1m3-1h1v1h-1m3-1h1v1h-1m3-1h1v1h-1m5-1h1v1h-1m2-1h1v1h-1m3-1h1v1h-1m7-1h1v1h-1m2-1h1v1h-1m2-1h1v1h-1m15-1h1v1h-1m-174 0h2v1h-2m20-1h1v1h-1m3-1h1v1h-1m2-1h1v1h-1m5-1h1v1h-1m2-1h1v1h-1m3-1h1v1h-1m6-1h1v1h-1m2-1h1v1h-1m3-1h1v1h-1m3-1h1v1h-1m3-1h1v1h-1m72-1h1v1h-1m3-1h1v1h-1m2-1h1v1h-1m3-1h1v1h-1m3-1h1v1h-1m5-1h1v1h-1m3-1h1v1h-1m2-1h1v1h-1m5-1h1v1h-1m3-1h1v1h-1m2-1h1v1h-1m19-1h3v1h-3m-175 0h1v1h-1m2-1h1v1h-1m15-1h1v1h-1m2-1h1v1h-1m7-1h1v1h-1m2-1h1v1h-1m6-1h1v1h-1m2-1h1v1h-1m3-1h1v1h-1m3-1h1v1h-1m2-1h1v1h-1m3-1h1v1h-1m3-1h1v1h-1m3-1h1v1h-1m72-1h1v1h-1m2-1h1v1h-1m3-1h1v1h-1m3-1h1v1h-1m3-1h1v1h-1m3-1h1v1h-1m2-1h1v1h-1m3-1h1v1h-1m5-1h1v1h-1m2-1h1v1h-1m7-1h1v1h-1m2-1h1v1h-1m15-1h1v1h-1m2-1h1v1h-1m-158 0h1v1h-1m2-1h1v1h-1m3-1h1v1h-1m4-1h1v1h-1m3-1h1v1h-1m5-1h1v1h-1m3-1h1v1h-1m6-1h1v1h-1m3-1h1v1h-1m2-1h1v1h-1m3-1h1v1h-1m71-1h1v1h-1m3-1h1v1h-1m3-1h1v1h-1m3-1h1v1h-1m5-1h1v1h-1m3-1h1v1h-1m5-1h1v1h-1m3-1h1v1h-1m5-1h1v1h-1m2-1h1v1h-1m2-1h1v1h-1m-158 0h3v1h-3m17-1h1v1h-1m7-1h1v1h-1m2-1h1v1h-1m5-1h1v1h-1m3-1h1v1h-1m5-1h1v1h-1m3-1h1v1h-1m3-1h1v1h-1m3-1h1v1h-1m3-1h1v1h-1m3-1h1v1h-1m70-1h1v1h-1m3-1h1v1h-1m2-1h1v1h-1m3-1h1v1h-1m3-1h1v1h-1m3-1h1v1h-1m6-1h1v1h-1m2-1h1v1h-1m5-1h1v1h-1m3-1h1v1h-1m6-1h1v1h-1m15-1h3v1h-3m-156 0h1v1h-1m2-1h1v1h-1m5-1h1v1h-1m3-1h1v1h-1m5-1h1v1h-1m3-1h1v1h-1m3-1h1v1h-1m2-1h1v1h-1m3-1h1v1h-1m4-1h1v1h-1m2-1h1v1h-1m3-1h1v1h-1m69-1h1v1h-1m3-1h1v1h-1m3-1h1v1h-1m3-1h1v1h-1m3-1h1v1h-1m3-1h1v1h-1m3-1h1v1h-1m2-1h1v1h-1m6-1h1v1h-1m2-1h1v1h-1m5-1h1v1h-1m2-1h1v1h-1m-158 0h4v1h-4m17-1h1v1h-1m5-1h1v1h-1m2-1h1v1h-1m5-1h1v1h-1m3-1h1v1h-1m5-1h1v1h-1m6-1h1v1h-1m3-1h1v1h-1m3-1h1v1h-1m3-1h1v1h-1m3-1h1v1h-1m68-1h1v1h-1m3-1h1v1h-1m2-1h1v1h-1m3-1h1v1h-1m4-1h1v1h-1m5-1h1v1h-1m6-1h1v1h-1m2-1h1v1h-1m5-1h1v1h-1m3-1h1v1h-1m4-1h1v1h-1m15-1h3v1h-3m-157 0h1v1h-1m2-1h1v1h-1m4-1h1v1h-1m3-1h1v1h-1m5-1h1v1h-1m3-1h1v1h-1m3-1h1v1h-1m2-1h1v1h-1m3-1h1v1h-1m4-1h1v1h-1m3-1h1v1h-1m2-1h1v1h-1m3-1h2v1h-2m66-1h2v1h-2m4-1h1v1h-1m3-1h1v1h-1m3-1h1v1h-1m3-1h1v1h-1m3-1h1v1h-1m3-1h1v1h-1m3-1h1v1h-1m2-1h1v1h-1m6-1h1v1h-1m2-1h1v1h-1m5-1h1v1h-1m2-1h1v1h-1m-159 0h3v1h-3m21-1h1v1h-1m5-1h1v1h-1m3-1h1v1h-1m5-1h1v1h-1m6-1h1v1h-1m3-1h1v1h-1m3-1h1v1h-1m3-1h1v1h-1m3-1h2v1h-2m4-1h1v1h-1m64-1h1v1h-1m3-1h1v1h-1m3-1h1v1h-1m3-1h1v1h-1m3-1h1v1h-1m4-1h1v1h-1m5-1h1v1h-1m6-1h1v1h-1m2-1h1v1h-1m5-1h1v1h-1m19-1h4v1h-4m-156 0h1v1h-1m2-1h1v1h-1m5-1h1v1h-1m5-1h1v1h-1m3-1h1v1h-1m3-1h1v1h-1m2-1h1v1h-1m3-1h1v1h-1m4-1h1v1h-1m3-1h1v1h-1m3-1h1v1h-1m3-1h1v1h-1m4-1h1v1h-1m62-1h1v1h-1m3-1h1v1h-1m3-1h1v1h-1m3-1h1v1h-1m4-1h1v1h-1m3-1h1v1h-1m3-1h1v1h-1m3-1h1v1h-1m3-1h1v1h-1m2-1h1v1h-1m5-1h1v1h-1m5-1h1v1h-1m2-1h1v1h-1m-158 0h3v1h-3m20-1h1v1h-1m2-1h1v1h-1m5-1h1v1h-1m5-1h1v1h-1m6-1h1v1h-1m3-1h1v1h-1m4-1h1v1h-1m3-1h1v1h-1m3-1h1v1h-1m3-1h1v1h-1m4-1h1v1h-1m60-1h1v1h-1m3-1h1v1h-1m3-1h1v1h-1m3-1h1v1h-1m4-1h1v1h-1m3-1h1v1h-1m3-1h1v1h-1m6-1h1v1h-1m6-1h1v1h-1m5-1h1v1h-1m2-1h1v1h-1m17-1h3v1h-3m-173 0h1v1h-1m18-1h1v1h-1m4-1h1v1h-1m2-1h1v1h-1m3-1h1v1h-1m3-1h1v1h-1m3-1h1v1h-1m2-1h1v1h-1m4-1h1v1h-1m3-1h1v1h-1m3-1h1v1h-1m4-1h1v1h-1m3-1h1v1h-1m3-1h1v1h-1m4-1h2v1h-2m57-1h2v1h-2m4-1h1v1h-1m3-1h1v1h-1m4-1h1v1h-1m3-1h1v1h-1m3-1h1v1h-1m4-1h1v1h-1m3-1h1v1h-1m2-1h1v1h-1m4-1h1v1h-1m2-1h1v1h-1m3-1h1v1h-1m2-1h1v1h-1m5-1h1v1h-1m17-1h1v1h-1m-174 0h3v1h-3m19-1h1v1h-1m5-1h1v1h-1m6-1h1v1h-1m5-1h1v1h-1m4-1h1v1h-1m10-1h1v1h-1m3-1h1v1h-1m3-1h1v1h-1m5-1h1v1h-1m54-1h1v1h-1m4-1h1v1h-1m3-1h1v1h-1m4-1h1v1h-1m10-1h1v1h-1m3-1h1v1h-1m6-1h1v1h-1m5-1h1v1h-1m5-1h1v1h-1m17-1h3v1h-3m-171 0h1v1h-1m17-1h1v1h-1m5-1h1v1h-1m5-1h1v1h-1m6-1h1v1h-1m3-1h1v1h-1m6-1h1v1h-1m3-1h1v1h-1m5-1h1v1h-1m3-1h1v1h-1m4-1h1v1h-1m4-1h1v1h-1m51-1h1v1h-1m5-1h1v1h-1m3-1h1v1h-1m3-1h1v1h-1m5-1h1v1h-1m3-1h1v1h-1m6-1h1v1h-1m3-1h1v1h-1m6-1h1v1h-1m5-1h1v1h-1m5-1h1v1h-1m17-1h2v1h-2m-171 0h2v1h-2m16-1h1v1h-1m2-1h1v1h-1m5-1h1v1h-1m3-1h1v1h-1m3-1h1v1h-1m3-1h1v1h-1m6-1h1v1h-1m3-1h1v1h-1m4-1h1v1h-1m4-1h1v1h-1m4-1h1v1h-1m3-1h2v1h-2m4-1h2v1h-2m48-1h2v1h-2m4-1h1v1h-1m2-1h1v1h-1m3-1h1v1h-1m3-1h1v1h-1m5-1h1v1h-1m3-1h1v1h-1m4-1h1v1h-1m5-1h1v1h-1m4-1h1v1h-1m2-1h1v1h-1m3-1h1v1h-1m5-1h1v1h-1m2-1h1v1h-1m16-1h1v1h-1m-170 0h3v1h-3m20-1h1v1h-1m2-1h1v1h-1m3-1h1v1h-1m6-1h1v1h-1m3-1h1v1h-1m2-1h1v1h-1m4-1h1v1h-1m3-1h1v1h-1m4-1h1v1h-1m4-1h1v1h-1m4-1h1v1h-1m4-1h1v1h-1m5-1h2v1h-2m42-1h1v1h-1m2-1h1v1h-1m4-1h1v1h-1m5-1h1v1h-1m3-1h1v1h-1m5-1h1v1h-1m3-1h1v1h-1m4-1h1v1h-1m3-1h1v1h-1m2-1h1v1h-1m4-1h1v1h-1m5-1h1v1h-1m3-1h1v1h-1m2-1h1v1h-1m18-1h4v1h-4m-151 0h1v1h-1m5-1h1v1h-1m5-1h1v1h-1m4-1h1v1h-1m5-1h1v1h-1m4-1h1v1h-1m4-1h1v1h-1m3-1h1v1h-1m5-1h1v1h-1m3-1h1v1h-1m5-1h2v1h-2m6-1h2v1h-2m36-1h1v1h-1m2-1h1v1h-1m4-1h1v1h-1m2-1h1v1h-1m4-1h1v1h-1m4-1h1v1h-1m4-1h1v1h-1m4-1h1v1h-1m3-1h1v1h-1m4-1h1v1h-1m6-1h1v1h-1m3-1h1v1h-1m5-1h1v1h-1m5-1h1v1h-1m-152 0h3v1h-3m20-1h1v1h-1m5-1h1v1h-1m4-1h1v1h-1m5-1h1v1h-1m4-1h1v1h-1m3-1h1v1h-1m4-1h1v1h-1m3-1h1v1h-1m5-1h1v1h-1m4-1h2v1h-2m6-1h1v1h-1m5-1h1v1h-1m2-1h1v1h-1m29-1h1v1h-1m2-1h1v1h-1m6-1h1v1h-1m4-1h1v1h-1m2-1h1v1h-1m3-1h1v1h-1m5-1h1v1h-1m3-1h1v1h-1m4-1h1v1h-1m4-1h1v1h-1m3-1h1v1h-1m6-1h1v1h-1m3-1h1v1h-1m5-1h1v1h-1m18-1h4v1h-4m-149 0h1v1h-1m5-1h1v1h-1m4-1h1v1h-1m5-1h1v1h-1m4-1h1v1h-1m3-1h1v1h-1m4-1h1v1h-1m3-1h1v1h-1m4-1h1v1h-1m5-1h1v1h-1m5-1h1v1h-1m4-1h1v1h-1m2-1h1v1h-1m5-1h1v1h-1m2-1h2v1h-2m3-1h1v1h-1m17-1h1v1h-1m2-1h2v1h-2m3-1h1v1h-1m6-1h2v1h-2m6-1h1v1h-1m5-1h1v1h-1m5-1h1v1h-1m3-1h1v1h-1m4-1h1v1h-1m3-1h1v1h-1m4-1h1v1h-1m3-1h1v1h-1m6-1h1v1h-1m3-1h1v1h-1m5-1h1v1h-1m-150 0h3v1h-3m18-1h1v1h-1m2-1h1v1h-1m4-1h1v1h-1m5-1h1v1h-1m3-1h1v1h-1m4-1h1v1h-1m4-1h1v1h-1m3-1h1v1h-1m4-1h1v1h-1m3-1h1v1h-1m2-1h1v1h-1m3-1h1v1h-1m5-1h1v1h-1m2-1h1v1h-1m4-1h1v1h-1m2-1h2v1h-2m9-1h2v1h-2m3-1h2v1h-2m3-1h2v1h-2m3-1h1v1h-1m2-1h2v1h-2m3-1h1v1h-1m7-1h1v1h-1m2-1h2v1h-2m6-1h2v1h-2m6-1h1v1h-1m3-1h1v1h-1m2-1h1v1h-1m3-1h1v1h-1m4-1h1v1h-1m4-1h1v1h-1m3-1h1v1h-1m4-1h1v1h-1m3-1h1v1h-1m6-1h1v1h-1m3-1h1v1h-1m2-1h1v1h-1m16-1h3v1h-3m-143 0h1v1h-1m5-1h1v1h-1m3-1h1v1h-1m15-1h1v1h-1m3-1h1v1h-1m6-1h1v1h-1m3-1h1v1h-1m2-1h1v1h-1m4-1h1v1h-1m2-1h1v1h-1m6-1h1v1h-1m2-1h2v1h-2m20-1h1v1h-1m2-1h2v1h-2m7-1h1v1h-1m2-1h1v1h-1m5-1h2v1h-2m5-1h1v1h-1m5-1h1v1h-1m3-1h1v1h-1m15-1h1v1h-1m3-1h1v1h-1m6-1h1v1h-1m-145 0h3v1h-3m19-1h1v1h-1m5-1h1v1h-1m3-1h1v1h-1m6-1h1v1h-1m4-1h1v1h-1m3-1h1v1h-1m6-1h1v1h-1m3-1h1v1h-1m5-1h1v1h-1m5-1h1v1h-1m2-1h1v1h-1m5-1h2v1h-2m9-1h1v1h-1m2-1h2v1h-2m3-1h1v1h-1m2-1h1v1h-1m2-1h2v1h-2m3-1h1v1h-1m2-1h2v1h-2m9-1h1v1h-1m2-1h1v1h-1m4-1h1v1h-1m2-1h1v1h-1m5-1h1v1h-1m5-1h1v1h-1m4-1h1v1h-1m5-1h1v1h-1m4-1h1v1h-1m3-1h1v1h-1m6-1h1v1h-1m3-1h1v1h-1m5-1h1v1h-1m17-1h3v1h-3m-141 0h1v1h-1m4-1h1v1h-1m5-1h1v1h-1m4-1h1v1h-1m3-1h1v1h-1m4-1h1v1h-1m5-1h1v1h-1m4-1h1v1h-1m5-1h1v1h-1m7-1h1v1h-1m6-1h1v1h-1m2-1h1v1h-1m2-1h1v1h-1m2-1h1v1h-1m16-1h1v1h-1m2-1h2v1h-2m3-1h1v1h-1m6-1h1v1h-1m7-1h1v1h-1m5-1h1v1h-1m4-1h1v1h-1m5-1h1v1h-1m4-1h1v1h-1m4-1h1v1h-1m3-1h1v1h-1m6-1h1v1h-1m3-1h1v1h-1m-141 0h3v1h-3m18-1h1v1h-1m4-1h1v1h-1m5-1h1v1h-1m4-1h1v1h-1m3-1h1v1h-1m4-1h1v1h-1m4-1h1v1h-1m5-1h1v1h-1m4-1h1v1h-1m2-1h1v1h-1m3-1h1v1h-1m2-1h1v1h-1m5-1h2v1h-2m3-1h1v1h-1m8-1h1v1h-1m2-1h1v1h-1m2-1h1v1h-1m2-1h1v1h-1m2-1h2v1h-2m3-1h1v1h-1m2-1h1v1h-1m8-1h1v1h-1m2-1h1v1h-1m2-1h1v1h-1m5-1h2v1h-2m5-1h1v1h-1m2-1h1v1h-1m3-1h1v1h-1m6-1h1v1h-1m3-1h1v1h-1m4-1h1v1h-1m4-1h1v1h-1m3-1h1v1h-1m6-1h1v1h-1m3-1h1v1h-1m16-1h4v1h-4m-139 0h1v1h-1m5-1h1v1h-1m4-1h1v1h-1m3-1h1v1h-1m4-1h1v1h-1m4-1h1v1h-1m4-1h1v1h-1m5-1h1v1h-1m6-1h1v1h-1m5-1h1v1h-1m2-1h1v1h-1m6-1h1v1h-1m2-1h1v1h-1m2-1h1v1h-1m2-1h1v1h-1m13-1h1v1h-1m2-1h1v1h-1m2-1h1v1h-1m2-1h1v1h-1m7-1h1v1h-1m2-1h1v1h-1m5-1h1v1h-1m5-1h1v1h-1m6-1h1v1h-1m3-1h1v1h-1m4-1h1v1h-1m4-1h1v1h-1m4-1h1v1h-1m3-1h1v1h-1m5-1h1v1h-1m-139 0h3v1h-3m21-1h1v1h-1m4-1h1v1h-1m15-1h1v1h-1m4-1h1v1h-1m5-1h1v1h-1m6-1h2v1h-2m7-1h2v1h-2m12-1h1v1h-1m2-1h1v1h-1m2-1h1v1h-1m2-1h1v1h-1m2-1h1v1h-1m2-1h1v1h-1m10-1h1v1h-1m2-1h1v1h-1m5-1h1v1h-1m2-1h1v1h-1m5-1h1v1h-1m6-1h1v1h-1m3-1h1v1h-1m15-1h1v1h-1m4-1h1v1h-1m20-1h3v1h-3m-136 0h1v1h-1m3-1h1v1h-1m6-1h1v1h-1m3-1h1v1h-1m4-1h1v1h-1m6-1h1v1h-1m4-1h1v1h-1m5-1h1v1h-1m2-1h1v1h-1m5-1h1v1h-1m3-1h1v1h-1m4-1h1v1h-1m2-1h1v1h-1m2-1h1v1h-1m3-1h1v1h-1m2-1h1v1h-1m10-1h1v1h-1m2-1h1v1h-1m2-1h1v1h-1m2-1h1v1h-1m2-1h1v1h-1m5-1h1v1h-1m2-1h1v1h-1m5-1h1v1h-1m2-1h1v1h-1m6-1h1v1h-1m3-1h1v1h-1m6-1h1v1h-1m4-1h1v1h-1m4-1h1v1h-1m5-1h1v1h-1m4-1h1v1h-1m-136 0h2v1h-2m20-1h1v1h-1m5-1h1v1h-1m4-1h1v1h-1m3-1h1v1h-1m4-1h1v1h-1m6-1h1v1h-1m4-1h1v1h-1m2-1h1v1h-1m5-1h1v1h-1m8-1h1v1h-1m2-1h1v1h-1m11-1h1v1h-1m2-1h1v1h-1m2-1h1v1h-1m2-1h1v1h-1m11-1h1v1h-1m2-1h1v1h-1m7-1h1v1h-1m6-1h1v1h-1m2-1h1v1h-1m3-1h1v1h-1m6-1h1v1h-1m4-1h1v1h-1m4-1h1v1h-1m3-1h1v1h-1m6-1h1v1h-1m18-1h3v1h-3m-129 0h1v1h-1m4-1h1v1h-1m4-1h1v1h-1m4-1h1v1h-1m3-1h1v1h-1m6-1h1v1h-1m6-1h1v1h-1m5-1h1v1h-1m3-1h1v1h-1m7-1h1v1h-1m2-1h1v1h-1m2-1h1v1h-1m2-1h1v1h-1m2-1h1v1h-1m3-1h1v1h-1m2-1h1v1h-1m2-1h1v1h-1m2-1h1v1h-1m2-1h1v1h-1m2-1h1v1h-1m3-1h1v1h-1m7-1h1v1h-1m2-1h1v1h-1m5-1h1v1h-1m6-1h1v1h-1m6-1h1v1h-1m4-1h1v1h-1m4-1h1v1h-1m3-1h1v1h-1m4-1h1v1h-1m-128 0h2v1h-2m20-1h1v1h-1m3-1h1v1h-1m4-1h1v1h-1m4-1h1v1h-1m4-1h1v1h-1m4-1h1v1h-1m5-1h1v1h-1m6-1h1v1h-1m2-1h1v1h-1m6-1h1v1h-1m2-1h1v1h-1m2-1h1v1h-1m25-1h1v1h-1m2-1h1v1h-1m3-1h1v1h-1m5-1h1v1h-1m2-1h1v1h-1m6-1h1v1h-1m6-1h1v1h-1m3-1h1v1h-1m4-1h1v1h-1m4-1h1v1h-1m4-1h1v1h-1m4-1h1v1h-1m18-1h3v1h-3m-126 0h1v1h-1m15-1h1v1h-1m4-1h1v1h-1m6-1h1v1h-1m2-1h1v1h-1m6-1h1v1h-1m2-1h1v1h-1m7-1h1v1h-1m3-1h1v1h-1m2-1h1v1h-1m2-1h1v1h-1m3-1h1v1h-1m2-1h1v1h-1m2-1h1v1h-1m2-1h1v1h-1m3-1h1v1h-1m2-1h1v1h-1m7-1h1v1h-1m3-1h1v1h-1m5-1h1v1h-1m3-1h1v1h-1m6-1h1v1h-1m3-1h1v1h-1m15-1h1v1h-1m-125 0h3v1h-3m24-1h1v1h-1m4-1h1v1h-1m3-1h1v1h-1m6-1h1v1h-1m4-1h1v1h-1m2-1h1v1h-1m6-1h1v1h-1m8-1h1v1h-1m3-1h1v1h-1m26-1h1v1h-1m2-1h1v1h-1m8-1h1v1h-1m6-1h1v1h-1m2-1h1v1h-1m4-1h1v1h-1m6-1h1v1h-1m4-1h1v1h-1m4-1h1v1h-1m22-1h3v1h-3m-141 0h2v1h-2m19-1h1v1h-1m4-1h1v1h-1m4-1h1v1h-1m4-1h1v1h-1m6-1h1v1h-1m6-1h1v1h-1m6-1h1v1h-1m2-1h1v1h-1m8-1h1v1h-1m2-1h1v1h-1m3-1h1v1h-1m2-1h1v1h-1m2-1h1v1h-1m3-1h1v1h-1m2-1h1v1h-1m3-1h1v1h-1m2-1h1v1h-1m2-1h1v1h-1m8-1h1v1h-1m3-1h1v1h-1m5-1h1v1h-1m6-1h1v1h-1m7-1h1v1h-1m3-1h1v1h-1m4-1h1v1h-1m4-1h1v1h-1m19-1h1v1h-1m-140 0h3v1h-3m23-1h1v1h-1m4-1h1v1h-1m3-1h1v1h-1m4-1h1v1h-1m6-1h1v1h-1m6-1h1v1h-1m3-1h1v1h-1m6-1h1v1h-1m2-1h1v1h-1m2-1h1v1h-1m23-1h1v1h-1m2-1h1v1h-1m3-1h1v1h-1m6-1h1v1h-1m2-1h1v1h-1m6-1h1v1h-1m6-1h1v1h-1m4-1h1v1h-1m4-1h1v1h-1m4-1h1v1h-1m20-1h3v1h-3m-135 0h1v1h-1m21-1h1v1h-1m4-1h1v1h-1m4-1h1v1h-1m4-1h1v1h-1m2-1h1v1h-1m4-1h1v1h-1m2-1h1v1h-1m6-1h1v1h-1m3-1h1v1h-1m8-1h1v1h-1m2-1h1v1h-1m3-1h1v1h-1m2-1h1v1h-1m3-1h1v1h-1m2-1h1v1h-1m3-1h1v1h-1m2-1h1v1h-1m9-1h1v1h-1m2-1h1v1h-1m6-1h1v1h-1m3-1h1v1h-1m3-1h1v1h-1m3-1h1v1h-1m3-1h1v1h-1m4-1h1v1h-1m4-1h1v1h-1m21-1h2v1h-2m-134 0h1v1h-1m29-1h1v1h-1m3-1h1v1h-1m7-1h1v1h-1m6-1h1v1h-1m8-1h1v1h-1m3-1h1v1h-1m3-1h1v1h-1m18-1h1v1h-1m2-1h1v1h-1m3-1h1v1h-1m8-1h1v1h-1m7-1h1v1h-1m6-1h1v1h-1m4-1h1v1h-1m28-1h2v1h-2m-132 0h2v1h-2m22-1h1v1h-1m6-1h1v1h-1m4-1h1v1h-1m6-1h1v1h-1m6-1h1v1h-1m3-1h1v1h-1m3-1h1v1h-1m8-1h1v1h-1m3-1h1v1h-1m2-1h1v1h-1m3-1h1v1h-1m3-1h1v1h-1m2-1h1v1h-1m9-1h1v1h-1m2-1h1v1h-1m3-1h1v1h-1m6-1h1v1h-1m6-1h1v1h-1m4-1h1v1h-1m6-1h1v1h-1m21-1h2v1h-2m-128 0h1v1h-1m25-1h1v1h-1m6-1h1v1h-1m4-1h1v1h-1m6-1h1v1h-1m3-1h1v1h-1m8-1h1v1h-1m3-1h1v1h-1m3-1h1v1h-1m3-1h1v1h-1m8-1h1v1h-1m2-1h1v1h-1m3-1h1v1h-1m3-1h1v1h-1m9-1h1v1h-1m2-1h1v1h-1m7-1h1v1h-1m3-1h1v1h-1m7-1h1v1h-1m24-1h1v1h-1m-126 0h2v1h-2m24-1h1v1h-1m7-1h1v1h-1m3-1h1v1h-1m3-1h1v1h-1m6-1h1v1h-1m3-1h1v1h-1m14-1h1v1h-1m3-1h1v1h-1m14-1h1v1h-1m3-1h1v1h-1m6-1h1v1h-1m3-1h1v1h-1m4-1h1v1h-1m6-1h1v1h-1m23-1h3v1h-3m-122 0h1v1h-1m3-1h2v1h-2m24-1h1v1h-1m7-1h1v1h-1m6-1h1v1h-1m3-1h1v1h-1m6-1h1v1h-1m3-1h1v1h-1m3-1h1v1h-1m2-1h1v1h-1m3-1h1v1h-1m3-1h1v1h-1m3-1h1v1h-1m3-1h1v1h-1m3-1h1v1h-1m2-1h1v1h-1m6-1h1v1h-1m3-1h1v1h-1m7-1h1v1h-1m6-1h1v1h-1m23-1h2v1h-2m-117 0h2v1h-2m28-1h1v1h-1m3-1h1v1h-1m3-1h1v1h-1m3-1h1v1h-1m7-1h1v1h-1m3-1h1v1h-1m2-1h1v1h-1m21-1h1v1h-1m3-1h1v1h-1m3-1h1v1h-1m6-1h1v1h-1m3-1h1v1h-1m4-1h1v1h-1m2-1h1v1h-1m27-1h2v1h-2m-114 0h2v1h-2m30-1h1v1h-1m6-1h1v1h-1m3-1h1v1h-1m9-1h1v1h-1m3-1h1v1h-1m3-1h1v1h-1m3-1h1v1h-1m3-1h1v1h-1m3-1h1v1h-1m9-1h1v1h-1m3-1h1v1h-1m7-1h1v1h-1m28-1h2v1h-2m-110 0h1v1h-1m4-1h1v1h-1m29-1h1v1h-1m3-1h1v1h-1m6-1h1v1h-1m3-1h1v1h-1m3-1h1v1h-1m3-1h1v1h-1m3-1h1v1h-1m3-1h1v1h-1m3-1h1v1h-1m3-1h1v1h-1m3-1h1v1h-1m3-1h1v1h-1m7-1h1v1h-1m3-1h1v1h-1m28-1h2v1h-2m4-1h1v1h-1m-108 0h1v1h-1m36-1h1v1h-1m3-1h1v1h-1m28-1h1v1h-1m3-1h1v1h-1m35-1h1v1h-1m-105 0h1v1h-1m3-1h2v1h-2m39-1h1v1h-1m3-1h1v1h-1m3-1h1v1h-1m3-1h1v1h-1m3-1h1v1h-1m3-1h1v1h-1m3-1h1v1h-1m3-1h1v1h-1m38-1h2v1h-2m-94 0h2v1h-2m91-1h1v1h-1m4-1h1v1h-1m-96 0h2v1h-2m4-1h2v1h-2m84-1h2v1h-2m5-1h1v1h-1m-89 0h1v1h-1m4-1h1v1h-1m77-1h1v1h-1m4-1h2v1h-2m-82 0h2v1h-2m4-1h2v1h-2m70-1h2v1h-2m5-1h1v1h-1m-75 0h1v1h-1m4-1h1v1h-1m63-1h1v1h-1m4-1h1v1h-1m-67 0h1v1h-1m3-1h2v1h-2m4-1h2v1h-2m49-1h1v1h-1m3-1h2v1h-2m4-1h2v1h-2m-56 0h2v1h-2m4-1h1v1h-1m41-1h1v1h-1m4-1h1v1h-1m-45 0h1v1h-1m4-1h1v1h-1m3-1h2v1h-2m4-1h1v1h-1m4-1h1v1h-1m4-1h1v1h-1m4-1h1v1h-1m3-1h1v1h-1m4-1h1v1h-1m4-1h1v1h-1m3-1h2v1h-2m4-1h2v1h-2m4-1h1v1h-1m-38 0h1v1h-1m4-1h1v1h-1m4-1h1v1h-1m4-1h1v1h-1m4-1h1v1h-1m3-1h1v1h-1m4-1h1v1h-1m4-1h1v1h-1"/><path class="pl" fill="#febe3c" d="M369 138h1v1h-1m41-1h1v1h-1m-43 0h2v1h-2m3-1h1v1h-1m40-1h3v1h-3m-44 0h1v1h-1m3-1h1v1h-1m2-1h1v1h-1m40-1h1v1h-1m3-1h1v1h-1m-50 0h2v1h-2m3-1h4v1h-4m5-1h1v1h-1m35-1h1v1h-1m2-1h2v1h-2m3-1h2v1h-2m3-1h2v1h-2m-52 0h1v1h-1m2-1h4v1h-4m5-1h2v1h-2m3-1h1v1h-1m33-1h4v1h-4m5-1h2v1h-2m3-1h2v1h-2m3-1h1v1h-1m-56 0h2v1h-2m3-1h1v1h-1m3-1h3v1h-3m4-1h5v1h-5m34-1h4v1h-4m5-1h2v1h-2m3-1h1v1h-1m3-1h1v1h-1m2-1h2v1h-2m-58 0h1v1h-1m3-1h1v1h-1m2-1h4v1h-4m5-1h3v1h-3m4-1h3v1h-3m29-1h8v1h-8m9-1h1v1h-1m2-1h1v1h-1m2-1h1v1h-1m3-1h1v1h-1m-60 0h1v1h-1m3-1h1v1h-1m2-1h1v1h-1m2-1h1v1h-1m2-1h4v1h-4m5-1h5v1h-5m29-1h10v1h-10m11-1h1v1h-1m2-1h4v1h-4m5-1h1v1h-1m-61 0h1v1h-1m2-1h1v1h-1m2-1h1v1h-1m2-1h13v1h-13m38-1h12v1h-12m13-1h1v1h-1m2-1h1v1h-1m3-1h1v1h-1m-63 0h1v1h-1m2-1h1v1h-1m3-1h1v1h-1m2-1h1v1h-1m2-1h1v1h-1m2-1h1v1h-1m2-1h6v1h-6m32-1h10v1h-10m11-1h1v1h-1m3-1h1v1h-1m2-1h1v1h-1m2-1h2v1h-2m-64 0h1v1h-1m3-1h1v1h-1m2-1h1v1h-1m2-1h5v1h-5m6-1h1v1h-1m2-1h5v1h-5m31-1h2v1h-2m3-1h2v1h-2m3-1h1v1h-1m2-1h1v1h-1m2-1h1v1h-1m2-1h1v1h-1m2-1h1v1h-1m3-1h1v1h-1m2-1h1v1h-1m-65 0h1v1h-1m2-1h1v1h-1m3-1h1v1h-1m2-1h1v1h-1m2-1h1v1h-1m2-1h1v1h-1m2-1h1v1h-1m2-1h2v1h-2m3-1h2v1h-2m28-1h1v1h-1m2-1h2v1h-2m3-1h4v1h-4m5-1h4v1h-4m5-1h1v1h-1m2-1h1v1h-1m3-1h1v1h-1m-67 0h1v1h-1m3-1h1v1h-1m2-1h1v1h-1m2-1h1v1h-1m3-1h1v1h-1m2-1h1v1h-1m2-1h2v1h-2m3-1h1v1h-1m2-1h2v1h-2m28-1h1v1h-1m2-1h2v1h-2m3-1h1v1h-1m2-1h1v1h-1m2-1h1v1h-1m2-1h1v1h-1m2-1h1v1h-1m2-1h1v1h-1m2-1h1v1h-1m3-1h1v1h-1m-67 0h1v1h-1m2-1h2v1h-2m3-1h1v1h-1m2-1h1v1h-1m2-1h1v1h-1m3-1h1v1h-1m2-1h2v1h-2m3-1h1v1h-1m2-1h3v1h-3m28-1h2v1h-2m3-1h1v1h-1m2-1h1v1h-1m2-1h1v1h-1m2-1h1v1h-1m2-1h1v1h-1m2-1h1v1h-1m2-1h1v1h-1m3-1h1v1h-1m2-1h1v1h-1m-67 0h1v1h-1m2-1h1v1h-1m3-1h1v1h-1m2-1h1v1h-1m2-1h1v1h-1m3-1h1v1h-1m2-1h1v1h-1m2-1h7v1h-7m30-1h1v1h-1m2-1h1v1h-1m2-1h1v1h-1m2-1h1v1h-1m2-1h1v1h-1m2-1h1v1h-1m2-1h1v1h-1m2-1h1v1h-1m3-1h1v1h-1m2-1h1v1h-1m2-1h2v1h-2m-67 0h1v1h-1m2-1h1v1h-1m3-1h1v1h-1m2-1h1v1h-1m2-1h1v1h-1m3-1h1v1h-1m2-1h1v1h-1m2-1h1v1h-1m2-1h1v1h-1m2-1h1v1h-1m2-1h1v1h-1m23-1h10v1h-10m11-1h1v1h-1m2-1h1v1h-1m2-1h1v1h-1m3-1h1v1h-1m2-1h1v1h-1m3-1h1v1h-1m-68 0h1v1h-1m2-1h1v1h-1m3-1h1v1h-1m2-1h1v1h-1m2-1h2v1h-2m3-1h1v1h-1m2-1h1v1h-1m2-1h4v1h-4m5-1h1v1h-1m2-1h2v1h-2m20-1h7v1h-7m8-1h1v1h-1m2-1h1v1h-1m2-1h2v1h-2m3-1h1v1h-1m2-1h1v1h-1m3-1h1v1h-1m2-1h1v1h-1m3-1h1v1h-1m-68 0h1v1h-1m2-1h1v1h-1m3-1h1v1h-1m2-1h2v1h-2m3-1h1v1h-1m2-1h1v1h-1m3-1h1v1h-1m2-1h1v1h-1m2-1h2v1h-2m3-1h2v1h-2m3-1h2v1h-2m16-1h3v1h-3m4-1h4v1h-4m5-1h1v1h-1m2-1h2v1h-2m3-1h1v1h-1m2-1h2v1h-2m3-1h1v1h-1m2-1h1v1h-1m3-1h1v1h-1m3-1h1v1h-1m-68 0h1v1h-1m3-1h1v1h-1m2-1h1v1h-1m3-1h1v1h-1m2-1h1v1h-1m3-1h1v1h-1m2-1h2v1h-2m3-1h1v1h-1m2-1h2v1h-2m3-1h3v1h-3m4-1h4v1h-4m10-1h5v1h-5m6-1h2v1h-2m3-1h2v1h-2m3-1h2v1h-2m3-1h1v1h-1m2-1h2v1h-2m3-1h1v1h-1m2-1h1v1h-1m3-1h1v1h-1m3-1h1v1h-1m2-1h1v1h-1m-67 0h1v1h-1m3-1h1v1h-1m3-1h1v1h-1m2-1h2v1h-2m3-1h1v1h-1m2-1h2v1h-2m3-1h2v1h-2m3-1h2v1h-2m3-1h2v1h-2m3-1h4v1h-4m5-1h8v1h-8m10-1h3v1h-3m4-1h2v1h-2m4-1h2v1h-2m3-1h1v1h-1m2-1h2v1h-2m3-1h2v1h-2m3-1h1v1h-1m3-1h1v1h-1m2-1h1v1h-1m3-1h1v1h-1m-66 0h1v1h-1m2-1h2v1h-2m3-1h1v1h-1m3-1h1v1h-1m2-1h2v1h-2m3-1h2v1h-2m3-1h2v1h-2m3-1h2v1h-2m4-1h3v1h-3m4-1h12v1h-12m14-1h3v1h-3m4-1h2v1h-2m3-1h2v1h-2m3-1h2v1h-2m3-1h2v1h-2m3-1h1v1h-1m3-1h1v1h-1m3-1h1v1h-1m3-1h1v1h-1m-66 0h1v1h-1m3-1h1v1h-1m3-1h1v1h-1m2-1h2v1h-2m3-1h2v1h-2m3-1h2v1h-2m4-1h1v1h-1m3-1h2v1h-2m4-1h6v1h-6m10-1h6v1h-6m8-1h2v1h-2m4-1h2v1h-2m3-1h2v1h-2m3-1h2v1h-2m3-1h2v1h-2m4-1h1v1h-1m2-1h1v1h-1m3-1h1v1h-1m-64 0h1v1h-1m2-1h1v1h-1m3-1h2v1h-2m3-1h2v1h-2m4-1h1v1h-1m3-1h1v1h-1m3-1h3v1h-3m4-1h4v1h-4m8-1h4v1h-4m8-1h4v1h-4m6-1h2v1h-2m4-1h2v1h-2m3-1h2v1h-2m3-1h2v1h-2m4-1h1v1h-1m3-1h1v1h-1m3-1h1v1h-1m-64 0h1v1h-1m3-1h2v1h-2m3-1h1v1h-1m4-1h1v1h-1m3-1h2v1h-2m3-1h3v1h-3m4-1h4v1h-4m6-1h13v1h-13m15-1h3v1h-3m5-1h2v1h-2m4-1h1v1h-1m4-1h1v1h-1m3-1h1v1h-1m3-1h1v1h-1m3-1h1v1h-1m-62 0h1v1h-1m3-1h1v1h-1m3-1h2v1h-2m3-1h2v1h-2m5-1h1v1h-1m3-1h3v1h-3m6-1h5v1h-5m12-1h5v1h-5m7-1h3v1h-3m5-1h2v1h-2m4-1h2v1h-2m4-1h1v1h-1m3-1h1v1h-1m3-1h2v1h-2m-60 0h1v1h-1m3-1h2v1h-2m4-1h1v1h-1m3-1h2v1h-2m4-1h2v1h-2m5-1h4v1h-4m8-1h7v1h-7m11-1h3v1h-3m6-1h2v1h-2m4-1h2v1h-2m4-1h2v1h-2m4-1h1v1h-1m3-1h1v1h-1m-58 0h1v1h-1m4-1h1v1h-1m3-1h1v1h-1m4-1h2v1h-2m4-1h3v1h-3m7-1h15v1h-15m18-1h3v1h-3m6-1h1v1h-1m4-1h1v1h-1m4-1h1v1h-1m4-1h1v1h-1m-57 0h2v1h-2m4-1h2v1h-2m3-1h2v1h-2m5-1h3v1h-3m5-1h5v1h-5m17-1h5v1h-5m8-1h3v1h-3m5-1h2v1h-2m4-1h2v1h-2m4-1h2v1h-2m-53 0h1v1h-1m4-1h1v1h-1m3-1h2v1h-2m6-1h3v1h-3m7-1h12v1h-12m16-1h2v1h-2m3-1h1v1h-1m4-1h2v1h-2m5-1h1v1h-1m4-1h1v1h-1m-51 0h2v1h-2m4-1h2v1h-2m4-1h1v1h-1m2-1h2v1h-2m5-1h4v1h-4m16-1h4v1h-4m8-1h3v1h-3m6-1h2v1h-2m4-1h2v1h-2m-47 0h1v1h-1m4-1h2v1h-2m6-1h3v1h-3m7-1h1v1h-1m2-1h6v1h-6m7-1h3v1h-3m7-1h2v1h-2m3-1h1v1h-1m4-1h2v1h-2m5-1h1v1h-1m-44 0h2v1h-2m5-1h2v1h-2m3-1h1v1h-1m4-1h1v1h-1m2-1h4v1h-4m5-1h1v1h-1m6-1h3v1h-3m4-1h3v1h-3m7-1h3v1h-3m6-1h2v1h-2m-39 0h2v1h-2m6-1h2v1h-2m3-1h1v1h-1m8-1h3v1h-3m4-1h1v1h-1m8-1h3v1h-3m7-1h1v1h-1m2-1h1v1h-1m-36 0h1v1h-1m2-1h1v1h-1m6-1h2v1h-2m3-1h3v1h-3m4-1h3v1h-3m4-1h3v1h-3m4-1h3v1h-3m9-1h2v1h-2m-29 0h2v1h-2m3-1h2v1h-2m20-1h1v1h-1m2-1h3v1h-3m-19 0h2v1h-2m3-1h3v1h-3m4-1h2v1h-2m3-1h2v1h-2m3-1h2v1h-2m3-1h1v1h-1"/><path class="pl" fill="#fec934" d="M378 145h1v1h-1m0 0h1v1h-1m23-1h2v1h-2m-24 0h3v1h-3m23-1h3v1h-3m-23 0h4v1h-4m22-1h4v1h-4m-22 0h6v1h-6m20-1h6v1h-6m-20 0h10v1h-10m17-1h9v1h-9m-16 0h24v1h-24m1 0h23v1h-23m1 0h21v1h-21m1 0h18v1h-18m3 0h13v1h-13"/><path class="pl" fill="#fad62d" d="M379 146h2v1h-2m21-1h1v1h-1m-20 0h4v1h-4m16-1h4v1h-4m-15 0h18v1h-18m2 0h14v1h-14m4 0h7v1h-7"/><path class="pl" fill="#f5e327" d="M380 125h1v1h-1m3-1h1v1h-1m2-1h1v1h-1m2-1h1v1h-1m3-1h1v1h-1m6-1h1v1h-1m2-1h1v1h-1m-21 0h1v1h-1m3-1h1v1h-1m3-1h1v1h-1m2-1h1v1h-1m2-1h1v1h-1m2-1h1v1h-1m7-1h1v1h-1m2-1h1v1h-1m3-1h1v1h-1m-21 0h1v1h-1m28 12h1v1h-1m-34 1h1v1h-1m2 0h1v1h-1m28-1h1v1h-1m-27 0h2v1h-2m24-1h2v1h-2m-22 0h4v1h-4m19-1h4v1h-4m-17 0h19v1h-19m3 0h12v1h-12"/><path class="pl" fill="#f6ef20" d="M408 121h1v1h-1m1 0h1v1h-1m1 0h1v1h-1m-42 1h1v1h-1m43-1h1v1h-1m-43 0h1v1h-1m44-1h1v1h-1m-45 0h1v1h-1m45-1h1v1h-1m-45 0h1v1h-1m45-1h1v1h-1m-45 0h1v1h-1m45-1h1v1h-1m-45 0h2v1h-2m45-1h1v1h-1m-45 0h2v1h-2m44-1h2v1h-2m-44 0h3v1h-3m44-1h2v1h-2m-44 0h3v1h-3m43-1h3v1h-3m-42 0h3v1h-3m41-1h4v1h-4m-41 0h4v1h-4m40-1h4v1h-4m-39 0h5v1h-5m37-1h6v1h-6m-37 0h6v1h-6m36-1h6v1h-6m-35 0h8v1h-8m33-1h7v1h-7m-32 0h10v1h-10m29-1h10v1h-10m-28 0h13v1h-13m23-1h13v1h-13m-22 0h34v1h-34m2 0h31v1h-31m2 0h27v1h-27m2 0h22v1h-22m4 0h15v1h-15"/><path class="pl" fill="#f9fb15" d="M383 116h15v1h-15m-4 0h22v1h-22m-2 0h27v1h-27m-2 0h31v1h-31m-2 0h34v1h-34m-1 0h36v1h-36m-1 0h38v1h-38m-1 0h40v1h-40m-1 0h42v1h-42m0 0h11v1h-11m12-1h2v1h-2m3-1h1v1h-1m2-1h1v1h-1m2-1h2v1h-2m3-1h5v1h-5m6-1h1v1h-1m2-1h12v1h-12m-30 0h8v1h-8m9-1h2v1h-2m3-1h2v1h-2m3-1h1v1h-1m2-1h1v1h-1m2-1h1v1h-1m2-1h6v1h-6m7-1h1v1h-1m2-1h2v1h-2m3-1h10v1h-10m-34 0h12v1h-12m13-1h31v1h-31m-13 0h44v1h-44m0 0h44v1h-44m1 0h43v1h-43m0 0h42v1h-42m1 0h41v1h-41m0 0h40v1h-40m1 0h38v1h-38m1 0h36v1h-36m2 0h32v1h-32m1 0h30v1h-30m3 0h25v1h-25m3 0h19v1h-19m4 0h10v1h-10"/></g></svg>
<svg class="r" style="left:262.00px;top:345.00px" width="80" height="60" viewBox="0 0 80 60"><g stroke-width="1" fill="none"><path d="M37.3 49L37.3 18.5" stroke="#27609f"/><path d="M37.3 49L10.3 33.5" stroke="#2a702a"/><path d="M37.3 49L64 33.5" stroke="#93302a"/></g><g font-family="Liberation Sans" font-size="10.5"><text x="33.8" y="14" fill="#2f7fe0">Z</text><text x="6.6" y="29.6" fill="#1f9a1f">Y</text><text x="60.6" y="29.6" fill="#e2402c">X</text></g></svg>
<svg class="r" style="left:786.00px;top:137.00px" width="76" height="20" viewBox="0 0 76 20"><g transform="translate(-786 -137)"><g fill="none" stroke="#b4b4b4" stroke-width="1.1" stroke-linecap="round" stroke-linejoin="round"><path d="M800.6 140.6A7.1 7.1 0 1 0 803.6 145.4"/><path d="M799.4 142.2L801.8 139.6M801.8 139.6L799.2 139.5M801.8 139.6L801.9 142"/><path d="M796.4 143.5L799.3 145.2V148.6L796.4 150.3L793.5 148.6V145.2Z"/><path d="M796.4 146.9V150.3M796.4 146.9L793.5 145.2M796.4 146.9L799.3 145.2" stroke-width=".9"/><path d="M811.2 147.4V142.2Q811.2 141 812.35 141Q813.5 141 813.5 142.2V140.6Q813.5 139.4 814.7 139.4Q815.9 139.4 815.9 140.6V141.4Q815.9 140.3 817.1 140.3Q818.3 140.3 818.3 141.4V143.6Q818.3 142.6 819.5 142.6Q820.7 142.6 820.7 143.8V148.6Q820.7 151.6 819.2 153.8H812.4Q810.4 151 807.6 147.2Q807.2 146 808.4 145.7Q809.8 145.6 811.2 148.4"/><path d="M813.5 142.2V146.2M815.9 141.4V146.2M818.3 143.4V146.4" stroke-width=".9"/><circle cx="831.3" cy="145.6" r="5.6"/><path d="M835.4 149.8L839.6 153.6" stroke-width="1.7"/><path d="M843.4 147L850.9 140.1L858.4 147"/><path d="M845.6 145.4V153.8H848.9V148.9H852.9V153.8H856.6V145.4"/><path d="M855.2 141.2V142.4" stroke-width="1"/></g></g></svg>
</body></html>
